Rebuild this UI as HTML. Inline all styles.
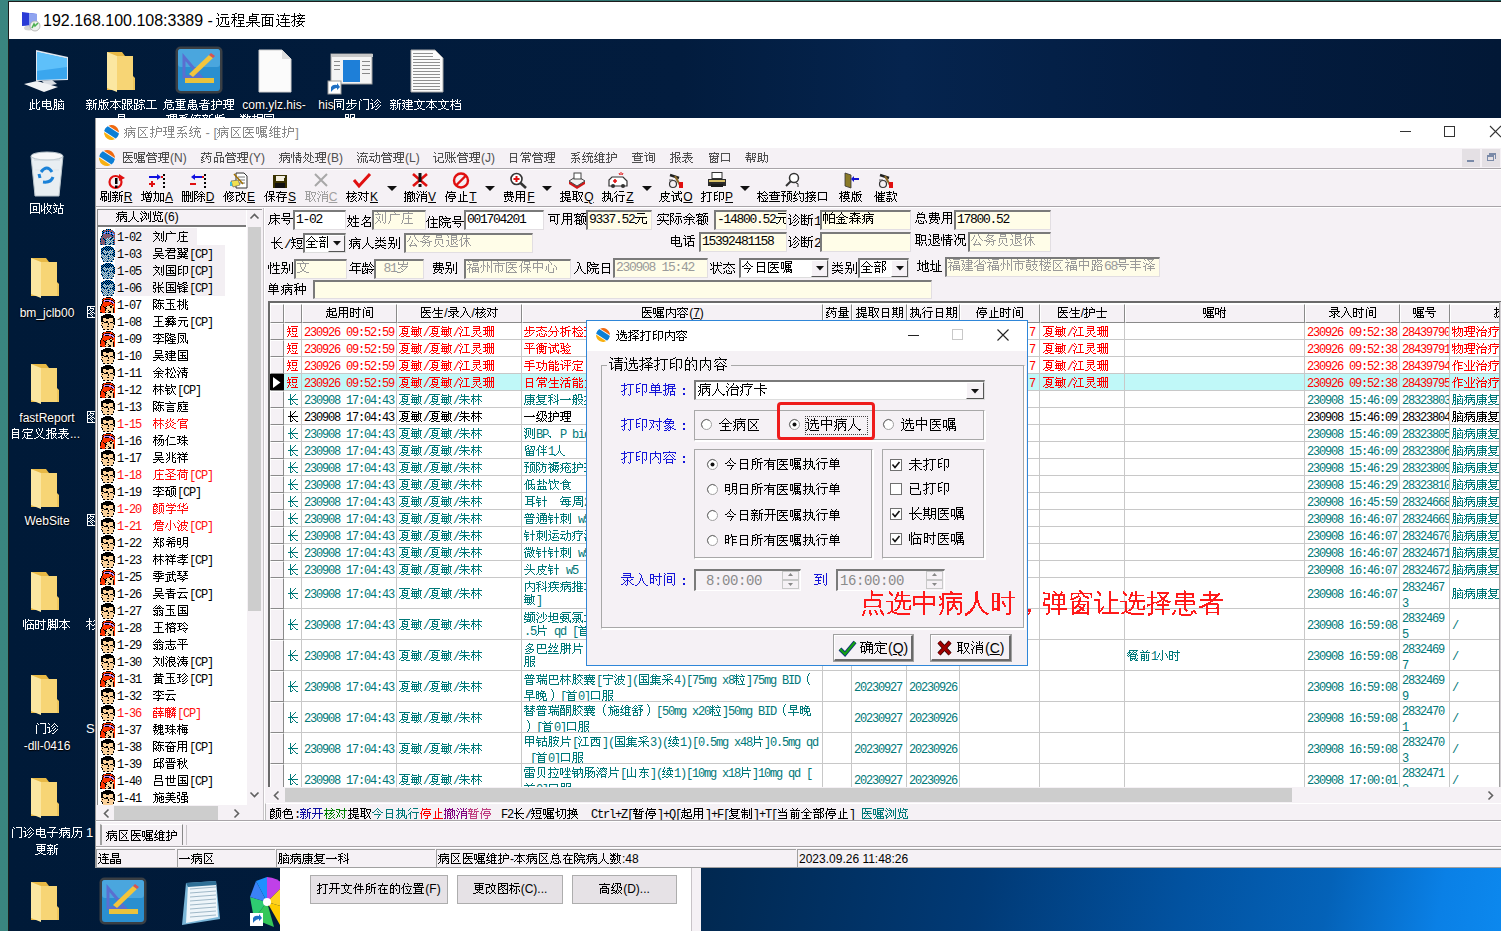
<!DOCTYPE html><html><head><meta charset="utf-8"><style>
html,body{margin:0;padding:0}
body{width:1501px;height:931px;overflow:hidden;position:relative;background:linear-gradient(90deg,#3a8580,#235f5c);font-family:"Liberation Sans",sans-serif;color:#000}
.a{position:absolute;box-sizing:border-box;white-space:nowrap;overflow:hidden}
.c{font-family:"Liberation Sans",sans-serif}
.tx{position:absolute;opacity:0;font-weight:normal;width:0;overflow:hidden}
.g{display:inline-block;overflow:visible;vertical-align:baseline}
.g use{stroke:currentColor;stroke-width:1;fill:none}
.m{font-family:"Liberation Mono",monospace}
.lbl{font-size:12px;line-height:18px}
.inp{background:#fffde8;border-top:2px solid #777;border-left:2px solid #777;border-right:1px solid #e4e0e4;border-bottom:1px solid #e4e0e4;line-height:15px;padding-left:1px;font-size:12px}
.dk{color:#000}
.gr{color:#9a9a9a}
.hd{background:#f5f1f5;border-right:1px solid #9a9a9a;border-bottom:2px solid #777;text-align:center;font-size:12px;line-height:19px}
.cell{border-right:1px solid #c8c8c8;border-bottom:1px solid #c8c8c8;font-size:12px;line-height:16px;padding-left:1px}
.dt{color:#ffffff;font-size:12px;text-align:center;text-shadow:0 0 2px #000,0 1px 1px #000;line-height:16px}
</style></head><body><svg width="0" height="0" style="position:absolute;left:0;top:0"><defs><path id="g0" d="M1 -11.5h1m0 1h1m2 0h7m-10 1h1m1 2h9m-13 1h3m3 0h1m2 0h1m-8 1h1m3 0h1m2 0h1m-8 1h1m3 0h1m2 0h1m-8 1h1m3 0h1m2 0h1m2 0h1m-11 1h1m2 0h1m3 0h1m2 0h1m-11 1h1m2 0h1m3 0h1m2 0h1m-11 1h1m1 0h1m5 0h3m-12 1h1m1 0h1m-4 1h1m3 0h10"/><path id="g1" d="M4 -11.5h2m-5 1h3m3 0h6m-10 1h1m3 0h1m4 0h1m-10 1h1m3 0h1m4 0h1m-13 1h6m1 0h6m-10 1h1m3 0h1m4 0h1m-11 1h3m-3 1h2m1 0h1m1 0h6m-12 1h1m1 0h1m5 0h1m-9 1h1m1 0h1m5 0h1m-10 1h1m2 0h1m3 0h6m-10 1h1m5 0h1m-7 1h1m5 0h1m-7 1h1m1 0h9"/><path id="g2" d="M6 -11.5h1m-1 1h7m-7 1h1m-4 1h8m-8 1h1m6 0h1m-8 1h8m-8 1h1m6 0h1m-8 1h8m-5 1h1m-7 1h14m-10 1h1m1 0h1m2 0h1m-7 1h1m2 0h1m3 0h1m-9 1h1m3 0h1m4 0h1m-12 1h2m4 0h1m5 0h2"/><path id="g3" d="M0 -10.5h13m-8 1h1m-2 1h1m-4 1h11m-11 1h1m2 0h1m3 0h1m2 0h1m-11 1h1m2 0h1m3 0h1m2 0h1m-11 1h1m2 0h5m2 0h1m-11 1h1m2 0h1m3 0h1m2 0h1m-11 1h1m2 0h1m3 0h1m2 0h1m-11 1h1m2 0h5m2 0h1m-11 1h1m2 0h1m3 0h1m2 0h1m-11 1h11m-11 1h1m9 0h1"/><path id="g4" d="M8 -11.5h1m-8 1h1m6 0h1m-7 1h1m1 0h10m-12 1h1m4 0h1m-1 1h1m1 0h1m-4 1h1m2 0h1m-10 1h3m2 0h8m-11 1h1m6 0h1m-8 1h1m6 0h1m-8 1h1m1 0h10m-12 1h1m6 0h1m-8 1h2m5 0h1m-9 1h1m2 0h1m4 0h1m-10 1h1m4 0h9"/><path id="g5" d="M3 -11.5h1m4 0h1m-6 1h1m5 0h1m-7 1h1m2 0h8m-14 1h6m1 0h1m3 0h1m-9 1h1m4 0h1m1 0h1m-8 1h1m2 0h8m-11 1h2m4 0h1m-8 1h2m4 0h1m-8 1h1m1 0h1m1 0h9m-14 1h1m2 0h1m3 0h1m3 0h1m-9 1h1m2 0h2m2 0h1m-8 1h1m4 0h3m-10 1h1m1 0h1m3 0h2m2 0h1m-10 1h1m2 0h2m5 0h1"/><path id="g6" d="M3 -8.5h1m3 0h1m-5 1h1m3 0h1m-5 1h1m3 0h1m2 0h1m-10 1h1m1 0h1m3 0h1m1 0h1m-9 1h1m1 0h3m1 0h2m-8 1h1m1 0h1m3 0h1m-7 1h1m1 0h1m3 0h1m-7 1h1m1 0h1m3 0h1m-7 1h1m1 0h1m3 0h1m2 0h1m-10 1h1m1 0h3m1 0h1m2 0h1m-11 1h3m5 0h3"/><path id="g7" d="M5 -8.5h1m-1 1h1m-5 1h9m-9 1h1m3 0h1m3 0h1m-9 1h9m-9 1h1m3 0h1m3 0h1m-9 1h1m3 0h1m3 0h1m-9 1h9m-5 1h1m4 0h1m-6 1h1m4 0h1m-5 1h5"/><path id="g8" d="M1 -8.5h3m3 0h1m-7 1h1m1 0h1m4 0h1m-8 1h1m1 0h1m1 0h6m-10 1h3m-3 1h1m1 0h1m1 0h1m2 0h1m1 0h1m-10 1h1m1 0h1m1 0h2m1 0h1m1 0h1m-10 1h3m1 0h1m1 0h1m2 0h1m-10 1h1m1 0h1m1 0h2m1 0h1m1 0h1m-10 1h1m1 0h1m1 0h1m4 0h1m-11 1h1m2 0h1m1 0h6m-11 1h1m1 0h2m1 0h1m4 0h1"/><path id="g9" d="M3 -8.5h1m5 0h2m-11 1h6m1 0h2m-8 1h1m3 0h1m1 0h1m-6 1h1m1 0h1m2 0h1m-8 1h6m1 0h4m-8 1h1m3 0h1m1 0h1m-10 1h6m1 0h1m1 0h1m-7 1h1m3 0h1m1 0h1m-9 1h1m1 0h1m1 0h1m1 0h1m1 0h1m-10 1h1m2 0h1m2 0h1m2 0h1m-8 1h2m1 0h1m3 0h1"/><path id="ga" d="M3 -8.5h1m4 0h2m-9 1h1m1 0h1m1 0h3m-7 1h1m1 0h1m1 0h1m-5 1h10m-10 1h1m3 0h2m2 0h1m-9 1h1m3 0h1m1 0h1m1 0h1m-9 1h3m1 0h1m1 0h1m1 0h1m-9 1h1m1 0h1m1 0h1m2 0h1m-8 1h1m1 0h1m1 0h1m2 0h1m-9 1h1m2 0h1m1 0h1m1 0h1m1 0h1m-10 1h1m2 0h2m1 0h1m3 0h1"/><path id="gb" d="M5 -8.5h1m-1 1h1m-6 1h11m-7 1h3m-4 1h1m1 0h1m1 0h1m-5 1h1m1 0h1m1 0h1m-6 1h1m2 0h1m2 0h1m-8 1h1m3 0h1m3 0h1m-10 1h1m2 0h5m2 0h1m-6 1h1m-1 1h1"/><path id="gc" d="M0 -8.5h4m1 0h5m-10 1h1m2 0h1m1 0h1m3 0h1m-10 1h1m2 0h1m1 0h5m-10 1h1m2 0h1m1 0h1m3 0h1m-10 1h4m1 0h5m-8 1h1m2 0h1m1 0h1m-8 1h1m1 0h2m1 0h1m1 0h1m2 0h1m-11 1h1m1 0h1m2 0h1m2 0h2m-10 1h1m1 0h1m2 0h1m2 0h1m-9 1h1m1 0h2m1 0h1m1 0h1m1 0h1m-10 1h2m3 0h2m3 0h1"/><path id="gd" d="M0 -8.5h4m3 0h1m-8 1h1m2 0h1m1 0h6m-11 1h1m2 0h1m1 0h1m4 0h1m-11 1h1m2 0h1m2 0h3m-9 1h4m-2 1h1m2 0h5m-10 1h1m1 0h3m2 0h1m-8 1h1m1 0h1m2 0h1m1 0h1m1 0h1m-10 1h1m1 0h1m2 0h1m1 0h1m2 0h1m-11 1h1m1 0h3m2 0h1m2 0h1m-11 1h3m3 0h2"/><path id="ge" d="M1 -7.5h9m-5 1h1m-1 1h1m-1 1h1m-1 1h1m-1 1h1m-1 1h1m-1 1h1m-6 1h11"/><path id="gf" d="M3 -8.5h1m-1 1h6m-7 1h1m4 0h1m-7 1h10m-9 1h1m-1 1h1m1 0h5m-7 1h1m1 0h1m3 0h1m-7 1h1m1 0h1m3 0h1m-7 1h1m1 0h1m1 0h2m2 0h1m-10 1h1m2 0h1m5 0h1m-11 1h1m4 0h6"/><path id="g10" d="M1 -8.5h9m-5 1h1m-6 1h11m-9 1h1m2 0h1m2 0h1m-7 1h7m-7 1h1m2 0h1m2 0h1m-7 1h7m-4 1h1m-5 1h9m-5 1h1m-6 1h11"/><path id="g11" d="M5 -8.5h1m-4 1h7m-7 1h1m2 0h1m2 0h1m-7 1h7m-4 1h1m-5 1h9m-9 1h1m3 0h1m3 0h1m-9 1h9m-9 1h1m1 0h1m1 0h1m3 0h1m-9 1h1m1 0h1m2 0h1m1 0h1m1 0h1m-11 1h1m3 0h5m1 0h1"/><path id="g12" d="M5 -8.5h1m-4 1h6m1 0h1m-5 1h1m2 0h1m-4 1h1m1 0h1m-8 1h11m-7 1h1m-3 1h7m-9 1h2m1 0h1m4 0h1m-6 1h6m-6 1h1m4 0h1m-6 1h6"/><path id="g13" d="M2 -8.5h1m4 0h1m-6 1h1m5 0h1m-9 1h4m1 0h6m-9 1h1m2 0h1m4 0h1m-9 1h1m2 0h1m4 0h1m-9 1h2m1 0h6m-10 1h2m2 0h1m-6 1h1m1 0h1m2 0h1m-4 1h1m2 0h1m-4 1h1m1 0h1m-5 1h4"/><path id="g14" d="M4 -8.5h7m-11 1h5m2 0h1m2 0h1m-9 1h1m1 0h7m-9 1h1m1 0h1m2 0h1m2 0h1m-9 1h1m1 0h1m2 0h1m2 0h1m-11 1h11m-9 1h1m4 0h1m-6 1h1m2 0h5m-8 1h2m3 0h1m-8 1h2m5 0h1m-4 1h7"/><path id="g15" d="M0 -8.5h10m-10 1h1m8 0h1m-10 1h1m1 0h6m1 0h1m-10 1h1m8 0h1m-10 1h1m2 0h4m2 0h1m-10 1h1m2 0h1m2 0h1m2 0h1m-10 1h1m2 0h1m2 0h1m2 0h1m-10 1h1m2 0h4m2 0h1m-10 1h1m2 0h1m2 0h1m2 0h1m-10 1h1m8 0h1m-10 1h1m7 0h2"/><path id="g16" d="M5 -8.5h1m-4 1h1m2 0h5m-8 1h1m2 0h1m-4 1h1m2 0h1m-6 1h11m-6 1h1m-3 1h1m1 0h1m3 0h1m-8 1h1m2 0h1m2 0h1m-8 1h1m5 0h1m-3 1h2m-7 1h5"/><path id="g17" d="M2 -8.5h1m2 0h6m-8 1h1m6 0h1m-10 1h1m8 0h1m-10 1h1m8 0h1m-10 1h1m8 0h1m-10 1h1m8 0h1m-10 1h1m8 0h1m-10 1h1m8 0h1m-10 1h1m8 0h1m-10 1h1m8 0h1m-10 1h1m6 0h3"/><path id="g18" d="M1 -8.5h1m5 0h1m-6 1h1m3 0h1m1 0h1m-4 1h1m3 0h1m-6 1h1m2 0h1m2 0h1m-11 1h3m3 0h1m-5 1h1m2 0h1m2 0h1m-7 1h1m4 0h1m2 0h1m-9 1h1m1 0h1m1 0h1m2 0h1m-8 1h2m4 0h1m-8 1h2m4 0h1m-3 1h2"/><path id="g19" d="M6 -8.5h1m-7 1h3m1 0h6m-8 1h1m3 0h1m2 0h1m-9 1h1m1 0h8m-11 1h3m3 0h1m2 0h1m-8 1h1m1 0h6m-10 1h1m1 0h1m3 0h1m-6 1h2m1 0h7m-9 1h1m3 0h1m-6 1h1m1 0h1m2 0h1m-7 1h1m3 0h7"/><path id="g1a" d="M4 -8.5h1m0 1h1m-6 1h11m-8 1h1m3 0h1m-5 1h1m3 0h1m-5 1h1m3 0h1m-4 1h1m1 0h1m-3 1h1m1 0h1m-2 1h1m-3 1h2m1 0h2m-8 1h3m5 0h3"/><path id="g1b" d="M2 -8.5h1m4 0h1m-6 1h1m2 0h1m1 0h1m2 0h1m-11 1h5m1 0h2m1 0h1m-8 1h1m4 0h1m-6 1h1m2 0h6m-10 1h3m6 0h1m-10 1h2m1 0h1m5 0h1m-11 1h1m1 0h1m2 0h6m-9 1h1m7 0h1m-9 1h1m7 0h1m-9 1h1m2 0h6"/><path id="g1c" d="M2 -8.5h7m-7 1h1m5 0h1m-7 1h7m-7 1h1m5 0h1m-7 1h7m-7 1h1m5 0h1m-7 1h7m-7 1h1m5 0h1m-9 1h11m-8 1h1m3 0h1m-8 1h3m5 0h3"/><path id="g1d" d="M7 -8.5h3m-9 1h6m-3 1h1m3 0h1m-7 1h6m-3 1h1m-2 1h1m3 0h1m-8 1h9m-5 1h1m3 0h1m-7 1h1m1 0h1m1 0h1m-6 1h1m2 0h1m2 0h1m-8 1h1m2 0h2m3 0h1"/><path id="g1e" d="M2 -8.5h1m4 0h1m-6 1h1m1 0h7m-10 1h1m4 0h1m-6 1h1m1 0h1m1 0h1m3 0h1m-10 1h3m1 0h7m-9 1h1m3 0h1m1 0h1m1 0h1m-10 1h1m4 0h1m1 0h1m-9 1h4m2 0h1m1 0h1m-3 1h1m1 0h1m1 0h1m-9 1h2m1 0h1m2 0h1m1 0h1m-11 1h2m2 0h1m3 0h3"/><path id="g1f" d="M0 -8.5h1m2 0h1m1 0h1m1 0h1m-7 1h1m1 0h2m2 0h1m-8 1h6m1 0h4m-9 1h2m2 0h2m1 0h1m-9 1h1m1 0h2m2 0h1m1 0h1m-10 1h1m2 0h1m1 0h1m1 0h1m1 0h1m-10 1h6m1 0h1m1 0h1m-8 1h1m1 0h1m2 0h1m1 0h1m-9 1h2m1 0h1m3 0h1m-6 1h1m3 0h1m1 0h1m-10 1h3m1 0h3m3 0h1"/><path id="g20" d="M2 -8.5h1m2 0h6m-9 1h1m2 0h1m4 0h1m-11 1h6m4 0h1m-9 1h1m2 0h6m-9 1h1m1 0h2m2 0h1m-7 1h2m1 0h6m-10 1h2m2 0h1m2 0h1m-9 1h1m1 0h1m2 0h6m-9 1h1m1 0h3m3 0h1m-11 1h1m1 0h1m1 0h1m1 0h1m3 0h1m-10 1h1m1 0h1m2 0h5"/><path id="g21" d="M1 -8.5h4m1 0h5m-10 1h1m2 0h1m1 0h1m3 0h1m-10 1h1m2 0h1m1 0h1m3 0h1m-10 1h4m1 0h1m1 0h3m-10 1h1m2 0h1m1 0h1m-6 1h1m2 0h1m1 0h5m-10 1h4m1 0h1m3 0h1m-10 1h1m2 0h1m1 0h1m1 0h2m-9 1h1m2 0h1m1 0h1m2 0h1m-10 1h1m3 0h1m1 0h1m1 0h1m1 0h1m-11 1h1m2 0h2m1 0h2m2 0h1"/><path id="g22" d="M1 -8.5h10m-10 1h1m8 0h1m-10 1h1m8 0h1m-10 1h1m2 0h4m2 0h1m-10 1h1m2 0h1m2 0h1m2 0h1m-10 1h1m2 0h1m2 0h1m2 0h1m-10 1h1m2 0h4m2 0h1m-10 1h1m2 0h1m2 0h1m2 0h1m-10 1h1m8 0h1m-10 1h10m-10 1h1m8 0h1"/><path id="g23" d="M3 -8.5h1m2 0h1m-4 1h1m2 0h1m-7 1h1m2 0h1m2 0h5m-11 1h1m2 0h1m1 0h1m3 0h1m-10 1h1m2 0h2m1 0h1m2 0h1m-10 1h1m2 0h1m2 0h1m2 0h1m-10 1h1m1 0h2m2 0h1m1 0h1m-9 1h2m1 0h1m3 0h1m-8 1h1m2 0h1m3 0h2m-6 1h1m2 0h1m2 0h1m-7 1h1m1 0h1m4 0h1"/><path id="g24" d="M1 -8.5h1m5 0h1m-6 1h1m4 0h1m-8 1h5m2 0h4m-4 1h1m-8 1h1m2 0h1m3 0h1m-7 1h1m1 0h1m1 0h5m-9 1h1m1 0h1m1 0h1m3 0h1m-8 1h1m2 0h1m3 0h1m-8 1h2m1 0h1m3 0h1m-10 1h2m3 0h1m3 0h1m-5 1h5"/><path id="g25" d="M4 -8.5h1m-3 1h7m-7 1h1m5 0h1m-7 1h1m5 0h1m-7 1h7m-7 1h1m5 0h1m-7 1h7m-7 1h1m5 0h1m-7 1h1m5 0h1m-7 1h7m-7 1h1m5 0h1"/><path id="g26" d="M5 -8.5h1m-5 1h10m-10 1h1m8 0h1m-11 1h1m8 0h1m-8 1h8m-5 1h1m-4 1h1m2 0h1m-4 1h1m2 0h4m-7 1h1m2 0h1m-5 1h1m1 0h1m1 0h1m-6 1h1m3 0h7"/><path id="g27" d="M4 -8.5h1m3 0h1m-7 1h1m2 0h1m2 0h1m-7 1h1m2 0h1m2 0h1m-7 1h1m4 0h1m-5 1h1m3 0h1m-5 1h1m2 0h1m-3 1h1m1 0h1m-2 1h1m-2 1h1m1 0h1m-5 1h2m3 0h2m-9 1h2m7 0h2"/><path id="g28" d="M2 -8.5h1m2 0h5m-8 1h1m2 0h1m3 0h1m-10 1h6m3 0h1m-8 1h1m2 0h1m1 0h2m-7 1h1m1 0h2m-4 1h2m1 0h6m-10 1h2m2 0h1m1 0h1m1 0h1m-10 1h1m1 0h1m2 0h1m1 0h1m1 0h1m-8 1h1m2 0h1m2 0h1m-7 1h1m2 0h1m1 0h1m1 0h1m-10 1h3m2 0h2m3 0h1"/><path id="g29" d="M5 -8.5h1m-5 1h9m-5 1h1m-4 1h7m-4 1h1m-6 1h11m-7 1h1m1 0h1m2 0h1m-7 1h1m2 0h1m1 0h1m-7 1h2m3 0h1m-8 1h2m1 0h1m1 0h1m2 0h1m-6 1h2m4 0h2"/><path id="g2a" d="M2 -8.5h1m2 0h1m-6 1h1m1 0h1m2 0h6m-11 1h1m1 0h1m1 0h1m-5 1h1m1 0h2m3 0h1m-8 1h1m1 0h1m5 0h1m-9 1h1m1 0h1m1 0h7m-11 1h1m1 0h1m1 0h1m2 0h1m2 0h1m-11 1h1m1 0h1m1 0h1m2 0h1m2 0h1m-9 1h1m1 0h1m2 0h1m2 0h1m-9 1h1m1 0h7m-9 1h1m1 0h1m5 0h1"/><path id="g2b" d="M8 -8.5h1m-9 1h4m4 0h1m-9 1h1m2 0h8m-11 1h1m2 0h1m4 0h1m-9 1h1m2 0h1m1 0h1m2 0h1m-9 1h4m2 0h1m1 0h1m-9 1h1m2 0h1m2 0h1m1 0h1m-9 1h1m2 0h1m4 0h1m-9 1h1m2 0h1m4 0h1m-9 1h4m4 0h1m-3 1h3"/><path id="g2c" d="M1 -8.5h3m1 0h1m2 0h3m-10 1h1m1 0h1m1 0h1m2 0h1m1 0h1m-10 1h1m1 0h6m1 0h1m-10 1h3m1 0h1m2 0h1m1 0h1m-10 1h1m1 0h1m1 0h1m2 0h1m1 0h1m-10 1h1m1 0h6m1 0h1m-10 1h3m1 0h1m2 0h1m1 0h1m-10 1h1m1 0h2m1 0h1m1 0h1m1 0h1m-10 1h1m1 0h8m-11 1h1m2 0h1m4 0h1m-9 1h1m1 0h2m4 0h1"/><path id="g2d" d="M2 -8.5h7m-2 1h1m-2 1h1m-2 1h1m-1 1h1m-6 1h11m-6 1h1m-1 1h1m-1 1h1m-3 1h1m1 0h1m-2 1h1"/><path id="g2e" d="M6 -8.5h1m-5 1h9m-11 1h1m1 0h1m-2 1h10m-9 1h1m4 0h1m-7 1h2m1 0h7m-11 1h1m1 0h1m1 0h1m2 0h1m2 0h1m-9 1h1m1 0h1m1 0h1m1 0h1m1 0h1m-9 1h1m1 0h2m3 0h2m-10 1h1m2 0h1m5 0h1m-11 1h1m3 0h1m3 0h3"/><path id="g2f" d="M2 -8.5h9m-9 1h1m-1 1h1m3 0h1m-5 1h1m3 0h1m-5 1h1m1 0h7m-9 1h1m3 0h1m3 0h1m-9 1h1m3 0h1m3 0h1m-9 1h1m2 0h1m4 0h1m-10 1h1m3 0h1m4 0h1m-10 1h1m2 0h1m5 0h1m-11 1h1m2 0h1m4 0h2"/><path id="g30" d="M1 -8.5h10m-5 1h1m-5 1h8m-8 1h1m3 0h1m2 0h1m-8 1h8m-8 1h1m3 0h1m2 0h1m-8 1h8m-6 1h1m1 0h1m-2 1h1m-3 1h2m1 0h2m-8 1h3m5 0h3"/><path id="g31" d="M1 -9.5h10m-10 1h1m2 0h1m5 0h1m-10 1h1m2 0h4m2 0h1m-10 1h1m1 0h1m3 0h1m2 0h1m-10 1h2m1 0h1m1 0h1m3 0h1m-10 1h1m3 0h1m4 0h1m-10 1h1m2 0h1m1 0h2m2 0h1m-10 1h3m1 0h1m2 0h3m-10 1h1m2 0h1m1 0h1m3 0h1m-10 1h1m3 0h1m4 0h1m-10 1h1m4 0h1m3 0h1m-10 1h10"/><path id="g32" d="M3 -9.5h1m6 0h1m-8 1h1m5 0h1m-7 1h1m4 0h1m-9 1h6m1 0h1m-5 1h1m6 0h1m-8 1h2m4 0h1m-8 1h2m1 0h1m2 0h1m-8 1h1m1 0h1m2 0h2m3 0h1m-12 1h1m2 0h1m6 0h1m-8 1h1m5 0h1m-7 1h1m4 0h1m-6 1h1m2 0h2"/><path id="g33" d="M2 -8.5h1m-1 1h1m2 0h6m-11 1h5m3 0h1m-7 1h1m5 0h1m-7 1h1m1 0h1m3 0h1m-7 1h2m4 0h1m-8 1h2m5 0h1m-9 1h1m1 0h1m5 0h1m-7 1h1m5 0h1m-7 1h1m5 0h1m-9 1h3m3 0h3"/><path id="g34" d="M1 -8.5h9m-7 1h1m3 0h1m-5 1h1m3 0h1m-5 1h1m3 0h1m-5 1h1m3 0h1m-8 1h11m-8 1h1m3 0h1m-6 1h1m4 0h1m-6 1h1m4 0h1m-7 1h1m5 0h1m-8 1h1m6 0h1"/><path id="g35" d="M3 -8.5h1m3 0h1m-5 1h1m1 0h1m1 0h1m-6 1h1m2 0h1m1 0h1m-6 1h1m1 0h6m-9 1h3m3 0h1m-8 1h1m1 0h1m4 0h1m-6 1h1m1 0h7m-9 1h1m4 0h1m-6 1h1m4 0h1m-6 1h1m4 0h1m-6 1h1m4 0h1"/><path id="g36" d="M3 -8.5h2m4 0h2m-10 1h2m3 0h3m-8 1h1m4 0h1m-6 1h4m1 0h1m-6 1h1m2 0h1m1 0h5m-10 1h1m2 0h1m1 0h1m2 0h1m-9 1h4m1 0h1m2 0h1m-9 1h1m4 0h1m2 0h1m-9 1h1m4 0h1m2 0h1m-9 1h1m3 0h1m3 0h1m-10 1h1m3 0h1m4 0h1"/><path id="g37" d="M5 -8.5h1m-1 1h1m-5 1h10m-7 1h1m-2 1h1m3 0h1m-6 1h2m3 0h1m-7 1h1m1 0h1m1 0h5m-7 1h1m3 0h1m-5 1h1m3 0h1m-5 1h1m3 0h1m-5 1h8"/><path id="g38" d="M3 -8.5h1m3 0h1m-6 1h1m4 0h1m-7 1h4m1 0h5m-10 1h1m2 0h2m4 0h1m-10 1h1m2 0h1m5 0h1m-10 1h4m1 0h1m3 0h1m-10 1h1m2 0h1m2 0h1m2 0h1m-10 1h1m2 0h1m2 0h1m2 0h1m-10 1h1m2 0h1m5 0h1m-10 1h4m5 0h1m-10 1h1m2 0h1m3 0h2"/><path id="g39" d="M3 -8.5h1m2 0h1m-4 1h1m3 0h1m-6 1h1m-1 1h1m1 0h7m-10 1h2m-3 1h1m1 0h1m2 0h1m3 0h1m-8 1h1m3 0h1m2 0h1m-8 1h1m3 0h1m1 0h1m-7 1h1m5 0h1m-7 1h1m4 0h1m-6 1h1m1 0h7"/><path id="g3a" d="M1 -8.5h9m-9 1h1m2 0h1m1 0h1m2 0h1m-9 1h9m-5 1h1m-6 1h11m-9 1h1m5 0h1m-7 1h7m-7 1h1m5 0h1m-7 1h7m-7 1h1m5 0h1m-9 1h11"/><path id="g3b" d="M7 -8.5h1m-8 1h5m2 0h1m-4 1h1m1 0h5m-7 1h2m3 0h1m-9 1h4m1 0h1m2 0h1m-9 1h1m4 0h1m2 0h1m-9 1h1m4 0h1m2 0h1m-9 1h1m5 0h2m-8 1h1m1 0h1m3 0h2m-8 1h2m3 0h1m2 0h1m-9 1h1m2 0h2m4 0h1"/><path id="g3c" d="M1 -8.5h10m-10 1h1m2 0h1m5 0h1m-10 1h1m2 0h5m1 0h1m-10 1h1m1 0h2m2 0h1m2 0h1m-10 1h2m2 0h2m3 0h1m-10 1h1m2 0h1m2 0h1m2 0h1m-10 1h3m1 0h1m2 0h3m-10 1h1m4 0h1m3 0h1m-10 1h1m3 0h1m4 0h1m-10 1h1m4 0h1m3 0h1m-10 1h10"/><path id="g3d" d="M2 -8.5h1m2 0h5m-8 1h1m-3 1h5m-3 1h1m1 0h7m-9 1h1m4 0h1m-7 1h3m3 0h1m-7 1h2m2 0h1m1 0h1m1 0h1m-10 1h1m1 0h1m2 0h1m1 0h1m2 0h1m-9 1h1m1 0h1m2 0h1m2 0h1m-9 1h1m4 0h1m-6 1h1m3 0h2"/><path id="g3e" d="M5 -8.5h1m-6 1h11m-8 2h5m-5 1h1m3 0h1m-7 1h9m-9 1h1m7 0h1m-9 1h1m1 0h5m1 0h1m-9 1h1m1 0h1m3 0h1m1 0h1m-9 1h1m1 0h5m1 0h1m-9 1h1m6 0h2"/><path id="g3f" d="M2 -8.5h1m1 0h6m-8 1h1m3 0h1m2 0h1m-9 1h1m2 0h1m1 0h1m2 0h1m-9 1h1m1 0h1m2 0h1m1 0h1m-9 1h3m3 0h1m1 0h3m-9 1h1m3 0h1m3 0h1m-10 1h1m4 0h1m3 0h1m-11 1h4m1 0h1m1 0h1m1 0h1m-6 1h2m2 0h1m-7 1h2m1 0h1m1 0h1m1 0h1m-10 1h2m2 0h1m1 0h1m3 0h1"/><path id="g40" d="M6 -9.5h1m0 1h1m-6 1h10m-12 1h1m1 0h1m-2 1h2m1 0h7m-9 1h1m4 0h1m-7 1h2m1 0h7m-11 1h1m1 0h1m1 0h1m2 0h1m2 0h1m-9 1h1m1 0h1m1 0h1m1 0h1m1 0h1m-9 1h1m1 0h2m3 0h2m-10 1h1m2 0h1m5 0h1m-11 1h1m3 0h1m4 0h2"/><path id="g41" d="M1 -8.5h10m-10 1h1m-1 1h1m1 0h1m4 0h1m-8 1h1m2 0h1m2 0h1m-7 1h1m3 0h2m-6 1h1m4 0h1m-6 1h1m3 0h1m1 0h1m-7 1h1m2 0h1m3 0h1m-8 1h1m1 0h1m4 0h1m-8 1h1m-1 1h10"/><path id="g42" d="M2 -9.5h1m4 0h1m-6 1h1m5 0h1m-7 1h1m3 0h6m-12 1h5m1 0h1m4 0h1m-10 1h1m3 0h1m4 0h1m-10 1h1m3 0h6m-10 1h2m2 0h1m-7 1h3m3 0h1m-5 1h1m3 0h1m-5 1h1m2 0h1m-6 1h1m1 0h1m2 0h1m-5 1h1m2 0h1"/><path id="g43" d="M5 -9.5h6m-11 1h4m1 0h1m2 0h1m1 0h1m-9 1h1m2 0h1m2 0h1m1 0h1m-9 1h1m2 0h6m-9 1h1m2 0h1m2 0h1m1 0h1m-11 1h4m1 0h6m-9 1h1m5 0h1m-7 1h1m5 0h1m-7 1h2m1 0h6m-11 1h2m6 0h1m-1 1h1m-5 1h8"/><path id="g44" d="M7 -9.5h4m-10 1h6m-2 1h1m-2 1h1m3 0h1m-7 1h6m-3 1h1m-2 1h1m4 0h1m-9 1h10m-5 1h1m3 0h1m-8 1h1m2 0h1m1 0h1m-7 1h1m3 0h1m2 0h1m-9 1h1m3 0h2m3 0h1"/><path id="g45" d="M2 -9.5h1m4 0h1m-6 1h1m5 0h1m-8 1h1m2 0h8m-11 1h1m1 0h1m3 0h1m-8 1h3m3 0h1m2 0h1m-8 1h1m2 0h6m-10 1h1m1 0h1m2 0h1m1 0h1m1 0h1m-11 1h3m3 0h1m1 0h1m-3 1h1m1 0h1m-7 1h2m1 0h1m2 0h1m2 0h1m-12 1h2m3 0h1m2 0h1m2 0h1m-8 1h1m4 0h3"/><path id="g46" d="M0 -8.5h11m-11 1h1m3 0h1m-5 1h1m2 0h7m-10 1h1m1 0h1m3 0h1m-7 1h1m5 0h1m-7 1h1m1 0h9m-11 1h1m4 0h2m-7 1h1m3 0h1m2 0h1m-8 1h1m2 0h1m4 0h1m-9 1h1m1 0h1m6 0h1m-10 1h11"/><path id="g47" d="M4 -9.5h7m-11 1h3m1 0h1m5 0h1m-11 1h1m1 0h1m1 0h7m-11 1h1m1 0h1m1 0h1m2 0h1m-8 1h1m1 0h1m1 0h6m-10 1h1m1 0h1m1 0h2m1 0h1m1 0h1m-10 1h1m1 0h1m1 0h6m-10 1h3m1 0h1m2 0h1m-4 1h7m-8 1h1m1 0h1m1 0h1m1 0h2m-8 1h1m1 0h4m1 0h1m-9 1h1m2 0h1m3 0h2"/><path id="g48" d="M2 -9.5h1m3 0h1m1 0h1m-7 1h1m2 0h1m2 0h1m-8 1h1m2 0h8m-11 1h1m1 0h1m1 0h1m2 0h1m-9 1h3m2 0h1m2 0h1m-7 1h1m2 0h6m-10 1h1m1 0h1m1 0h1m2 0h1m-9 1h3m2 0h1m2 0h1m-4 1h6m-9 1h2m1 0h1m2 0h1m-9 1h2m3 0h1m2 0h1m-4 1h7"/><path id="g49" d="M1 -8.5h10m-10 1h1m2 0h1m-4 1h1m2 0h1m-4 1h1m2 0h6m-9 1h1m1 0h1m2 0h1m-6 1h10m-10 1h1m4 0h1m-6 1h1m3 0h1m1 0h1m-7 1h1m2 0h1m3 0h1m-8 1h1m1 0h1m5 0h1m-9 1h10"/><path id="g4a" d="M4 -8.5h7m-11 1h3m1 0h1m5 0h1m-11 1h1m1 0h1m1 0h7m-11 1h1m1 0h1m1 0h1m2 0h1m-8 1h1m1 0h1m1 0h6m-10 1h1m1 0h1m1 0h2m1 0h1m1 0h1m-10 1h3m1 0h6m-7 1h1m3 0h1m-5 1h8m-9 1h1m1 0h1m2 0h1m2 0h1m-10 1h1m2 0h7"/><path id="g4b" d="M2 -8.5h1m4 0h1m-6 1h4m1 0h4m-10 1h1m1 0h1m2 0h1m1 0h1m-9 1h11m-11 1h1m9 0h1m-9 1h7m-7 1h1m5 0h1m-7 1h8m-8 1h1m6 0h1m-8 1h1m6 0h1m-8 1h8"/><path id="g4c" d="M3 -8.5h1m3 0h1m-8 1h11m-8 1h1m3 0h1m-6 1h1m2 0h1m-5 1h1m3 0h5m-10 1h3m2 0h1m3 0h1m-9 1h1m2 0h1m1 0h1m2 0h1m-10 1h1m1 0h1m4 0h1m1 0h1m-10 1h2m7 0h1m-8 1h2m5 0h1m-10 1h2m5 0h2"/><path id="g4d" d="M3 -8.5h6m-6 1h1m4 0h1m-6 1h1m4 0h1m-6 1h6m-8 2h4m2 0h4m-10 1h1m2 0h1m2 0h1m2 0h1m-10 1h1m2 0h1m2 0h1m2 0h1m-10 1h1m2 0h1m2 0h1m2 0h1m-10 1h4m2 0h4m-10 1h1m2 0h1m2 0h1m2 0h1"/><path id="g4e" d="M2 -8.5h1m4 0h1m-6 1h1m2 0h5m-10 1h1m1 0h1m4 0h1m-8 1h1m1 0h2m1 0h5m-10 1h1m1 0h1m4 0h1m-8 1h1m1 0h1m1 0h7m-9 1h1m2 0h1m3 0h1m-8 1h1m2 0h3m1 0h1m-8 1h1m2 0h1m1 0h3m-8 1h1m2 0h1m3 0h1m-8 1h1m2 0h1m2 0h2"/><path id="g4f" d="M2 -8.5h1m4 0h1m-6 1h1m4 0h1m-6 1h4m1 0h1m-6 1h1m2 0h1m1 0h2m-8 1h1m3 0h1m1 0h1m1 0h1m-10 1h1m1 0h1m1 0h1m2 0h1m2 0h1m-9 1h1m1 0h1m2 0h1m-5 1h1m3 0h1m-6 1h1m1 0h1m2 0h1m-7 1h1m3 0h2m-7 1h1m6 0h4"/><path id="g50" d="M0 -8.5h1m5 0h1m-6 1h1m1 0h8m-6 1h1m-6 1h1m3 0h1m3 0h1m-8 1h1m1 0h7m-8 1h1m6 0h1m-8 1h1m1 0h1m1 0h1m1 0h1m-9 1h2m2 0h1m1 0h1m1 0h1m-8 1h1m2 0h1m1 0h1m1 0h1m1 0h1m-10 1h1m2 0h1m1 0h1m1 0h1m1 0h1m-10 1h1m1 0h1m2 0h1m2 0h2"/><path id="g51" d="M7 -8.5h1m-7 1h4m2 0h1m-1 1h1m-2 1h5m-11 1h6m1 0h1m2 0h1m-9 1h1m4 0h1m2 0h1m-9 1h1m4 0h1m2 0h1m-10 1h1m2 0h1m2 0h1m2 0h1m-11 1h5m1 0h1m3 0h1m-7 1h1m1 0h1m3 0h1m-6 1h1m2 0h2"/><path id="g52" d="M1 -8.5h1m0 1h1m2 0h5m-1 1h1m-1 1h1m-10 1h3m6 0h1m-8 1h1m2 0h5m-8 1h1m2 0h1m-4 1h1m2 0h1m-4 1h1m1 0h2m4 0h1m-9 1h2m1 0h1m4 0h1m-9 1h1m3 0h5"/><path id="g53" d="M0 -8.5h5m1 0h1m2 0h1m-10 1h1m3 0h1m1 0h1m2 0h1m-10 1h1m1 0h1m1 0h1m1 0h1m1 0h1m-9 1h1m1 0h1m1 0h1m1 0h2m-8 1h1m1 0h1m1 0h1m1 0h1m-7 1h1m1 0h1m1 0h7m-11 1h1m1 0h1m1 0h1m1 0h1m1 0h1m-7 1h1m3 0h1m1 0h1m-8 1h1m1 0h1m2 0h1m2 0h1m-9 1h1m2 0h1m1 0h2m1 0h1m-10 1h1m3 0h1m1 0h1m3 0h1"/><path id="g54" d="M2 -7.5h7m-7 1h1m5 0h1m-7 1h1m5 0h1m-7 1h1m5 0h1m-7 1h7m-7 1h1m5 0h1m-7 1h1m5 0h1m-7 1h1m5 0h1m-7 1h7m-7 1h1m5 0h1"/><path id="g55" d="M2 -8.5h1m2 0h1m2 0h1m-8 1h10m-10 1h1m8 0h1m-11 1h1m2 0h6m1 0h1m-8 1h1m4 0h1m-6 1h6m-4 1h1m-4 1h8m-8 1h1m2 0h1m3 0h1m-8 1h1m2 0h1m2 0h2m-5 1h1"/><path id="g56" d="M2 -8.5h1m3 0h2m-6 1h1m2 0h1m2 0h1m-8 1h1m2 0h7m-10 1h1m1 0h1m1 0h1m2 0h1m-9 1h3m2 0h5m-8 1h1m2 0h1m2 0h1m-8 1h1m3 0h1m2 0h1m-9 1h4m1 0h5m-6 1h2m2 0h1m-7 1h2m1 0h1m2 0h1m-9 1h2m3 0h6"/><path id="g57" d="M5 -8.5h1m-6 1h11m-8 1h1m1 0h1m1 0h1m-6 1h1m2 0h1m2 0h1m-9 1h11m-9 1h1m5 0h1m-7 1h7m-7 1h1m5 0h1m-7 1h7m-9 2h11"/><path id="g58" d="M1 -8.5h1m3 0h1m-4 1h1m2 0h6m-7 1h1m5 0h1m-11 1h4m1 0h4m1 0h1m-9 1h1m2 0h1m2 0h1m1 0h1m-9 1h1m2 0h4m1 0h1m-9 1h1m2 0h1m2 0h1m1 0h1m-9 1h1m2 0h1m2 0h1m1 0h1m-9 1h2m1 0h4m1 0h1m-9 1h1m7 0h1m-3 1h2"/><path id="g59" d="M6 -8.5h1m-6 1h10m-10 1h1m1 0h1m4 0h1m1 0h1m-9 1h1m2 0h1m3 0h1m-9 1h10m-9 1h1m2 0h1m3 0h1m-8 1h1m1 0h6m-8 1h3m2 0h1m1 0h1m-8 1h1m2 0h2m2 0h1m-8 1h1m1 0h1m2 0h1m1 0h1m-8 1h8"/><path id="g5a" d="M1 -7.5h9m-9 1h1m7 0h1m-9 1h1m7 0h1m-9 1h1m7 0h1m-9 1h1m7 0h1m-9 1h1m7 0h1m-9 1h1m7 0h1m-9 1h9m-9 1h1m7 0h1"/><path id="g5b" d="M3 -8.5h1m-3 1h5m1 0h4m-8 1h1m3 0h1m2 0h1m-10 1h5m1 0h1m1 0h1m-7 1h1m3 0h1m2 0h1m-11 1h6m1 0h4m-9 1h1m2 0h1m1 0h1m-7 1h9m-8 1h1m2 0h1m3 0h1m-8 1h1m2 0h1m2 0h2m-5 1h1"/><path id="g5c" d="M7 -8.5h1m-7 1h4m2 0h1m-7 1h1m2 0h1m2 0h1m-7 1h1m2 0h1m1 0h5m-10 1h4m2 0h1m2 0h1m-10 1h1m2 0h1m2 0h1m2 0h1m-10 1h4m2 0h1m2 0h1m-10 1h1m2 0h1m2 0h1m2 0h1m-10 1h1m1 0h4m3 0h1m-11 1h3m3 0h1m1 0h1m1 0h1m-6 1h1m3 0h1"/><path id="g5d" d="M1 -8.5h6m3 0h1m-10 1h1m4 0h1m3 0h1m-10 1h6m1 0h1m1 0h1m-10 1h1m2 0h1m3 0h1m1 0h1m-10 1h1m2 0h1m3 0h1m1 0h1m-10 1h6m1 0h1m1 0h1m-10 1h2m1 0h1m1 0h1m1 0h1m1 0h1m-11 1h1m1 0h1m1 0h1m1 0h1m1 0h1m1 0h1m-11 1h1m1 0h1m1 0h1m1 0h1m1 0h1m1 0h1m-9 1h1m1 0h3m3 0h1m-7 1h1m3 0h3"/><path id="g5e" d="M2 -8.5h1m2 0h1m3 0h1m-8 1h1m3 0h1m1 0h1m-7 1h1m1 0h7m-11 1h5m2 0h1m2 0h1m-9 1h1m1 0h1m1 0h3m1 0h1m-9 1h1m1 0h1m2 0h1m2 0h1m-9 1h1m1 0h7m-9 1h1m2 0h1m3 0h1m-8 1h2m1 0h5m-10 1h2m3 0h1m3 0h1m-5 1h5"/><path id="g5f" d="M2 -8.5h1m-1 1h1m-3 1h6m1 0h4m-9 1h1m2 0h1m1 0h1m2 0h1m-9 1h1m2 0h1m1 0h1m2 0h1m-9 1h1m2 0h1m1 0h1m2 0h1m-9 1h1m2 0h1m1 0h1m2 0h1m-9 1h1m2 0h1m1 0h1m2 0h1m-10 1h1m3 0h1m1 0h1m2 0h1m-10 1h1m1 0h1m1 0h1m1 0h4m-11 1h1m3 0h1m2 0h1m2 0h1"/><path id="g60" d="M0 -8.5h3m1 0h3m3 0h1m-11 1h1m1 0h1m1 0h1m1 0h1m1 0h1m1 0h1m-11 1h1m1 0h1m1 0h1m1 0h1m1 0h1m1 0h1m-11 1h1m1 0h1m1 0h1m1 0h1m1 0h1m1 0h1m-11 1h9m1 0h1m-11 1h1m1 0h1m1 0h1m1 0h1m1 0h1m1 0h1m-11 1h1m1 0h1m1 0h1m1 0h1m1 0h1m1 0h1m-11 1h1m1 0h1m1 0h1m1 0h1m1 0h1m1 0h1m-11 1h1m1 0h1m1 0h1m1 0h1m3 0h1m-11 1h1m1 0h1m1 0h1m1 0h1m3 0h1m-11 1h1m1 0h2m1 0h2m1 0h3"/><path id="g61" d="M0 -8.5h4m3 0h1m-8 1h1m2 0h1m2 0h1m1 0h1m-9 1h1m1 0h1m2 0h1m3 0h1m-10 1h2m2 0h1m1 0h3m1 0h1m-11 1h1m1 0h1m4 0h1m-8 1h1m2 0h8m-11 1h1m2 0h1m3 0h1m-8 1h3m2 0h1m1 0h1m1 0h1m-10 1h1m3 0h1m2 0h1m2 0h1m-11 1h1m2 0h1m3 0h1m2 0h1m-11 1h1m5 0h2"/><path id="g62" d="M3 -8.5h1m2 0h1m-4 1h1m2 0h5m-9 1h1m1 0h2m1 0h1m1 0h1m-8 1h1m1 0h1m3 0h1m-8 1h2m1 0h1m1 0h2m1 0h1m-10 1h1m1 0h1m1 0h2m2 0h1m1 0h1m-9 1h1m1 0h1m2 0h1m1 0h1m-8 1h1m1 0h1m1 0h1m1 0h1m-7 1h1m1 0h1m2 0h1m2 0h1m-9 1h1m5 0h2m-8 1h1m2 0h3"/><path id="g63" d="M3 -8.5h1m1 0h5m-7 1h1m1 0h1m3 0h1m-8 1h1m2 0h1m3 0h1m-8 1h1m2 0h5m-9 1h2m4 0h1m-8 1h1m1 0h1m1 0h7m-9 1h1m4 0h1m-6 1h1m3 0h3m-7 1h1m2 0h1m1 0h1m1 0h1m-8 1h1m1 0h1m2 0h1m2 0h1m-9 1h1m4 0h1"/><path id="g64" d="M4 -8.5h1m-5 1h11m-8 1h1m-2 1h1m1 0h6m-8 1h1m5 0h1m-8 1h2m4 0h1m-8 1h1m1 0h9m-9 1h1m4 0h1m-6 1h1m4 0h1m-6 1h1m4 0h1m-6 1h1m2 0h3"/><path id="g65" d="M0 -8.5h6m-5 1h1m2 0h1m1 0h5m-10 1h1m2 0h1m1 0h1m3 0h1m-10 1h4m1 0h1m3 0h1m-10 1h1m2 0h1m2 0h1m1 0h1m-9 1h4m2 0h1m1 0h1m-9 1h1m2 0h1m3 0h1m-8 1h1m2 0h2m2 0h1m-9 1h5m2 0h1m1 0h1m-6 1h1m1 0h1m2 0h1m-6 1h2m4 0h1"/><path id="g66" d="M1 -8.5h1m2 0h1m2 0h1m2 0h1m-9 1h1m2 0h1m1 0h1m1 0h1m-10 1h1m6 0h1m-7 1h1m1 0h1m1 0h6m-8 1h1m1 0h1m4 0h1m-9 1h1m2 0h6m-9 1h1m2 0h1m4 0h1m-11 1h2m3 0h6m-10 1h1m3 0h1m4 0h1m-10 1h1m3 0h1m4 0h1m-10 1h1m3 0h1m3 0h2"/><path id="g67" d="M2 -8.5h1m4 0h1m-6 1h1m5 0h1m-9 1h11m-9 1h1m4 0h1m-6 1h1m3 0h1m2 0h1m-9 1h3m1 0h4m-8 1h2m1 0h1m2 0h1m2 0h1m-11 1h1m1 0h1m3 0h1m2 0h1m-8 1h1m2 0h1m2 0h1m-7 1h1m4 0h1m1 0h1m-8 1h1m1 0h3m3 0h1"/><path id="g68" d="M8 -8.5h1m-9 1h4m4 0h1m-6 1h8m-11 1h1m2 0h1m4 0h1m-8 1h1m1 0h1m4 0h1m-7 1h1m2 0h1m2 0h1m-7 1h1m3 0h1m1 0h1m-8 1h1m1 0h1m4 0h1m-8 1h1m1 0h1m4 0h1m-9 1h1m5 0h1m1 0h1m-2 1h1"/><path id="g69" d="M1 -8.5h1m3 0h1m2 0h1m-8 1h1m1 0h6m-9 1h3m1 0h1m1 0h1m1 0h3m-10 1h1m1 0h3m1 0h2m1 0h1m-10 1h1m1 0h1m2 0h1m1 0h1m1 0h1m-10 1h1m1 0h4m1 0h1m1 0h1m-11 1h2m1 0h1m2 0h1m1 0h1m1 0h1m-10 1h1m1 0h4m1 0h1m1 0h1m-10 1h1m1 0h1m2 0h1m2 0h1m-9 1h1m1 0h1m2 0h1m1 0h1m1 0h1m-11 1h2m1 0h1m1 0h3m2 0h1"/><path id="g6a" d="M2 -8.5h1m3 0h1m-5 1h9m-9 1h1m-2 1h1m2 0h6m-9 1h1m2 0h1m4 0h1m-10 1h2m1 0h8m-10 1h1m1 0h1m6 0h1m-10 1h1m2 0h6m-9 1h1m5 0h1m-7 1h1m5 0h1m-7 1h1m3 0h3"/><path id="g6b" d="M6 -8.5h1m-1 1h1m-1 1h1m-4 1h1m2 0h1m-4 1h1m2 0h4m-7 1h1m2 0h1m-4 1h1m2 0h1m-4 1h1m2 0h1m-4 1h1m2 0h1m-4 1h1m2 0h1m-6 1h10"/><path id="g6c" d="M4 -8.5h1m2 0h1m-7 1h9m-6 1h1m2 0h1m1 0h1m-9 1h9m-9 1h1m2 0h1m2 0h1m-7 1h10m-9 1h1m5 0h1m1 0h1m-9 1h1m2 0h1m2 0h1m-7 1h1m2 0h1m2 0h1m-5 1h1m1 0h2m-7 1h3m4 0h2"/><path id="g6d" d="M1 -8.5h9m-9 1h1m3 0h1m3 0h1m-9 1h1m3 0h1m3 0h1m-9 1h9m-9 1h1m3 0h1m3 0h1m-9 1h1m3 0h1m3 0h1m-9 1h9m-9 1h1m3 0h1m3 0h1m-9 1h1m3 0h1m3 0h1m-10 1h1m4 0h1m3 0h1m-10 1h1m4 0h1m2 0h2"/><path id="g6e" d="M2 -8.5h1m2 0h5m-8 1h1m2 0h1m3 0h1m-10 1h10m-8 1h1m2 0h1m3 0h1m-8 1h1m2 0h5m-8 1h2m-3 1h2m1 0h7m-11 1h1m1 0h1m2 0h1m1 0h1m-6 1h1m2 0h1m1 0h4m-9 1h1m1 0h1m1 0h2m-8 1h4m3 0h4"/><path id="g6f" d="M2 -8.5h1m3 0h1m-5 1h1m3 0h1m-7 1h9m-7 1h1m3 0h1m1 0h1m-7 1h1m1 0h1m1 0h1m1 0h1m-7 1h2m1 0h2m1 0h1m-8 1h2m3 0h1m1 0h1m-9 1h1m1 0h1m2 0h4m1 0h1m-9 1h1m2 0h1m2 0h1m1 0h1m-11 1h1m1 0h1m1 0h1m3 0h1m1 0h1m-10 1h1m1 0h1m5 0h2"/><path id="g70" d="M2 -8.5h1m2 0h5m-9 1h1m-2 1h1m2 1h1m-2 1h1m1 0h7m-10 1h2m5 0h1m-9 1h1m1 0h1m5 0h1m-7 1h1m5 0h1m-7 1h1m5 0h1m-7 1h1m5 0h1m-7 1h1m3 0h3"/><path id="g71" d="M6 -8.5h1m-1 1h1m-5 1h9m-9 1h1m3 0h1m2 0h1m-8 1h1m3 0h1m-5 1h7m-7 1h1m1 0h1m3 0h1m-7 1h1m2 0h1m1 0h1m-6 1h1m3 0h1m-6 1h1m3 0h1m1 0h1m-8 1h1m2 0h2m3 0h3"/><path id="g72" d="M1 -8.5h1m5 0h1m1 0h1m-8 1h1m4 0h1m2 0h1m-8 1h8m-4 1h1m-8 1h3m1 0h4m-6 1h1m2 0h1m1 0h1m-6 1h1m2 0h1m1 0h1m-6 1h1m2 0h1m2 0h1m1 0h1m-9 1h1m2 0h2m1 0h1m1 0h1m-9 1h3m4 0h2m-9 1h1m7 0h1"/><path id="g73" d="M4 -8.5h1m-4 1h3m2 0h5m-10 1h1m4 0h1m3 0h1m-10 1h1m4 0h1m3 0h1m-10 1h4m1 0h1m3 0h1m-10 1h1m4 0h1m3 0h1m-10 1h1m4 0h1m3 0h1m-10 1h1m2 0h1m1 0h1m3 0h1m-10 1h3m2 0h1m1 0h2m-9 1h1m4 0h1m-1 1h1"/><path id="g74" d="M2 -8.5h1m4 0h1m-6 1h1m3 0h1m1 0h1m-9 1h6m3 0h1m-8 1h1m1 0h1m5 0h1m-9 1h1m2 0h5m-9 1h3m-3 1h2m1 0h1m2 0h1m2 0h1m-11 1h1m1 0h1m2 0h1m2 0h1m1 0h1m-9 1h1m3 0h1m2 0h1m-8 1h1m3 0h1m1 0h1m-7 1h1m1 0h7"/><path id="g75" d="M0 -8.5h5m1 0h5m-8 1h1m4 0h1m-8 1h2m3 0h5m-9 1h1m3 0h1m3 0h1m-11 1h5m1 0h1m1 0h1m1 0h1m-9 1h1m1 0h1m1 0h1m1 0h1m1 0h1m-9 1h1m3 0h1m1 0h1m1 0h1m-9 1h1m3 0h1m1 0h1m1 0h1m-9 1h1m3 0h1m1 0h1m1 0h1m-9 1h1m4 0h1m1 0h1m-9 1h2m2 0h2m3 0h1"/><path id="g76" d="M2 -8.5h1m3 0h1m-5 1h1m3 0h1m-6 1h1m2 0h1m1 0h5m-10 1h1m1 0h1m1 0h1m4 0h1m-11 1h3m7 0h1m-9 1h1m3 0h1m3 0h1m-10 1h1m5 0h1m2 0h1m-11 1h4m3 0h1m2 0h1m-7 1h1m5 0h1m-9 1h2m3 0h1m2 0h1m-11 1h2m6 0h2"/><path id="g77" d="M2 -8.5h1m4 0h1m-6 1h1m1 0h7m-11 1h4m1 0h1m3 0h1m-8 1h1m3 0h1m1 0h1m-7 1h1m1 0h7m-9 1h2m3 0h1m-7 1h2m1 0h7m-11 1h1m1 0h1m3 0h1m2 0h1m-8 1h1m2 0h2m1 0h1m-7 1h1m4 0h1m1 0h1m-10 1h3m1 0h3m3 0h1"/><path id="g78" d="M2 -8.5h1m3 0h1m1 0h1m-7 1h1m1 0h7m-11 1h4m2 0h1m1 0h1m-7 1h1m2 0h5m-8 1h2m1 0h1m3 0h1m-9 1h2m1 0h6m-9 1h2m2 0h1m3 0h1m-10 1h1m1 0h1m1 0h7m-9 1h1m4 0h1m-6 1h1m3 0h1m1 0h1m-7 1h1m1 0h2m3 0h2"/><path id="g79" d="M2 -8.5h1m4 0h1m-6 1h1m1 0h1m2 0h1m2 0h1m-9 1h1m1 0h7m-9 1h1m2 0h1m1 0h1m-7 1h2m1 0h7m-11 1h1m1 0h1m1 0h1m2 0h1m-6 1h8m-8 1h1m1 0h1m2 0h1m-6 1h1m1 0h6m-8 1h1m1 0h1m2 0h1m-6 1h1m1 0h7"/><path id="g7a" d="M3 -8.5h1m3 0h1m-8 1h6m1 0h1m-5 1h1m3 0h4m-10 1h4m1 0h1m3 0h1m-3 1h1m1 0h1m-10 1h4m3 0h1m-1 1h1m-9 1h6m2 0h1m-8 1h1m1 0h1m1 0h1m1 0h1m1 0h1m-10 1h1m2 0h1m2 0h1m2 0h1m-9 1h3m1 0h1m4 0h1"/><path id="g7b" d="M5 -8.5h1m-1 1h1m-1 1h1m-1 1h1m-1 1h1m-1 1h1m-2 1h1m1 0h1m-3 1h1m1 0h1m-4 1h1m3 0h1m-6 1h1m5 0h1m-9 1h2m7 0h2"/><path id="g7c" d="M1 -8.5h1m2 0h1m5 0h1m-9 1h1m2 0h1m4 0h1m-11 1h1m2 0h4m1 0h1m1 0h1m-10 1h1m4 0h1m1 0h1m1 0h1m-7 1h1m1 0h1m1 0h1m1 0h1m-9 1h1m2 0h1m2 0h1m1 0h1m-9 1h1m2 0h1m2 0h1m1 0h1m-11 1h2m2 0h1m1 0h1m1 0h1m1 0h1m-10 1h1m1 0h1m2 0h1m3 0h1m-10 1h2m7 0h1m-10 1h1m7 0h2"/><path id="g7d" d="M3 -8.5h1m2 0h1m-6 1h1m1 0h1m2 0h5m-10 1h1m1 0h1m1 0h1m2 0h1m-8 1h1m1 0h1m5 0h1m-8 1h7m-7 1h1m5 0h1m-7 1h1m2 0h1m2 0h1m-7 1h1m2 0h1m2 0h1m-7 1h1m2 0h1m2 0h1m1 0h1m-8 1h2m1 0h1m3 0h1m-11 1h3m3 0h5"/><path id="g7e" d="M2 -8.5h1m7 0h1m-8 1h1m6 0h1m-11 1h7m1 0h1m1 0h1m-6 1h1m2 0h1m1 0h1m-9 1h1m2 0h1m2 0h1m1 0h1m-8 1h2m3 0h1m1 0h1m-7 1h1m3 0h1m1 0h1m-8 1h1m1 0h1m2 0h1m1 0h1m-9 1h1m3 0h1m3 0h1m-10 1h1m4 0h1m1 0h1m1 0h1m-11 1h1m8 0h1"/><path id="g7f" d="M5 -8.5h1m0 1h1m-6 1h10m-10 1h1m-1 1h1m-1 1h1m-1 1h1m-1 1h1m-1 1h1m-2 1h1m-1 1h1"/><path id="g80" d="M6 -8.5h1m-5 1h9m-9 1h1m-1 1h1m3 0h1m-5 1h1m3 0h1m-5 1h1m1 0h6m-8 1h1m3 0h1m-5 1h1m3 0h1m-5 1h1m3 0h1m-6 1h1m4 0h1m-7 1h1m2 0h8"/><path id="g81" d="M2 -8.5h7m-7 1h1m5 0h1m-7 1h1m5 0h1m-7 1h7m-7 2h8m-5 1h1m-6 1h11m-7 1h1m1 0h1m-4 1h1m3 0h1m-8 1h3m5 0h3"/><path id="g82" d="M2 -8.5h8m-5 1h1m3 0h1m-10 1h11m-7 1h1m4 0h1m-8 1h8m-7 1h1m-2 1h1m-2 1h1m1 0h7m-10 1h1m2 0h1m5 0h1m-7 1h1m5 0h1m-7 1h7"/><path id="g83" d="M0 -8.5h5m1 0h5m-10 1h1m2 0h1m2 0h1m2 0h1m-9 1h3m3 0h3m-10 1h1m2 0h1m2 0h1m2 0h1m-10 1h9m-8 1h1m2 0h1m2 0h1m-8 1h9m-6 1h1m2 0h1m-8 1h11m-8 1h2m1 0h2m-8 1h3m5 0h3"/><path id="g84" d="M1 -8.5h10m-10 1h1m8 0h1m-10 1h1m1 0h6m1 0h1m-10 1h1m3 0h1m4 0h1m-10 1h1m3 0h1m4 0h1m-10 1h1m1 0h6m1 0h1m-10 1h1m3 0h1m1 0h1m2 0h1m-10 1h1m3 0h1m2 0h1m1 0h1m-10 1h10m-10 1h1m8 0h1m-10 1h10"/><path id="g85" d="M0 -8.5h3m2 0h1m3 0h1m-8 1h1m2 0h1m3 0h1m-8 1h1m2 0h1m2 0h1m-9 1h3m2 0h3m-8 1h1m4 0h1m-6 1h1m2 0h8m-11 1h3m2 0h1m1 0h1m-6 1h1m2 0h1m1 0h1m-6 1h1m2 0h1m2 0h1m-9 1h1m1 0h1m2 0h2m2 0h1m-9 1h1m3 0h1m4 0h1"/><path id="g86" d="M1 -8.5h1m4 0h4m-9 1h1m3 0h2m2 0h1m-9 1h4m2 0h2m-9 1h1m4 0h2m2 0h2m-11 1h5m2 0h1m-6 1h1m2 0h6m-11 1h5m2 0h1m-6 1h1m3 0h4m-8 1h1m1 0h1m2 0h1m-6 1h2m1 0h6m-9 1h1m4 0h1"/><path id="g87" d="M0 -8.5h4m2 0h1m-7 1h1m2 0h8m-11 1h1m1 0h1m2 0h1m-6 1h2m3 0h1m1 0h1m-8 1h1m1 0h1m1 0h7m-11 1h1m2 0h1m3 0h1m-8 1h1m2 0h1m1 0h1m1 0h2m-9 1h4m1 0h1m1 0h1m1 0h1m-10 1h1m1 0h1m1 0h1m2 0h1m2 0h1m-11 1h1m2 0h1m1 0h1m1 0h1m2 0h1m-11 1h1m5 0h1"/><path id="g88" d="M1 -8.5h9m-5 1h1m-1 1h1m-1 1h1m-4 1h7m-4 1h1m-1 1h1m1 0h1m-3 1h1m2 0h1m-4 1h1m2 0h1m-4 1h1m-6 1h11"/><path id="g89" d="M2 -8.5h1m3 0h1m1 0h1m-7 1h1m3 0h1m1 0h1m-9 1h5m1 0h1m1 0h1m1 0h1m-9 1h1m2 0h2m1 0h2m-8 1h1m3 0h1m1 0h1m-7 1h2m1 0h2m1 0h2m-9 1h2m1 0h1m1 0h1m1 0h1m1 0h1m-11 1h1m1 0h1m3 0h1m1 0h1m-7 1h1m3 0h1m1 0h1m1 0h1m-9 1h1m2 0h1m2 0h1m1 0h1m-9 1h1m1 0h1m4 0h2"/><path id="g8a" d="M1 -8.5h9m-5 1h1m-1 1h1m-1 1h1m-1 1h1m-4 1h7m-4 1h1m-1 1h1m-1 1h1m-1 1h1m-6 1h11"/><path id="g8b" d="M3 -8.5h6m-7 1h1m4 0h1m-8 1h11m-10 1h1m1 0h1m1 0h1m2 0h1m-7 1h3m2 0h1m1 0h1m-10 1h9m1 0h1m-9 1h3m2 0h3m-9 1h1m1 0h1m1 0h2m1 0h1m1 0h1m-11 1h11m-8 1h1m3 0h1m-7 1h2m4 0h1"/><path id="g8c" d="M2 -7.5h8m-9 3h10m-7 1h1m2 0h1m-4 1h1m2 0h1m-5 1h1m3 0h1m-5 1h1m3 0h1m2 0h1m-9 1h1m4 0h1m2 0h1m-10 1h1m6 0h3"/><path id="g8d" d="M5 -8.5h1m-6 1h11m-8 1h1m1 0h1m1 0h1m-6 1h1m2 0h1m2 0h1m-9 1h2m3 0h1m3 0h2m-8 1h5m-2 1h1m-2 1h1m-6 1h11m-6 1h1m-2 1h2"/><path id="g8e" d="M0 -8.5h4m1 0h1m-6 1h1m2 0h1m1 0h5m-10 1h1m1 0h1m1 0h2m3 0h1m-10 1h2m4 0h3m-9 1h1m1 0h1m1 0h2m3 0h2m-11 1h1m2 0h1m1 0h1m1 0h1m-8 1h1m2 0h1m1 0h6m-11 1h5m2 0h1m-8 1h1m1 0h1m2 0h5m-10 1h1m6 0h1m-8 1h1m2 0h8"/><path id="g8f" d="M1 -8.5h8m-8 1h1m6 0h1m-8 1h1m1 0h4m1 0h1m-8 1h1m4 0h1m1 0h1m-8 1h1m1 0h1m2 0h1m1 0h1m-8 1h1m2 0h1m1 0h1m1 0h1m-8 1h1m3 0h1m2 0h1m-8 1h1m3 0h1m2 0h1m1 0h1m-10 1h1m2 0h1m1 0h1m1 0h1m1 0h1m-10 1h1m1 0h1m2 0h1m2 0h2m-11 1h1m9 0h1"/><path id="g90" d="M5 -8.5h1m-2 1h1m1 0h1m-4 1h1m3 0h1m-6 1h1m5 0h1m-9 1h2m1 0h5m1 0h2m-6 1h1m-5 1h9m-5 1h1m-3 1h1m1 0h1m1 0h1m-6 1h1m2 0h1m2 0h1m-8 1h1m2 0h2m3 0h1"/><path id="g91" d="M2 -8.5h1m5 0h1m-7 1h1m3 0h1m1 0h1m-9 1h5m1 0h1m2 0h1m-8 1h1m2 0h1m3 0h1m-8 1h1m2 0h1m4 0h1m-9 1h2m3 0h1m2 0h1m-10 1h2m1 0h1m2 0h1m-8 1h1m1 0h1m3 0h1m-5 1h1m3 0h1m2 0h1m-8 1h1m2 0h1m3 0h1m-8 1h1m2 0h4m1 0h1"/><path id="g92" d="M1 -8.5h1m5 0h1m-6 1h1m1 0h7m-4 1h1m-8 1h1m2 0h1m1 0h5m-9 1h1m1 0h1m3 0h1m-6 1h1m1 0h7m-9 1h1m2 0h1m3 0h1m-10 1h2m3 0h3m1 0h1m-9 1h1m3 0h1m1 0h3m-9 1h1m3 0h1m3 0h1m-9 1h1m3 0h1m2 0h2"/><path id="g93" d="M2 -8.5h1m4 0h1m-6 1h1m4 0h1m-8 1h11m-9 1h1m4 0h1m-7 1h3m3 0h1m-7 1h2m1 0h1m1 0h3m-9 1h1m1 0h1m2 0h1m1 0h1m1 0h1m-10 1h1m1 0h1m1 0h1m2 0h1m2 0h1m-9 1h1m4 0h1m-6 1h1m4 0h1m-6 1h1m4 0h1"/><path id="g94" d="M1 -8.5h1m4 0h1m-6 1h1m4 0h1m-6 1h4m1 0h5m-11 1h1m5 0h1m3 0h1m-11 1h6m1 0h1m1 0h1m-8 1h1m4 0h1m-8 1h5m2 0h1m-6 1h1m3 0h1m1 0h1m-7 1h1m1 0h1m1 0h1m1 0h1m-7 1h2m1 0h1m3 0h1m-8 1h1m1 0h1m5 0h1"/><path id="g95" d="M4 -8.5h1m0 1h1m-6 1h11m-9 2h7m-7 2h7m-7 2h7m-7 1h1m5 0h1m-7 1h7"/><path id="g96" d="M6 -8.5h1m-6 1h10m-10 1h1m-1 1h4m1 0h5m-10 1h1m1 0h1m4 0h1m-8 1h4m1 0h5m-10 1h1m2 0h1m3 0h1m-8 1h2m1 0h1m3 0h1m-8 1h1m1 0h1m2 0h5m-11 1h1m2 0h1m-4 1h1m1 0h1m1 0h7"/><path id="g97" d="M5 -8.5h1m-4 1h1m2 0h1m2 0h1m-7 1h1m2 0h1m1 0h1m-7 1h1m2 0h1m1 0h1m-5 1h2m3 0h2m-9 1h2m3 0h1m3 0h2m-9 1h1m2 0h1m2 0h1m-7 1h1m2 0h1m1 0h1m-7 1h1m2 0h1m1 0h1m-5 1h2m3 0h2m-9 1h2m7 0h2"/><path id="g98" d="M5 -8.5h1m-5 1h10m-10 1h1m8 0h1m-11 1h1m2 0h7m-7 1h1m4 0h1m-6 1h6m-6 1h1m-1 1h7m-7 1h1m5 0h1m-7 1h7m-7 1h1m5 0h1"/><path id="g99" d="M2 -8.5h1m2 0h5m-8 1h1m5 0h1m-9 1h5m2 0h1m-6 1h1m3 0h1m-6 1h3m1 0h6m-10 1h2m1 0h1m1 0h1m1 0h1m1 0h1m-11 1h1m1 0h1m3 0h1m1 0h1m1 0h1m-11 1h1m1 0h1m2 0h1m2 0h1m1 0h1m-9 1h1m1 0h1m2 0h1m2 0h1m-9 1h1m3 0h1m3 0h1m-9 1h1m2 0h1m2 0h2"/><path id="g9a" d="M3 -8.5h1m-1 1h1m-2 1h1m2 0h5m-8 1h1m-2 1h2m-3 1h1m1 0h1m-1 1h1m-1 1h1m-1 1h1m-1 1h1m1 0h7m-9 1h1"/><path id="g9b" d="M7 -8.5h1m-8 1h4m1 0h1m1 0h1m-6 1h1m2 0h5m-8 1h1m1 0h1m2 0h1m-8 1h4m3 0h1m-6 1h1m1 0h7m-9 1h1m4 0h1m-6 1h2m2 0h3m-9 1h2m3 0h1m1 0h1m1 0h1m-6 1h1m2 0h1m2 0h1m-4 1h1"/><path id="g9c" d="M4 -8.5h1m2 0h1m-7 1h1m2 0h1m2 0h1m2 0h1m-9 1h1m1 0h1m2 0h1m1 0h1m-8 1h1m1 0h1m2 0h2m-5 1h1m2 0h1m-5 1h2m2 0h3m-8 1h1m1 0h1m2 0h1m2 0h1m-10 1h1m2 0h1m2 0h1m-5 1h1m3 0h1m2 0h1m-9 1h1m4 0h1m2 0h1m-10 1h1m6 0h3"/><path id="g9d" d="M1 -8.5h1m3 0h1m3 0h1m-8 1h1m3 0h1m1 0h1m-9 1h11m-8 1h1m3 0h1m-6 1h1m2 0h5m-9 1h3m3 0h1m-8 1h1m1 0h1m1 0h1m2 0h1m-6 1h1m1 0h7m-9 1h1m4 0h1m-6 1h1m4 0h1m-6 1h1m4 0h1"/><path id="g9e" d="M1 -8.5h9m-7 1h1m4 0h1m-5 1h1m2 0h1m-3 1h2m-4 1h2m2 0h2m-9 1h3m2 0h1m3 0h2m-6 1h1m-4 1h7m-4 1h1m-1 1h1m-6 1h11"/><path id="g9f" d="M3 -8.5h1m3 0h1m-8 1h11m-8 1h1m3 0h1m-6 1h1m1 0h7m-9 1h1m6 0h1m-9 1h2m1 0h4m1 0h1m-10 1h1m1 0h1m1 0h1m2 0h1m1 0h1m-8 1h1m1 0h1m2 0h1m1 0h1m-8 1h1m1 0h4m1 0h1m-8 1h1m6 0h1m-8 1h1m4 0h3"/><path id="ga0" d="M5 -8.5h6m-11 1h5m3 0h1m-7 1h1m3 0h5m-9 1h1m3 0h1m3 0h1m-10 1h4m1 0h1m1 0h1m1 0h1m-11 1h2m2 0h1m1 0h1m1 0h1m1 0h1m-10 1h1m2 0h1m1 0h1m1 0h1m1 0h1m-10 1h1m2 0h1m1 0h1m1 0h1m1 0h1m-10 1h4m1 0h1m1 0h1m1 0h1m-10 1h1m2 0h1m2 0h1m1 0h1m-5 1h2m3 0h1"/><path id="ga1" d="M2 -8.5h1m3 0h5m-11 1h5m3 0h1m-8 1h1m1 0h1m2 0h5m-11 1h5m1 0h1m3 0h1m-11 1h1m3 0h1m1 0h1m1 0h1m1 0h1m-11 1h1m2 0h1m2 0h1m1 0h1m1 0h1m-11 1h3m1 0h1m1 0h1m1 0h1m1 0h1m-11 1h1m2 0h1m2 0h1m1 0h1m1 0h1m-11 1h3m1 0h1m1 0h1m1 0h1m1 0h1m-11 1h1m2 0h1m3 0h1m1 0h1m-10 1h3m2 0h2m3 0h1"/><path id="ga2" d="M2 -8.5h1m2 0h1m3 0h1m-7 1h1m2 0h1m1 0h1m-8 1h10m-10 1h1m8 0h1m-8 1h6m-2 1h1m-2 1h1m-6 1h10m-5 1h1m-1 1h1m-3 1h3"/><path id="ga3" d="M3 -8.5h1m2 0h1m2 0h1m-8 1h1m3 0h1m1 0h1m-8 1h2m3 0h2m-8 1h1m1 0h1m1 0h3m3 0h1m-9 1h1m3 0h1m3 0h1m-9 1h1m4 0h4m-6 1h1m-6 1h11m-6 1h1m-1 1h1m-1 1h1"/><path id="ga4" d="M3 -8.5h5m-5 1h1m3 0h1m-6 1h9m-10 1h2m1 0h1m1 0h1m2 0h1m-10 1h1m1 0h9m-9 1h1m-1 1h1m1 0h6m-8 1h1m-1 1h1m1 0h6m-9 1h1m2 0h1m4 0h1m-10 1h1m3 0h6"/><path id="ga5" d="M5 -8.5h1m-1 1h1m-1 1h1m-4 1h1m2 0h1m2 0h1m-7 1h1m2 0h1m3 0h1m-9 1h1m3 0h1m3 0h1m-9 1h1m3 0h1m4 0h1m-11 1h1m4 0h1m4 0h1m-6 1h1m-3 1h1m1 0h1m-2 1h1"/><path id="ga6" d="M1 -8.5h1m5 0h1m-6 1h1m4 0h1m-8 1h1m3 0h7m-10 1h1m2 0h1m2 0h1m2 0h1m-8 1h2m2 0h1m-6 1h1m1 0h6m-8 1h1m1 0h1m4 0h1m-10 1h2m2 0h1m1 0h1m1 0h1m-8 1h1m2 0h1m2 0h1m-7 1h1m1 0h1m2 0h1m1 0h1m-8 1h2m1 0h2m3 0h2"/><path id="ga7" d="M1 -8.5h1m3 0h1m-4 1h1m1 0h1m2 0h4m-10 1h5m1 0h1m2 0h1m-8 1h1m3 0h1m1 0h1m-7 1h1m3 0h2m-9 1h6m1 0h1m1 0h1m-7 1h1m3 0h1m2 0h1m-9 1h1m1 0h1m2 0h1m2 0h1m-9 1h1m2 0h1m1 0h2m1 0h1m-10 1h1m3 0h1m1 0h1m1 0h1m-10 1h1m6 0h1"/><path id="ga8" d="M3 -8.5h2m2 0h3m-5 1h2m-5 1h3m2 0h3m-5 1h1m-5 1h10m-7 1h1m1 0h1m-4 1h7m-9 1h3m2 0h1m2 0h1m-7 1h1m2 0h1m2 0h1m-7 1h1m2 0h1m1 0h2m-4 1h1"/><path id="ga9" d="M6 -8.5h5m-11 1h4m2 0h1m3 0h1m-11 1h1m2 0h1m2 0h1m3 0h1m-11 1h1m2 0h1m2 0h5m-11 1h4m2 0h1m3 0h1m-11 1h1m2 0h1m2 0h1m3 0h1m-11 1h1m2 0h1m2 0h5m-11 1h4m2 0h1m3 0h1m-6 1h1m4 0h1m-7 1h1m3 0h1m1 0h1m-9 1h2m5 0h1"/><path id="gaa" d="M5 -8.5h1m4 0h1m-9 1h8m-5 1h1m1 0h1m-8 1h11m-6 1h1m-3 1h6m-8 1h2m4 0h1m-8 1h1m5 0h1m-6 1h10m-5 1h1m-2 1h2"/><path id="gab" d="M1 -8.5h8m-4 1h1m-6 1h11m-8 1h1m1 0h1m1 0h1m-8 1h3m2 0h1m2 0h3m-9 1h7m-3 1h1m-7 1h11m-6 1h1m-1 1h1m-3 1h3"/><path id="gac" d="M7 -8.5h2m-7 1h4m1 0h1m1 0h1m-3 1h1m-8 1h11m-7 1h1m2 0h1m-6 1h1m1 0h1m2 0h1m-6 1h1m1 0h2m1 0h1m-6 1h1m1 0h1m2 0h1m-6 1h1m1 0h1m3 0h1m1 0h1m-9 1h1m1 0h3m1 0h1m1 0h1m-11 1h4m5 0h2"/><path id="gad" d="M0 -8.5h5m1 0h5m-9 1h1m5 0h1m-8 1h3m3 0h3m-8 1h1m5 0h1m-9 1h5m1 0h5m-6 1h1m-3 1h2m1 0h2m-8 1h3m2 0h1m2 0h3m-8 1h5m-2 1h1m-2 1h1"/><path id="gae" d="M5 -8.5h1m-5 1h9m-5 1h1m-4 1h7m-4 1h1m-6 1h11m-8 1h1m4 0h1m-6 1h6m-6 1h1m4 0h1m-6 1h6m-6 1h1m4 0h1"/><path id="gaf" d="M2 -8.5h7m-9 4h11m-7 1h1m-2 1h1m-1 1h1m3 0h1m-6 1h1m5 0h1m-8 1h9m-8 1h1m6 0h1"/><path id="gb0" d="M3 -8.5h1m2 0h1m-5 1h1m2 0h1m1 0h1m-7 1h1m2 0h1m1 0h1m1 0h1m-9 1h1m1 0h6m1 0h2m-11 2h5m1 0h4m-9 1h1m2 0h1m1 0h1m2 0h1m-8 1h1m1 0h1m2 0h1m1 0h1m-7 1h2m3 0h2m-10 1h3m1 0h1m1 0h2m1 0h1m-9 1h1m1 0h2m1 0h1m1 0h2"/><path id="gb1" d="M2 -8.5h1m4 0h1m-6 1h1m1 0h7m-11 1h5m1 0h1m1 0h1m1 0h1m-9 1h1m2 0h1m3 0h1m-8 1h2m2 0h3m-7 1h1m1 0h2m3 0h1m-9 1h2m1 0h7m-11 1h1m1 0h1m2 0h1m3 0h1m-8 1h1m2 0h1m3 0h1m-8 1h1m2 0h5m-8 1h1m2 0h1m3 0h1"/><path id="gb2" d="M7 -8.5h1m-8 1h5m1 0h1m1 0h1m-7 1h1m2 0h1m3 0h1m-8 1h1m1 0h1m1 0h1m3 0h1m-10 1h3m3 0h1m-6 1h1m-1 1h1m2 0h6m-9 1h3m4 0h1m-10 1h2m4 0h1m1 0h1m-2 1h1m0 1h1"/><path id="gb3" d="M5 -8.5h1m-1 1h1m-6 1h11m-6 1h1m-1 1h1m-5 1h9m-5 1h1m-3 1h1m2 0h1m2 0h1m-9 1h1m1 0h1m2 0h1m1 0h1m1 0h1m-10 1h1m1 0h1m4 0h1m1 0h1m-11 1h1m3 0h5"/><path id="gb4" d="M1 -8.5h9m-5 1h1m-4 1h1m2 0h1m2 0h1m-6 1h1m1 0h1m1 0h1m-3 1h1m-6 1h11m-6 1h1m-1 1h1m-1 1h1m-1 1h1m-1 1h1"/><path id="gb5" d="M1 -8.5h1m4 0h1m-5 1h1m1 0h6m-10 1h1m3 0h1m4 0h1m-9 1h1m2 0h6m-7 1h2m4 0h1m-8 1h1m1 0h6m-8 1h1m1 0h1m1 0h1m3 0h1m-11 1h2m2 0h1m2 0h1m1 0h1m-9 1h1m2 0h1m2 0h2m-8 1h1m2 0h1m1 0h1m1 0h1m-8 1h1m2 0h2m3 0h2"/><path id="gb6" d="M1 -8.5h1m4 0h1m-5 1h1m1 0h7m-11 1h1m5 0h1m-6 1h1m1 0h7m-7 1h1m2 0h1m-5 1h1m1 0h7m-9 1h1m2 0h1m3 0h1m-10 1h2m3 0h6m-10 1h1m2 0h1m1 0h1m2 0h1m-9 1h1m1 0h1m3 0h1m1 0h1m-9 1h1m6 0h1"/><path id="gb7" d="M3 -8.5h1m3 0h1m-7 1h9m-7 1h1m3 0h1m-8 1h11m-6 1h1m-4 1h7m-7 1h1m2 0h1m2 0h1m-7 1h7m-7 1h1m2 0h1m2 0h1m-7 1h7m-8 1h2m5 0h2"/><path id="gb8" d="M7 -8.5h1m-8 1h4m2 0h1m1 0h1m-7 1h1m2 0h1m3 0h1m-8 1h1m1 0h1m3 0h1m1 0h1m-11 1h4m3 0h1m-6 1h1m3 0h1m2 0h1m-8 1h1m2 0h1m2 0h1m-7 1h1m4 0h1m2 0h1m-9 1h2m1 0h2m2 0h1m-10 1h2m6 0h1m-4 1h3"/><path id="gb9" d="M3 -8.5h1m3 0h1m-8 1h11m-8 1h1m3 0h1m-7 1h1m5 0h1m-8 1h4m1 0h5m-10 1h1m2 0h1m2 0h1m1 0h1m-9 1h11m-11 1h1m6 0h1m-8 1h4m1 0h6m-11 1h1m2 0h1m3 0h1m-8 1h4m3 0h1"/><path id="gba" d="M3 -8.5h1m2 0h1m1 0h1m1 0h1m-11 1h6m1 0h3m-10 1h1m1 0h1m1 0h1m1 0h5m-11 1h6m2 0h2m-10 1h1m1 0h1m1 0h2m1 0h2m1 0h1m-11 1h6m1 0h1m1 0h1m-10 1h1m1 0h1m1 0h1m1 0h5m-11 1h1m1 0h4m1 0h1m1 0h1m-10 1h1m1 0h1m1 0h1m1 0h5m-11 1h1m1 0h3m1 0h1m2 0h1m-8 1h1m1 0h2m3 0h1"/><path id="gbb" d="M1 -8.5h3m3 0h1m-6 1h1m2 0h5m-10 1h6m1 0h1m1 0h1m-9 1h2m2 0h5m-10 1h1m1 0h2m1 0h1m1 0h1m1 0h1m-8 1h1m2 0h5m-10 1h5m2 0h1m-7 1h1m2 0h1m2 0h1m1 0h1m-9 1h1m1 0h1m2 0h4m-8 1h1m2 0h1m1 0h1m2 0h1m-10 1h1m2 0h1m2 0h4"/><path id="gbc" d="M2 -8.5h1m2 0h1m-4 1h1m2 0h6m-11 1h5m-3 1h1m2 0h5m-9 1h3m1 0h1m1 0h1m1 0h1m-9 1h2m1 0h7m-11 1h1m1 0h1m2 0h1m1 0h1m1 0h1m-10 1h1m1 0h1m2 0h1m1 0h1m1 0h1m-8 1h1m2 0h6m-9 1h1m6 0h1m-8 1h1m4 0h2"/><path id="gbd" d="M5 -8.5h1m-6 1h11m-7 1h1m1 0h1m-4 1h1m3 0h1m-6 1h1m5 0h1m-9 1h11m-9 1h1m2 0h1m2 0h1m-7 1h7m-7 1h1m2 0h1m2 0h1m-7 1h1m2 0h1m2 0h1m-7 1h7"/><path id="gbe" d="M4 -8.5h2m1 0h4m-10 1h3m3 0h1m2 0h1m-10 1h1m5 0h1m1 0h1m-9 1h1m5 0h1m1 0h1m-9 1h8m-8 1h1m2 0h1m2 0h1m1 0h1m-9 1h1m2 0h1m2 0h1m2 0h1m-10 1h1m2 0h1m2 0h1m2 0h1m-10 1h1m1 0h6m1 0h1m-11 1h3m4 0h1m1 0h1m-3 1h1"/><path id="gbf" d="M1 -8.5h9m-6 1h1m1 0h1m-6 1h1m2 0h1m1 0h1m2 0h1m-8 1h1m1 0h1m1 0h1m1 0h1m-9 1h11m-9 2h7m-7 1h1m5 0h1m-7 1h7m-7 1h1m5 0h1m-7 1h7"/><path id="gc0" d="M3 -8.5h2m2 0h1m-8 1h3m4 0h1m-6 1h1m4 0h1m1 0h1m-10 1h6m1 0h1m1 0h1m-8 1h1m2 0h1m1 0h2m-8 1h3m1 0h1m1 0h1m-7 1h2m1 0h1m2 0h1m-8 1h1m1 0h1m3 0h1m1 0h1m-7 1h1m3 0h1m1 0h1m-7 1h1m2 0h1m3 0h1m-8 1h1m1 0h1m5 0h1"/><path id="gc1" d="M2 -8.5h7m-7 1h1m5 0h1m-7 1h1m5 0h1m-7 1h7m-7 1h1m5 0h1m-8 2h9m-9 1h1m7 0h1m-9 1h1m7 0h1m-9 1h1m7 0h1m-9 1h9"/><path id="gc2" d="M5 -8.5h1m2 0h1m-7 1h1m2 0h1m2 0h1m-7 1h1m2 0h1m2 0h1m-9 1h11m-9 1h1m2 0h1m2 0h1m-7 1h1m2 0h1m2 0h1m-7 1h1m2 0h1m2 0h1m-7 1h1m2 0h4m-7 1h1m-1 1h1m-1 1h9"/><path id="gc3" d="M2 -8.5h1m3 0h1m-4 1h1m2 0h5m-11 1h6m-4 1h1m5 0h1m-7 1h3m1 0h1m1 0h3m-9 1h1m1 0h1m1 0h3m1 0h1m-9 1h1m1 0h3m1 0h1m1 0h1m-9 1h1m1 0h1m1 0h1m1 0h3m-9 1h1m1 0h1m1 0h1m1 0h1m-8 1h1m2 0h1m1 0h1m3 0h1m-11 1h1m2 0h1m3 0h4"/><path id="gc4" d="M3 -8.5h1m3 0h1m-7 1h9m-5 1h1m-4 1h7m-4 1h1m-6 1h11m-6 1h1m-5 1h9m-6 1h1m1 0h1m-4 1h1m3 0h1m-8 1h3m5 0h3"/><path id="gc5" d="M0 -8.5h3m2 0h5m-8 1h1m2 0h1m3 0h1m-8 1h1m2 0h5m-10 1h3m4 0h1m-8 1h1m3 0h7m-11 1h1m3 0h1m2 0h1m2 0h1m-11 1h3m1 0h1m2 0h1m2 0h1m-9 1h1m1 0h6m-8 1h1m4 0h1m2 0h1m-9 1h1m4 0h4m-11 1h2m2 0h4m2 0h1"/><path id="gc6" d="M6 -9.5h1m0 1h1m-6 1h10m-10 1h1m4 0h1m-6 1h1m4 0h1m-6 1h10m-10 1h1m4 0h1m-6 1h1m3 0h3m-7 1h1m2 0h1m1 0h1m1 0h1m-9 1h1m2 0h1m2 0h1m2 0h1m-10 1h1m1 0h1m3 0h1m3 0h1m-12 1h1m6 0h1"/><path id="gc7" d="M2 -9.5h7m-7 1h1m5 0h1m-7 1h1m5 0h1m-7 1h7m-9 2h12m-9 1h1m-2 1h7m-1 1h1m-1 1h1m-4 1h1m1 0h1m-2 1h1"/><path id="gc8" d="M2 -9.5h1m5 0h1m-7 1h1m3 0h1m1 0h1m-7 1h1m3 0h1m1 0h1m-9 1h5m1 0h6m-10 1h1m1 0h2m2 0h1m-8 1h1m2 0h1m3 0h1m-8 1h1m2 0h1m3 0h1m-7 1h2m2 0h6m-9 1h1m4 0h1m-7 1h1m1 0h1m3 0h1m-8 1h1m2 0h1m3 0h1m-9 1h1m4 0h7"/><path id="gc9" d="M5 -9.5h1m-1 1h1m-2 1h7m-7 1h1m4 0h1m-7 1h1m1 0h1m2 0h1m-7 1h1m3 0h2m-2 1h1m-3 1h7m-8 1h2m5 0h1m-10 1h2m1 0h1m5 0h1m-7 1h1m5 0h1m-7 1h7"/><path id="gca" d="M2 -9.5h1m7 0h1m-8 1h1m6 0h1m-11 1h6m1 0h1m2 0h1m-4 1h1m2 0h1m-7 1h1m2 0h1m2 0h1m-10 1h1m2 0h1m2 0h1m2 0h1m-9 1h1m1 0h1m2 0h1m2 0h1m-8 1h1m3 0h1m2 0h1m-8 1h2m2 0h1m2 0h1m-9 1h1m2 0h1m4 0h1m-10 1h1m3 0h1m2 0h1m1 0h1m-11 1h1m8 0h1"/><path id="gcb" d="M6 -9.5h1m0 1h1m-6 1h10m-10 1h1m-1 1h1m-1 1h1m-1 1h1m-1 1h1m-1 1h1m-2 1h1m-1 1h1m-2 1h1"/><path id="gcc" d="M7 -9.5h1m-6 1h10m-10 1h1m-1 1h1m4 0h1m-6 1h1m4 0h1m-6 1h1m4 0h1m-6 1h1m1 0h7m-9 1h1m4 0h1m-7 1h1m5 0h1m-7 1h1m5 0h1m-7 1h1m5 0h1m-8 1h1m2 0h9"/><path id="gcd" d="M3 -9.5h1m2 0h1m-4 1h1m3 0h1m-6 1h1m4 0h1m-6 1h1m1 0h8m-11 1h2m4 0h1m-8 1h1m1 0h1m4 0h1m-6 1h1m4 0h1m-6 1h1m2 0h6m-9 1h1m4 0h1m-6 1h1m4 0h1m-6 1h1m4 0h1m-6 1h1m1 0h8"/><path id="gce" d="M0 -9.5h4m2 0h1m-7 1h1m2 0h1m3 0h1m-8 1h1m2 0h9m-12 1h1m1 0h1m1 0h1m5 0h1m-11 1h2m3 0h5m-10 1h1m1 0h1m-3 1h1m2 0h9m-12 1h1m2 0h1m2 0h1m1 0h1m-9 1h2m1 0h1m2 0h1m1 0h1m-9 1h1m1 0h1m3 0h1m1 0h1m2 0h1m-12 1h1m4 0h1m2 0h1m2 0h1m-12 1h1m3 0h1m4 0h3"/><path id="gcf" d="M0 -8.5h12m-3 1h1m-8 1h5m2 0h1m-8 1h1m3 0h1m2 0h1m-8 1h1m3 0h1m2 0h1m-8 1h1m3 0h1m2 0h1m-8 1h5m2 0h1m-8 1h1m3 0h1m2 0h1m-1 1h1m-3 1h1m1 0h1m-2 1h1"/><path id="gd0" d="M2 -9.5h9m-9 1h1m3 0h1m3 0h1m-9 1h1m3 0h1m3 0h1m-9 1h9m-9 1h1m3 0h1m3 0h1m-9 1h1m3 0h1m3 0h1m-9 1h9m-9 1h1m3 0h1m3 0h1m-9 1h1m3 0h1m3 0h1m-10 1h1m4 0h1m3 0h1m-10 1h1m4 0h1m3 0h1m-11 1h1m5 0h1m2 0h2"/><path id="gd1" d="M3 -9.5h1m3 0h5m-12 1h7m2 0h1m-10 1h1m1 0h1m3 0h1m1 0h1m-7 1h4m1 0h5m-11 1h2m2 0h1m1 0h1m3 0h1m-9 1h2m2 0h1m1 0h1m1 0h1m-10 1h1m2 0h1m1 0h1m1 0h1m1 0h1m-11 1h7m1 0h1m1 0h1m-12 1h1m1 0h1m2 0h1m1 0h1m1 0h1m1 0h1m-10 1h1m2 0h1m1 0h1m1 0h1m-8 1h4m2 0h1m1 0h1m-9 1h1m2 0h3m3 0h1"/><path id="gd2" d="M2 -8.5h8m-10 4h12m-8 1h1m2 0h1m-4 1h1m2 0h1m-5 1h1m3 0h1m-5 1h1m3 0h1m3 0h1m-10 1h1m4 0h1m3 0h1m-12 1h2m6 0h4"/><path id="gd3" d="M6 -9.5h1m-6 1h11m-11 1h1m9 0h1m-12 1h1m2 0h1m2 0h1m3 0h1m-7 1h1m1 0h1m-5 1h1m3 0h1m-4 1h1m2 0h1m-7 1h12m-7 1h1m1 0h1m-4 1h1m3 0h1m-6 1h1m5 0h1m-10 1h3m7 0h2"/><path id="gd4" d="M0 -9.5h4m2 0h5m-11 1h1m2 0h1m-4 1h1m1 0h1m-3 1h2m3 0h7m-12 1h1m1 0h1m5 0h1m-9 1h1m2 0h1m2 0h1m1 0h1m1 0h1m-11 1h1m2 0h1m2 0h1m1 0h1m1 0h1m-11 1h2m1 0h1m1 0h1m2 0h1m2 0h1m-12 1h1m1 0h1m2 0h1m2 0h1m2 0h1m-12 1h1m3 0h1m3 0h1m2 0h1m-12 1h1m5 0h1m1 0h1m-9 1h1m6 0h1"/><path id="gd5" d="M6 -9.5h1m-2 1h1m1 0h1m-4 1h1m3 0h1m-7 1h2m5 0h1m-10 1h2m1 0h6m1 0h2m-6 1h1m-6 1h10m-5 1h1m-4 1h1m2 0h1m2 0h1m-8 1h1m3 0h1m3 0h1m-10 1h1m4 0h1m4 0h1m-7 1h2"/><path id="gd6" d="M1 -9.5h1m5 0h1m-6 1h1m4 0h2m-7 1h1m3 0h1m2 0h1m-5 1h1m4 0h1m-11 1h3m4 0h1m3 0h1m-10 1h1m3 0h1m2 0h1m-8 1h1m2 0h1m2 0h1m-7 1h1m4 0h1m2 0h1m-9 1h1m1 0h1m1 0h1m3 0h1m-9 1h2m5 0h1m-9 1h2m5 0h1m-4 1h3"/><path id="gd7" d="M0 -9.5h1m2 0h1m6 0h2m-12 1h2m1 0h1m1 0h1m1 0h3m-10 1h1m1 0h3m2 0h1m-8 1h1m2 0h1m3 0h1m-8 1h12m-12 1h1m2 0h1m3 0h1m2 0h1m-11 1h1m1 0h3m2 0h1m2 0h1m-11 1h2m1 0h1m1 0h1m1 0h1m2 0h1m-11 1h1m2 0h1m3 0h1m2 0h1m-11 1h1m2 0h1m3 0h1m2 0h1m-11 1h7m3 0h1m-5 1h1m3 0h1"/><path id="gd8" d="M2 -9.5h1m6 0h1m-8 1h1m5 0h1m-9 1h5m1 0h6m-12 1h1m1 0h1m1 0h1m1 0h1m4 0h1m-12 1h1m1 0h1m1 0h1m1 0h1m4 0h1m-12 1h1m1 0h1m1 0h1m1 0h1m4 0h1m-12 1h1m1 0h1m1 0h1m1 0h6m-12 1h1m1 0h1m1 0h1m1 0h1m4 0h1m-12 1h1m1 0h1m1 0h1m1 0h1m4 0h1m-10 1h1m3 0h1m4 0h1m-10 1h1m3 0h6m-10 1h1m3 0h1m4 0h1"/><path id="gd9" d="M5 -9.5h1m-1 1h1m-2 1h1m1 0h1m-4 1h1m3 0h1m-6 1h1m5 0h2m-10 1h2m1 0h5m2 0h2m-7 1h1m-4 1h7m-4 1h1m-4 1h1m2 0h1m2 0h1m-6 1h1m1 0h1m1 0h1m-8 1h11"/><path id="gda" d="M5 -9.5h1m-5 1h10m-7 1h3m-4 1h1m1 0h1m1 0h2m-8 1h2m2 0h1m3 0h2m-8 1h1m4 0h1m-9 1h12m-9 1h1m4 0h1m-7 1h3m2 0h3m-9 1h1m1 0h1m1 0h2m1 0h1m1 0h1m-11 1h1m2 0h1m4 0h1m2 0h1m-9 1h1m4 0h1"/><path id="gdb" d="M3 -9.5h1m3 0h1m-4 1h1m1 0h1m-5 1h8m-8 1h1m6 0h1m-8 1h1m6 0h1m-8 1h8m-8 1h1m6 0h1m-9 2h1m1 0h1m1 0h1m4 0h1m-10 1h1m1 0h1m2 0h1m1 0h1m2 0h1m-12 1h1m2 0h1m4 0h1m2 0h1m-8 1h5"/><path id="gdc" d="M4 -9.5h1m2 0h1m-7 1h10m-7 1h1m2 0h1m2 0h1m-10 1h10m-10 1h1m2 0h1m2 0h1m-7 1h11m-9 1h1m3 0h1m3 0h1m-10 1h8m1 0h1m-10 1h1m3 0h1m2 0h1m-8 1h1m2 0h1m3 0h1m-7 1h2m2 0h2m-8 1h2m6 0h2"/><path id="gdd" d="M3 -9.5h1m5 0h1m-7 1h1m4 0h1m-6 1h1m3 0h1m-5 1h1m2 0h1m-4 1h1m1 0h1m-6 1h11m-8 1h1m1 0h1m-3 1h1m2 0h1m-4 1h1m3 0h1m-5 1h1m4 0h1m-6 1h1m1 0h1m3 0h1m-7 1h2m5 0h2"/><path id="gde" d="M1 -9.5h1m-1 1h1m3 0h7m-11 1h4m-5 1h1m1 0h1m3 0h5m-9 1h1m3 0h1m3 0h1m-11 1h5m1 0h1m3 0h1m-9 1h1m3 0h5m-9 1h1m-1 1h2m2 0h1m3 0h1m-10 1h1m2 0h1m2 0h1m1 0h1m-9 1h1m6 0h1m-9 1h1m4 0h7"/><path id="gdf" d="M5 -9.5h1m-2 1h1m1 0h1m-4 1h1m3 0h1m-6 1h1m5 0h1m-8 1h1m7 0h1m-10 1h1m1 0h7m1 0h2m-7 1h1m-1 1h1m-4 1h7m-4 1h1m-1 1h1m-6 1h11"/><path id="ge0" d="M3 -9.5h1m4 0h4m-12 1h7m1 0h1m2 0h1m-4 1h1m2 0h1m-11 1h1m3 0h1m2 0h1m1 0h1m-9 1h1m1 0h1m3 0h2m-10 1h7m1 0h1m1 0h1m-3 1h1m2 0h1m-11 1h5m2 0h1m2 0h1m-11 1h1m3 0h1m2 0h2m1 0h1m-11 1h1m3 0h1m2 0h1m1 0h1m-10 1h5m2 0h1m-8 1h1m3 0h1m2 0h1"/><path id="ge1" d="M5 -9.5h1m-1 1h1m-1 1h1m-1 1h1m-1 1h1m-1 1h1m-2 1h1m1 0h1m-3 1h1m1 0h1m-4 1h1m3 0h1m-6 1h1m5 0h1m-8 1h1m7 0h3m-12 1h1m9 0h1"/><path id="ge2" d="M1 -9.5h1m3 0h1m3 0h1m-8 1h1m2 0h1m2 0h1m-4 1h1m-6 1h11m-8 1h1m1 0h1m1 0h1m-6 1h1m2 0h1m2 0h1m-9 1h2m7 0h2m-6 1h1m-6 1h11m-7 1h1m1 0h1m-5 1h2m3 0h2m-9 1h2m7 0h2"/><path id="ge3" d="M1 -9.5h5m5 0h1m-11 1h1m3 0h1m5 0h1m-11 1h1m3 0h1m2 0h1m2 0h1m-11 1h5m2 0h1m2 0h1m-9 1h1m4 0h1m2 0h1m-9 1h1m4 0h1m2 0h1m-12 1h7m1 0h1m2 0h1m-9 1h1m2 0h1m1 0h1m2 0h1m-10 1h1m3 0h1m1 0h1m2 0h1m-10 1h1m3 0h1m4 0h1m-11 1h1m2 0h1m1 0h1m4 0h1m-12 1h1m4 0h1m4 0h2"/><path id="ge4" d="M7 -9.5h1m-5 1h1m3 0h1m-5 1h1m4 0h1m-7 1h1m5 0h1m-7 1h1m6 0h1m-9 1h1m3 0h1m4 0h1m-11 1h1m4 0h1m5 0h1m-8 1h1m-1 1h1m2 0h1m-5 1h1m4 0h1m-7 1h8m-7 1h1m5 0h1"/><path id="ge5" d="M4 -9.5h1m-2 1h7m-7 1h1m4 0h1m-7 1h1m1 0h1m2 0h1m-3 1h2m-4 1h2m2 0h2m-9 1h3m2 0h1m3 0h3m-10 1h8m-5 1h1m3 0h1m-6 1h1m4 0h1m-7 1h1m3 0h1m1 0h1m-8 1h1m5 0h1"/><path id="ge6" d="M3 -9.5h6m-6 1h1m4 0h1m-6 1h6m-7 2h8m-8 1h1m6 0h1m-8 1h1m2 0h1m3 0h1m-8 1h1m2 0h1m3 0h1m-8 1h1m2 0h1m3 0h1m-6 1h1m1 0h1m-4 1h1m3 0h1m-7 1h2m5 0h3"/><path id="ge7" d="M1 -9.5h1m3 0h6m-9 1h1m2 0h1m4 0h1m-9 1h1m2 0h6m-6 1h1m4 0h1m-6 1h6m-11 1h3m2 0h1m1 0h1m3 0h1m-10 1h1m2 0h1m1 0h1m2 0h1m-9 1h1m2 0h1m2 0h2m-8 1h1m2 0h1m1 0h1m1 0h1m-8 1h1m2 0h2m3 0h2m-11 1h1m1 0h1m-4 1h1m3 0h8"/><path id="ge8" d="M3 -9.5h1m3 0h1m-5 1h1m3 0h1m-6 1h1m4 0h1m-6 1h1m1 0h7m-10 1h2m4 0h1m-8 1h1m1 0h1m3 0h3m-7 1h1m3 0h3m-7 1h1m2 0h1m1 0h1m1 0h1m-8 1h1m2 0h1m1 0h1m1 0h1m-8 1h1m1 0h1m2 0h1m2 0h1m-9 1h2m3 0h1m3 0h1m-10 1h1m4 0h1"/><path id="ge9" d="M5 -9.5h1m-1 1h1m-5 1h9m-9 1h1m3 0h1m3 0h1m-9 1h1m3 0h1m3 0h1m-9 1h9m-9 1h1m3 0h1m3 0h1m-9 1h1m3 0h1m3 0h1m-9 1h9m1 0h1m-7 1h1m5 0h1m-7 1h1m5 0h1m-6 1h6"/><path id="gea" d="M1 -9.5h1m6 0h3m-9 1h1m1 0h4m-1 1h1m-8 1h3m1 0h8m-10 1h1m4 0h1m-6 1h1m4 0h1m-6 1h1m2 0h6m-9 1h1m2 0h1m4 0h1m-9 1h1m1 0h2m4 0h1m-9 1h2m1 0h1m4 0h1m-9 1h1m2 0h6m-6 1h1m4 0h1"/><path id="geb" d="M0 -9.5h6m-5 1h1m2 0h1m1 0h5m-10 1h1m2 0h1m1 0h1m3 0h1m-10 1h4m1 0h1m3 0h1m-10 1h1m2 0h1m1 0h1m3 0h1m-10 1h1m2 0h1m1 0h1m3 0h1m-10 1h4m1 0h5m-10 1h1m2 0h1m-4 1h1m2 0h2m1 0h1m2 0h1m-11 1h5m2 0h1m2 0h1m-7 1h1m1 0h1m4 0h1m-8 1h1m1 0h1m4 0h1"/><path id="gec" d="M2 -9.5h1m4 0h1m-6 1h1m1 0h7m-9 1h1m4 0h1m-8 1h1m1 0h2m1 0h5m-10 1h1m1 0h1m4 0h1m-8 1h1m1 0h10m-12 1h1m1 0h1m2 0h1m3 0h1m-8 1h1m2 0h5m-8 1h1m2 0h1m3 0h1m-8 1h1m2 0h5m-8 1h1m2 0h1m3 0h1m-8 1h1m2 0h1m2 0h2"/><path id="ged" d="M0 -9.5h1m3 0h7m-10 1h1m2 0h1m5 0h1m-10 1h1m2 0h1m5 0h1m-8 1h2m5 0h1m-9 1h1m1 0h7m-9 1h1m1 0h1m1 0h1m1 0h1m1 0h1m-10 1h1m4 0h1m1 0h1m-9 1h2m4 0h1m1 0h1m-8 1h1m4 0h1m1 0h1m-8 1h1m3 0h1m2 0h1m2 0h1m-11 1h1m2 0h1m3 0h1m2 0h1m-9 1h1m5 0h3"/><path id="gee" d="M2 -9.5h1m5 0h1m-7 1h1m2 0h1m2 0h1m-7 1h1m2 0h1m2 0h1m-9 1h1m1 0h2m1 0h7m-12 1h1m1 0h1m2 0h1m2 0h1m-9 1h1m1 0h1m1 0h1m3 0h1m-9 1h1m1 0h1m5 0h1m-7 1h1m3 0h5m-9 1h1m5 0h1m-7 1h1m5 0h1m-7 1h1m5 0h1m-7 1h1m1 0h8"/><path id="gef" d="M5 -9.5h1m0 1h1m-7 1h12m-9 1h1m4 0h1m-6 1h1m4 0h1m-6 1h1m4 0h1m-5 1h1m2 0h1m-4 1h1m2 0h1m-3 1h2m-2 1h2m-4 1h2m2 0h2m-9 1h3m6 0h3"/><path id="gf0" d="M3 -9.5h1m-1 1h9m-10 1h1m4 0h1m-7 1h1m5 0h1m-5 1h8m-8 1h1m3 0h1m-5 1h1m3 0h1m-5 1h1m3 0h1m-8 1h12m-5 1h1m-1 1h1m-1 1h1"/><path id="gf1" d="M3 -9.5h1m4 0h1m-8 1h1m1 0h1m4 0h1m-8 1h1m1 0h3m1 0h1m1 0h1m-9 1h1m1 0h1m3 0h1m2 0h1m-11 1h7m1 0h1m2 0h1m-3 1h1m-10 1h1m2 0h1m1 0h1m-6 1h1m2 0h1m1 0h7m-12 1h1m1 0h1m1 0h2m4 0h1m-11 1h2m3 0h1m1 0h1m1 0h1m-10 1h1m2 0h3m2 0h1m-9 1h3m2 0h1m3 0h1"/><path id="gf2" d="M6 -9.5h1m-6 1h1m4 0h1m3 0h1m-10 1h1m4 0h1m3 0h1m-10 1h10m-6 1h1m-2 1h7m-8 1h1m5 0h1m-9 1h2m1 0h1m3 0h1m-4 1h1m1 0h1m-2 1h1m-3 1h2m-6 1h4"/><path id="gf3" d="M1 -9.5h1m3 0h7m-10 1h1m3 1h5m-11 1h5m1 0h1m3 0h1m-8 1h1m2 0h5m-9 1h1m-1 1h2m1 0h7m-11 1h2m1 0h2m2 0h1m2 0h1m-12 1h1m1 0h1m2 0h7m-10 1h1m2 0h1m2 0h1m2 0h1m-10 1h1m2 0h7m-10 1h1m2 0h1m5 0h1"/><path id="gf4" d="M3 -9.5h1m7 0h1m-9 1h1m3 0h1m3 0h1m-9 1h1m3 0h1m3 0h1m-9 1h1m3 0h1m3 0h1m-11 1h1m1 0h2m2 0h2m2 0h1m-11 1h1m1 0h1m1 0h1m1 0h1m1 0h1m1 0h1m-12 1h1m2 0h1m3 0h1m1 0h1m1 0h1m-9 1h1m3 0h1m3 0h1m-9 1h1m3 0h1m3 0h1m-9 1h1m3 0h1m3 0h1m-10 1h1m4 0h1m3 0h1m-11 1h1m9 0h1"/><path id="gf5" d="M4 -9.5h1m0 1h1m-6 1h12m-7 1h1m-4 1h8m-8 1h1m2 0h1m3 0h1m-8 1h1m2 0h1m3 0h1m-8 1h1m2 0h1m3 0h1m-8 1h1m2 0h1m3 0h1m-8 1h1m2 0h1m1 0h1m1 0h1m-8 1h1m2 0h1m2 0h1m-4 1h1"/><path id="gf6" d="M3 -9.5h1m1 0h6m-8 1h1m1 0h1m4 0h1m-9 1h1m2 0h1m4 0h1m-9 1h1m2 0h6m-10 1h2m5 0h1m-9 1h1m1 0h1m5 0h1m-7 1h1m1 0h8m-10 1h1m4 0h2m-7 1h1m3 0h1m1 0h2m-8 1h1m2 0h1m2 0h1m1 0h1m-9 1h1m1 0h1m3 0h1m2 0h1m-10 1h1m5 0h1"/><path id="gf7" d="M5 -9.5h1m-1 1h1m-5 1h10m-10 1h1m3 0h1m4 0h1m-10 1h1m3 0h1m4 0h1m-10 1h1m3 0h1m4 0h1m-10 1h10m-10 1h1m3 0h1m4 0h1m-6 1h1m-1 1h1m-1 1h1m-1 1h1"/><path id="gf8" d="M4 -9.5h1m0 1h1m0 1h1m-4 1h1m2 0h1m-4 1h1m5 0h1m-9 1h1m1 0h1m6 0h1m-10 1h1m1 0h1m7 0h1m-11 1h1m1 0h1m4 0h1m2 0h1m-11 1h1m1 0h1m4 0h1m2 0h1m-12 1h1m2 0h1m4 0h1m-6 1h1m4 0h1m-5 1h5"/><path id="gf9" d="M3 -9.5h2m0 1h1m-1 1h1m-1 1h1m-2 1h1m1 0h1m-3 1h1m1 0h1m-3 1h1m1 0h1m-4 1h1m3 0h1m-5 1h1m3 0h1m-6 1h1m5 0h1m-8 1h1m7 0h1m-10 1h1m9 0h2"/><path id="gfa" d="M2 -8.5h8m-8 1h1m6 0h1m-8 1h1m6 0h1m-8 1h1m6 0h1m-8 1h8m-8 1h1m6 0h1m-8 1h1m6 0h1m-8 1h1m6 0h1m-8 1h1m6 0h1m-8 1h8m-8 1h1m6 0h1"/><path id="gfb" d="M3 -9.5h1m3 0h1m2 0h1m-11 1h1m2 0h1m3 0h1m3 0h1m-11 1h1m1 0h1m3 0h1m-7 1h1m1 0h9m-9 1h1m3 0h1m-5 1h1m3 0h1m-6 1h2m3 0h1m-8 1h2m1 0h1m2 0h1m1 0h1m-6 1h1m2 0h1m1 0h1m-6 1h1m1 0h1m3 0h1m-7 1h1m1 0h1m4 0h1m-8 1h2m6 0h1"/><path id="gfc" d="M5 -9.5h1m-1 1h1m-6 1h12m-8 1h1m2 0h1m-5 1h1m4 0h1m-7 1h1m2 0h1m3 0h1m-10 1h2m4 0h1m3 0h2m-9 2h1m1 0h1m4 0h1m-10 1h1m1 0h1m2 0h1m1 0h1m2 0h1m-11 1h1m1 0h1m4 0h1m2 0h1m-12 1h1m3 0h5"/><path id="gfd" d="M5 -9.5h1m-1 1h1m-2 1h1m1 0h1m-4 1h1m3 0h1m-6 1h1m1 0h1m3 0h1m-9 1h2m3 0h1m3 0h2m-9 2h7m-2 1h1m-2 1h1m-1 1h1m-2 1h1"/><path id="gfe" d="M2 -9.5h1m5 0h1m-7 1h1m5 0h1m-7 1h1m2 0h1m2 0h1m1 0h1m-11 1h4m1 0h1m2 0h4m-10 1h1m2 0h4m1 0h1m-9 1h1m1 0h2m2 0h1m1 0h1m-9 1h1m2 0h1m2 0h1m1 0h1m-9 1h1m2 0h1m2 0h1m1 0h1m-9 1h1m2 0h1m2 0h3m-9 1h2m1 0h1m2 0h1m2 0h1m-12 1h2m3 0h1m5 0h1m-6 1h6"/><path id="gff" d="M2 -9.5h1m5 0h1m-7 1h1m5 0h1m-7 1h1m5 0h1m-7 1h1m3 0h1m1 0h1m-9 1h5m1 0h1m1 0h1m-7 1h1m3 0h1m1 0h3m-9 1h1m3 0h1m1 0h1m-7 1h1m3 0h1m1 0h1m-7 1h1m3 0h1m1 0h1m-7 1h3m1 0h1m1 0h1m-9 1h2m4 0h1m1 0h1m-6 1h9"/><path id="g100" d="M7 -9.5h1m-8 1h3m2 0h6m-9 1h1m4 0h1m2 0h1m-9 1h1m1 0h8m-11 1h1m5 0h1m2 0h1m-10 1h3m1 0h6m-8 1h1m3 0h1m-7 1h1m1 0h1m1 0h6m-9 1h1m4 0h1m-6 1h1m1 0h8m-11 1h1m1 0h1m3 0h1m-8 1h1m3 0h8"/><path id="g101" d="M5 -9.5h1m-3 1h1m1 0h1m3 0h1m-8 1h1m2 0h1m2 0h1m1 0h1m-10 1h1m3 0h1m1 0h1m3 0h1m-12 1h1m4 0h2m4 0h1m-8 1h6m-8 1h2m5 0h1m-10 1h2m1 0h7m-7 1h1m5 0h1m-7 1h7m-7 1h1m5 0h1m-7 1h7"/><path id="g102" d="M2 -9.5h1m5 0h1m-9 1h5m3 0h1m-7 1h1m2 0h7m-12 1h5m3 0h1m-1 1h1m-9 1h5m1 0h5m-11 1h1m3 0h1m1 0h1m3 0h1m-11 1h5m2 0h1m2 0h1m-11 1h1m3 0h1m2 0h1m1 0h1m-9 1h1m1 0h1m4 0h1m-7 1h3m2 0h1m1 0h1m-10 1h2m3 0h2m3 0h2"/><path id="g103" d="M2 -9.5h1m2 0h1m2 0h1m2 0h1m-10 1h1m3 0h1m1 0h1m1 0h1m-11 1h5m3 0h1m-7 1h1m2 0h7m-11 1h2m3 0h1m1 0h1m1 0h1m-10 1h3m1 0h1m2 0h1m2 0h1m-12 1h1m1 0h1m1 0h1m2 0h1m-6 1h1m2 0h7m-10 1h1m3 0h1m2 0h1m-8 1h1m2 0h2m2 0h1m-8 1h1m4 0h2m-7 1h1m1 0h3m2 0h3"/><path id="g104" d="M6 -9.5h1m-6 1h4m1 0h5m-10 1h1m2 0h1m1 0h1m3 0h1m-10 1h1m2 0h2m1 0h1m1 0h1m-9 1h1m2 0h1m3 0h1m-8 1h4m1 0h2m1 0h2m-8 1h1m1 0h1m5 0h1m-11 1h1m1 0h2m1 0h5m-10 1h1m1 0h1m2 0h1m3 0h1m-10 1h1m1 0h1m2 0h1m3 0h1m-10 1h1m1 0h2m1 0h1m3 0h1m-11 1h3m3 0h5"/><path id="g105" d="M5 -9.5h1m-1 1h1m-6 1h11m-6 1h1m-1 1h1m-5 1h9m-5 1h1m-1 1h1m-6 1h11m-6 1h1m-1 1h1m-1 1h1"/><path id="g106" d="M1 -9.5h1m2 0h7m-9 1h1m2 0h1m3 0h1m-4 1h1m1 0h1m-9 1h1m6 0h1m-7 1h1m1 0h1m2 0h1m1 0h1m-6 1h3m3 0h3m-10 1h1m4 0h1m-8 1h3m2 0h6m-9 1h1m4 0h1m-6 1h1m1 0h8m-10 1h1m4 0h1m-6 1h1m4 0h1"/><path id="g107" d="M2 -9.5h1m4 0h1m-5 1h1m2 0h1m-6 1h9m-9 1h1m3 0h1m3 0h1m-9 1h9m-9 1h1m3 0h1m3 0h1m-9 1h9m-5 1h1m-6 1h11m-6 1h1m-1 1h1m-1 1h1"/><path id="g108" d="M3 -9.5h2m3 0h1m-9 1h3m5 0h1m-7 1h1m5 0h1m-7 1h1m2 0h7m-12 1h6m2 0h1m2 0h1m-10 1h1m2 0h1m2 0h1m2 0h1m-11 1h3m1 0h1m2 0h1m2 0h1m-11 1h2m1 0h8m-12 1h1m1 0h1m5 0h1m-7 1h1m5 0h1m-7 1h1m5 0h1m-7 1h1m5 0h1"/><path id="g109" d="M3 -8.5h1m-1 1h1m2 0h4m-9 1h5m3 0h1m-7 1h1m5 0h1m-10 1h10m-7 1h1m2 0h1m-6 1h1m1 0h1m2 0h1m3 0h1m-10 1h1m1 0h4m3 0h1m-10 1h1m1 0h1m2 0h5m-11 1h1m1 0h2m-4 1h1m3 0h7"/><path id="g10a" d="M2 -8.5h1m2 0h6m-8 1h1m6 0h1m-10 1h1m8 0h1m-10 1h1m2 0h4m2 0h1m-10 1h1m2 0h1m2 0h1m2 0h1m-10 1h1m2 0h4m2 0h1m-10 1h1m2 0h1m2 0h1m2 0h1m-10 1h1m2 0h1m2 0h1m2 0h1m-10 1h1m2 0h4m2 0h1m-10 1h1m8 0h1m-10 1h1m6 0h3"/><path id="g10b" d="M6 -8.5h1m-5 1h1m3 0h1m-5 1h1m3 0h1m-5 1h9m-10 1h1m4 0h1m-7 1h1m5 0h1m-4 1h7m-4 1h1m-1 1h1m-1 1h1m-6 1h10"/><path id="g10c" d="M2 -8.5h7m-1 1h1m-7 1h7m-1 1h1m-9 1h11m-9 1h1m2 0h1m3 0h1m-7 1h1m1 0h2m1 0h1m-5 1h2m1 0h1m-6 1h2m1 0h1m2 0h1m-9 1h2m3 0h1m3 0h2m-7 1h2"/><path id="g10d" d="M3 -8.5h2m0 1h1m-1 1h1m-1 1h1m-2 1h1m1 0h1m-3 1h1m1 0h1m-4 1h1m3 0h1m-5 1h1m3 0h1m-6 1h1m5 0h1m-8 1h1m7 0h1m-10 1h1m9 0h1"/><path id="g10e" d="M5 -8.5h1m-1 1h1m-5 1h10m-10 1h1m3 0h1m4 0h1m-10 1h1m3 0h1m4 0h1m-10 1h1m3 0h2m3 0h1m-10 1h1m2 0h1m2 0h1m2 0h1m-10 1h1m1 0h1m4 0h1m1 0h1m-10 1h1m8 0h1m-10 1h1m8 0h1m-10 1h1m6 0h3"/><path id="g10f" d="M5 -8.5h1m-6 1h11m-11 1h1m2 0h1m3 0h1m2 0h1m-9 1h1m2 0h1m2 0h1m-8 1h1m2 0h1m1 0h1m2 0h1m-7 1h1m3 0h1m-6 1h1m5 0h1m-9 1h2m1 0h5m1 0h2m-8 1h1m3 0h1m-5 1h1m3 0h1m-5 1h5"/><path id="g110" d="M2 -8.5h7m-7 1h1m5 0h1m-7 1h7m-7 1h1m5 0h1m-9 1h11m-9 1h1m2 0h1m2 0h1m-7 1h7m-7 1h1m2 0h1m2 0h1m-8 1h9m-5 1h1m-6 1h11"/><path id="g111" d="M1 -8.5h1m2 0h1m2 0h4m-11 1h6m1 0h1m2 0h1m-10 1h1m2 0h1m2 0h1m2 0h1m-10 1h4m2 0h4m-10 1h1m2 0h1m2 0h1m2 0h1m-10 1h4m2 0h1m2 0h1m-10 1h1m2 0h1m2 0h4m-11 1h6m1 0h1m2 0h1m-4 1h1m2 0h1m-10 1h1m2 0h1m2 0h1m2 0h1m-11 1h1m4 0h2m2 0h2"/><path id="g112" d="M5 -8.5h1m-1 1h1m-1 1h1m-1 1h1m-6 1h11m-6 1h1m-1 1h1m-1 1h1m-1 1h1m-1 1h1m-5 1h9"/><path id="g113" d="M6 -8.5h1m2 0h1m-10 1h4m2 0h1m2 0h1m-10 1h1m2 0h1m1 0h1m3 0h1m-10 1h1m2 0h1m1 0h6m-11 1h1m2 0h3m3 0h1m-10 1h1m2 0h1m1 0h1m1 0h1m1 0h1m-10 1h4m1 0h1m2 0h2m-10 1h1m2 0h1m1 0h1m3 0h1m-5 1h1m3 0h1m-5 1h1m3 0h1m-5 1h1m1 0h3"/><path id="g114" d="M2 -8.5h7m-7 1h1m5 0h1m-7 1h7m-9 2h11m-7 1h1m-2 1h6m-1 1h1m-1 1h1m-4 1h1m2 0h1m-3 1h2"/><path id="g115" d="M3 -8.5h2m4 0h1m-10 1h3m3 0h1m2 0h1m-8 1h1m4 0h1m1 0h1m-10 1h5m4 0h1m-8 1h1m3 0h1m2 0h1m-8 1h2m3 0h1m1 0h1m-9 1h2m1 0h1m4 0h2m-11 1h1m1 0h1m4 0h3m-8 1h1m2 0h2m2 0h1m-8 1h1m6 0h1m-8 1h1m6 0h1"/><path id="g116" d="M5 -8.5h1m-6 1h11m-11 1h1m9 0h1m-11 1h1m1 0h7m1 0h1m-7 1h1m-2 1h1m3 0h1m-6 1h5m1 0h1m-4 1h1m-4 1h7m-4 1h1m-6 1h11"/><path id="g117" d="M1 -8.5h1m2 0h7m-10 1h1m-1 1h3m1 0h5m-10 1h1m1 0h1m2 0h1m3 0h1m-8 1h1m2 0h1m3 0h1m-10 1h4m1 0h5m-8 1h1m-1 1h1m2 0h1m3 0h1m-9 1h1m1 0h1m2 0h1m1 0h1m-8 1h1m6 0h1m-9 1h1m3 0h7"/><path id="g118" d="M0 -8.5h11m-6 1h1m-3 1h6m-6 1h1m4 0h1m-6 1h3m2 0h1m-6 1h1m1 0h4m-6 1h1m4 0h1m-7 1h7m-8 1h1m2 0h1m2 0h1m-8 1h1m4 0h2m-5 1h3m2 0h4"/><path id="g119" d="M1 -8.5h1m5 0h1m-7 1h5m1 0h1m-8 1h1m6 0h4m-10 1h7m1 0h1m-9 1h1m1 0h1m1 0h1m1 0h1m1 0h1m-10 1h8m1 0h1m-9 1h1m1 0h1m1 0h1m1 0h1m1 0h1m-9 1h1m1 0h1m1 0h1m1 0h1m1 0h1m-10 1h7m1 0h1m-4 1h1m1 0h1m1 0h1m-7 1h2m1 0h1m3 0h1"/><path id="g11a" d="M1 -8.5h1m0 1h1m2 0h5m-10 1h1m6 0h1m-7 1h1m1 0h1m3 0h1m-5 1h1m3 0h1m-6 1h1m4 0h1m-6 1h1m4 0h1m-8 1h2m5 0h1m-7 1h1m5 0h1m-7 1h1m1 0h8m-10 1h1"/><path id="g11b" d="M2 -8.5h7m-1 1h1m-7 1h7m-1 1h1m-7 1h7m-4 1h1m-3 1h1m1 0h1m3 0h1m-8 1h1m2 0h1m2 0h1m-5 1h1m1 0h1m-4 1h1m3 0h1m-8 1h3m5 0h3"/><path id="g11c" d="M4 -8.5h3m1 0h3m-11 1h5m1 0h1m1 0h1m1 0h1m-9 1h1m1 0h1m1 0h1m1 0h1m1 0h1m-9 1h1m1 0h1m1 0h1m1 0h1m1 0h1m-11 1h11m-9 1h1m1 0h1m1 0h1m1 0h1m1 0h1m-9 1h1m1 0h1m1 0h1m1 0h1m1 0h1m-9 1h3m1 0h1m1 0h1m1 0h1m-11 1h3m1 0h1m1 0h1m1 0h1m1 0h1m-7 1h1m1 0h1m1 0h1m1 0h1m-8 1h1m1 0h1m1 0h1m1 0h2"/><path id="g11d" d="M5 -8.5h1m-6 1h11m-6 1h1m-2 1h1m1 0h1m-5 1h3m2 0h2m-9 1h2m3 0h1m3 0h2m-8 2h1m1 0h1m3 0h1m-9 1h1m1 0h1m2 0h1m1 0h1m1 0h1m-10 1h1m1 0h1m4 0h1m1 0h1m-11 1h1m3 0h5"/><path id="g11e" d="M3 -8.5h1m3 0h1m-5 1h1m3 0h1m-6 1h1m5 0h1m-7 1h1m5 0h1m-8 1h1m7 0h1m-10 1h1m1 0h7m1 0h1m-7 1h1m3 0h1m-5 1h1m3 0h1m-6 1h1m4 0h1m-7 1h1m5 0h1m-9 1h2m4 0h2"/><path id="g11f" d="M2 -8.5h1m5 0h2m-8 1h1m2 0h3m-8 1h6m-4 1h1m2 0h1m-4 1h1m2 0h6m-9 1h2m1 0h1m2 0h1m-8 1h2m1 0h2m2 0h1m-9 1h1m1 0h1m2 0h1m2 0h1m-7 1h1m2 0h1m2 0h1m-7 1h1m1 0h1m3 0h1m-7 1h2m4 0h1"/><path id="g120" d="M2 -8.5h1m3 0h1m-7 1h1m1 0h1m3 0h1m-7 1h1m1 0h1m2 0h6m-11 1h5m1 0h1m1 0h1m1 0h1m-11 1h1m1 0h1m3 0h1m1 0h1m1 0h1m-9 1h2m2 0h1m1 0h1m1 0h1m-10 1h2m2 0h1m2 0h1m1 0h1m-11 1h1m1 0h1m1 0h1m2 0h1m2 0h1m-9 1h1m3 0h1m3 0h1m-9 1h1m2 0h1m1 0h1m2 0h1m-9 1h1m1 0h1m3 0h2"/><path id="g121" d="M1 -8.5h1m5 0h1m-6 1h1m4 0h1m-8 1h1m5 0h1m-6 1h1m1 0h1m1 0h1m3 0h1m-8 1h9m-9 1h1m7 0h1m-11 1h2m3 0h5m-9 1h1m3 0h1m3 0h1m-9 1h1m3 0h1m3 0h1m-9 1h1m3 0h5m-9 1h1m3 0h1m3 0h1"/><path id="g122" d="M6 -8.5h1m-5 1h9m-11 1h1m1 0h1m-2 1h2m1 0h7m-9 1h1m6 0h1m-9 1h2m4 0h2m-9 1h1m1 0h1m4 0h1m-6 1h1m4 0h1m-6 1h1m4 0h1m-7 1h1m5 0h1m-8 1h1m4 0h3"/><path id="g123" d="M2 -8.5h1m1 0h3m1 0h3m-10 1h1m1 0h1m1 0h1m-6 1h1m2 0h5m-6 1h2m1 0h1m1 0h4m-10 1h1m1 0h5m1 0h1m-10 1h2m1 0h1m1 0h1m1 0h1m1 0h1m-9 1h1m1 0h5m1 0h1m-9 1h1m3 0h1m3 0h1m-9 1h1m1 0h5m1 0h1m-9 1h1m2 0h1m1 0h1m2 0h1m-9 1h1m1 0h1m3 0h3"/><path id="g124" d="M0 -8.5h4m3 0h1m-5 1h1m3 0h1m-7 1h1m1 0h1m2 0h1m1 0h1m-8 1h1m1 0h3m3 0h2m-10 1h1m1 0h1m2 0h3m-8 1h4m-1 1h1m1 0h1m2 0h1m-8 1h4m1 0h1m1 0h1m-10 1h2m2 0h1m1 0h1m1 0h1m-5 1h1m2 0h1m-6 1h2m1 0h6"/><path id="g125" d="M6 -8.5h4m-9 1h5m-1 1h1m-5 1h9m-5 1h1m-1 1h1m-6 1h11m-6 1h1m-1 1h1m-1 1h1m-2 1h2"/><path id="g126" d="M7 -8.5h1m-1 1h1m-8 1h5m2 0h1m-6 1h1m2 0h6m-9 1h1m4 0h1m2 0h1m-9 1h1m4 0h1m2 0h1m-9 1h1m4 0h1m2 0h1m-9 1h3m1 0h1m3 0h1m-11 1h2m4 0h1m3 0h1m-6 1h1m4 0h1m-8 1h2m3 0h2"/><path id="g127" d="M2 -8.5h1m4 0h1m-7 1h1m2 0h1m2 0h1m1 0h1m-10 1h6m1 0h2m-2 1h1m2 0h1m-10 1h5m1 0h4m-10 1h1m3 0h1m-5 1h5m1 0h1m1 0h1m-9 1h1m3 0h1m1 0h2m-8 1h5m1 0h1m2 0h1m-10 1h1m3 0h1m1 0h1m2 0h1m-10 1h1m2 0h2m1 0h4"/><path id="g128" d="M1 -8.5h1m2 0h7m-9 1h1m4 0h1m-4 1h1m2 0h1m2 0h1m-6 1h1m1 0h1m1 0h1m-10 1h3m4 0h1m-6 1h1m1 0h7m-9 1h1m4 0h1m-6 1h1m1 0h1m2 0h1m-6 1h2m3 0h1m-6 1h1m4 0h1m-1 1h1"/><path id="g129" d="M3 -8.5h1m1 0h1m-3 1h1m1 0h1m-4 1h1m2 0h6m-9 1h1m1 0h1m1 0h1m-6 1h3m2 0h1m-7 1h1m1 0h1m3 0h4m-8 1h1m3 0h1m-5 1h1m3 0h1m-5 1h1m3 0h5m-9 1h1m3 0h1m-5 1h1m3 0h1"/><path id="g12a" d="M4 -8.5h1m2 0h1m-4 1h1m2 0h1m-4 1h1m2 0h1m2 0h1m-11 1h1m3 0h1m2 0h1m2 0h1m-10 1h1m2 0h1m2 0h1m1 0h1m-8 1h1m1 0h1m2 0h1m1 0h1m-8 1h1m1 0h1m2 0h2m-5 1h1m2 0h1m-4 1h1m2 0h1m-4 1h1m2 0h1m-8 1h11"/><path id="g12b" d="M1 -8.5h1m6 0h2m-8 1h1m2 0h3m-8 1h1m6 0h1m-7 1h1m1 0h8m-8 1h1m3 0h1m-6 1h1m4 0h1m-6 1h1m2 0h5m-10 1h2m3 0h1m3 0h1m-9 1h1m3 0h1m3 0h1m-9 1h1m3 0h5m-9 1h1m3 0h1m3 0h1"/><path id="g12c" d="M5 -8.5h1m-1 1h1m-1 1h1m-5 1h9m-5 1h1m3 0h1m-5 1h1m3 0h1m-6 1h1m4 0h1m-6 1h1m4 0h1m-7 1h1m5 0h1m-8 1h1m6 0h1m-9 1h1m4 0h3"/><path id="g12d" d="M3 -8.5h1m4 0h1m-6 1h1m3 0h1m-5 1h1m2 0h1m-4 1h1m1 0h1m-3 1h2m-4 1h10m-8 1h1m1 0h1m-3 1h1m2 0h1m-4 1h1m3 0h1m-5 1h1m1 0h1m2 0h1m-6 1h2m4 0h2"/><path id="g12e" d="M2 -8.5h1m2 0h1m-4 1h1m2 0h1m-4 1h8m-9 1h1m3 0h1m-1 1h1m-6 1h11m-7 1h3m-4 1h1m1 0h1m1 0h1m-6 1h1m2 0h1m2 0h1m-9 1h2m3 0h1m3 0h2m-6 1h1"/><path id="g12f" d="M6 -8.5h1m-6 1h10m-10 1h1m4 0h1m-6 1h1m1 0h7m-9 1h1m4 0h1m2 0h1m-9 1h10m-10 1h1m4 0h1m2 0h1m-9 1h1m1 0h7m-9 1h1m1 0h1m2 0h1m2 0h1m-10 1h1m3 0h1m1 0h1m1 0h1m-9 1h1m1 0h2m1 0h2m2 0h2"/><path id="g130" d="M2 -8.5h1m-1 1h9m-10 1h2m5 0h1m-9 1h1m1 0h7m-7 1h1m5 0h1m-7 1h7m-6 1h1m-2 1h7m-9 1h2m2 0h1m2 0h1m-3 1h2m-7 1h5m2 0h4"/><path id="g131" d="M9 -4.5h1m-10 1h11"/><path id="g132" d="M3 -8.5h1m2 0h4m-9 1h4m1 0h1m2 0h1m-9 1h1m2 0h1m1 0h1m2 0h1m-9 1h2m1 0h1m1 0h1m2 0h2m-10 1h1m1 0h3m-6 1h5m1 0h5m-10 1h1m2 0h1m1 0h1m3 0h1m-10 1h2m1 0h1m2 0h1m1 0h1m-9 1h1m1 0h2m3 0h1m-8 1h1m2 0h1m2 0h1m1 0h1m-10 1h1m2 0h2m1 0h1m3 0h1"/><path id="g133" d="M0 -8.5h1m1 0h5m3 0h1m-10 1h2m3 0h1m1 0h1m1 0h1m-9 1h1m1 0h1m1 0h1m1 0h1m1 0h1m-11 1h1m1 0h1m1 0h1m1 0h1m1 0h1m1 0h1m-10 1h2m1 0h1m1 0h1m1 0h1m1 0h1m-9 1h1m1 0h1m1 0h1m1 0h1m1 0h1m-9 1h1m1 0h1m1 0h1m1 0h1m1 0h1m-11 1h2m2 0h1m3 0h1m1 0h1m-10 1h1m1 0h1m1 0h1m4 0h1m-10 1h2m3 0h1m3 0h1m-10 1h1m6 0h3"/><path id="g134" d="M0 -1.5h1m0 1h2m-1 1h1"/><path id="g135" d="M3 -8.5h2m-4 1h2m3 0h5m-10 1h1m2 0h1m2 0h1m2 0h1m-10 1h1m1 0h2m2 0h1m2 0h1m-10 1h2m1 0h1m1 0h1m1 0h1m1 0h1m-10 1h1m3 0h1m3 0h1m-8 1h8m-8 1h1m2 0h1m3 0h1m-8 1h8m-8 1h1m2 0h1m3 0h1m-8 1h8"/><path id="g136" d="M3 -8.5h1m3 0h1m-5 1h2m2 0h1m2 0h1m-9 1h1m2 0h1m1 0h1m1 0h1m-8 1h1m4 0h1m-7 1h2m2 0h5m-10 1h1m1 0h1m4 0h1m-6 1h1m4 0h1m-6 1h1m1 0h7m-9 1h1m4 0h1m-6 1h1m4 0h1m-6 1h1m4 0h1"/><path id="g137" d="M0 -8.5h4m2 0h1m-7 1h1m2 0h1m3 0h1m-8 1h1m1 0h1m1 0h7m-11 1h2m4 0h1m-7 1h1m1 0h1m3 0h4m-10 1h1m2 0h1m2 0h1m2 0h1m-10 1h1m2 0h1m2 0h1m2 0h1m-10 1h2m1 0h1m2 0h1m2 0h1m-10 1h1m1 0h1m2 0h1m3 0h1m-10 1h1m3 0h1m4 0h1m-10 1h1m2 0h1m3 0h2"/><path id="g138" d="M1 -8.5h1m3 0h6m-9 1h1m2 0h1m1 0h3m-10 1h6m-3 1h1m1 0h6m-9 1h1m1 0h2m1 0h2m1 0h1m-10 1h3m1 0h1m1 0h1m1 0h1m-10 1h1m1 0h1m1 0h2m1 0h1m2 0h1m-9 1h1m1 0h7m-9 1h1m2 0h2m2 0h1m-8 1h1m1 0h1m2 0h1m1 0h1m-8 1h2m4 0h1"/><path id="g139" d="M6 -8.5h1m-5 1h9m-11 1h1m1 0h1m4 0h1m-7 1h2m3 0h1m1 0h1m-7 1h1m2 0h1m3 0h1m-9 1h2m1 0h5m1 0h1m-11 1h1m1 0h2m1 0h1m2 0h1m-7 1h1m2 0h1m2 0h1m-7 1h1m2 0h1m1 0h1m2 0h1m-10 1h1m3 0h1m4 0h1m-11 1h1m5 0h5"/><path id="g13a" d="M3 -8.5h1m4 0h2m-7 1h5m-6 1h1m1 0h1m2 0h1m-6 1h1m1 0h1m2 0h1m-7 1h2m1 0h1m2 0h1m-8 1h1m1 0h1m1 0h7m-9 1h1m1 0h1m2 0h1m-6 1h1m1 0h1m2 0h1m2 0h1m-9 1h1m1 0h1m1 0h1m1 0h1m1 0h1m-9 1h1m1 0h2m1 0h1m1 0h2m-9 1h1m1 0h1m3 0h1m1 0h1"/><path id="g13b" d="M3 -8.5h1m3 0h1m-5 1h1m3 0h1m-7 1h5m1 0h2m-6 1h1m3 0h1m1 0h2m-8 1h3m1 0h1m2 0h1m-10 1h3m3 0h1m-6 2h8m-8 1h1m1 0h1m2 0h1m1 0h1m-8 1h1m1 0h1m2 0h1m1 0h1m-9 1h10"/><path id="g13c" d="M1 -8.5h1m4 0h1m-6 1h1m4 0h1m-6 1h4m1 0h5m-10 1h1m2 0h1m1 0h1m3 0h1m-11 1h1m1 0h1m2 0h1m1 0h1m1 0h1m-8 1h1m4 0h1m-6 1h1m4 0h1m-6 1h1m4 0h1m-6 1h1m3 0h1m1 0h1m-7 1h2m1 0h1m3 0h1m-8 1h1m1 0h1m5 0h1"/><path id="g13d" d="M5 -8.5h1m-2 1h1m1 0h1m-4 1h1m1 0h1m1 0h1m-6 1h9m-11 1h2m1 0h1m4 0h1m-6 1h6m-6 1h1m4 0h1m-6 1h6m-6 1h1m2 0h1m2 0h1m-7 1h1m1 0h1m1 0h2m-6 1h2m4 0h2"/><path id="g13e" d="M1 -8.5h10m-8 1h1m4 0h1m-6 1h1m4 0h1m-6 1h6m-6 1h1m4 0h1m-6 1h6m-6 1h1m4 0h1m-6 1h1m4 0h3m-10 1h8m-1 1h1m-1 1h1"/><path id="g13f" d="M1 -8.5h1m6 0h1m-8 1h1m6 0h1m-8 1h4m3 0h1m-9 1h1m7 0h1m-9 1h5m1 0h5m-9 1h1m5 0h1m-9 1h5m3 0h1m-7 1h1m5 0h1m-7 1h1m1 0h1m3 0h1m-7 1h2m4 0h1m-7 1h1m5 0h1"/><path id="g140" d="M2 -8.5h1m-1 1h9m-10 1h1m-2 1h1m2 0h6m-6 1h1m1 0h1m2 0h1m-9 1h11m-9 1h1m2 0h1m2 0h1m-7 1h1m3 0h1m1 0h1m-8 1h10m-3 1h1m-3 1h2"/><path id="g141" d="M2 -8.5h9m-9 1h1m3 0h1m3 0h1m-9 1h1m1 0h5m1 0h1m-9 1h1m3 0h1m3 0h1m-9 1h9m-9 1h1m7 0h1m-9 1h1m1 0h5m1 0h1m-9 1h1m1 0h1m3 0h1m1 0h1m-10 1h1m2 0h5m1 0h1m-10 1h1m8 0h1m-11 1h1m8 0h2"/><path id="g142" d="M1 -8.5h1m4 0h1m-5 1h1m3 0h1m-5 1h1m2 0h6m-6 1h1m3 0h1m-8 1h1m1 0h1m2 0h1m-6 1h1m4 0h1m-8 1h2m5 0h1m-7 1h1m4 0h1m1 0h1m-8 1h1m4 0h1m1 0h1m-8 1h1m3 0h1m3 0h1m-7 1h2m5 0h1"/><path id="g143" d="M3 -8.5h1m3 0h1m-7 1h9m-9 1h1m2 0h1m1 0h1m2 0h1m-8 1h1m1 0h1m1 0h1m1 0h1m-9 1h11m-9 2h7m-7 1h1m5 0h1m-7 1h7m-7 1h1m5 0h1m-7 1h7"/><path id="g144" d="M1 -8.5h1m2 0h6m-8 1h1m3 0h1m1 0h1m-7 1h1m1 0h7m-7 1h1m2 0h1m2 0h1m-11 1h3m1 0h7m-9 1h1m1 0h1m2 0h1m2 0h1m-9 1h1m1 0h7m-9 1h1m1 0h1m2 0h1m2 0h1m-9 1h1m1 0h1m2 0h1m1 0h2m-10 1h1m1 0h1m-4 1h1m3 0h7"/><path id="g145" d="M3 -8.5h1m6 0h1m-11 1h7m1 0h1m1 0h1m-8 1h1m4 0h1m1 0h1m-10 1h6m1 0h1m1 0h1m-10 1h1m1 0h1m2 0h1m1 0h1m1 0h1m-10 1h1m1 0h1m2 0h1m1 0h1m1 0h1m-10 1h1m1 0h1m1 0h2m1 0h1m1 0h1m-9 1h3m3 0h1m1 0h1m-10 1h1m1 0h1m1 0h1m4 0h1m-11 1h1m2 0h1m2 0h1m3 0h1m-8 1h1m5 0h2"/><path id="g146" d="M1 -8.5h1m3 0h5m-8 1h1m-1 1h1m1 1h7m-11 1h3m3 0h1m-5 1h1m3 0h1m1 0h1m-7 1h1m2 0h1m3 0h1m-8 1h1m1 0h5m1 0h1m-9 1h1m2 0h1m4 0h1m-10 1h1m1 0h1m-4 1h1m3 0h7"/><path id="g147" d="M1 -8.5h1m5 0h1m-6 1h1m4 0h1m-3 1h5m-10 1h1m6 0h1m-7 1h1m5 0h1m-4 1h7m-9 1h1m4 0h1m-8 1h2m4 0h1m-6 1h1m3 0h1m3 0h1m-9 1h1m2 0h5m1 0h1m-10 1h1m3 0h1m4 0h1"/><path id="g148" d="M2 -8.5h1m1 0h1m1 0h1m1 0h1m-8 1h2m1 0h1m1 0h1m1 0h1m-9 1h1m1 0h5m1 0h1m-2 1h4m-10 1h1m1 0h3m1 0h1m1 0h1m-10 1h2m4 0h2m1 0h1m-9 1h1m1 0h3m1 0h1m1 0h1m-9 1h1m1 0h1m1 0h1m2 0h1m-8 1h1m1 0h1m1 0h2m1 0h1m-8 1h1m1 0h1m1 0h1m1 0h1m1 0h1m-9 1h2m3 0h1m3 0h1"/><path id="g149" d="M3 -8.5h1m2 0h1m-3 1h1m1 0h1m-5 1h1m3 0h1m-4 1h1m2 0h1m-1 1h1m-7 1h11m-5 1h1m-2 1h1m1 0h1m-4 1h1m3 0h1m-6 1h1m5 0h1m-9 1h2m7 0h1"/><path id="g14a" d="M6 -8.5h1m-5 1h9m-11 1h1m1 0h1m2 0h1m-5 1h2m2 0h6m-9 1h1m1 0h1m2 0h1m-7 1h2m4 0h1m-8 1h1m1 0h9m-9 1h1m4 0h1m-6 1h1m3 0h1m1 0h1m-8 1h1m3 0h1m3 0h1m-10 1h1m2 0h2m5 0h1"/><path id="g14b" d="M2 -8.5h1m2 0h1m1 0h1m-6 1h1m2 0h1m2 0h1m-9 1h4m1 0h6m-9 1h1m2 0h1m2 0h1m-7 1h1m1 0h2m2 0h1m-7 1h2m1 0h6m-10 1h2m2 0h1m2 0h1m-9 1h1m1 0h1m2 0h6m-9 1h1m2 0h1m2 0h1m-7 1h1m2 0h1m2 0h1m-9 1h3m2 0h6"/><path id="g14c" d="M4 -8.5h3m-4 1h1m3 0h1m-8 1h3m1 0h3m1 0h3m-8 1h1m3 0h1m-6 1h7m-4 1h1m-4 1h7m-4 1h1m-6 1h11m-6 1h1m-2 1h2"/><path id="g14d" d="M1 -8.5h1m2 0h1m1 0h5m-10 1h1m2 0h1m3 0h1m-8 1h10m-11 1h1m3 0h1m1 0h1m3 0h1m-11 1h3m1 0h1m1 0h1m1 0h1m1 0h1m-10 1h1m1 0h4m1 0h1m1 0h1m-11 1h1m5 0h1m1 0h1m1 0h1m-11 1h7m1 0h1m1 0h1m-8 1h1m1 0h2m1 0h1m1 0h1m-9 1h4m1 0h1m1 0h1m-10 1h2m4 0h1m3 0h1"/><path id="g14e" d="M1 -8.5h1m5 0h1m-6 1h1m4 0h1m-8 1h1m4 0h1m1 0h1m1 0h1m-9 1h1m3 0h1m1 0h1m2 0h1m-8 1h1m1 0h1m1 0h1m2 0h1m-9 1h1m1 0h1m2 0h1m-6 1h1m4 0h1m2 0h1m-11 1h2m7 0h1m-9 1h1m6 0h1m-8 1h1m4 0h2m-7 1h1m1 0h3"/><path id="g14f" d="M2 -8.5h1m-1 1h1m2 0h5m-8 1h1m2 0h1m3 0h1m-8 1h1m2 0h1m3 0h1m-10 1h10m-8 1h1m2 0h1m3 0h1m-8 1h1m2 0h1m3 0h1m-8 1h1m2 0h5m-8 1h3m-5 1h2m2 1h7"/><path id="g150" d="M2 -8.5h9m-10 1h1m-2 1h1m1 0h7m-6 1h1m4 0h1m-9 1h7m1 0h1m-9 1h1m2 0h1m2 0h1m1 0h1m-9 1h9m-7 1h1m2 0h1m2 0h1m-7 1h3m3 0h1m1 0h1m-8 1h1m1 0h2m2 0h2m-11 1h3m4 0h1m2 0h1"/><path id="g151" d="M1 -8.5h10m-10 1h1m-2 1h1m1 0h7m-3 1h1m1 0h1m-7 1h5m1 0h1m-3 1h1m1 0h1m-9 1h9m-8 1h1m2 0h1m1 0h1m1 0h1m-7 1h1m1 0h2m2 0h1m1 0h1m-10 1h1m2 0h1m1 0h1m2 0h2m-11 1h1m2 0h2m2 0h1m2 0h1"/><path id="g152" d="M2 -8.5h1m4 0h1m-6 1h1m2 0h1m1 0h1m-6 1h1m2 0h1m1 0h1m1 0h1m-10 1h4m1 0h1m1 0h3m-8 1h1m2 0h3m1 0h1m-8 1h1m1 0h2m1 0h1m1 0h1m-8 1h1m2 0h1m1 0h1m1 0h1m-8 1h1m2 0h1m1 0h3m-8 1h2m1 0h1m1 0h1m2 0h1m-11 1h2m3 0h1m4 0h1m-5 1h5"/><path id="g153" d="M2 -8.5h1m4 0h1m-6 1h1m4 0h1m-6 1h1m4 0h1m-6 1h9m-9 1h1m-1 1h1m-1 1h7m-7 1h1m5 0h1m-7 1h1m5 0h1m-8 1h1m6 0h1m-9 1h1m7 0h1"/><path id="g154" d="M2 -8.5h1m5 0h1m-6 1h1m3 0h1m-8 1h11m-7 1h1m-3 1h7m-7 1h1m5 0h1m-7 1h7m-7 1h1m5 0h1m-7 1h7m-7 1h1m5 0h1m-7 1h7"/><path id="g155" d="M5 -8.5h1m-2 1h5m-6 1h1m4 0h1m-7 1h1m1 0h1m2 0h1m-3 1h2m-4 1h2m1 0h1m-6 1h2m2 0h5m-6 1h1m4 0h1m-8 1h2m1 0h1m2 0h1m-3 1h2m-7 1h5"/><path id="g156" d="M1 -7.5h9m-9 1h1m3 0h1m3 0h1m-9 1h1m3 0h1m3 0h1m-9 1h1m3 0h1m3 0h1m-9 1h9m-9 1h1m-1 1h1m-1 1h1m8 0h1m-10 1h1m8 0h1m-9 1h9"/><path id="g157" d="M2 -8.5h1m4 0h1m-6 1h1m4 0h1m-6 1h1m1 0h1m2 0h1m1 0h1m-9 1h1m2 0h1m1 0h1m2 0h1m-10 1h4m1 0h4m-6 1h1m4 0h1m-7 1h1m4 0h1m-7 1h1m4 0h1m-7 1h4m1 0h5m-10 2h11"/><path id="g158" d="M1 -8.5h4m1 0h1m2 0h1m-9 1h1m2 0h1m1 0h1m2 0h1m-9 1h1m2 0h7m-10 1h4m1 0h1m2 0h1m-9 1h1m2 0h1m1 0h1m2 0h1m-9 1h1m2 0h7m-10 1h4m1 0h1m2 0h1m-9 1h1m2 0h1m1 0h1m2 0h1m-9 1h1m2 0h1m1 0h1m2 0h1m-10 1h1m3 0h2m3 0h1m-10 1h1m2 0h2m4 0h1"/><path id="g159" d="M2 -8.5h9m-9 1h1m3 0h1m2 0h1m-9 1h3m1 0h1m1 0h2m-9 1h1m1 0h1m1 0h1m1 0h1m2 0h1m-9 1h1m1 0h7m-10 1h1m1 0h2m4 0h1m1 0h1m-10 1h1m1 0h6m-6 1h1m4 0h1m-6 1h6m1 0h1m-8 1h1m1 0h1m1 0h1m1 0h1m-7 1h2m3 0h3"/><path id="g15a" d="M3 -8.5h1m4 0h1m-5 1h1m2 0h1m-7 1h10m-9 2h4m1 0h1m1 0h1m-8 1h1m2 0h1m1 0h1m1 0h1m-8 1h4m1 0h1m1 0h1m-8 1h1m2 0h1m1 0h1m1 0h1m-8 1h4m1 0h1m1 0h1m-8 1h1m2 0h1m3 0h1m-8 1h1m1 0h2m1 0h3"/><path id="g15b" d="M4 -8.5h1m2 0h1m2 0h1m-11 1h5m2 0h1m2 0h1m-9 1h1m1 0h7m-9 1h1m-2 1h10m-9 1h1m3 0h1m-5 1h1m1 0h7m-9 1h3m1 0h1m1 0h1m1 0h1m-11 1h2m2 0h1m1 0h1m1 0h1m1 0h1m-7 1h1m1 0h1m1 0h1m1 0h1m-7 1h1m4 0h2"/><path id="g15c" d="M1 -8.5h3m3 0h1m-7 1h1m1 0h1m1 0h6m-10 1h1m1 0h1m2 0h1m1 0h1m-8 1h3m1 0h1m3 0h1m-9 1h1m1 0h2m5 0h1m-10 1h3m1 0h1m2 0h1m-8 1h1m1 0h1m2 0h1m1 0h1m-8 1h1m1 0h1m3 0h1m-7 1h1m1 0h1m2 0h1m1 0h1m-9 1h1m1 0h2m1 0h1m3 0h1m-10 1h1m3 0h1m5 0h1"/><path id="g15d" d="M5 -8.5h1m-6 1h11m-9 1h1m2 0h1m2 0h1m-9 1h11m-11 1h1m1 0h1m1 0h1m1 0h1m1 0h1m1 0h1m-10 1h9m-7 1h1m3 0h1m-8 1h11m-8 1h1m2 0h1m2 0h1m-8 1h2m3 0h2m-9 1h2m1 0h2m3 0h3"/><path id="g15e" d="M6 -8.5h1m-6 1h10m-10 1h1m8 0h1m-10 2h10m-5 1h1m-1 1h1m-1 1h1m-1 1h1m-1 1h1m-3 1h3"/><path id="g15f" d="M3 -8.5h1m1 0h1m-4 1h1m3 0h1m-6 1h10m-11 1h1m1 0h1m2 0h1m-4 1h8m-8 1h1m2 0h1m-4 1h8m-8 1h1m2 0h1m-6 1h11m-8 1h1m1 0h1m1 0h1m-8 1h3m2 0h1m2 0h3"/><path id="g160" d="M5 -8.5h4m-8 1h4m4 0h1m-8 1h1m2 0h1m2 0h1m-6 1h1m3 0h1m-3 1h1m-6 1h11m-7 1h3m-4 1h1m1 0h1m1 0h1m-6 1h1m2 0h1m2 0h1m-8 1h1m3 0h1m3 0h2m-11 1h1m4 0h1m4 0h1"/><path id="g161" d="M2 -8.5h1m4 0h1m-8 1h1m1 0h1m1 0h1m3 0h1m-8 1h3m1 0h6m-9 1h1m-3 1h5m1 0h1m2 0h1m-8 1h1m3 0h1m2 0h1m-9 1h3m3 0h1m1 0h1m-10 1h1m1 0h1m1 0h1m2 0h2m-9 1h1m1 0h1m1 0h1m3 0h1m-7 1h1m5 0h1m-7 1h1m1 0h7"/><path id="g162" d="M9 -9.5h1m-2 1h1m-1 1h1m-2 1h1m-1 1h1m-1 1h1m-1 1h1m-1 1h1m-1 1h1m0 1h1m-1 1h1m0 1h1"/><path id="g163" d="M2 -8.5h7m-7 1h1m5 0h1m-7 1h7m-7 1h1m5 0h1m-7 1h7m-4 1h1m-1 1h1m-6 1h11m-6 1h1m-1 1h1m-1 1h1"/><path id="g164" d="M5 -8.5h1m-6 1h3m2 0h4m-9 1h1m1 0h1m1 0h1m2 0h1m-8 1h1m1 0h8m-10 1h3m1 0h1m1 0h1m2 0h1m-10 1h1m1 0h1m1 0h1m1 0h1m2 0h1m-10 1h1m1 0h1m1 0h6m-10 1h1m1 0h1m3 0h2m-8 1h3m2 0h1m1 0h1m2 0h1m-7 1h1m2 0h1m2 0h1m-8 1h1m3 0h4"/><path id="g165" d="M3 -9.5h1m0 1h1m-1 1h1m0 1h1m-1 1h1m-1 1h1m-1 1h1m-1 1h1m-1 1h1m-2 1h1m-1 1h1m-2 1h1"/><path id="g166" d="M2 -8.5h1m5 0h1m-9 1h5m1 0h5m-9 1h1m5 0h1m-9 1h5m1 0h5m-9 1h2m3 0h2m-8 1h1m2 0h1m1 0h1m2 0h1m-10 1h1m1 0h7m1 0h1m-9 1h1m5 0h1m-7 1h7m-7 1h1m5 0h1m-7 1h7"/><path id="g167" d="M0 -8.5h5m1 0h5m-10 1h1m1 0h1m2 0h1m3 0h1m-10 1h1m1 0h1m2 0h5m-11 1h5m1 0h1m3 0h1m-11 1h1m1 0h1m1 0h1m1 0h3m1 0h1m-11 1h2m1 0h2m1 0h1m1 0h1m1 0h1m-11 1h1m3 0h1m1 0h1m1 0h1m1 0h1m-11 1h5m1 0h3m1 0h1m-11 1h1m3 0h1m1 0h1m3 0h1m-11 1h5m1 0h1m3 0h1m-11 1h1m3 0h1m1 0h1m2 0h2"/><path id="g168" d="M3 -8.5h1m2 0h5m-9 1h1m1 0h1m4 0h1m-9 1h1m3 0h1m1 0h2m-9 1h1m1 0h3m3 0h1m-6 1h1m2 0h5m-11 1h6m2 0h1m1 0h1m-8 1h1m4 0h2m-9 1h5m2 0h1m-8 1h1m3 0h1m2 0h1m-8 1h1m3 0h1m2 0h1m-8 1h5m1 0h2"/><path id="g169" d="M1 -8.5h9m-9 1h1m3 0h1m3 0h1m-9 1h1m3 0h1m3 0h1m-9 1h9m-9 1h1m3 0h1m3 0h1m-9 1h1m3 0h1m3 0h1m-9 1h9m-9 1h1m3 0h1m3 0h1m-5 1h1m-1 1h1m-1 1h1"/><path id="g16a" d="M1 -8.5h1m6 0h1m-8 1h1m6 0h1m-8 1h10m-11 1h1m7 0h1m-9 1h5m3 0h1m-7 1h1m3 0h5m-11 1h5m1 0h1m3 0h1m-9 1h1m3 0h1m3 0h1m-9 1h1m1 0h1m1 0h1m3 0h1m-9 1h2m2 0h5m-9 1h1m3 0h1m3 0h1"/><path id="g16b" d="M1 -8.5h3m3 0h1m-7 1h1m1 0h1m1 0h6m-10 1h1m1 0h1m1 0h1m4 0h1m-10 1h3m3 0h1m-7 1h1m1 0h1m1 0h6m-10 1h1m1 0h1m2 0h1m2 0h1m-9 1h3m2 0h1m2 0h1m-9 1h1m1 0h1m1 0h2m1 0h1m-8 1h1m1 0h1m3 0h2m-9 1h1m2 0h1m2 0h1m2 0h1m-10 1h1m1 0h2m1 0h1m4 0h1"/><path id="g16c" d="M0 -7.5h11m-7 1h1m1 0h1m-6 1h9m-9 1h1m2 0h1m1 0h1m2 0h1m-9 1h1m2 0h1m1 0h1m2 0h1m-9 1h1m1 0h1m2 0h1m2 0h1m-9 1h2m4 0h3m-9 1h1m7 0h1m-9 1h9m-9 1h1m7 0h1"/><path id="g16d" d="M2 -8.5h1m4 0h1m-6 1h1m2 0h5m-9 1h1m5 0h1m-7 1h1m1 0h1m1 0h6m-11 1h3m2 0h1m2 0h1m1 0h1m-9 1h1m1 0h1m1 0h1m1 0h1m-8 1h1m3 0h1m2 0h1m-9 1h3m1 0h7m-4 1h1m-6 1h2m2 0h1m1 0h2m-10 1h2m2 0h2m4 0h1"/><path id="g16e" d="M1 -8.5h9m-5 1h1m-6 1h11m-11 1h1m4 0h1m4 0h1m-11 1h1m1 0h2m1 0h1m1 0h2m1 0h1m-6 1h1m-5 1h9m-9 1h1m3 0h1m3 0h1m-9 1h9m-9 1h1m3 0h1m3 0h1m-9 1h9"/><path id="g16f" d="M2 -8.5h7m-7 1h1m5 0h1m-7 1h1m2 0h1m2 0h1m-7 1h1m2 0h1m2 0h1m-7 1h1m2 0h1m2 0h1m-7 1h1m2 0h1m2 0h1m-7 1h1m2 0h1m2 0h1m-7 1h1m2 0h1m2 0h1m-5 1h1m1 0h1m-4 1h1m3 0h2m-8 1h2m5 0h1"/><path id="g170" d="M2 -8.5h1m3 0h1m-5 1h1m4 0h1m-8 1h11m-9 1h1m-1 1h1m6 0h1m-8 1h2m1 0h1m3 0h1m-9 1h2m3 0h1m2 0h1m-10 1h1m1 0h1m3 0h1m1 0h1m-7 1h1m5 0h1m-7 1h1m4 0h1m-8 1h3m1 0h7"/><path id="g171" d="M7 -8.5h1m-8 1h3m2 0h1m1 0h1m1 0h1m-10 1h1m1 0h1m2 0h1m1 0h1m1 0h1m-10 1h1m1 0h1m2 0h1m1 0h1m1 0h1m-10 1h1m1 0h1m1 0h1m1 0h3m1 0h1m-11 1h1m1 0h2m3 0h1m-8 1h1m1 0h1m4 0h1m-8 1h3m2 0h5m-3 1h1m-1 1h1m-5 1h8"/><path id="g172" d="M1 -8.5h1m6 0h1m-8 1h1m6 0h1m-8 1h10m-11 1h1m4 0h1m2 0h1m1 0h1m-11 1h6m2 0h1m1 0h1m-9 1h1m2 0h1m2 0h1m1 0h1m-11 1h6m1 0h1m1 0h2m-9 1h1m2 0h2m3 0h1m-9 1h1m1 0h2m4 0h1m-9 1h2m1 0h1m4 0h1m-9 1h1m2 0h1m3 0h2"/><path id="g173" d="M1 -8.5h9m-9 1h1m2 0h1m3 0h1m-8 1h1m2 0h1m2 0h1m-7 1h4m1 0h1m-6 1h1m2 0h7m-10 1h1m2 0h1m1 0h1m1 0h1m1 0h1m-10 1h5m2 0h1m1 0h1m-10 1h1m2 0h1m2 0h1m2 0h1m-10 1h1m2 0h1m1 0h1m3 0h1m-11 1h1m3 0h2m1 0h1m2 0h1m-11 1h1m2 0h2m3 0h2"/><path id="g174" d="M1 -8.5h1m5 0h1m-6 1h1m1 0h7m-7 1h1m1 0h1m1 0h1m1 0h1m-11 1h1m2 0h1m1 0h1m1 0h1m1 0h1m-9 1h1m1 0h2m1 0h1m1 0h1m1 0h1m-9 1h1m2 0h1m3 0h1m-8 1h1m1 0h1m5 0h1m-11 1h2m1 0h1m1 0h5m-9 1h1m3 0h1m3 0h1m-9 1h1m3 0h5m-9 1h1m3 0h1m3 0h1"/><path id="g175" d="M5 -8.5h1m-1 1h1m-5 1h1m3 0h1m3 0h1m-9 1h1m3 0h1m3 0h1m-9 1h1m3 0h1m3 0h1m-9 1h1m3 0h1m3 0h1m-9 1h1m3 0h1m3 0h1m-9 1h1m3 0h1m3 0h1m-9 1h1m3 0h1m3 0h1m-9 1h9m-9 1h1m7 0h1"/><path id="g176" d="M5 -8.5h1m-1 1h1m-5 1h10m-7 1h1m1 0h1m-4 1h1m2 0h1m-5 1h8m-4 1h1m-4 1h1m2 0h1m1 0h1m-7 1h1m3 0h1m2 0h1m-9 1h1m4 0h1m3 0h1m-7 1h3"/><path id="g177" d="M4 -8.5h1m-2 1h6m-7 1h1m3 0h1m-6 1h9m-10 1h1m1 0h1m2 0h1m3 0h1m-8 1h1m2 0h1m3 0h1m-8 1h8m-8 1h1m-1 1h1m7 0h1m-9 1h1m7 0h1m-8 1h8"/><path id="g178" d="M5 -8.5h1m-2 1h1m1 0h1m-4 1h1m3 0h1m-6 1h1m2 0h1m2 0h1m-9 1h2m4 0h1m2 0h2m-9 2h7m-2 1h1m-2 1h1m-1 1h1m-2 1h1"/><path id="g179" d="M2 -8.5h1m6 0h1m-10 1h5m1 0h3m-8 1h1m1 0h1m2 0h1m-7 1h5m1 0h5m-8 1h1m2 0h1m1 0h1m-9 1h4m1 0h1m2 0h1m-7 1h7m-7 1h1m5 0h1m-7 1h7m-7 1h1m5 0h1m-7 1h7"/><path id="g17a" d="M2 -8.5h1m-1 1h1m2 0h6m-9 1h1m4 0h1m2 0h1m-9 1h3m2 0h1m2 0h1m-11 1h3m4 0h1m2 0h1m-9 1h1m4 0h1m2 0h1m-9 1h1m1 0h1m2 0h1m2 0h1m-9 1h2m2 0h1m3 0h1m-9 1h1m3 0h1m3 0h1m-6 1h1m4 0h1m-7 1h1m3 0h2"/><path id="g17b" d="M2 -8.5h1m3 0h1m-5 1h1m3 0h4m-10 1h6m2 0h1m-7 1h1m2 0h5m-8 1h1m1 0h2m1 0h1m1 0h1m-8 1h2m1 0h1m1 0h1m1 0h1m-9 1h2m1 0h7m-11 1h1m1 0h1m4 0h1m-6 1h1m3 0h1m1 0h1m-7 1h1m2 0h1m3 0h1m-10 1h3m1 0h1m5 0h1"/><path id="g17c" d="M3 -8.5h1m6 0h1m-10 1h1m1 0h1m4 0h1m1 0h1m-10 1h6m1 0h1m1 0h1m-11 1h1m2 0h1m4 0h1m1 0h1m-11 1h7m1 0h1m1 0h1m-8 1h1m4 0h1m1 0h1m-10 1h6m1 0h1m1 0h1m-10 1h1m1 0h1m2 0h1m1 0h1m1 0h1m-10 1h1m1 0h1m2 0h1m3 0h1m-10 1h1m1 0h1m1 0h2m3 0h1m-8 1h1m4 0h3"/><path id="g17d" d="M5 -8.5h1m-5 1h1m3 0h1m3 0h1m-8 1h1m2 0h1m2 0h1m-6 1h1m1 0h1m1 0h1m-7 1h9m-1 1h1m-1 1h1m-8 1h8m-1 1h1m-1 1h1m-9 1h9"/><path id="g17e" d="M5 -8.5h1m-2 1h1m1 0h1m-4 1h1m3 0h1m-6 1h1m5 0h1m-9 1h2m1 0h5m1 0h2m-6 1h1m-1 1h1m-3 1h5m-3 1h1m-1 1h1m-5 1h9"/><path id="g17f" d="M3 -8.5h1m3 0h4m-11 1h8m2 0h1m-10 1h1m3 0h1m1 0h1m2 0h1m-9 1h1m1 0h1m2 0h1m1 0h1m-10 1h9m-2 1h1m1 0h1m-9 1h5m1 0h1m2 0h1m-10 1h1m3 0h1m1 0h1m2 0h1m-10 1h1m3 0h1m1 0h2m1 0h1m-10 1h5m1 0h1m1 0h1m-9 1h1m3 0h1m1 0h1"/><path id="g180" d="M1 -8.5h9m-9 1h1m-1 1h1m1 0h1m4 0h1m-8 1h1m2 0h1m3 0h1m-8 1h1m3 0h1m1 0h1m-7 1h1m4 0h1m-6 1h1m3 0h1m1 0h1m-7 1h1m2 0h1m3 0h1m-8 1h1m1 0h1m4 0h1m-8 1h1m-1 1h10"/><path id="g181" d="M1 -8.5h1m4 0h1m-5 1h1m1 0h7m-9 1h1m3 0h1m-2 1h1m1 0h1m-8 1h3m1 0h6m-8 1h1m4 0h1m-6 1h1m1 0h7m-9 1h1m4 0h1m-6 1h1m4 0h1m-7 1h1m1 0h1m3 0h1m-8 1h1m3 0h7"/><path id="g182" d="M2 -8.5h7m-7 1h1m5 0h1m-7 1h7m-7 1h1m5 0h1m-7 1h7m-9 2h5m1 0h5m-11 1h1m3 0h1m1 0h1m3 0h1m-11 1h5m1 0h5m-11 1h1m3 0h1m1 0h1m3 0h1m-11 1h5m1 0h5"/><path id="g183" d="M3 -8.5h1m3 0h1m-4 1h1m1 0h1m-5 1h7m-7 1h1m5 0h1m-7 1h1m5 0h1m-7 1h7m-7 1h1m5 0h1m-4 1h1m3 0h1m-9 1h1m1 0h1m2 0h1m1 0h1m1 0h1m-10 1h1m1 0h1m4 0h1m1 0h1m-11 1h1m3 0h5"/><path id="g184" d="M0 -8.5h4m2 0h1m-7 1h1m2 0h1m3 0h1m-8 1h1m1 0h1m1 0h7m-11 1h2m2 0h1m5 0h1m-11 1h1m1 0h1m2 0h5m-10 1h1m2 0h1m-4 1h1m2 0h8m-11 1h2m1 0h1m1 0h1m2 0h1m-9 1h1m1 0h1m2 0h1m2 0h1m1 0h1m-11 1h1m3 0h1m3 0h1m1 0h1m-11 1h1m2 0h1m5 0h2"/><path id="g185" d="M1 -8.5h1m3 0h1m1 0h1m-6 1h1m2 0h1m1 0h1m-6 1h1m2 0h5m-6 1h1m2 0h1m-8 1h3m1 0h7m-9 1h1m3 0h1m1 0h1m-7 1h1m3 0h1m1 0h1m1 0h1m-9 1h1m2 0h1m2 0h1m1 0h1m-9 1h1m1 0h1m4 0h2m-10 1h1m1 0h1m-4 1h1m3 0h7"/><path id="g186" d="M2 -8.5h1m1 0h7m-9 1h1m3 0h1m2 0h1m-10 1h5m2 0h2m-7 1h1m3 0h1m2 0h1m-8 1h1m1 0h2m4 0h1m-9 1h2m3 0h1m-7 1h2m2 0h5m-10 1h1m1 0h1m4 0h1m-6 1h1m1 0h7m-9 1h1m4 0h1m-8 1h3m4 0h1"/><path id="g187" d="M1 -11.5h1m7 0h1m-8 1h2m1 0h9m-11 1h1m5 0h1m-4 1h7m-4 1h1m-10 1h3m2 0h9m-12 1h1m-1 1h1m3 0h7m-11 1h1m3 0h1m5 0h1m-11 1h1m3 0h7m-11 1h1m1 0h1m1 0h1m5 0h1m-11 1h2m2 0h7m-11 1h1m3 0h1m5 0h1m-7 1h1m4 0h2"/><path id="g188" d="M1 -11.5h1m7 0h1m-8 1h1m3 0h1m2 0h1m-8 1h1m3 0h1m2 0h1m-4 1h7m-8 1h1m3 0h1m-10 1h3m6 0h1m-8 1h1m2 0h9m-12 1h1m4 0h1m2 0h1m-9 1h1m4 0h1m2 0h1m-9 1h1m4 0h1m2 0h1m2 0h1m-12 1h1m3 0h1m3 0h1m2 0h1m-12 1h1m2 0h1m5 0h3m-13 1h1m1 0h1m-4 1h1m3 0h10"/><path id="g189" d="M3 -11.5h1m7 0h1m-9 1h1m2 0h7m-10 1h1m3 0h1m3 0h1m-12 1h6m2 0h1m1 0h1m-8 1h1m5 0h1m-7 1h1m3 0h2m1 0h2m-9 1h1m1 0h2m2 0h1m2 0h2m-11 1h2m4 0h1m-8 1h2m2 0h7m-13 1h2m1 0h1m5 0h1m-7 1h1m1 0h9m-11 1h1m5 0h1m-9 1h1m1 0h1m5 0h1m-8 1h1m6 0h1"/><path id="g18a" d="M3 -11.5h1m-1 1h1m-1 1h1m2 0h8m-14 1h6m4 0h1m-8 1h1m6 0h1m-8 1h1m6 0h1m-8 1h1m1 0h1m4 0h1m-8 1h2m5 0h1m-9 1h2m6 0h1m-11 1h2m1 0h1m6 0h1m-8 1h1m6 0h1m-8 1h1m6 0h1m-10 1h1m1 0h1m4 0h1m1 0h1m-9 1h1m6 0h1"/><path id="g18b" d="M6 -11.5h1m-3 1h2m-5 1h3m3 0h6m-12 1h1m5 0h1m4 0h1m-12 1h1m5 0h1m4 0h1m-12 1h1m5 0h1m4 0h1m-12 1h5m1 0h1m4 0h1m-12 1h1m5 0h1m4 0h1m-12 1h1m5 0h1m4 0h1m-12 1h1m2 0h2m1 0h1m4 0h1m-12 1h3m3 0h1m2 0h1m1 0h1m-12 1h1m5 0h1m3 0h1m-5 1h1m-1 1h1"/><path id="g18c" d="M3 -11.5h1m4 0h1m-6 1h1m4 0h1m-7 1h1m5 0h1m-8 1h5m2 0h5m-12 1h1m3 0h1m1 0h1m4 0h1m-12 1h1m3 0h2m5 0h1m-12 1h1m3 0h1m6 0h1m-12 1h5m2 0h1m3 0h1m-12 1h1m3 0h1m3 0h1m2 0h1m-12 1h1m3 0h1m3 0h1m2 0h1m-12 1h1m3 0h1m6 0h1m-12 1h1m3 0h1m6 0h1m-12 1h5m4 0h1m1 0h1m-12 1h1m3 0h1m5 0h1"/><path id="g18d" d="M6 -11.5h1m-1 1h1m-1 1h1m-6 1h11m-11 1h1m4 0h1m4 0h1m-11 1h1m4 0h1m4 0h1m-11 1h1m4 0h1m4 0h1m-11 1h1m3 0h1m1 0h1m3 0h1m-11 1h1m3 0h1m2 0h1m2 0h1m-11 1h1m2 0h1m4 0h1m1 0h1m-11 1h1m1 0h1m5 0h1m1 0h1m-11 1h1m9 0h1m-11 1h1m7 0h1m1 0h1m-11 1h1m8 0h1"/><path id="g18e" d="M5 -11.5h1m0 1h1m-6 1h12m-12 1h1m9 0h1m-12 1h1m2 0h1m5 0h1m-8 1h1m3 0h1m3 0h1m-10 1h1m3 0h1m1 0h1m3 0h1m-8 1h1m3 0h1m-7 1h2m5 0h2m-11 1h2m1 0h7m1 0h2m-10 1h1m5 0h1m-7 1h1m5 0h1m-7 1h7m-7 1h1m5 0h1"/><path id="g18f" d="M3 -10.5h1m-1 1h1m2 0h7m-13 1h6m3 0h1m-7 1h1m5 0h1m-7 1h1m5 0h1m-7 1h1m1 0h1m3 0h1m-7 1h2m4 0h1m-8 1h2m5 0h1m-10 1h2m1 0h1m5 0h1m-7 1h1m5 0h1m-7 1h1m5 0h1m-9 1h1m1 0h1m3 0h1m1 0h1m-8 1h1m5 0h1"/><path id="g190" d="M4 -10.5h2m-5 1h3m3 0h5m-11 1h1m5 0h1m3 0h1m-11 1h1m5 0h1m3 0h1m-11 1h1m5 0h1m3 0h1m-11 1h4m2 0h1m3 0h1m-11 1h1m5 0h1m3 0h1m-11 1h1m5 0h1m3 0h1m-11 1h1m1 0h2m2 0h1m1 0h1m1 0h1m-11 1h2m4 0h1m2 0h1m-4 1h1m-1 1h1m-1 1h1"/><path id="g191" d="M3 -10.5h1m5 0h1m-6 1h1m3 0h1m-7 1h9m-9 1h1m3 0h1m3 0h1m-9 1h9m-9 1h1m3 0h1m3 0h1m-9 1h1m3 0h1m3 0h1m-9 1h9m-5 1h1m-7 1h13m-7 1h1m-1 1h1m-1 1h1"/><path id="g192" d="M2 -10.5h1m-1 1h1m2 0h7m-12 1h6m5 0h1m-10 1h1m2 0h7m-10 1h1m2 0h1m3 0h1m-8 1h1m1 0h9m-11 1h2m1 0h1m3 0h1m-10 1h3m2 0h1m3 0h1m-8 1h1m2 0h1m1 0h5m-10 1h1m2 0h1m1 0h1m3 0h1m-10 1h1m1 0h1m2 0h1m3 0h1m-12 1h1m1 0h1m1 0h1m2 0h5m-11 1h1m1 0h1m3 0h1m3 0h1"/><path id="g193" d="M6 -5.5h2m-2 1h2m-2 4h2m-2 1h2"/><path id="g194" d="M10 -10.5h1m-1 1h1m-11 1h5m5 0h1m-7 1h9m-12 1h1m2 0h1m5 0h1m-9 1h1m1 0h1m5 0h1m-8 1h1m3 0h1m2 0h1m-8 1h1m4 0h1m1 0h1m-9 1h1m1 0h1m3 0h1m1 0h1m-9 1h1m1 0h1m5 0h1m-10 1h1m8 0h1m-11 1h1m7 0h1m1 0h1m-2 1h1"/><path id="g195" d="M4 -10.5h1m-2 1h6m-7 1h1m4 0h1m-7 1h10m-11 1h1m1 0h1m3 0h1m3 0h1m-9 1h9m-6 1h1m-3 1h2m1 0h1m3 0h1m-10 1h2m2 0h1m1 0h1m1 0h1m-6 1h1m1 0h3m-7 1h2m1 0h1m1 0h1m1 0h2m-7 1h1m2 0h1m3 0h2m-12 1h3m1 0h2"/><path id="g196" d="M6 -10.5h1m-1 1h1m-6 1h11m-11 1h1m4 0h1m4 0h1m-11 1h1m4 0h1m4 0h1m-11 1h1m4 0h2m3 0h1m-11 1h1m3 0h1m2 0h1m2 0h1m-11 1h1m2 0h1m4 0h1m1 0h1m-11 1h1m1 0h1m5 0h1m1 0h1m-11 1h1m9 0h1m-11 1h1m9 0h1m-11 1h1m7 0h1m1 0h1m-11 1h1m8 0h1"/><path id="g197" d="M6 -10.5h1m-7 1h13m-13 1h1m11 0h1m-10 1h1m2 0h1m2 0h1m-8 1h1m2 0h1m1 0h1m2 0h1m-10 1h1m2 0h1m3 0h1m2 0h1m-9 1h1m5 0h1m-8 1h1m7 0h1m-11 1h2m1 0h7m1 0h2m-10 1h1m5 0h1m-7 1h1m5 0h1m-7 1h7m-7 1h1m5 0h1"/><path id="g198" d="M2 -10.5h8m-1 1h1m-8 1h8m-1 1h1m-10 1h13m-7 1h1m-5 1h1m3 0h1m3 0h2m-9 1h1m1 0h3m1 0h1m-6 1h1m1 0h1m1 0h1m-6 1h1m2 0h1m2 0h1m-8 1h1m3 0h1m3 0h1m-11 1h2m2 0h1m1 0h1m4 0h2m-8 1h1"/><path id="g199" d="M4 -10.5h1m0 1h1m0 1h1m-1 1h1m-1 1h1m-2 1h1m1 0h1m-3 1h1m1 0h1m-3 1h1m1 0h1m-4 1h1m3 0h1m-5 1h1m3 0h1m-6 1h1m5 0h1m-8 1h1m7 0h1m-11 1h2m9 0h2"/><path id="g19a" d="M10 -10.5h1m-10 1h4m5 0h1m-10 1h1m2 0h1m5 0h1m-10 1h1m2 0h9m-12 1h1m2 0h1m5 0h1m-10 1h4m1 0h1m3 0h1m-10 1h1m2 0h1m2 0h1m2 0h1m-10 1h1m2 0h1m2 0h1m2 0h1m-10 1h1m2 0h1m5 0h1m-10 1h4m5 0h1m-10 1h1m2 0h1m5 0h1m-3 1h1m1 0h1m-2 1h1"/><path id="g19b" d="M1 -10.5h1m2 0h8m-10 1h1m8 0h1m-11 1h1m9 0h1m-11 1h1m2 0h5m2 0h1m-11 1h1m2 0h1m3 0h1m2 0h1m-11 1h1m2 0h1m3 0h1m2 0h1m-11 1h1m2 0h5m2 0h1m-11 1h1m2 0h1m3 0h1m2 0h1m-11 1h1m2 0h1m3 0h1m2 0h1m-11 1h1m2 0h5m2 0h1m-11 1h1m9 0h1m-11 1h1m7 0h1m1 0h1m-11 1h1m8 0h1"/><path id="g19c" d="M7 -10.5h1m-6 1h11m-11 1h1m-3 1h1m1 0h1m1 0h8m-11 1h2m5 0h1m-7 1h1m1 0h8m-10 1h1m1 0h1m3 0h1m2 0h1m-11 1h2m1 0h1m3 0h1m2 0h1m-12 1h1m1 0h1m1 0h1m2 0h1m1 0h1m1 0h1m-10 1h1m1 0h1m1 0h1m3 0h2m-11 1h1m2 0h2m5 0h1m-11 1h1m2 0h1m6 0h1m-12 1h1m3 0h1m5 0h2"/><path id="g19d" d="M5 -10.5h1m-1 1h1m-1 1h1m-1 1h1m-1 1h1m-1 1h1m-2 1h1m1 0h1m-3 1h1m1 0h1m-4 1h1m3 0h1m-5 1h1m4 0h1m-7 1h1m6 0h1m-9 1h1m8 0h3m-13 1h1m10 0h1"/><path id="g19e" d="M1 -10.5h1m5 0h1m-6 1h1m4 0h1m-2 1h1m3 0h1m-11 1h1m4 0h1m5 0h1m-11 1h1m2 0h9m-10 1h1m8 0h1m-11 1h1m2 0h7m-10 1h1m2 0h1m5 0h1m-12 1h2m3 0h1m5 0h1m-11 1h1m3 0h1m5 0h1m-11 1h1m3 0h1m5 0h1m-11 1h1m3 0h7m-11 1h1m3 0h1m5 0h1"/><path id="g19f" d="M7 -10.5h1m-6 1h11m-11 1h1m-3 1h1m1 0h1m1 0h8m-11 1h2m7 0h1m-9 1h1m6 0h1m-8 1h1m5 0h1m-8 1h2m5 0h1m-9 1h1m1 0h1m5 0h1m-7 1h1m5 0h1m-8 1h1m6 0h1m-8 1h1m4 0h1m1 0h1m-9 1h1m6 0h1"/><path id="g1a0" d="M6 -10.5h1m-1 1h1m-1 1h5m-5 1h1m-1 1h1m-7 1h13m-7 1h1m-1 1h2m-2 1h1m1 0h1m-3 1h1m2 0h2m-5 1h1m3 0h1m-5 1h1m-1 1h1"/><path id="g1a1" d="M6 -10.5h1m-2 1h1m1 0h1m-4 1h1m3 0h1m-6 1h1m5 0h1m-8 1h1m7 0h1m-11 1h2m1 0h7m1 0h2m-7 1h1m-1 1h1m-4 1h7m-4 1h1m-1 1h1m-1 1h1m-6 1h11"/><path id="g1a2" d="M1 -9.5h11m-11 1h1m-1 1h1m1 0h1m5 0h1m-9 1h1m2 0h1m4 0h1m-9 1h1m3 0h1m2 0h1m-8 1h1m4 0h2m-7 1h1m4 0h2m-7 1h1m3 0h1m2 0h1m-8 1h1m2 0h1m4 0h1m-9 1h1m1 0h1m5 0h1m-9 1h1m-1 1h11"/><path id="g1a3" d="M1 -10.5h1m6 0h1m-7 1h1m2 0h1m2 0h1m-7 1h1m2 0h7m-8 1h1m3 0h1m-9 1h3m5 0h1m-7 1h1m1 0h9m-11 1h1m3 0h1m2 0h1m-8 1h1m3 0h1m2 0h1m-8 1h1m2 0h1m3 0h1m2 0h1m-11 1h1m2 0h1m3 0h1m2 0h1m-11 1h1m1 0h1m5 0h3m-12 1h1m1 0h1m-4 1h1m3 0h9"/><path id="g1a4" d="M6 -11.5h1m-1 1h1m-1 1h1m-6 1h11m-11 1h1m4 0h1m4 0h1m-11 1h1m4 0h1m4 0h1m-11 1h1m4 0h1m4 0h1m-11 1h11m-11 1h1m4 0h1m4 0h1m-6 1h1m-1 1h1m-1 1h1m-1 1h1m-1 1h1"/><path id="g1a5" d="M1 -9.5h11m-11 1h1m3 0h1m-5 1h1m2 0h7m-10 1h1m1 0h1m3 0h1m-7 1h1m5 0h1m-7 1h1m1 0h9m-11 1h1m5 0h1m-7 1h1m4 0h1m1 0h1m-8 1h1m3 0h1m3 0h1m-9 1h1m1 0h2m5 0h1m-10 1h1m-1 1h11"/><path id="g1a6" d="M5 -10.5h7m-7 1h1m5 0h1m-12 1h4m1 0h7m-12 1h1m2 0h1m1 0h1m3 0h1m-10 1h1m2 0h1m1 0h1m1 0h5m-12 1h1m2 0h1m1 0h1m1 0h1m1 0h1m1 0h1m-12 1h1m2 0h1m1 0h1m1 0h5m-12 1h1m2 0h1m1 0h1m3 0h1m-10 1h4m1 0h8m-13 1h1m2 0h1m1 0h2m2 0h1m2 0h1m-9 1h1m1 0h7m-9 1h1m1 0h1m5 0h1m-10 1h1m2 0h1m4 0h2"/><path id="g1a7" d="M4 -9.5h2m3 0h2m-10 1h3m2 0h3m-8 1h1m4 0h1m-6 1h4m1 0h1m-6 1h1m2 0h1m1 0h6m-11 1h1m2 0h1m1 0h1m2 0h1m-9 1h4m1 0h1m2 0h1m-9 1h1m4 0h1m2 0h1m-9 1h1m4 0h1m2 0h1m-9 1h1m4 0h1m2 0h1m-9 1h1m3 0h1m3 0h1m-10 1h1m3 0h1m4 0h1"/><path id="g1a8" d="M5 -9.5h1m-1 1h1m-6 1h12m-8 1h1m-2 1h7m-8 1h1m1 0h1m4 0h1m-9 1h1m2 0h6m-10 1h1m3 0h1m4 0h1m-6 1h6m-6 1h1m4 0h1m-6 1h1m4 0h1m-6 1h1m3 0h2"/><path id="g1a9" d="M2 -9.5h1m4 0h1m-6 1h1m4 0h1m-6 1h1m4 0h1m-8 1h10m-8 1h1m4 0h1m1 0h1m-8 1h1m1 0h1m2 0h1m1 0h1m-8 1h2m2 0h2m1 0h1m-10 1h3m4 0h1m1 0h1m-8 1h1m3 0h1m1 0h2m-8 1h1m3 0h1m2 0h1m1 0h1m-12 1h1m1 0h1m2 0h1m4 0h2m-11 1h1m2 0h1m6 0h1"/><path id="g1aa" d="M2 -9.5h1m2 0h6m-10 1h1m-2 1h1m2 1h1m-2 1h1m1 0h8m-11 1h2m5 0h1m-9 1h1m1 0h1m5 0h1m-7 1h1m5 0h1m-7 1h1m5 0h1m-7 1h1m5 0h1m-7 1h1m3 0h1m1 0h1m-7 1h1m4 0h1"/><path id="g1ab" d="M7 -9.5h5m-12 1h5m2 0h1m3 0h1m-12 1h1m3 0h1m2 0h1m3 0h1m-12 1h1m3 0h1m2 0h5m-12 1h5m2 0h1m3 0h1m-12 1h1m3 0h1m2 0h1m3 0h1m-12 1h1m3 0h1m2 0h5m-12 1h5m2 0h1m3 0h1m-12 1h1m3 0h1m2 0h1m3 0h1m-6 1h1m4 0h1m-7 1h1m3 0h1m1 0h1m-9 1h2m5 0h1"/><path id="g1ac" d="M3 -9.5h1m6 0h2m-12 1h7m1 0h2m-9 1h1m3 0h1m2 0h1m-7 1h1m1 0h1m3 0h1m-9 1h7m1 0h4m-9 1h1m4 0h1m1 0h1m-11 1h7m1 0h1m1 0h1m-8 1h1m4 0h1m1 0h1m-10 1h1m1 0h1m1 0h1m2 0h1m1 0h1m-10 1h1m1 0h1m2 0h1m1 0h1m1 0h1m-11 1h1m2 0h1m3 0h1m2 0h1m-9 1h2m2 0h1m3 0h1"/><path id="g1ad" d="M1 -9.5h10m-7 1h1m3 0h1m-5 1h1m3 0h1m-5 1h1m3 0h1m-5 1h1m3 0h1m-9 1h12m-8 1h1m3 0h1m-5 1h1m3 0h1m-6 1h1m4 0h1m-6 1h1m4 0h1m-7 1h1m5 0h1m-8 1h1m6 0h1"/><path id="g1ae" d="M6 -9.5h1m-7 1h4m2 0h1m-7 1h1m2 0h1m2 0h6m-12 1h1m2 0h1m1 0h1m1 0h1m-8 1h1m2 0h2m2 0h1m-8 1h4m3 0h4m-11 1h1m2 0h1m3 0h1m-8 1h1m2 0h1m3 0h1m-8 1h4m3 0h5m-12 1h1m2 0h1m3 0h1m-1 1h1m-1 1h1"/><path id="g1af" d="M6 -10.5h1m-1 1h1m-5 1h9m-5 1h1m-1 1h1m-7 1h13m-7 1h1m-2 1h3m-4 1h1m1 0h1m1 0h1m-6 1h1m2 0h1m2 0h1m-8 1h1m3 0h1m3 0h1m-11 1h2m4 0h1m4 0h2m-7 1h1"/><path id="g1b0" d="M1 -9.5h9m-1 1h1m-1 1h1m-9 1h1m7 0h1m-9 1h1m7 0h1m-9 1h9m-9 1h1m7 0h1m-9 1h1m-1 1h1m9 0h1m-11 1h1m9 0h1m-11 1h1m9 0h1m-10 1h10"/><path id="g1b1" d="M3 -10.5h1m5 0h1m-7 1h1m5 0h1m-7 1h1m4 0h1m-6 1h1m3 0h1m-5 1h1m2 0h1m-4 1h1m1 0h1m-6 1h13m-10 1h1m2 0h1m-4 1h1m3 0h1m-5 1h1m4 0h1m-6 1h1m2 0h1m2 0h1m-7 1h1m1 0h1m4 0h1m-8 1h2m6 0h2"/><path id="g1b2" d="M1 -10.5h1m3 0h1m-5 1h1m3 0h1m2 0h5m-13 1h7m1 0h1m3 0h1m-12 1h1m3 0h1m2 0h1m3 0h1m-12 1h5m2 0h5m-12 1h1m3 0h1m2 0h1m3 0h1m-12 1h5m2 0h1m3 0h1m-12 1h1m3 0h1m2 0h5m-13 1h9m3 0h1m-5 1h1m3 0h1m-12 1h1m3 0h1m2 0h1m3 0h1m-12 1h1m4 0h2m2 0h1m1 0h1m-13 1h1m5 0h1m4 0h1"/><path id="g1b3" d="M2 -10.5h1m2 0h1m-4 1h1m2 0h1m-6 1h1m1 0h1m2 0h8m-13 1h1m1 0h1m1 0h1m-5 1h1m1 0h2m4 0h1m-9 1h1m1 0h1m6 0h1m-10 1h1m1 0h1m1 0h8m-12 1h1m1 0h1m1 0h1m3 0h1m2 0h1m-12 1h1m1 0h1m1 0h1m3 0h1m2 0h1m-10 1h1m1 0h1m3 0h1m2 0h1m-10 1h1m1 0h1m3 0h1m2 0h1m-10 1h1m1 0h8m-10 1h1m1 0h1m6 0h1"/><path id="g1b4" d="M12 -10.5h1m-13 1h8m4 0h1m-10 1h1m5 0h1m2 0h1m-11 1h1m3 0h1m2 0h1m2 0h1m-12 1h7m1 0h1m2 0h1m-9 1h1m4 0h1m2 0h1m-9 1h1m4 0h1m2 0h1m-12 1h6m2 0h1m2 0h1m-9 1h1m4 0h1m2 0h1m-9 1h1m4 0h1m2 0h1m-9 1h3m5 0h1m-13 1h4m6 0h1m1 0h1m-2 1h1"/><path id="g1b5" d="M7 -10.5h1m-8 1h6m1 0h5m-10 1h1m3 0h1m3 0h1m-9 1h1m2 0h8m-12 1h1m4 0h1m2 0h1m2 0h1m-12 1h4m1 0h7m-13 1h2m2 0h1m1 0h1m2 0h1m2 0h1m-12 1h1m2 0h1m1 0h1m2 0h1m2 0h1m-12 1h1m2 0h1m1 0h7m-12 1h1m2 0h1m1 0h1m2 0h1m2 0h1m-12 1h5m3 0h1m2 0h1m-12 1h1m3 0h1m3 0h1m2 0h1m-9 1h1m6 0h2"/><path id="g1b6" d="M5 -10.5h1m0 1h1m-6 1h12m-12 1h1m10 0h1m-13 1h1m1 0h9m-5 1h1m-4 1h1m2 0h1m-4 1h1m2 0h5m-8 1h1m2 0h1m-4 1h1m2 0h1m-5 1h1m1 0h1m1 0h1m-6 1h1m3 0h2m-7 1h1m5 0h7"/><path id="g1b7" d="M0 -9.5h6m-5 1h1m2 0h1m2 0h5m-11 1h1m2 0h1m2 0h1m3 0h1m-11 1h4m2 0h1m3 0h1m-11 1h1m2 0h1m2 0h1m3 0h1m-11 1h4m3 0h1m1 0h1m-10 1h1m2 0h1m3 0h1m1 0h1m-10 1h1m2 0h1m4 0h1m-9 1h5m3 0h1m-10 1h2m2 0h1m3 0h1m1 0h1m-7 1h1m2 0h1m3 0h1m-8 1h1m1 0h1m5 0h1"/><path id="g1b8" d="M1 -10.5h1m6 0h1m-7 1h1m2 0h1m2 0h1m2 0h1m-6 1h1m1 0h1m1 0h1m-11 1h1m7 0h1m-8 1h1m3 0h7m-9 1h1m1 0h1m5 0h1m-10 1h1m2 0h7m-10 1h1m2 0h1m5 0h1m-12 1h2m3 0h7m-11 1h1m3 0h1m5 0h1m-11 1h1m3 0h1m5 0h1m-11 1h1m3 0h1m3 0h1m1 0h1m-11 1h1m3 0h1m4 0h1"/><path id="g1b9" d="M11 -20.5h1m-1 1h2m-2 1h2m-2 1h2m-2 1h12m-12 1h12m-12 1h1m-1 1h1m-1 1h1m-8 1h16m-16 1h17m-17 1h2m13 0h2m-17 1h2m13 0h2m-17 1h2m13 0h2m-17 1h2m13 0h2m-17 1h2m12 0h3m-17 1h17m-17 1h2m13 0h2m-1 2h1m-17 1h2m3 0h2m3 0h2m4 0h2m-19 1h2m4 0h2m4 0h2m3 0h3m-20 1h2m4 0h2m4 0h2m4 0h2m-20 1h2m4 0h3m4 0h2m3 0h3m-22 1h2m6 0h2m4 0h2m4 0h2m-22 1h2m6 0h1m12 0h1"/><path id="g1ba" d="M3 -19.5h1m11 0h2m-14 1h2m6 0h2m2 0h2m-14 1h3m5 0h2m2 0h2m-13 1h3m3 0h3m2 0h2m-12 1h2m3 0h14m-14 1h2m3 0h2m-8 1h2m4 0h2m-8 1h2m4 0h2m-9 1h2m5 0h2m-8 1h16m-25 1h7m2 0h16m-20 1h2m6 0h2m2 0h2m-14 1h2m6 0h2m2 0h2m-14 1h2m6 0h2m2 0h2m-14 1h2m5 0h2m3 0h2m5 0h1m-20 1h2m5 0h2m3 0h2m4 0h2m-20 1h2m4 0h3m3 0h2m4 0h2m-20 1h2m4 0h2m4 0h2m4 0h2m-20 1h2m2 0h3m6 0h7m-20 1h2m1 0h3m-7 1h4m-6 1h3m1 0h5m-10 1h3m4 0h16m-13 1h13"/><path id="g1bb" d="M11 -19.5h2m-2 1h2m-2 1h2m-2 1h2m-2 1h2m-12 1h22m-22 1h22m-22 1h2m8 0h2m8 0h2m-22 1h2m8 0h2m8 0h2m-22 1h2m8 0h2m8 0h2m-22 1h2m8 0h2m8 0h2m-22 1h2m8 0h2m8 0h2m-22 1h22m-22 1h22m-22 1h2m8 0h2m8 0h2m-12 1h2m-2 1h2m-2 1h2m-2 1h2m-2 1h2m-2 1h2m-2 1h2m-2 1h2m-2 1h2"/><path id="g1bc" d="M12 -19.5h2m-2 1h3m-11 1h20m-20 1h20m-20 1h2m-5 1h2m1 0h2m-5 1h2m1 0h2m2 0h16m-22 1h4m2 0h16m-22 1h4m9 0h2m-13 1h2m9 0h2m-13 1h2m3 0h14m-19 1h2m3 0h15m-21 1h3m3 0h2m4 0h2m5 0h2m-23 1h5m3 0h2m3 0h3m5 0h2m-23 1h2m1 0h2m3 0h2m3 0h4m4 0h2m-20 1h2m3 0h2m3 0h4m4 0h2m-20 1h2m3 0h2m2 0h2m2 0h2m3 0h2m-20 1h2m3 0h2m1 0h3m2 0h3m2 0h2m-20 1h1m4 0h5m4 0h2m2 0h2m-21 1h2m4 0h4m9 0h2m-21 1h2m4 0h2m11 0h2m-22 1h2m5 0h2m11 0h2m-22 1h2m5 0h2m8 0h4m-22 1h2m6 0h2m8 0h3"/><path id="g1bd" d="M12 -19.5h2m-3 1h3m-3 1h3m-3 1h3m-3 1h3m-3 1h3m-3 1h3m-3 1h3m-3 1h3m-3 1h4m-4 1h4m-5 1h5m-5 1h2m2 0h2m-6 1h2m2 0h2m-7 1h2m3 0h2m-7 1h2m4 0h2m-9 1h3m4 0h3m-11 1h3m6 0h2m-12 1h3m8 0h2m-13 1h3m8 0h3m-16 1h4m10 0h3m-18 1h4m12 0h4m-22 1h5m15 0h4m-24 1h3m18 0h2m-23 1h2"/><path id="g1be" d="M19 -19.5h2m-2 1h2m-19 1h8m9 0h2m-19 1h2m3 0h3m9 0h2m-19 1h2m3 0h3m9 0h2m-19 1h2m3 0h3m9 0h2m-19 1h2m3 0h3m1 0h14m-23 1h2m3 0h3m9 0h2m-19 1h2m3 0h3m9 0h2m-19 1h2m3 0h3m9 0h2m-19 1h8m2 0h2m5 0h2m-19 1h2m3 0h3m2 0h2m5 0h2m-19 1h2m3 0h3m2 0h3m4 0h2m-19 1h2m3 0h3m3 0h2m4 0h2m-19 1h2m3 0h3m4 0h2m3 0h2m-19 1h2m3 0h3m4 0h2m3 0h2m-19 1h2m3 0h3m9 0h2m-19 1h8m9 0h2m-19 1h8m9 0h2m-19 1h2m3 0h3m9 0h2m-2 1h2m-2 1h2m-5 1h5m-5 1h4"/><path id="g1bf" d="M12 -1.5h3m-3 1h3m-3 1h3m-2 1h1m-2 1h2m-2 1h1"/><path id="g1c0" d="M11 -19.5h2m6 0h1m-19 1h2m9 0h2m5 0h2m-20 1h7m5 0h2m3 0h2m-14 1h2m2 0h13m-17 1h2m2 0h13m-17 1h2m2 0h2m4 0h2m3 0h2m-17 1h2m2 0h2m4 0h2m3 0h2m-21 1h6m2 0h2m4 0h2m3 0h2m-21 1h6m2 0h13m-21 1h1m7 0h2m4 0h2m3 0h2m-21 1h1m7 0h2m4 0h2m3 0h2m-22 1h2m7 0h2m4 0h2m3 0h2m-22 1h2m7 0h2m4 0h2m3 0h2m-22 1h7m2 0h13m-22 1h7m7 0h3m-12 1h2m8 0h2m-12 1h2m8 0h2m-12 1h2m1 0h16m-19 1h2m1 0h16m-19 1h2m8 0h2m-12 1h2m8 0h2m-12 1h2m8 0h2m-14 1h3m9 0h2m-14 1h2m10 0h2"/><path id="g1c1" d="M11 -20.5h2m-2 1h3m-2 1h3m-12 1h21m-21 1h2m5 0h1m3 0h2m6 0h2m-21 1h1m6 0h1m4 0h2m6 0h1m-21 1h1m4 0h4m3 0h5m3 0h1m-21 1h1m2 0h4m2 0h1m4 0h4m2 0h1m-21 1h5m3 0h2m6 0h2m-19 1h4m5 0h2m-3 1h3m-9 1h17m-17 1h2m4 0h2m7 0h2m-17 1h2m4 0h2m7 0h2m-17 1h2m3 0h9m1 0h2m-17 1h2m2 0h3m4 0h2m2 0h2m-17 1h2m1 0h6m2 0h2m2 0h2m-17 1h5m2 0h5m3 0h2m-17 1h4m4 0h4m3 0h2m-17 1h2m5 0h5m3 0h2m-17 1h2m3 0h4m1 0h3m2 0h2m-17 1h2m2 0h4m7 0h2m-17 1h17m-17 1h17m-17 1h2m13 0h2"/><path id="g1c2" d="M3 -19.5h2m10 0h2m-14 1h3m9 0h2m-13 1h3m8 0h2m-12 1h2m8 0h2m-12 1h2m8 0h2m-2 1h2m-2 1h2m-2 1h2m-17 1h6m9 0h9m-24 1h6m9 0h9m-20 1h2m9 0h2m-13 1h2m9 0h2m-13 1h2m9 0h2m-13 1h2m9 0h2m-13 1h2m9 0h2m-13 1h2m3 0h1m5 0h2m-13 1h2m2 0h2m5 0h2m-13 1h2m1 0h2m6 0h2m-13 1h2m1 0h2m6 0h2m-13 1h4m7 0h2m-13 1h3m8 0h2m-13 1h2m2 0h17m-20 1h1m2 0h17"/><path id="g1c3" d="M5 -19.5h2m-2 1h2m4 0h12m-18 1h2m4 0h12m-18 1h2m6 0h1m6 0h2m-17 1h2m6 0h2m4 0h2m-16 1h2m7 0h2m2 0h3m-20 1h10m3 0h6m-15 1h2m8 0h4m-14 1h2m8 0h4m-14 1h2m6 0h3m1 0h5m-17 1h2m4 0h4m1 0h2m1 0h6m-20 1h8m3 0h2m3 0h3m-19 1h3m2 0h1m5 0h2m-17 1h6m4 0h12m-22 1h3m1 0h2m4 0h12m-22 1h1m3 0h2m9 0h2m-13 1h2m9 0h2m-13 1h2m9 0h2m-13 1h2m2 0h15m-19 1h2m9 0h2m-13 1h2m9 0h2m-13 1h2m9 0h2m-16 1h5m9 0h2m-16 1h4m10 0h2m-16 1h2"/><path id="g1c4" d="M12 -20.5h1m-1 1h2m-2 1h2m-10 1h18m-18 1h18m-18 1h2m6 0h2m6 0h2m-18 1h2m6 0h2m6 0h2m-18 1h18m-10 1h2m-2 1h2m-11 1h19m-19 1h20m-20 1h2m7 0h2m7 0h2m-20 1h2m7 0h2m7 0h2m-20 1h20m-11 1h2m-2 1h2m-2 1h2m-7 1h2m3 0h2m-7 1h2m3 0h3m-13 1h2m3 0h2m4 0h3m5 0h2m-21 1h2m3 0h2m5 0h1m4 0h5m-23 1h2m4 0h2m10 0h2m1 0h2m-24 1h3m4 0h2m10 0h2m2 0h2m-25 1h2m5 0h13m-11 1h10"/><path id="g1c5" d="M11 -19.5h2m-2 1h2m-2 1h2m7 0h2m-17 1h17m-17 1h16m-10 1h2m4 0h3m-9 1h2m3 0h3m-8 1h2m2 0h3m-16 1h23m-23 1h23m-13 1h3m-5 1h3m-5 1h12m-14 1h15m-17 1h6m9 0h2m-20 1h6m1 0h2m9 0h2m-20 1h4m3 0h2m8 0h3m-13 1h13m-13 1h2m9 0h2m-13 1h2m9 0h2m-13 1h2m9 0h2m-13 1h13m-13 1h2m9 0h2m-13 1h2m9 0h2"/></defs></svg><div class="a" style="left:8px;top:1px;width:1493px;height:930px;background:#1c1c1c"></div>
<div class="a" style="left:9px;top:2px;width:1492px;height:37px;background:#ffffff"></div>
<svg class="a" style="left:20px;top:11px;overflow:visible" width="22" height="20" viewBox="0 0 22 20"><path d="M2 1 L17 3 L17 14 L2 15Z" fill="#2a3bd6"/><path d="M9 2 L17 3 L17 14 L9 14Z" fill="#8fa4f0"/><ellipse cx="9" cy="17" rx="5" ry="2.5" fill="#d4d4d4"/><circle cx="15" cy="15" r="5" fill="#eef2ee" stroke="#aaa" stroke-width="0.8"/><path d="M12 17 L14 13 L15 15 L18 12" stroke="#4caf50" stroke-width="1.6" fill="none"/></svg>
<div class="a" style="left:43px;top:10px;width:180px;height:22px;font-size:16px;line-height:22px;color:#000">192.168.100.108:3389 -</div>
<div class="a" style="left:216px;top:10px;width:100px;height:22px;font-size:15px;line-height:22px;color:#000"><span class="c"><b class="tx">远程桌面连接</b><svg class=g width=15 height=1><use href=#g0 /></svg><svg class=g width=15 height=1><use href=#g1 /></svg><svg class=g width=15 height=1><use href=#g2 /></svg><svg class=g width=15 height=1><use href=#g3 /></svg><svg class=g width=15 height=1><use href=#g4 /></svg><svg class=g width=15 height=1><use href=#g5 /></svg></span></div>
<div class="a" style="left:9px;top:39px;width:1492px;height:892px;background:linear-gradient(90deg,#001a38 0%,#021c3e 45%,#05244e 60%,#031c40 80%,#021836 100%)"></div>
<div class="a" style="left:701px;top:868px;width:800px;height:63px;background:linear-gradient(100deg,#012850 0%,#013a76 35%,#0252a0 60%,#0462b8 78%,#0a80e6 92%,#0c88ee 100%)"></div>
<svg class="a" style="left:24px;top:49px;overflow:visible" width="46" height="44" viewBox="0 0 46 44"><path d="M12 1 L44 8 L44 31 L12 32 Z" fill="#dfe6ee"/><path d="M13 3 L43 9.5 L43 30 L13 31 Z" fill="#3aa6ee"/><path d="M13 3 L43 9.5 L43 18 L13 22Z" fill="#5ec0fa"/><path d="M18 32 L28 31 L33 35 L22 37Z" fill="#d8dde3"/><path d="M0 35 L13 32 L34 38 L20 43Z" fill="#f0f2f4"/></svg>
<div class="a dt" style="left:-8px;top:97px;width:110px;height:18px;"><span class="c"><b class="tx">此电脑</b><svg class=g width=12 height=1><use href=#g6 /></svg><svg class=g width=12 height=1><use href=#g7 /></svg><svg class=g width=12 height=1><use href=#g8 /></svg></span></div>
<svg class="a" style="left:105px;top:50px;overflow:visible" width="30" height="42" viewBox="0 0 30 42"><path d="M2 2 L17 2 L20 6 L28 6 L28 40 L2 40 Z" fill="#e8b945"/><path d="M2 2 L12 6 L12 42 L2 38 Z" fill="#fbe7a1"/><path d="M12 6 L28 6 L28 40 L12 40 Z" fill="#f7d575"/><path d="M28 26 L30 28 L30 40 L28 40Z" fill="#eec65d"/></svg>
<div class="a dt" style="left:72px;top:97px;width:100px;height:18px;"><span class="c"><b class="tx">新版本跟踪工</b><svg class=g width=12 height=1><use href=#g9 /></svg><svg class=g width=12 height=1><use href=#ga /></svg><svg class=g width=12 height=1><use href=#gb /></svg><svg class=g width=12 height=1><use href=#gc /></svg><svg class=g width=12 height=1><use href=#gd /></svg><svg class=g width=12 height=1><use href=#ge /></svg></span></div>
<svg class="a" style="left:175px;top:46px;overflow:visible" width="48" height="48" viewBox="0 0 48 48"><rect x="0.5" y="0.5" width="47" height="47" rx="5" fill="#3a3f44"/><rect x="3" y="3" width="42" height="42" rx="3" fill="#2a8fd0"/><rect x="3" y="3" width="42" height="18" rx="3" fill="#4aa6de"/><path d="M9 11 L9 31 L26 31 Z" fill="none" stroke="#5a6fd0" stroke-width="3"/><path d="M14 28 L34 9 L38 12 L18 31 Z" fill="#f3c53b"/><path d="M34 9 L36 7 L40 10 L38 12Z" fill="#d9534f"/><rect x="10" y="32" width="29" height="5" fill="#e9c23c"/></svg>
<div class="a dt" style="left:149px;top:97px;width:100px;height:18px;"><span class="c"><b class="tx">危重患者护理</b><svg class=g width=12 height=1><use href=#gf /></svg><svg class=g width=12 height=1><use href=#g10 /></svg><svg class=g width=12 height=1><use href=#g11 /></svg><svg class=g width=12 height=1><use href=#g12 /></svg><svg class=g width=12 height=1><use href=#g13 /></svg><svg class=g width=12 height=1><use href=#g14 /></svg></span></div>
<svg class="a" style="left:258px;top:49px;overflow:visible" width="34" height="44" viewBox="0 0 34 44"><path d="M1 1 L24 1 L33 10 L33 43 L1 43 Z" fill="#fbfbfb" stroke="#d0d0d0"/><path d="M24 1 L24 10 L33 10Z" fill="#dedede"/></svg>
<div class="a dt" style="left:229px;top:97px;width:90px;height:18px;">com.ylz.his-</div>
<svg class="a" style="left:329px;top:52px;overflow:visible" width="44" height="40" viewBox="0 0 44 40"><rect x="2" y="2" width="41" height="30" fill="#f4f4f4" stroke="#a0a0a0"/><rect x="2" y="2" width="42" height="3" fill="#c8c8c8"/><rect x="14" y="8" width="17" height="22" fill="#1e7fd8"/><rect x="5" y="9" width="6" height="1" fill="#888"/><rect x="5" y="13" width="6" height="1" fill="#888"/><rect x="5" y="17" width="6" height="1" fill="#888"/><rect x="33" y="9" width="8" height="1" fill="#888"/><rect x="33" y="13" width="8" height="1" fill="#888"/><rect x="33" y="17" width="8" height="1" fill="#888"/><rect x="33" y="21" width="8" height="1" fill="#888"/><rect x="-1" y="29" width="13" height="13" fill="#fff" stroke="#999"/><path d="M2 40 L2 35 Q4 32 8 33 L8 31 L11 35 L8 38 L8 36 Q5 36 2 40Z" fill="#1d6fc4"/></svg>
<div class="a dt" style="left:305px;top:97px;width:90px;height:18px;">his<span class="c"><b class="tx">同步门诊</b><svg class=g width=12 height=1><use href=#g15 /></svg><svg class=g width=12 height=1><use href=#g16 /></svg><svg class=g width=12 height=1><use href=#g17 /></svg><svg class=g width=12 height=1><use href=#g18 /></svg></span></div>
<svg class="a" style="left:410px;top:49px;overflow:visible" width="34" height="44" viewBox="0 0 34 44"><path d="M1 1 L25 1 L33 9 L33 43 L1 43 Z" fill="#fbfbfb" stroke="#a8a8a8"/><rect x="3" y="4" width="20" height="1" fill="#909090"/><rect x="3" y="7" width="20" height="1" fill="#909090"/><rect x="3" y="10" width="27" height="1" fill="#909090"/><rect x="3" y="13" width="27" height="1" fill="#909090"/><rect x="3" y="16" width="27" height="1" fill="#909090"/><rect x="3" y="19" width="27" height="1" fill="#909090"/><rect x="3" y="22" width="27" height="1" fill="#909090"/><rect x="3" y="25" width="27" height="1" fill="#909090"/><rect x="3" y="28" width="27" height="1" fill="#909090"/><rect x="3" y="31" width="27" height="1" fill="#909090"/><rect x="3" y="34" width="27" height="1" fill="#909090"/><rect x="3" y="37" width="27" height="1" fill="#909090"/><rect x="3" y="40" width="27" height="1" fill="#909090"/></svg>
<div class="a dt" style="left:376px;top:97px;width:100px;height:18px;"><span class="c"><b class="tx">新建文本文档</b><svg class=g width=12 height=1><use href=#g9 /></svg><svg class=g width=12 height=1><use href=#g19 /></svg><svg class=g width=12 height=1><use href=#g1a /></svg><svg class=g width=12 height=1><use href=#gb /></svg><svg class=g width=12 height=1><use href=#g1a /></svg><svg class=g width=12 height=1><use href=#g1b /></svg></span></div>
<div class="a dt" style="left:67px;top:112px;width:110px;height:18px;"><span class="c"><b class="tx">具</b><svg class=g width=12 height=1><use href=#g1c /></svg></span></div>
<div class="a dt" style="left:141px;top:112px;width:110px;height:18px;"><span class="c"><b class="tx">理系统新版</b><svg class=g width=12 height=1><use href=#g14 /></svg><svg class=g width=12 height=1><use href=#g1d /></svg><svg class=g width=12 height=1><use href=#g1e /></svg><svg class=g width=12 height=1><use href=#g9 /></svg><svg class=g width=12 height=1><use href=#ga /></svg></span></div>
<div class="a dt" style="left:203px;top:112px;width:110px;height:18px;"><span class="c"><b class="tx">数据同</b><svg class=g width=12 height=1><use href=#g1f /></svg><svg class=g width=12 height=1><use href=#g20 /></svg><svg class=g width=12 height=1><use href=#g15 /></svg></span></div>
<div class="a dt" style="left:295px;top:112px;width:110px;height:18px;"><span class="c"><b class="tx">服</b><svg class=g width=12 height=1><use href=#g21 /></svg></span></div>
<svg class="a" style="left:27px;top:150px;overflow:visible" width="40" height="48" viewBox="0 0 40 48"><path d="M4 6 L36 6 L32 46 L8 46 Z" fill="#e8eef2" stroke="#b8c4cc"/><ellipse cx="20" cy="6" rx="16" ry="4" fill="#f6f8fa" stroke="#b8c4cc"/><path d="M7 10 L33 10" stroke="#cdd6dc"/><path d="M8 20 L32 20" stroke="#dfe5ea"/><path d="M14 22 Q20 14 25 22 M26 27 Q24 33 16 32 M13 28 L12 24" fill="none" stroke="#1a82d8" stroke-width="3"/></svg>
<div class="a dt" style="left:7px;top:201px;width:80px;height:18px;"><span class="c"><b class="tx">回收站</b><svg class=g width=12 height=1><use href=#g22 /></svg><svg class=g width=12 height=1><use href=#g23 /></svg><svg class=g width=12 height=1><use href=#g24 /></svg></span></div>
<svg class="a" style="left:29px;top:256px;overflow:visible" width="30" height="42" viewBox="0 0 30 42"><path d="M2 2 L17 2 L20 6 L28 6 L28 40 L2 40 Z" fill="#e8b945"/><path d="M2 2 L12 6 L12 42 L2 38 Z" fill="#fbe7a1"/><path d="M12 6 L28 6 L28 40 L12 40 Z" fill="#f7d575"/><path d="M28 26 L30 28 L30 40 L28 40Z" fill="#eec65d"/></svg>
<div class="a dt" style="left:4px;top:305px;width:86px;height:18px;">bm_jclb00</div>
<svg class="a" style="left:29px;top:362px;overflow:visible" width="30" height="42" viewBox="0 0 30 42"><path d="M2 2 L17 2 L20 6 L28 6 L28 40 L2 40 Z" fill="#e8b945"/><path d="M2 2 L12 6 L12 42 L2 38 Z" fill="#fbe7a1"/><path d="M12 6 L28 6 L28 40 L12 40 Z" fill="#f7d575"/><path d="M28 26 L30 28 L30 40 L28 40Z" fill="#eec65d"/></svg>
<div class="a dt" style="left:4px;top:410px;width:86px;height:18px;">fastReport</div>
<div class="a dt" style="left:2px;top:426px;width:86px;height:18px;"><span class="c"><b class="tx">自定义报表</b><svg class=g width=12 height=1><use href=#g25 /></svg><svg class=g width=12 height=1><use href=#g26 /></svg><svg class=g width=12 height=1><use href=#g27 /></svg><svg class=g width=12 height=1><use href=#g28 /></svg><svg class=g width=12 height=1><use href=#g29 /></svg></span>...</div>
<svg class="a" style="left:29px;top:467px;overflow:visible" width="30" height="42" viewBox="0 0 30 42"><path d="M2 2 L17 2 L20 6 L28 6 L28 40 L2 40 Z" fill="#e8b945"/><path d="M2 2 L12 6 L12 42 L2 38 Z" fill="#fbe7a1"/><path d="M12 6 L28 6 L28 40 L12 40 Z" fill="#f7d575"/><path d="M28 26 L30 28 L30 40 L28 40Z" fill="#eec65d"/></svg>
<div class="a dt" style="left:4px;top:513px;width:86px;height:18px;">WebSite</div>
<svg class="a" style="left:29px;top:570px;overflow:visible" width="30" height="42" viewBox="0 0 30 42"><path d="M2 2 L17 2 L20 6 L28 6 L28 40 L2 40 Z" fill="#e8b945"/><path d="M2 2 L12 6 L12 42 L2 38 Z" fill="#fbe7a1"/><path d="M12 6 L28 6 L28 40 L12 40 Z" fill="#f7d575"/><path d="M28 26 L30 28 L30 40 L28 40Z" fill="#eec65d"/></svg>
<div class="a dt" style="left:4px;top:617px;width:86px;height:18px;"><span class="c"><b class="tx">临时脚本</b><svg class=g width=12 height=1><use href=#g2a /></svg><svg class=g width=12 height=1><use href=#g2b /></svg><svg class=g width=12 height=1><use href=#g2c /></svg><svg class=g width=12 height=1><use href=#gb /></svg></span></div>
<svg class="a" style="left:29px;top:673px;overflow:visible" width="30" height="42" viewBox="0 0 30 42"><path d="M2 2 L17 2 L20 6 L28 6 L28 40 L2 40 Z" fill="#e8b945"/><path d="M2 2 L12 6 L12 42 L2 38 Z" fill="#fbe7a1"/><path d="M12 6 L28 6 L28 40 L12 40 Z" fill="#f7d575"/><path d="M28 26 L30 28 L30 40 L28 40Z" fill="#eec65d"/></svg>
<div class="a dt" style="left:4px;top:721px;width:86px;height:18px;"><span class="c"><b class="tx">门诊</b><svg class=g width=12 height=1><use href=#g17 /></svg><svg class=g width=12 height=1><use href=#g18 /></svg></span></div>
<div class="a dt" style="left:4px;top:738px;width:86px;height:18px;">-dll-0416</div>
<svg class="a" style="left:29px;top:776px;overflow:visible" width="30" height="42" viewBox="0 0 30 42"><path d="M2 2 L17 2 L20 6 L28 6 L28 40 L2 40 Z" fill="#e8b945"/><path d="M2 2 L12 6 L12 42 L2 38 Z" fill="#fbe7a1"/><path d="M12 6 L28 6 L28 40 L12 40 Z" fill="#f7d575"/><path d="M28 26 L30 28 L30 40 L28 40Z" fill="#eec65d"/></svg>
<div class="a dt" style="left:4px;top:825px;width:86px;height:18px;"><span class="c"><b class="tx">门诊电子病历</b><svg class=g width=12 height=1><use href=#g17 /></svg><svg class=g width=12 height=1><use href=#g18 /></svg><svg class=g width=12 height=1><use href=#g7 /></svg><svg class=g width=12 height=1><use href=#g2d /></svg><svg class=g width=12 height=1><use href=#g2e /></svg><svg class=g width=12 height=1><use href=#g2f /></svg></span></div>
<div class="a dt" style="left:4px;top:842px;width:86px;height:18px;"><span class="c"><b class="tx">更新</b><svg class=g width=12 height=1><use href=#g30 /></svg><svg class=g width=12 height=1><use href=#g9 /></svg></span></div>
<svg class="a" style="left:29px;top:880px;overflow:visible" width="30" height="42" viewBox="0 0 30 42"><path d="M2 2 L17 2 L20 6 L28 6 L28 40 L2 40 Z" fill="#e8b945"/><path d="M2 2 L12 6 L12 42 L2 38 Z" fill="#fbe7a1"/><path d="M12 6 L28 6 L28 40 L12 40 Z" fill="#f7d575"/><path d="M28 26 L30 28 L30 40 L28 40Z" fill="#eec65d"/></svg>
<div class="a" style="left:86px;top:305px;width:10px;height:18px;color:#fff;font-size:13px;line-height:16px"><span class="c"><b class="tx">图</b><svg class=g width=13 height=1><use href=#g31 /></svg></span></div>
<div class="a" style="left:86px;top:410px;width:10px;height:18px;color:#fff;font-size:13px;line-height:16px"><span class="c"><b class="tx">图</b><svg class=g width=13 height=1><use href=#g31 /></svg></span></div>
<div class="a" style="left:86px;top:513px;width:10px;height:18px;color:#fff;font-size:13px;line-height:16px"><span class="c"><b class="tx">图</b><svg class=g width=13 height=1><use href=#g31 /></svg></span></div>
<div class="a" style="left:86px;top:617px;width:10px;height:18px;color:#fff;font-size:13px;line-height:16px"><span class="c"><b class="tx">杉</b><svg class=g width=13 height=1><use href=#g32 /></svg></span></div>
<div class="a" style="left:86px;top:721px;width:10px;height:18px;color:#fff;font-size:13px;line-height:16px">S</div>
<div class="a" style="left:86px;top:825px;width:10px;height:18px;color:#fff;font-size:13px;line-height:16px">1</div>
<svg class="a" style="left:99px;top:877px;overflow:visible" width="48" height="48" viewBox="0 0 48 48"><rect x="0.5" y="0.5" width="47" height="47" rx="5" fill="#3a3f44"/><rect x="3" y="3" width="42" height="42" rx="3" fill="#2a8fd0"/><rect x="3" y="3" width="42" height="18" rx="3" fill="#4aa6de"/><path d="M9 11 L9 31 L26 31 Z" fill="none" stroke="#5a6fd0" stroke-width="3"/><path d="M14 28 L34 9 L38 12 L18 31 Z" fill="#f3c53b"/><path d="M34 9 L36 7 L40 10 L38 12Z" fill="#d9534f"/><rect x="10" y="32" width="29" height="5" fill="#e9c23c"/></svg>
<svg class="a" style="left:176px;top:879px;overflow:visible" width="46" height="48" viewBox="0 0 46 48"><path d="M10 4 L40 2 L44 40 L6 46 Z" fill="#7ab6d8"/><path d="M12 6 L40 4 L42 38 L10 44Z" fill="#eef5fa"/><path d="M14 10 L40 8" stroke="#9fb8c8" stroke-width="1"/><path d="M14 14 L40 12" stroke="#9fb8c8" stroke-width="1"/><path d="M14 18 L40 16" stroke="#9fb8c8" stroke-width="1"/><path d="M14 22 L40 20" stroke="#9fb8c8" stroke-width="1"/><path d="M14 26 L40 24" stroke="#9fb8c8" stroke-width="1"/><path d="M14 30 L40 28" stroke="#9fb8c8" stroke-width="1"/><path d="M14 34 L40 32" stroke="#9fb8c8" stroke-width="1"/><path d="M14 38 L40 36" stroke="#9fb8c8" stroke-width="1"/><path d="M10 4 L40 2 L40 6 L12 8Z" fill="#2f6f96"/></svg>
<svg class="a" style="left:250px;top:877px;overflow:visible" width="34" height="50" viewBox="0 0 34 50"><path d="M17 25 L17 0 A25 25 0 0 1 34 8Z" fill="#c040e8"/><path d="M17 25 L34 8 L34 30Z" fill="#ffd21f"/><path d="M17 25 L34 30 L30 48 Z" fill="#ffcc00"/><path d="M17 25 L24 50 L4 42Z" fill="#34c759"/><path d="M17 25 L4 42 L0 20Z" fill="#2ecc71"/><path d="M17 25 L0 20 L6 4 Z" fill="#3b82f6"/><path d="M17 25 L6 4 L17 0Z" fill="#1e90ff"/><circle cx="17" cy="25" r="4" fill="#fff"/><rect x="0" y="36" width="13" height="13" fill="#fff"/><path d="M3 46 L3 41 Q5 38 9 39 L9 37 L12 41 L9 44 L9 42 Q6 42 3 46Z" fill="#1d6fc4"/></svg>
<div class="a" style="left:280px;top:868px;width:412px;height:63px;background:#ffffff"></div>
<div class="a" style="left:691px;top:868px;width:1px;height:63px;background:#c8c4c8"></div>
<div class="a" style="left:692px;top:868px;width:9px;height:63px;background:#f5f1f5"></div>
<div class="a" style="left:310px;top:875px;width:138px;height:29px;background:#e6e2e6;border:1px solid #adadad;font-size:12px;line-height:27px;text-align:center"><span class="c"><b class="tx">打开文件所在的位置</b><svg class=g width=12 height=1><use href=#g33 /></svg><svg class=g width=12 height=1><use href=#g34 /></svg><svg class=g width=12 height=1><use href=#g1a /></svg><svg class=g width=12 height=1><use href=#g35 /></svg><svg class=g width=12 height=1><use href=#g36 /></svg><svg class=g width=12 height=1><use href=#g37 /></svg><svg class=g width=12 height=1><use href=#g38 /></svg><svg class=g width=12 height=1><use href=#g39 /></svg><svg class=g width=12 height=1><use href=#g3a /></svg></span>(F)</div>
<div class="a" style="left:457px;top:875px;width:106px;height:29px;background:#e6e2e6;border:1px solid #adadad;font-size:12px;line-height:27px;text-align:center"><span class="c"><b class="tx">更改图标</b><svg class=g width=12 height=1><use href=#g30 /></svg><svg class=g width=12 height=1><use href=#g3b /></svg><svg class=g width=12 height=1><use href=#g3c /></svg><svg class=g width=12 height=1><use href=#g3d /></svg></span>(C)...</div>
<div class="a" style="left:572px;top:875px;width:105px;height:29px;background:#e6e2e6;border:1px solid #adadad;font-size:12px;line-height:27px;text-align:center"><span class="c"><b class="tx">高级</b><svg class=g width=12 height=1><use href=#g3e /></svg><svg class=g width=12 height=1><use href=#g3f /></svg></span>(D)...</div>
<svg width="0" height="0" style="position:absolute"><defs><clipPath id="lc"><circle cx="7" cy="7" r="7"/></clipPath></defs></svg>
<div class="a" style="left:95px;top:118px;width:1406px;height:750px;background:#f5f1f5;border-left:1px solid #9a9a9a"></div>
<div class="a" style="left:96px;top:118px;width:1405px;height:30px;background:#ffffff"></div>
<svg class="a" style="left:104px;top:125px;overflow:visible" width="15" height="15" viewBox="0 0 14 14"><g clip-path="url(#lc)" transform="rotate(33 7 7)"><rect x="-3" y="-3" width="20" height="6.2" fill="#f06a10"/><rect x="-3" y="4" width="20" height="5.6" fill="#0c7fd6"/><rect x="-3" y="10.4" width="20" height="7" fill="#f8b010"/></g></svg>
<div class="a" style="left:124px;top:123px;width:400px;height:20px;color:#8a8a8a;font-size:13px;line-height:20px"><span class="c"><span class="c"><b class="tx">病区护理系统</b><svg class=g width=13 height=1><use href=#g40 /></svg><svg class=g width=13 height=1><use href=#g41 /></svg><svg class=g width=13 height=1><use href=#g42 /></svg><svg class=g width=13 height=1><use href=#g43 /></svg><svg class=g width=13 height=1><use href=#g44 /></svg><svg class=g width=13 height=1><use href=#g45 /></svg></span> - [<span class="c"><b class="tx">病区医嘱维护</b><svg class=g width=13 height=1><use href=#g40 /></svg><svg class=g width=13 height=1><use href=#g41 /></svg><svg class=g width=13 height=1><use href=#g46 /></svg><svg class=g width=13 height=1><use href=#g47 /></svg><svg class=g width=13 height=1><use href=#g48 /></svg><svg class=g width=13 height=1><use href=#g42 /></svg></span>]</span></div>
<div class="a" style="left:1400px;top:131px;width:11px;height:1px;background:#333"></div>
<div class="a" style="left:1444px;top:126px;width:11px;height:11px;border:1px solid #333"></div>
<svg class="a" style="left:1489px;top:125px;overflow:visible" width="12" height="13" viewBox="0 0 12 13"><path d="M1 1 L12 12 M12 1 L1 12" stroke="#333" stroke-width="1.1"/></svg>
<div class="a" style="left:96px;top:148px;width:1405px;height:21px;background:#f5f1f5"></div>
<svg class="a" style="left:99px;top:150px;overflow:visible" width="16" height="16" viewBox="0 0 14 14"><g clip-path="url(#lc)" transform="rotate(33 7 7)"><rect x="-3" y="-3" width="20" height="6.2" fill="#f06a10"/><rect x="-3" y="4" width="20" height="5.6" fill="#0c7fd6"/><rect x="-3" y="10.4" width="20" height="7" fill="#f8b010"/></g></svg>
<div class="a" style="left:122px;top:148px;width:90px;height:20px;color:#505050;font-size:12px;line-height:20px"><span class="c"><b class="tx">医嘱管理</b><svg class=g width=12 height=1><use href=#g49 /></svg><svg class=g width=12 height=1><use href=#g4a /></svg><svg class=g width=12 height=1><use href=#g4b /></svg><svg class=g width=12 height=1><use href=#g14 /></svg></span>(N)</div>
<div class="a" style="left:201px;top:148px;width:90px;height:20px;color:#505050;font-size:12px;line-height:20px"><span class="c"><b class="tx">药品管理</b><svg class=g width=12 height=1><use href=#g4c /></svg><svg class=g width=12 height=1><use href=#g4d /></svg><svg class=g width=12 height=1><use href=#g4b /></svg><svg class=g width=12 height=1><use href=#g14 /></svg></span>(Y)</div>
<div class="a" style="left:279px;top:148px;width:90px;height:20px;color:#505050;font-size:12px;line-height:20px"><span class="c"><b class="tx">病情处理</b><svg class=g width=12 height=1><use href=#g2e /></svg><svg class=g width=12 height=1><use href=#g4e /></svg><svg class=g width=12 height=1><use href=#g4f /></svg><svg class=g width=12 height=1><use href=#g14 /></svg></span>(B)</div>
<div class="a" style="left:357px;top:148px;width:90px;height:20px;color:#505050;font-size:12px;line-height:20px"><span class="c"><b class="tx">流动管理</b><svg class=g width=12 height=1><use href=#g50 /></svg><svg class=g width=12 height=1><use href=#g51 /></svg><svg class=g width=12 height=1><use href=#g4b /></svg><svg class=g width=12 height=1><use href=#g14 /></svg></span>(L)</div>
<div class="a" style="left:433px;top:148px;width:90px;height:20px;color:#505050;font-size:12px;line-height:20px"><span class="c"><b class="tx">记账管理</b><svg class=g width=12 height=1><use href=#g52 /></svg><svg class=g width=12 height=1><use href=#g53 /></svg><svg class=g width=12 height=1><use href=#g4b /></svg><svg class=g width=12 height=1><use href=#g14 /></svg></span>(J)</div>
<div class="a" style="left:508px;top:148px;width:90px;height:20px;color:#505050;font-size:12px;line-height:20px"><span class="c"><b class="tx">日常管理</b><svg class=g width=12 height=1><use href=#g54 /></svg><svg class=g width=12 height=1><use href=#g55 /></svg><svg class=g width=12 height=1><use href=#g4b /></svg><svg class=g width=12 height=1><use href=#g14 /></svg></span></div>
<div class="a" style="left:570px;top:148px;width:90px;height:20px;color:#505050;font-size:12px;line-height:20px"><span class="c"><b class="tx">系统维护</b><svg class=g width=12 height=1><use href=#g1d /></svg><svg class=g width=12 height=1><use href=#g1e /></svg><svg class=g width=12 height=1><use href=#g56 /></svg><svg class=g width=12 height=1><use href=#g13 /></svg></span></div>
<div class="a" style="left:632px;top:148px;width:90px;height:20px;color:#505050;font-size:12px;line-height:20px"><span class="c"><b class="tx">查询</b><svg class=g width=12 height=1><use href=#g57 /></svg><svg class=g width=12 height=1><use href=#g58 /></svg></span></div>
<div class="a" style="left:670px;top:148px;width:90px;height:20px;color:#505050;font-size:12px;line-height:20px"><span class="c"><b class="tx">报表</b><svg class=g width=12 height=1><use href=#g28 /></svg><svg class=g width=12 height=1><use href=#g29 /></svg></span></div>
<div class="a" style="left:708px;top:148px;width:90px;height:20px;color:#505050;font-size:12px;line-height:20px"><span class="c"><b class="tx">窗口</b><svg class=g width=12 height=1><use href=#g59 /></svg><svg class=g width=12 height=1><use href=#g5a /></svg></span></div>
<div class="a" style="left:745px;top:148px;width:90px;height:20px;color:#505050;font-size:12px;line-height:20px"><span class="c"><b class="tx">帮助</b><svg class=g width=12 height=1><use href=#g5b /></svg><svg class=g width=12 height=1><use href=#g5c /></svg></span></div>
<div class="a" style="left:1462px;top:149px;width:18px;height:18px;background:#e4e0e4"><div class="a" style="left:5px;top:11px;width:7px;height:2px;background:#7a8aa8"></div></div>
<div class="a" style="left:1482px;top:149px;width:18px;height:18px;background:#e4e0e4"><div class="a" style="left:5px;top:6px;width:7px;height:6px;border:1px solid #7a8aa8;border-top-width:2px"></div><div class="a" style="left:7px;top:4px;width:7px;height:6px;border-top:2px solid #7a8aa8;border-right:1px solid #7a8aa8"></div></div>
<div class="a" style="left:96px;top:168px;width:1405px;height:1px;background:#a8a4a8"></div>
<div class="a" style="left:96px;top:169px;width:1405px;height:1px;background:#ffffff"></div>
<div class="a" style="left:86px;top:188px;width:60px;height:18px;color:#000;font-size:12px;line-height:18px;text-align:center"><span class="c"><b class="tx">刷新</b><svg class=g width=12 height=1><use href=#g5d /></svg><svg class=g width=12 height=1><use href=#g9 /></svg></span><u>R</u></div>
<svg class="a" style="left:107px;top:174px;overflow:visible" width="18" height="17" viewBox="0 0 18 17"><circle cx="8.5" cy="8" r="6" fill="none" stroke="#e01010" stroke-width="2.2"/><path d="M12 0 L18 4 L12 7Z" fill="#e01010"/><rect x="8" y="4" width="2.5" height="6" fill="#000"/><rect x="8" y="11.5" width="2.5" height="2.5" fill="#000"/></svg>
<div class="a" style="left:127px;top:188px;width:60px;height:18px;color:#000;font-size:12px;line-height:18px;text-align:center"><span class="c"><b class="tx">增加</b><svg class=g width=12 height=1><use href=#g5e /></svg><svg class=g width=12 height=1><use href=#g5f /></svg></span><u>A</u></div>
<svg class="a" style="left:148px;top:173px;overflow:visible" width="18" height="16" viewBox="0 0 18 16"><path d="M1 4 L11 4" stroke="#1010e0" stroke-width="2"/><path d="M9 1 L13 4 L9 7Z" fill="#1010e0"/><path d="M4 8 L4 14 M1 11 L7 11" stroke="#e01010" stroke-width="2"/><path d="M16 1 L16 15" stroke="#000" stroke-width="2" stroke-dasharray="2 2"/><rect x="13" y="3" width="2" height="2" fill="#e01010"/></svg>
<div class="a" style="left:168px;top:188px;width:60px;height:18px;color:#000;font-size:12px;line-height:18px;text-align:center"><span class="c"><b class="tx">删除</b><svg class=g width=12 height=1><use href=#g60 /></svg><svg class=g width=12 height=1><use href=#g61 /></svg></span><u>D</u></div>
<svg class="a" style="left:189px;top:173px;overflow:visible" width="18" height="16" viewBox="0 0 18 16"><path d="M4 4 L13 4" stroke="#1010e0" stroke-width="2"/><path d="M6 1 L2 4 L6 7Z" fill="#1010e0"/><path d="M1 11 L7 11" stroke="#e01010" stroke-width="2"/><path d="M16 1 L16 15" stroke="#000" stroke-width="2" stroke-dasharray="2 2"/><rect x="13" y="3" width="2" height="2" fill="#e01010"/></svg>
<div class="a" style="left:209px;top:188px;width:60px;height:18px;color:#000;font-size:12px;line-height:18px;text-align:center"><span class="c"><b class="tx">修改</b><svg class=g width=12 height=1><use href=#g62 /></svg><svg class=g width=12 height=1><use href=#g3b /></svg></span><u>E</u></div>
<svg class="a" style="left:230px;top:172px;overflow:visible" width="18" height="17" viewBox="0 0 18 17"><path d="M6 1 L14 1 L17 4 L17 16 L6 16Z" fill="#fff" stroke="#333"/><path d="M8 5 L15 5 M8 8 L15 8 M8 11 L15 11" stroke="#777"/><path d="M1 9 L8 8 L10 13 L3 15Z" fill="#f0e050" stroke="#555" stroke-width="0.6"/><path d="M4 2 L13 12" stroke="#a07000" stroke-width="1.5"/><rect x="0" y="10" width="2" height="4" fill="#40c0e0"/></svg>
<div class="a" style="left:250px;top:188px;width:60px;height:18px;color:#000;font-size:12px;line-height:18px;text-align:center"><span class="c"><b class="tx">保存</b><svg class=g width=12 height=1><use href=#g63 /></svg><svg class=g width=12 height=1><use href=#g64 /></svg></span><u>S</u></div>
<svg class="a" style="left:273px;top:175px;overflow:visible" width="14" height="13" viewBox="0 0 14 13"><rect x="0" y="0" width="14" height="13" fill="#3a3200"/><rect x="3" y="1" width="8" height="5" fill="#f4f0e0"/><rect x="2" y="8" width="10" height="5" fill="#111"/><rect x="11" y="1" width="1" height="2" fill="#ddd"/></svg>
<div class="a" style="left:291px;top:188px;width:60px;height:18px;color:#a0a0a0;font-size:12px;line-height:18px;text-align:center"><span class="c"><b class="tx">取消</b><svg class=g width=12 height=1><use href=#g65 /></svg><svg class=g width=12 height=1><use href=#g66 /></svg></span><u>C</u></div>
<svg class="a" style="left:313px;top:172px;overflow:visible" width="16" height="16" viewBox="0 0 16 16"><path d="M2 2 L14 14 M14 2 L2 14" stroke="#a8a8a8" stroke-width="2"/></svg>
<div class="a" style="left:332px;top:188px;width:60px;height:18px;color:#000;font-size:12px;line-height:18px;text-align:center"><span class="c"><b class="tx">核对</b><svg class=g width=12 height=1><use href=#g67 /></svg><svg class=g width=12 height=1><use href=#g68 /></svg></span><u>K</u></div>
<svg class="a" style="left:353px;top:172px;overflow:visible" width="18" height="16" viewBox="0 0 18 16"><path d="M1 8 L6 14 L17 2" fill="none" stroke="#e01010" stroke-width="3"/></svg>
<svg class="a" style="left:387px;top:186px;overflow:visible" width="10" height="6" viewBox="0 0 10 6"><path d="M0 0 L10 0 L5 5Z" fill="#111"/></svg>
<div class="a" style="left:390px;top:188px;width:60px;height:18px;color:#000;font-size:12px;line-height:18px;text-align:center"><span class="c"><b class="tx">撤消</b><svg class=g width=12 height=1><use href=#g69 /></svg><svg class=g width=12 height=1><use href=#g66 /></svg></span><u>V</u></div>
<svg class="a" style="left:411px;top:172px;overflow:visible" width="18" height="16" viewBox="0 0 18 16"><path d="M2 2 L16 14 M16 2 L2 14" stroke="#e01010" stroke-width="2.6"/><rect x="7.5" y="1" width="3" height="9" fill="#111"/><rect x="7.5" y="12" width="3" height="3" fill="#111"/></svg>
<div class="a" style="left:431px;top:188px;width:60px;height:18px;color:#000;font-size:12px;line-height:18px;text-align:center"><span class="c"><b class="tx">停止</b><svg class=g width=12 height=1><use href=#g6a /></svg><svg class=g width=12 height=1><use href=#g6b /></svg></span><u>T</u></div>
<svg class="a" style="left:452px;top:172px;overflow:visible" width="18" height="17" viewBox="0 0 18 17"><circle cx="9" cy="8.5" r="7" fill="none" stroke="#e01010" stroke-width="2.4"/><path d="M4 13.5 L14 3.5" stroke="#e01010" stroke-width="2.4"/></svg>
<svg class="a" style="left:485px;top:186px;overflow:visible" width="10" height="6" viewBox="0 0 10 6"><path d="M0 0 L10 0 L5 5Z" fill="#111"/></svg>
<div class="a" style="left:489px;top:188px;width:60px;height:18px;color:#000;font-size:12px;line-height:18px;text-align:center"><span class="c"><b class="tx">费用</b><svg class=g width=12 height=1><use href=#g6c /></svg><svg class=g width=12 height=1><use href=#g6d /></svg></span><u>F</u></div>
<svg class="a" style="left:509px;top:172px;overflow:visible" width="20" height="17" viewBox="0 0 20 17"><circle cx="7.5" cy="7" r="5.5" fill="#fff" stroke="#333" stroke-width="1.6"/><path d="M7.5 4 L7.5 10 M4.5 7 L10.5 7" stroke="#e01010" stroke-width="2"/><path d="M11.5 11 L17 16" stroke="#333" stroke-width="2.6"/></svg>
<svg class="a" style="left:542px;top:186px;overflow:visible" width="10" height="6" viewBox="0 0 10 6"><path d="M0 0 L10 0 L5 5Z" fill="#111"/></svg>
<div class="a" style="left:547px;top:188px;width:60px;height:18px;color:#000;font-size:12px;line-height:18px;text-align:center"><span class="c"><b class="tx">提取</b><svg class=g width=12 height=1><use href=#g6e /></svg><svg class=g width=12 height=1><use href=#g65 /></svg></span><u>Q</u></div>
<svg class="a" style="left:567px;top:172px;overflow:visible" width="20" height="17" viewBox="0 0 20 17"><path d="M2 9 L10 14 L18 9 L18 12 L10 17 L2 12Z" fill="#d01818"/><path d="M2 9 L10 4 L18 9 L10 14Z" fill="#f0f0f0" stroke="#444"/><rect x="7" y="1" width="7" height="6" fill="#fff" stroke="#444"/></svg>
<div class="a" style="left:588px;top:188px;width:60px;height:18px;color:#000;font-size:12px;line-height:18px;text-align:center"><span class="c"><b class="tx">执行</b><svg class=g width=12 height=1><use href=#g6f /></svg><svg class=g width=12 height=1><use href=#g70 /></svg></span><u>Z</u></div>
<svg class="a" style="left:607px;top:172px;overflow:visible" width="22" height="16" viewBox="0 0 22 16"><path d="M2 14 L2 8 L5 5 L16 5 L20 9 L20 14Z" fill="#fff" stroke="#333" stroke-width="1.2"/><path d="M6 9 L10 9 M8 7 L8 11" stroke="#e01010" stroke-width="1.6"/><circle cx="6" cy="14" r="2" fill="#333"/><circle cx="16" cy="14" r="2" fill="#333"/><path d="M12 1 L13 3 M16 1 L15 3 M14 0 L14 3" stroke="#e01010"/></svg>
<svg class="a" style="left:642px;top:186px;overflow:visible" width="10" height="6" viewBox="0 0 10 6"><path d="M0 0 L10 0 L5 5Z" fill="#111"/></svg>
<div class="a" style="left:646px;top:188px;width:60px;height:18px;color:#000;font-size:12px;line-height:18px;text-align:center"><span class="c"><b class="tx">皮试</b><svg class=g width=12 height=1><use href=#g71 /></svg><svg class=g width=12 height=1><use href=#g72 /></svg></span><u>O</u></div>
<svg class="a" style="left:667px;top:172px;overflow:visible" width="18" height="17" viewBox="0 0 18 17"><path d="M3 3 L12 6" stroke="#222" stroke-width="2.4"/><path d="M8 4 L14 15" stroke="#8a6a2a" stroke-width="2"/><rect x="12" y="10" width="4" height="6" fill="#e01010"/><circle cx="6" cy="12" r="3.5" fill="none" stroke="#333" stroke-width="1.2"/><path d="M2 8 L6 8" stroke="#555"/></svg>
<div class="a" style="left:687px;top:188px;width:60px;height:18px;color:#000;font-size:12px;line-height:18px;text-align:center"><span class="c"><b class="tx">打印</b><svg class=g width=12 height=1><use href=#g33 /></svg><svg class=g width=12 height=1><use href=#g73 /></svg></span><u>P</u></div>
<svg class="a" style="left:707px;top:172px;overflow:visible" width="20" height="16" viewBox="0 0 20 16"><rect x="5" y="0.5" width="10" height="6" fill="#fff" stroke="#333"/><path d="M1 7 L19 7 L19 14 L1 14Z" fill="#2a2a2a"/><path d="M2 8 L18 8 L18 10 L2 10Z" fill="#d8c068"/><rect x="4" y="12" width="12" height="3" fill="#1a1a1a"/></svg>
<svg class="a" style="left:740px;top:186px;overflow:visible" width="10" height="6" viewBox="0 0 10 6"><path d="M0 0 L10 0 L5 5Z" fill="#111"/></svg>
<div class="a" style="left:753px;top:188px;width:80px;height:18px;font-size:12px;line-height:18px;text-align:center"><span class="c"><b class="tx">检查预约接口</b><svg class=g width=12 height=1><use href=#g74 /></svg><svg class=g width=12 height=1><use href=#g57 /></svg><svg class=g width=12 height=1><use href=#g75 /></svg><svg class=g width=12 height=1><use href=#g76 /></svg><svg class=g width=12 height=1><use href=#g77 /></svg><svg class=g width=12 height=1><use href=#g5a /></svg></span></div>
<svg class="a" style="left:784px;top:172px;overflow:visible" width="18" height="17" viewBox="0 0 18 17"><circle cx="10" cy="6" r="4.5" fill="#fff" stroke="#333" stroke-width="1.5"/><path d="M7 9 L2 14" stroke="#333" stroke-width="2"/><path d="M12 11 Q15 11 14 14 L14 15" stroke="#333" fill="none"/></svg>
<div class="a" style="left:821px;top:188px;width:60px;height:18px;color:#000;font-size:12px;line-height:18px;text-align:center"><span class="c"><b class="tx">模版</b><svg class=g width=12 height=1><use href=#g78 /></svg><svg class=g width=12 height=1><use href=#ga /></svg></span></div>
<svg class="a" style="left:842px;top:172px;overflow:visible" width="18" height="17" viewBox="0 0 18 17"><path d="M3 1 L9 3 L9 16 L3 14Z" fill="#8a7a28" stroke="#333" stroke-width="0.8"/><path d="M10 7 L17 7" stroke="#1010d0" stroke-width="2"/><path d="M12 4 L9 7 L12 10Z" fill="#1010d0"/></svg>
<div class="a" style="left:856px;top:188px;width:60px;height:18px;color:#000;font-size:12px;line-height:18px;text-align:center"><span class="c"><b class="tx">催款</b><svg class=g width=12 height=1><use href=#g79 /></svg><svg class=g width=12 height=1><use href=#g7a /></svg></span></div>
<svg class="a" style="left:877px;top:172px;overflow:visible" width="18" height="17" viewBox="0 0 18 17"><path d="M3 3 L12 6" stroke="#222" stroke-width="2.4"/><path d="M8 4 L14 15" stroke="#8a6a2a" stroke-width="2"/><rect x="12" y="10" width="4" height="6" fill="#e01010"/><circle cx="6" cy="12" r="3.5" fill="none" stroke="#333" stroke-width="1.2"/><path d="M2 8 L6 8" stroke="#555"/></svg>
<div class="a" style="left:96px;top:206px;width:1405px;height:1px;background:#a8a4a8"></div>
<div class="a" style="left:96px;top:207px;width:1405px;height:1px;background:#ffffff"></div>
<div class="a" style="left:96px;top:208px;width:167px;height:612px;background:#f5f1f5"></div>
<div class="a" style="left:97px;top:209px;width:150px;height:596px;background:#ffffff;border-top:1px solid #888;border-left:1px solid #888"></div>
<div class="a" style="left:98px;top:210px;width:148px;height:17px;background:#f5f1f5;border-bottom:2px solid #7a7a7a;font-size:12px;line-height:15px;padding-left:18px"><span class="c"><b class="tx">病人浏览</b><svg class=g width=12 height=1><use href=#g2e /></svg><svg class=g width=12 height=1><use href=#g7b /></svg><svg class=g width=12 height=1><use href=#g7c /></svg><svg class=g width=12 height=1><use href=#g7d /></svg></span>(6)</div>
<div class="a" style="left:247px;top:209px;width:15px;height:596px;background:#f5f1f5;border-top:1px solid #888"></div>
<svg class="a" style="left:250px;top:213px;overflow:visible" width="9" height="6" viewBox="0 0 9 6"><path d="M0.5 5.5 L4.5 1.5 L8.5 5.5" fill="none" stroke="#606060" stroke-width="1.6"/></svg>
<div class="a" style="left:248px;top:227px;width:13px;height:384px;background:#cdcdcd"></div>
<svg class="a" style="left:250px;top:792px;overflow:visible" width="9" height="6" viewBox="0 0 9 6"><path d="M0.5 0.5 L4.5 4.5 L8.5 0.5" fill="none" stroke="#606060" stroke-width="1.6"/></svg>
<div class="a" style="left:97px;top:805px;width:150px;height:16px;background:#f5f1f5"></div>
<svg class="a" style="left:103px;top:809px;overflow:visible" width="6" height="9" viewBox="0 0 6 9"><path d="M5.5 0.5 L1.5 4.5 L5.5 8.5" fill="none" stroke="#606060" stroke-width="1.6"/></svg>
<div class="a" style="left:114px;top:806px;width:104px;height:14px;background:#cdcdcd"></div>
<svg class="a" style="left:234px;top:809px;overflow:visible" width="6" height="9" viewBox="0 0 6 9"><path d="M0.5 0.5 L4.5 4.5 L0.5 8.5" fill="none" stroke="#606060" stroke-width="1.6"/></svg>
<div class="a" style="left:115px;top:228px;width:82px;height:17px;background:#f3eff3"></div>
<svg class="a" style="left:100px;top:229px" width="16" height="16" shape-rendering="crispEdges"><path fill="#000" d="M6 0h1v1h-1zM8 0h1v1h-1zM10 0h1v1h-1zM3 1h1v1h-1zM2 2h1v1h-1zM6 2h1v1h-1zM8 2h1v1h-1zM3 3h1v1h-1zM11 3h1v1h-1zM2 4h1v1h-1zM6 4h1v1h-1zM8 4h1v1h-1zM11 5h1v1h-1zM2 6h1v1h-1zM12 6h1v1h-1zM1 7h1v1h-1zM12 8h1v1h-1zM3 9h1v1h-1zM11 9h1v1h-1zM0 10h1v1h-1zM4 10h1v1h-1zM10 10h1v1h-1zM5 11h1v1h-1zM13 11h1v1h-1zM0 12h1v1h-1zM5 13h1v1h-1zM13 13h1v1h-1zM10 14h1v1h-1zM1 15h1v1h-1zM5 15h1v1h-1zM9 15h1v1h-1zM13 15h1v1h-1z"/><path fill="#0a7ee0" d="M7 0h1v1h-1zM9 0h1v1h-1zM4 1h1v1h-1zM6 1h1v1h-1zM8 1h1v1h-1zM10 1h1v1h-1zM12 1h1v1h-1zM3 2h1v1h-1zM5 2h1v1h-1zM7 2h1v1h-1zM9 2h1v1h-1zM11 2h1v1h-1zM13 2h1v1h-1zM2 3h1v1h-1zM4 3h1v1h-1zM6 3h1v1h-1zM8 3h1v1h-1zM10 3h1v1h-1zM12 3h1v1h-1zM14 3h1v1h-1zM3 4h1v1h-1zM5 4h1v1h-1zM7 4h1v1h-1zM9 4h1v1h-1zM11 4h1v1h-1zM13 4h1v1h-1zM2 5h1v1h-1zM4 5h1v1h-1zM6 5h1v1h-1zM8 5h1v1h-1zM10 5h1v1h-1zM12 5h1v1h-1zM14 5h1v1h-1zM3 6h1v1h-1zM5 6h1v1h-1zM7 6h1v1h-1zM9 6h1v1h-1zM11 6h1v1h-1zM13 6h1v1h-1zM2 7h1v1h-1zM4 7h1v1h-1zM6 7h1v1h-1zM8 7h1v1h-1zM10 7h1v1h-1zM12 7h1v1h-1zM14 7h1v1h-1zM1 8h1v1h-1zM3 8h1v1h-1zM5 8h1v1h-1zM7 8h1v1h-1zM9 8h1v1h-1zM11 8h1v1h-1zM13 8h1v1h-1zM0 9h1v1h-1zM2 9h1v1h-1zM4 9h1v1h-1zM6 9h1v1h-1zM8 9h1v1h-1zM10 9h1v1h-1zM12 9h1v1h-1zM14 9h1v1h-1zM1 10h1v1h-1zM3 10h1v1h-1zM5 10h1v1h-1zM7 10h1v1h-1zM9 10h1v1h-1zM11 10h1v1h-1zM13 10h1v1h-1zM0 11h1v1h-1zM2 11h1v1h-1zM4 11h1v1h-1zM6 11h1v1h-1zM8 11h1v1h-1zM10 11h1v1h-1zM12 11h1v1h-1zM14 11h1v1h-1zM1 12h1v1h-1zM3 12h1v1h-1zM5 12h1v1h-1zM7 12h1v1h-1zM9 12h1v1h-1zM11 12h1v1h-1zM13 12h1v1h-1zM0 13h1v1h-1zM2 13h1v1h-1zM4 13h1v1h-1zM6 13h1v1h-1zM8 13h1v1h-1zM10 13h1v1h-1zM12 13h1v1h-1zM14 13h1v1h-1zM1 14h1v1h-1zM3 14h1v1h-1zM5 14h1v1h-1zM7 14h1v1h-1zM9 14h1v1h-1zM11 14h1v1h-1zM13 14h1v1h-1zM0 15h1v1h-1zM2 15h1v1h-1zM4 15h1v1h-1zM6 15h1v1h-1zM8 15h1v1h-1zM10 15h1v1h-1zM12 15h1v1h-1zM14 15h1v1h-1z"/><path fill="#ff3300" d="M5 1h1v1h-1zM7 1h1v1h-1zM9 1h1v1h-1zM11 1h1v1h-1zM4 2h1v1h-1zM10 2h1v1h-1zM12 2h1v1h-1zM13 3h1v1h-1zM14 4h1v1h-1zM3 5h1v1h-1zM5 5h1v1h-1zM7 5h1v1h-1zM9 5h1v1h-1zM4 6h1v1h-1zM6 6h1v1h-1zM8 6h1v1h-1zM10 6h1v1h-1zM14 6h1v1h-1zM3 7h1v1h-1zM5 7h1v1h-1zM7 7h1v1h-1zM9 7h1v1h-1zM11 7h1v1h-1zM13 7h1v1h-1zM2 8h1v1h-1zM4 8h1v1h-1zM6 8h1v1h-1zM8 8h1v1h-1zM14 8h1v1h-1zM1 9h1v1h-1zM5 9h1v1h-1zM2 10h1v1h-1zM14 10h1v1h-1zM1 11h1v1h-1zM3 11h1v1h-1zM2 12h1v1h-1zM4 12h1v1h-1zM14 12h1v1h-1zM1 13h1v1h-1zM3 13h1v1h-1zM0 14h1v1h-1zM2 14h1v1h-1zM4 14h1v1h-1zM14 14h1v1h-1zM3 15h1v1h-1z"/><path fill="#c890ff" d="M5 3h1v1h-1zM7 3h1v1h-1zM9 3h1v1h-1zM4 4h1v1h-1zM10 4h1v1h-1zM12 4h1v1h-1zM13 5h1v1h-1z"/><path fill="#fcd29c" d="M10 8h1v1h-1zM7 9h1v1h-1zM9 9h1v1h-1zM13 9h1v1h-1zM6 10h1v1h-1zM8 10h1v1h-1zM12 10h1v1h-1zM7 11h1v1h-1zM9 11h1v1h-1zM11 11h1v1h-1zM6 12h1v1h-1zM8 12h1v1h-1zM10 12h1v1h-1zM12 12h1v1h-1zM7 13h1v1h-1zM9 13h1v1h-1zM11 13h1v1h-1zM6 14h1v1h-1zM8 14h1v1h-1zM12 14h1v1h-1zM7 15h1v1h-1zM11 15h1v1h-1z"/></svg>
<div class="a" style="left:117px;top:227px;width:130px;height:17px;color:#000;line-height:17px"><span class="m" style="font-size:12px;letter-spacing:-1.2px">1-02&nbsp;&nbsp;</span><span class="c"><b class="tx">刘广庄</b><svg class=g width=12 height=1><use href=#g7e /></svg><svg class=g width=12 height=1><use href=#g7f /></svg><svg class=g width=12 height=1><use href=#g80 /></svg></span></div>
<div class="a" style="left:115px;top:245px;width:110px;height:17px;background:#f3eff3"></div>
<svg class="a" style="left:100px;top:246px" width="16" height="16" shape-rendering="crispEdges"><path fill="#0a7ee0" d="M5 0h1v1h-1zM7 0h1v1h-1zM9 0h1v1h-1zM4 1h1v1h-1zM6 1h1v1h-1zM8 1h1v1h-1zM10 1h1v1h-1zM12 1h1v1h-1zM1 2h1v1h-1zM3 2h1v1h-1zM5 2h1v1h-1zM7 2h1v1h-1zM9 2h1v1h-1zM11 2h1v1h-1zM13 2h1v1h-1zM2 3h1v1h-1zM4 3h1v1h-1zM6 3h1v1h-1zM8 3h1v1h-1zM10 3h1v1h-1zM12 3h1v1h-1zM1 4h1v1h-1zM3 4h1v1h-1zM5 4h1v1h-1zM7 4h1v1h-1zM9 4h1v1h-1zM11 4h1v1h-1zM13 4h1v1h-1zM2 5h1v1h-1zM4 5h1v1h-1zM6 5h1v1h-1zM8 5h1v1h-1zM10 5h1v1h-1zM12 5h1v1h-1zM14 5h1v1h-1zM1 6h1v1h-1zM3 6h1v1h-1zM5 6h1v1h-1zM7 6h1v1h-1zM9 6h1v1h-1zM11 6h1v1h-1zM13 6h1v1h-1zM2 7h1v1h-1zM4 7h1v1h-1zM6 7h1v1h-1zM8 7h1v1h-1zM10 7h1v1h-1zM12 7h1v1h-1zM14 7h1v1h-1zM1 8h1v1h-1zM3 8h1v1h-1zM5 8h1v1h-1zM7 8h1v1h-1zM9 8h1v1h-1zM11 8h1v1h-1zM13 8h1v1h-1zM2 9h1v1h-1zM4 9h1v1h-1zM6 9h1v1h-1zM8 9h1v1h-1zM10 9h1v1h-1zM12 9h1v1h-1zM14 9h1v1h-1zM1 10h1v1h-1zM3 10h1v1h-1zM5 10h1v1h-1zM7 10h1v1h-1zM9 10h1v1h-1zM11 10h1v1h-1zM13 10h1v1h-1zM2 11h1v1h-1zM4 11h1v1h-1zM6 11h1v1h-1zM8 11h1v1h-1zM10 11h1v1h-1zM12 11h1v1h-1zM3 12h1v1h-1zM5 12h1v1h-1zM7 12h1v1h-1zM9 12h1v1h-1zM11 12h1v1h-1zM13 12h1v1h-1zM2 13h1v1h-1zM4 13h1v1h-1zM6 13h1v1h-1zM8 13h1v1h-1zM10 13h1v1h-1zM12 13h1v1h-1zM3 14h1v1h-1zM5 14h1v1h-1zM7 14h1v1h-1zM9 14h1v1h-1zM11 14h1v1h-1zM4 15h1v1h-1zM6 15h1v1h-1zM8 15h1v1h-1zM10 15h1v1h-1zM12 15h1v1h-1z"/><path fill="#000" d="M6 0h1v1h-1zM8 0h1v1h-1zM10 0h1v1h-1zM3 1h1v1h-1zM5 1h1v1h-1zM7 1h1v1h-1zM9 1h1v1h-1zM11 1h1v1h-1zM2 2h1v1h-1zM4 2h1v1h-1zM6 2h1v1h-1zM8 2h1v1h-1zM10 2h1v1h-1zM12 2h1v1h-1zM1 3h1v1h-1zM3 3h1v1h-1zM5 3h1v1h-1zM7 3h1v1h-1zM9 3h1v1h-1zM11 3h1v1h-1zM13 3h1v1h-1zM2 4h1v1h-1zM6 4h1v1h-1zM8 4h1v1h-1zM14 4h1v1h-1zM1 5h1v1h-1zM13 5h1v1h-1zM2 6h1v1h-1zM14 6h1v1h-1zM1 7h1v1h-1zM3 7h1v1h-1zM7 7h1v1h-1zM13 7h1v1h-1zM4 8h1v1h-1zM6 8h1v1h-1zM10 8h1v1h-1zM12 8h1v1h-1zM14 8h1v1h-1zM13 9h1v1h-1zM8 10h1v1h-1zM14 10h1v1h-1zM1 11h1v1h-1zM2 12h1v1h-1zM8 12h1v1h-1zM13 13h1v1h-1zM3 15h1v1h-1zM7 15h1v1h-1zM11 15h1v1h-1z"/><path fill="#fcd29c" d="M4 4h1v1h-1zM10 4h1v1h-1zM12 4h1v1h-1zM3 5h1v1h-1zM5 5h1v1h-1zM7 5h1v1h-1zM9 5h1v1h-1zM11 5h1v1h-1zM4 6h1v1h-1zM6 6h1v1h-1zM8 6h1v1h-1zM10 6h1v1h-1zM12 6h1v1h-1zM5 7h1v1h-1zM9 7h1v1h-1zM11 7h1v1h-1zM2 8h1v1h-1zM8 8h1v1h-1zM1 9h1v1h-1zM3 9h1v1h-1zM5 9h1v1h-1zM7 9h1v1h-1zM9 9h1v1h-1zM11 9h1v1h-1zM2 10h1v1h-1zM4 10h1v1h-1zM6 10h1v1h-1zM10 10h1v1h-1zM12 10h1v1h-1zM3 11h1v1h-1zM5 11h1v1h-1zM7 11h1v1h-1zM9 11h1v1h-1zM11 11h1v1h-1zM13 11h1v1h-1zM4 12h1v1h-1zM6 12h1v1h-1zM10 12h1v1h-1zM12 12h1v1h-1zM3 13h1v1h-1zM5 13h1v1h-1zM7 13h1v1h-1zM9 13h1v1h-1zM11 13h1v1h-1zM4 14h1v1h-1zM6 14h1v1h-1zM8 14h1v1h-1zM10 14h1v1h-1zM12 14h1v1h-1zM5 15h1v1h-1zM9 15h1v1h-1z"/></svg>
<div class="a" style="left:117px;top:244px;width:130px;height:17px;color:#000;line-height:17px"><span class="m" style="font-size:12px;letter-spacing:-1.2px">1-03&nbsp;&nbsp;</span><span class="c"><b class="tx">吴君翼</b><svg class=g width=12 height=1><use href=#g81 /></svg><svg class=g width=12 height=1><use href=#g82 /></svg><svg class=g width=12 height=1><use href=#g83 /></svg></span><span class="m" style="font-size:12px;letter-spacing:-1.2px">[CP]</span></div>
<div class="a" style="left:115px;top:262px;width:110px;height:17px;background:#f3eff3"></div>
<svg class="a" style="left:100px;top:263px" width="16" height="16" shape-rendering="crispEdges"><path fill="#0a7ee0" d="M5 0h1v1h-1zM7 0h1v1h-1zM9 0h1v1h-1zM4 1h1v1h-1zM6 1h1v1h-1zM8 1h1v1h-1zM10 1h1v1h-1zM12 1h1v1h-1zM1 2h1v1h-1zM3 2h1v1h-1zM5 2h1v1h-1zM7 2h1v1h-1zM9 2h1v1h-1zM11 2h1v1h-1zM13 2h1v1h-1zM2 3h1v1h-1zM4 3h1v1h-1zM6 3h1v1h-1zM8 3h1v1h-1zM10 3h1v1h-1zM12 3h1v1h-1zM1 4h1v1h-1zM3 4h1v1h-1zM5 4h1v1h-1zM7 4h1v1h-1zM9 4h1v1h-1zM11 4h1v1h-1zM13 4h1v1h-1zM2 5h1v1h-1zM4 5h1v1h-1zM6 5h1v1h-1zM8 5h1v1h-1zM10 5h1v1h-1zM12 5h1v1h-1zM14 5h1v1h-1zM1 6h1v1h-1zM3 6h1v1h-1zM5 6h1v1h-1zM7 6h1v1h-1zM9 6h1v1h-1zM11 6h1v1h-1zM13 6h1v1h-1zM2 7h1v1h-1zM4 7h1v1h-1zM6 7h1v1h-1zM8 7h1v1h-1zM10 7h1v1h-1zM12 7h1v1h-1zM14 7h1v1h-1zM1 8h1v1h-1zM3 8h1v1h-1zM5 8h1v1h-1zM7 8h1v1h-1zM9 8h1v1h-1zM11 8h1v1h-1zM13 8h1v1h-1zM2 9h1v1h-1zM4 9h1v1h-1zM6 9h1v1h-1zM8 9h1v1h-1zM10 9h1v1h-1zM12 9h1v1h-1zM14 9h1v1h-1zM1 10h1v1h-1zM3 10h1v1h-1zM5 10h1v1h-1zM7 10h1v1h-1zM9 10h1v1h-1zM11 10h1v1h-1zM13 10h1v1h-1zM2 11h1v1h-1zM4 11h1v1h-1zM6 11h1v1h-1zM8 11h1v1h-1zM10 11h1v1h-1zM12 11h1v1h-1zM3 12h1v1h-1zM5 12h1v1h-1zM7 12h1v1h-1zM9 12h1v1h-1zM11 12h1v1h-1zM13 12h1v1h-1zM2 13h1v1h-1zM4 13h1v1h-1zM6 13h1v1h-1zM8 13h1v1h-1zM10 13h1v1h-1zM12 13h1v1h-1zM3 14h1v1h-1zM5 14h1v1h-1zM7 14h1v1h-1zM9 14h1v1h-1zM11 14h1v1h-1zM4 15h1v1h-1zM6 15h1v1h-1zM8 15h1v1h-1zM10 15h1v1h-1zM12 15h1v1h-1z"/><path fill="#000" d="M6 0h1v1h-1zM8 0h1v1h-1zM10 0h1v1h-1zM3 1h1v1h-1zM5 1h1v1h-1zM7 1h1v1h-1zM9 1h1v1h-1zM11 1h1v1h-1zM2 2h1v1h-1zM4 2h1v1h-1zM6 2h1v1h-1zM8 2h1v1h-1zM10 2h1v1h-1zM12 2h1v1h-1zM1 3h1v1h-1zM3 3h1v1h-1zM5 3h1v1h-1zM7 3h1v1h-1zM9 3h1v1h-1zM11 3h1v1h-1zM13 3h1v1h-1zM2 4h1v1h-1zM6 4h1v1h-1zM8 4h1v1h-1zM14 4h1v1h-1zM1 5h1v1h-1zM13 5h1v1h-1zM2 6h1v1h-1zM14 6h1v1h-1zM1 7h1v1h-1zM3 7h1v1h-1zM7 7h1v1h-1zM13 7h1v1h-1zM4 8h1v1h-1zM6 8h1v1h-1zM10 8h1v1h-1zM12 8h1v1h-1zM14 8h1v1h-1zM13 9h1v1h-1zM8 10h1v1h-1zM14 10h1v1h-1zM1 11h1v1h-1zM2 12h1v1h-1zM8 12h1v1h-1zM13 13h1v1h-1zM3 15h1v1h-1zM7 15h1v1h-1zM11 15h1v1h-1z"/><path fill="#fcd29c" d="M4 4h1v1h-1zM10 4h1v1h-1zM12 4h1v1h-1zM3 5h1v1h-1zM5 5h1v1h-1zM7 5h1v1h-1zM9 5h1v1h-1zM11 5h1v1h-1zM4 6h1v1h-1zM6 6h1v1h-1zM8 6h1v1h-1zM10 6h1v1h-1zM12 6h1v1h-1zM5 7h1v1h-1zM9 7h1v1h-1zM11 7h1v1h-1zM2 8h1v1h-1zM8 8h1v1h-1zM1 9h1v1h-1zM3 9h1v1h-1zM5 9h1v1h-1zM7 9h1v1h-1zM9 9h1v1h-1zM11 9h1v1h-1zM2 10h1v1h-1zM4 10h1v1h-1zM6 10h1v1h-1zM10 10h1v1h-1zM12 10h1v1h-1zM3 11h1v1h-1zM5 11h1v1h-1zM7 11h1v1h-1zM9 11h1v1h-1zM11 11h1v1h-1zM13 11h1v1h-1zM4 12h1v1h-1zM6 12h1v1h-1zM10 12h1v1h-1zM12 12h1v1h-1zM3 13h1v1h-1zM5 13h1v1h-1zM7 13h1v1h-1zM9 13h1v1h-1zM11 13h1v1h-1zM4 14h1v1h-1zM6 14h1v1h-1zM8 14h1v1h-1zM10 14h1v1h-1zM12 14h1v1h-1zM5 15h1v1h-1zM9 15h1v1h-1z"/></svg>
<div class="a" style="left:117px;top:261px;width:130px;height:17px;color:#000;line-height:17px"><span class="m" style="font-size:12px;letter-spacing:-1.2px">1-05&nbsp;&nbsp;</span><span class="c"><b class="tx">刘国印</b><svg class=g width=12 height=1><use href=#g7e /></svg><svg class=g width=12 height=1><use href=#g84 /></svg><svg class=g width=12 height=1><use href=#g73 /></svg></span><span class="m" style="font-size:12px;letter-spacing:-1.2px">[CP]</span></div>
<div class="a" style="left:115px;top:279px;width:110px;height:17px;background:#f3eff3"></div>
<svg class="a" style="left:100px;top:280px" width="16" height="16" shape-rendering="crispEdges"><path fill="#0a7ee0" d="M5 0h1v1h-1zM7 0h1v1h-1zM9 0h1v1h-1zM4 1h1v1h-1zM6 1h1v1h-1zM8 1h1v1h-1zM10 1h1v1h-1zM12 1h1v1h-1zM1 2h1v1h-1zM3 2h1v1h-1zM5 2h1v1h-1zM7 2h1v1h-1zM9 2h1v1h-1zM11 2h1v1h-1zM13 2h1v1h-1zM2 3h1v1h-1zM4 3h1v1h-1zM6 3h1v1h-1zM8 3h1v1h-1zM10 3h1v1h-1zM12 3h1v1h-1zM1 4h1v1h-1zM3 4h1v1h-1zM5 4h1v1h-1zM7 4h1v1h-1zM9 4h1v1h-1zM11 4h1v1h-1zM13 4h1v1h-1zM2 5h1v1h-1zM4 5h1v1h-1zM6 5h1v1h-1zM8 5h1v1h-1zM10 5h1v1h-1zM12 5h1v1h-1zM14 5h1v1h-1zM1 6h1v1h-1zM3 6h1v1h-1zM5 6h1v1h-1zM7 6h1v1h-1zM9 6h1v1h-1zM11 6h1v1h-1zM13 6h1v1h-1zM2 7h1v1h-1zM4 7h1v1h-1zM6 7h1v1h-1zM8 7h1v1h-1zM10 7h1v1h-1zM12 7h1v1h-1zM14 7h1v1h-1zM1 8h1v1h-1zM3 8h1v1h-1zM5 8h1v1h-1zM7 8h1v1h-1zM9 8h1v1h-1zM11 8h1v1h-1zM13 8h1v1h-1zM2 9h1v1h-1zM4 9h1v1h-1zM6 9h1v1h-1zM8 9h1v1h-1zM10 9h1v1h-1zM12 9h1v1h-1zM14 9h1v1h-1zM1 10h1v1h-1zM3 10h1v1h-1zM5 10h1v1h-1zM7 10h1v1h-1zM9 10h1v1h-1zM11 10h1v1h-1zM13 10h1v1h-1zM2 11h1v1h-1zM4 11h1v1h-1zM6 11h1v1h-1zM8 11h1v1h-1zM10 11h1v1h-1zM12 11h1v1h-1zM3 12h1v1h-1zM5 12h1v1h-1zM7 12h1v1h-1zM9 12h1v1h-1zM11 12h1v1h-1zM13 12h1v1h-1zM2 13h1v1h-1zM4 13h1v1h-1zM6 13h1v1h-1zM8 13h1v1h-1zM10 13h1v1h-1zM12 13h1v1h-1zM3 14h1v1h-1zM5 14h1v1h-1zM7 14h1v1h-1zM9 14h1v1h-1zM11 14h1v1h-1zM4 15h1v1h-1zM6 15h1v1h-1zM8 15h1v1h-1zM10 15h1v1h-1zM12 15h1v1h-1z"/><path fill="#000" d="M6 0h1v1h-1zM8 0h1v1h-1zM10 0h1v1h-1zM3 1h1v1h-1zM5 1h1v1h-1zM7 1h1v1h-1zM9 1h1v1h-1zM11 1h1v1h-1zM2 2h1v1h-1zM4 2h1v1h-1zM6 2h1v1h-1zM8 2h1v1h-1zM10 2h1v1h-1zM12 2h1v1h-1zM1 3h1v1h-1zM3 3h1v1h-1zM5 3h1v1h-1zM7 3h1v1h-1zM9 3h1v1h-1zM11 3h1v1h-1zM13 3h1v1h-1zM2 4h1v1h-1zM6 4h1v1h-1zM8 4h1v1h-1zM14 4h1v1h-1zM1 5h1v1h-1zM13 5h1v1h-1zM2 6h1v1h-1zM14 6h1v1h-1zM1 7h1v1h-1zM3 7h1v1h-1zM7 7h1v1h-1zM13 7h1v1h-1zM4 8h1v1h-1zM6 8h1v1h-1zM10 8h1v1h-1zM12 8h1v1h-1zM14 8h1v1h-1zM13 9h1v1h-1zM8 10h1v1h-1zM14 10h1v1h-1zM1 11h1v1h-1zM2 12h1v1h-1zM8 12h1v1h-1zM13 13h1v1h-1zM3 15h1v1h-1zM7 15h1v1h-1zM11 15h1v1h-1z"/><path fill="#fcd29c" d="M4 4h1v1h-1zM10 4h1v1h-1zM12 4h1v1h-1zM3 5h1v1h-1zM5 5h1v1h-1zM7 5h1v1h-1zM9 5h1v1h-1zM11 5h1v1h-1zM4 6h1v1h-1zM6 6h1v1h-1zM8 6h1v1h-1zM10 6h1v1h-1zM12 6h1v1h-1zM5 7h1v1h-1zM9 7h1v1h-1zM11 7h1v1h-1zM2 8h1v1h-1zM8 8h1v1h-1zM1 9h1v1h-1zM3 9h1v1h-1zM5 9h1v1h-1zM7 9h1v1h-1zM9 9h1v1h-1zM11 9h1v1h-1zM2 10h1v1h-1zM4 10h1v1h-1zM6 10h1v1h-1zM10 10h1v1h-1zM12 10h1v1h-1zM3 11h1v1h-1zM5 11h1v1h-1zM7 11h1v1h-1zM9 11h1v1h-1zM11 11h1v1h-1zM13 11h1v1h-1zM4 12h1v1h-1zM6 12h1v1h-1zM10 12h1v1h-1zM12 12h1v1h-1zM3 13h1v1h-1zM5 13h1v1h-1zM7 13h1v1h-1zM9 13h1v1h-1zM11 13h1v1h-1zM4 14h1v1h-1zM6 14h1v1h-1zM8 14h1v1h-1zM10 14h1v1h-1zM12 14h1v1h-1zM5 15h1v1h-1zM9 15h1v1h-1z"/></svg>
<div class="a" style="left:117px;top:278px;width:130px;height:17px;color:#000;line-height:17px"><span class="m" style="font-size:12px;letter-spacing:-1.2px">1-06&nbsp;&nbsp;</span><span class="c"><b class="tx">张国锋</b><svg class=g width=12 height=1><use href=#g85 /></svg><svg class=g width=12 height=1><use href=#g84 /></svg><svg class=g width=12 height=1><use href=#g86 /></svg></span><span class="m" style="font-size:12px;letter-spacing:-1.2px">[CP]</span></div>
<svg class="a" style="left:100px;top:297px" width="16" height="16" shape-rendering="crispEdges"><path fill="#000" d="M6 0h5v1h-5zM3 1h1v1h-1zM12 1h1v1h-1zM2 2h1v1h-1zM5 2h5v1h-5zM13 2h1v1h-1zM3 3h1v1h-1zM11 3h2v1h-2zM14 3h1v1h-1zM2 4h1v1h-1zM5 4h4v1h-4zM13 4h1v1h-1zM2 5h1v1h-1zM11 5h1v1h-1zM14 5h1v1h-1zM2 6h1v1h-1zM12 6h1v1h-1zM1 7h1v1h-1zM10 7h1v1h-1zM1 8h1v1h-1zM9 8h1v1h-1zM12 8h1v1h-1zM0 9h1v1h-1zM3 9h1v1h-1zM6 9h1v1h-1zM10 9h2v1h-2zM0 10h1v1h-1zM4 10h2v1h-2zM10 10h2v1h-2zM0 11h1v1h-1zM5 11h2v1h-2zM13 11h1v1h-1zM0 12h1v1h-1zM5 12h1v1h-1zM13 12h1v1h-1zM5 13h1v1h-1zM8 13h1v1h-1zM13 13h1v1h-1zM9 14h2v1h-2zM13 14h1v1h-1zM0 15h2v1h-2zM5 15h1v1h-1zM8 15h3v1h-3zM13 15h1v1h-1z"/><path fill="#ff3300" d="M4 1h8v1h-8zM3 2h2v1h-2zM10 2h3v1h-3zM2 3h1v1h-1zM13 3h1v1h-1zM3 4h1v1h-1zM14 4h1v1h-1zM3 5h8v1h-8zM3 6h9v1h-9zM14 6h1v1h-1zM2 7h8v1h-8zM11 7h4v1h-4zM2 8h7v1h-7zM13 8h2v1h-2zM1 9h2v1h-2zM4 9h2v1h-2zM14 9h1v1h-1zM1 10h3v1h-3zM13 10h2v1h-2zM1 11h4v1h-4zM14 11h1v1h-1zM1 12h4v1h-4zM14 12h1v1h-1zM0 13h5v1h-5zM14 13h1v1h-1zM0 14h5v1h-5zM14 14h1v1h-1zM2 15h3v1h-3zM14 15h1v1h-1z"/><path fill="#c890ff" d="M4 3h7v1h-7zM4 4h1v1h-1zM9 4h4v1h-4zM12 5h2v1h-2zM13 6h1v1h-1z"/><path fill="#fcd29c" d="M10 8h2v1h-2zM7 9h3v1h-3zM12 9h2v1h-2zM6 10h4v1h-4zM12 10h1v1h-1zM7 11h6v1h-6zM6 12h7v1h-7zM6 13h2v1h-2zM9 13h4v1h-4zM5 14h4v1h-4zM11 14h2v1h-2zM6 15h2v1h-2zM11 15h2v1h-2z"/></svg>
<div class="a" style="left:117px;top:295px;width:130px;height:17px;color:#000;line-height:17px"><span class="m" style="font-size:12px;letter-spacing:-1.2px">1-07&nbsp;&nbsp;</span><span class="c"><b class="tx">陈玉桃</b><svg class=g width=12 height=1><use href=#g87 /></svg><svg class=g width=12 height=1><use href=#g88 /></svg><svg class=g width=12 height=1><use href=#g89 /></svg></span></div>
<svg class="a" style="left:100px;top:314px" width="16" height="16" shape-rendering="crispEdges"><path fill="#000" d="M5 0h6v1h-6zM3 1h10v1h-10zM1 2h13v1h-13zM1 3h13v1h-13zM1 4h2v1h-2zM6 4h3v1h-3zM13 4h2v1h-2zM1 5h2v1h-2zM13 5h2v1h-2zM1 6h2v1h-2zM13 6h2v1h-2zM1 7h3v1h-3zM6 7h2v1h-2zM13 7h2v1h-2zM4 8h4v1h-4zM10 8h3v1h-3zM14 8h1v1h-1zM2 9h1v1h-1zM8 9h1v1h-1zM13 9h2v1h-2zM8 10h1v1h-1zM14 10h1v1h-1zM1 11h1v1h-1zM2 12h1v1h-1zM7 12h2v1h-2zM13 12h1v1h-1zM2 13h1v1h-1zM13 13h1v1h-1zM3 15h2v1h-2zM7 15h2v1h-2zM11 15h2v1h-2z"/><path fill="#fcd29c" d="M3 4h3v1h-3zM9 4h4v1h-4zM3 5h10v1h-10zM3 6h10v1h-10zM4 7h2v1h-2zM8 7h5v1h-5zM1 8h3v1h-3zM8 8h2v1h-2zM13 8h1v1h-1zM1 9h1v1h-1zM3 9h5v1h-5zM9 9h4v1h-4zM1 10h7v1h-7zM9 10h5v1h-5zM2 11h12v1h-12zM3 12h4v1h-4zM9 12h4v1h-4zM3 13h10v1h-10zM3 14h10v1h-10zM5 15h2v1h-2zM9 15h2v1h-2z"/></svg>
<div class="a" style="left:117px;top:312px;width:130px;height:17px;color:#000;line-height:17px"><span class="m" style="font-size:12px;letter-spacing:-1.2px">1-08&nbsp;&nbsp;</span><span class="c"><b class="tx">王彝元</b><svg class=g width=12 height=1><use href=#g8a /></svg><svg class=g width=12 height=1><use href=#g8b /></svg><svg class=g width=12 height=1><use href=#g8c /></svg></span><span class="m" style="font-size:12px;letter-spacing:-1.2px">[CP]</span></div>
<svg class="a" style="left:100px;top:331px" width="16" height="16" shape-rendering="crispEdges"><path fill="#000" d="M6 0h5v1h-5zM3 1h1v1h-1zM12 1h1v1h-1zM2 2h1v1h-1zM5 2h5v1h-5zM13 2h1v1h-1zM3 3h1v1h-1zM11 3h2v1h-2zM14 3h1v1h-1zM2 4h1v1h-1zM5 4h4v1h-4zM13 4h1v1h-1zM2 5h1v1h-1zM11 5h1v1h-1zM14 5h1v1h-1zM2 6h1v1h-1zM12 6h1v1h-1zM1 7h1v1h-1zM10 7h1v1h-1zM1 8h1v1h-1zM9 8h1v1h-1zM12 8h1v1h-1zM0 9h1v1h-1zM3 9h1v1h-1zM6 9h1v1h-1zM10 9h2v1h-2zM0 10h1v1h-1zM4 10h2v1h-2zM10 10h2v1h-2zM0 11h1v1h-1zM5 11h2v1h-2zM13 11h1v1h-1zM0 12h1v1h-1zM5 12h1v1h-1zM13 12h1v1h-1zM5 13h1v1h-1zM8 13h1v1h-1zM13 13h1v1h-1zM9 14h2v1h-2zM13 14h1v1h-1zM0 15h2v1h-2zM5 15h1v1h-1zM8 15h3v1h-3zM13 15h1v1h-1z"/><path fill="#ff3300" d="M4 1h8v1h-8zM3 2h2v1h-2zM10 2h3v1h-3zM2 3h1v1h-1zM13 3h1v1h-1zM3 4h1v1h-1zM14 4h1v1h-1zM3 5h8v1h-8zM3 6h9v1h-9zM14 6h1v1h-1zM2 7h8v1h-8zM11 7h4v1h-4zM2 8h7v1h-7zM13 8h2v1h-2zM1 9h2v1h-2zM4 9h2v1h-2zM14 9h1v1h-1zM1 10h3v1h-3zM13 10h2v1h-2zM1 11h4v1h-4zM14 11h1v1h-1zM1 12h4v1h-4zM14 12h1v1h-1zM0 13h5v1h-5zM14 13h1v1h-1zM0 14h5v1h-5zM14 14h1v1h-1zM2 15h3v1h-3zM14 15h1v1h-1z"/><path fill="#c890ff" d="M4 3h7v1h-7zM4 4h1v1h-1zM9 4h4v1h-4zM12 5h2v1h-2zM13 6h1v1h-1z"/><path fill="#fcd29c" d="M10 8h2v1h-2zM7 9h3v1h-3zM12 9h2v1h-2zM6 10h4v1h-4zM12 10h1v1h-1zM7 11h6v1h-6zM6 12h7v1h-7zM6 13h2v1h-2zM9 13h4v1h-4zM5 14h4v1h-4zM11 14h2v1h-2zM6 15h2v1h-2zM11 15h2v1h-2z"/></svg>
<div class="a" style="left:117px;top:329px;width:130px;height:17px;color:#000;line-height:17px"><span class="m" style="font-size:12px;letter-spacing:-1.2px">1-09&nbsp;&nbsp;</span><span class="c"><b class="tx">李隆凤</b><svg class=g width=12 height=1><use href=#g8d /></svg><svg class=g width=12 height=1><use href=#g8e /></svg><svg class=g width=12 height=1><use href=#g8f /></svg></span></div>
<svg class="a" style="left:100px;top:348px" width="16" height="16" shape-rendering="crispEdges"><path fill="#000" d="M5 0h6v1h-6zM3 1h10v1h-10zM1 2h13v1h-13zM1 3h13v1h-13zM1 4h2v1h-2zM6 4h3v1h-3zM13 4h2v1h-2zM1 5h2v1h-2zM13 5h2v1h-2zM1 6h2v1h-2zM13 6h2v1h-2zM1 7h3v1h-3zM6 7h2v1h-2zM13 7h2v1h-2zM4 8h4v1h-4zM10 8h3v1h-3zM14 8h1v1h-1zM2 9h1v1h-1zM8 9h1v1h-1zM13 9h2v1h-2zM8 10h1v1h-1zM14 10h1v1h-1zM1 11h1v1h-1zM2 12h1v1h-1zM7 12h2v1h-2zM13 12h1v1h-1zM2 13h1v1h-1zM13 13h1v1h-1zM3 15h2v1h-2zM7 15h2v1h-2zM11 15h2v1h-2z"/><path fill="#fcd29c" d="M3 4h3v1h-3zM9 4h4v1h-4zM3 5h10v1h-10zM3 6h10v1h-10zM4 7h2v1h-2zM8 7h5v1h-5zM1 8h3v1h-3zM8 8h2v1h-2zM13 8h1v1h-1zM1 9h1v1h-1zM3 9h5v1h-5zM9 9h4v1h-4zM1 10h7v1h-7zM9 10h5v1h-5zM2 11h12v1h-12zM3 12h4v1h-4zM9 12h4v1h-4zM3 13h10v1h-10zM3 14h10v1h-10zM5 15h2v1h-2zM9 15h2v1h-2z"/></svg>
<div class="a" style="left:117px;top:346px;width:130px;height:17px;color:#000;line-height:17px"><span class="m" style="font-size:12px;letter-spacing:-1.2px">1-10&nbsp;&nbsp;</span><span class="c"><b class="tx">吴建国</b><svg class=g width=12 height=1><use href=#g81 /></svg><svg class=g width=12 height=1><use href=#g19 /></svg><svg class=g width=12 height=1><use href=#g84 /></svg></span></div>
<svg class="a" style="left:100px;top:365px" width="16" height="16" shape-rendering="crispEdges"><path fill="#000" d="M5 0h6v1h-6zM3 1h10v1h-10zM1 2h13v1h-13zM1 3h13v1h-13zM1 4h2v1h-2zM6 4h3v1h-3zM13 4h2v1h-2zM1 5h2v1h-2zM13 5h2v1h-2zM1 6h2v1h-2zM13 6h2v1h-2zM1 7h3v1h-3zM6 7h2v1h-2zM13 7h2v1h-2zM4 8h4v1h-4zM10 8h3v1h-3zM14 8h1v1h-1zM2 9h1v1h-1zM8 9h1v1h-1zM13 9h2v1h-2zM8 10h1v1h-1zM14 10h1v1h-1zM1 11h1v1h-1zM2 12h1v1h-1zM7 12h2v1h-2zM13 12h1v1h-1zM2 13h1v1h-1zM13 13h1v1h-1zM3 15h2v1h-2zM7 15h2v1h-2zM11 15h2v1h-2z"/><path fill="#fcd29c" d="M3 4h3v1h-3zM9 4h4v1h-4zM3 5h10v1h-10zM3 6h10v1h-10zM4 7h2v1h-2zM8 7h5v1h-5zM1 8h3v1h-3zM8 8h2v1h-2zM13 8h1v1h-1zM1 9h1v1h-1zM3 9h5v1h-5zM9 9h4v1h-4zM1 10h7v1h-7zM9 10h5v1h-5zM2 11h12v1h-12zM3 12h4v1h-4zM9 12h4v1h-4zM3 13h10v1h-10zM3 14h10v1h-10zM5 15h2v1h-2zM9 15h2v1h-2z"/></svg>
<div class="a" style="left:117px;top:363px;width:130px;height:17px;color:#000;line-height:17px"><span class="m" style="font-size:12px;letter-spacing:-1.2px">1-11&nbsp;&nbsp;</span><span class="c"><b class="tx">余松清</b><svg class=g width=12 height=1><use href=#g90 /></svg><svg class=g width=12 height=1><use href=#g91 /></svg><svg class=g width=12 height=1><use href=#g92 /></svg></span></div>
<svg class="a" style="left:100px;top:382px" width="16" height="16" shape-rendering="crispEdges"><path fill="#000" d="M6 0h5v1h-5zM3 1h1v1h-1zM12 1h1v1h-1zM2 2h1v1h-1zM5 2h5v1h-5zM13 2h1v1h-1zM3 3h1v1h-1zM11 3h2v1h-2zM14 3h1v1h-1zM2 4h1v1h-1zM5 4h4v1h-4zM13 4h1v1h-1zM2 5h1v1h-1zM11 5h1v1h-1zM14 5h1v1h-1zM2 6h1v1h-1zM12 6h1v1h-1zM1 7h1v1h-1zM10 7h1v1h-1zM1 8h1v1h-1zM9 8h1v1h-1zM12 8h1v1h-1zM0 9h1v1h-1zM3 9h1v1h-1zM6 9h1v1h-1zM10 9h2v1h-2zM0 10h1v1h-1zM4 10h2v1h-2zM10 10h2v1h-2zM0 11h1v1h-1zM5 11h2v1h-2zM13 11h1v1h-1zM0 12h1v1h-1zM5 12h1v1h-1zM13 12h1v1h-1zM5 13h1v1h-1zM8 13h1v1h-1zM13 13h1v1h-1zM9 14h2v1h-2zM13 14h1v1h-1zM0 15h2v1h-2zM5 15h1v1h-1zM8 15h3v1h-3zM13 15h1v1h-1z"/><path fill="#ff3300" d="M4 1h8v1h-8zM3 2h2v1h-2zM10 2h3v1h-3zM2 3h1v1h-1zM13 3h1v1h-1zM3 4h1v1h-1zM14 4h1v1h-1zM3 5h8v1h-8zM3 6h9v1h-9zM14 6h1v1h-1zM2 7h8v1h-8zM11 7h4v1h-4zM2 8h7v1h-7zM13 8h2v1h-2zM1 9h2v1h-2zM4 9h2v1h-2zM14 9h1v1h-1zM1 10h3v1h-3zM13 10h2v1h-2zM1 11h4v1h-4zM14 11h1v1h-1zM1 12h4v1h-4zM14 12h1v1h-1zM0 13h5v1h-5zM14 13h1v1h-1zM0 14h5v1h-5zM14 14h1v1h-1zM2 15h3v1h-3zM14 15h1v1h-1z"/><path fill="#c890ff" d="M4 3h7v1h-7zM4 4h1v1h-1zM9 4h4v1h-4zM12 5h2v1h-2zM13 6h1v1h-1z"/><path fill="#fcd29c" d="M10 8h2v1h-2zM7 9h3v1h-3zM12 9h2v1h-2zM6 10h4v1h-4zM12 10h1v1h-1zM7 11h6v1h-6zM6 12h7v1h-7zM6 13h2v1h-2zM9 13h4v1h-4zM5 14h4v1h-4zM11 14h2v1h-2zM6 15h2v1h-2zM11 15h2v1h-2z"/></svg>
<div class="a" style="left:117px;top:380px;width:130px;height:17px;color:#000;line-height:17px"><span class="m" style="font-size:12px;letter-spacing:-1.2px">1-12&nbsp;&nbsp;</span><span class="c"><b class="tx">林钦</b><svg class=g width=12 height=1><use href=#g93 /></svg><svg class=g width=12 height=1><use href=#g94 /></svg></span><span class="m" style="font-size:12px;letter-spacing:-1.2px">[CP]</span></div>
<svg class="a" style="left:100px;top:399px" width="16" height="16" shape-rendering="crispEdges"><path fill="#000" d="M5 0h6v1h-6zM3 1h10v1h-10zM1 2h13v1h-13zM1 3h13v1h-13zM1 4h2v1h-2zM6 4h3v1h-3zM13 4h2v1h-2zM1 5h2v1h-2zM13 5h2v1h-2zM1 6h2v1h-2zM13 6h2v1h-2zM1 7h3v1h-3zM6 7h2v1h-2zM13 7h2v1h-2zM4 8h4v1h-4zM10 8h3v1h-3zM14 8h1v1h-1zM2 9h1v1h-1zM8 9h1v1h-1zM13 9h2v1h-2zM8 10h1v1h-1zM14 10h1v1h-1zM1 11h1v1h-1zM2 12h1v1h-1zM7 12h2v1h-2zM13 12h1v1h-1zM2 13h1v1h-1zM13 13h1v1h-1zM3 15h2v1h-2zM7 15h2v1h-2zM11 15h2v1h-2z"/><path fill="#fcd29c" d="M3 4h3v1h-3zM9 4h4v1h-4zM3 5h10v1h-10zM3 6h10v1h-10zM4 7h2v1h-2zM8 7h5v1h-5zM1 8h3v1h-3zM8 8h2v1h-2zM13 8h1v1h-1zM1 9h1v1h-1zM3 9h5v1h-5zM9 9h4v1h-4zM1 10h7v1h-7zM9 10h5v1h-5zM2 11h12v1h-12zM3 12h4v1h-4zM9 12h4v1h-4zM3 13h10v1h-10zM3 14h10v1h-10zM5 15h2v1h-2zM9 15h2v1h-2z"/></svg>
<div class="a" style="left:117px;top:397px;width:130px;height:17px;color:#000;line-height:17px"><span class="m" style="font-size:12px;letter-spacing:-1.2px">1-13&nbsp;&nbsp;</span><span class="c"><b class="tx">陈言庭</b><svg class=g width=12 height=1><use href=#g87 /></svg><svg class=g width=12 height=1><use href=#g95 /></svg><svg class=g width=12 height=1><use href=#g96 /></svg></span></div>
<svg class="a" style="left:100px;top:416px" width="16" height="16" shape-rendering="crispEdges"><path fill="#000" d="M5 0h6v1h-6zM3 1h10v1h-10zM1 2h13v1h-13zM1 3h13v1h-13zM1 4h2v1h-2zM6 4h3v1h-3zM13 4h2v1h-2zM1 5h2v1h-2zM13 5h2v1h-2zM1 6h2v1h-2zM13 6h2v1h-2zM1 7h3v1h-3zM6 7h2v1h-2zM13 7h2v1h-2zM4 8h4v1h-4zM10 8h3v1h-3zM14 8h1v1h-1zM2 9h1v1h-1zM8 9h1v1h-1zM13 9h2v1h-2zM8 10h1v1h-1zM14 10h1v1h-1zM1 11h1v1h-1zM2 12h1v1h-1zM7 12h2v1h-2zM13 12h1v1h-1zM2 13h1v1h-1zM13 13h1v1h-1zM3 15h2v1h-2zM7 15h2v1h-2zM11 15h2v1h-2z"/><path fill="#fcd29c" d="M3 4h3v1h-3zM9 4h4v1h-4zM3 5h10v1h-10zM3 6h10v1h-10zM4 7h2v1h-2zM8 7h5v1h-5zM1 8h3v1h-3zM8 8h2v1h-2zM13 8h1v1h-1zM1 9h1v1h-1zM3 9h5v1h-5zM9 9h4v1h-4zM1 10h7v1h-7zM9 10h5v1h-5zM2 11h12v1h-12zM3 12h4v1h-4zM9 12h4v1h-4zM3 13h10v1h-10zM3 14h10v1h-10zM5 15h2v1h-2zM9 15h2v1h-2z"/></svg>
<div class="a" style="left:117px;top:414px;width:130px;height:17px;color:#ff1010;line-height:17px"><span class="m" style="font-size:12px;letter-spacing:-1.2px">1-15&nbsp;&nbsp;</span><span class="c"><b class="tx">林炎官</b><svg class=g width=12 height=1><use href=#g93 /></svg><svg class=g width=12 height=1><use href=#g97 /></svg><svg class=g width=12 height=1><use href=#g98 /></svg></span></div>
<svg class="a" style="left:100px;top:433px" width="16" height="16" shape-rendering="crispEdges"><path fill="#000" d="M6 0h5v1h-5zM3 1h1v1h-1zM12 1h1v1h-1zM2 2h1v1h-1zM5 2h5v1h-5zM13 2h1v1h-1zM3 3h1v1h-1zM11 3h2v1h-2zM14 3h1v1h-1zM2 4h1v1h-1zM5 4h4v1h-4zM13 4h1v1h-1zM2 5h1v1h-1zM11 5h1v1h-1zM14 5h1v1h-1zM2 6h1v1h-1zM12 6h1v1h-1zM1 7h1v1h-1zM10 7h1v1h-1zM1 8h1v1h-1zM9 8h1v1h-1zM12 8h1v1h-1zM0 9h1v1h-1zM3 9h1v1h-1zM6 9h1v1h-1zM10 9h2v1h-2zM0 10h1v1h-1zM4 10h2v1h-2zM10 10h2v1h-2zM0 11h1v1h-1zM5 11h2v1h-2zM13 11h1v1h-1zM0 12h1v1h-1zM5 12h1v1h-1zM13 12h1v1h-1zM5 13h1v1h-1zM8 13h1v1h-1zM13 13h1v1h-1zM9 14h2v1h-2zM13 14h1v1h-1zM0 15h2v1h-2zM5 15h1v1h-1zM8 15h3v1h-3zM13 15h1v1h-1z"/><path fill="#ff3300" d="M4 1h8v1h-8zM3 2h2v1h-2zM10 2h3v1h-3zM2 3h1v1h-1zM13 3h1v1h-1zM3 4h1v1h-1zM14 4h1v1h-1zM3 5h8v1h-8zM3 6h9v1h-9zM14 6h1v1h-1zM2 7h8v1h-8zM11 7h4v1h-4zM2 8h7v1h-7zM13 8h2v1h-2zM1 9h2v1h-2zM4 9h2v1h-2zM14 9h1v1h-1zM1 10h3v1h-3zM13 10h2v1h-2zM1 11h4v1h-4zM14 11h1v1h-1zM1 12h4v1h-4zM14 12h1v1h-1zM0 13h5v1h-5zM14 13h1v1h-1zM0 14h5v1h-5zM14 14h1v1h-1zM2 15h3v1h-3zM14 15h1v1h-1z"/><path fill="#c890ff" d="M4 3h7v1h-7zM4 4h1v1h-1zM9 4h4v1h-4zM12 5h2v1h-2zM13 6h1v1h-1z"/><path fill="#fcd29c" d="M10 8h2v1h-2zM7 9h3v1h-3zM12 9h2v1h-2zM6 10h4v1h-4zM12 10h1v1h-1zM7 11h6v1h-6zM6 12h7v1h-7zM6 13h2v1h-2zM9 13h4v1h-4zM5 14h4v1h-4zM11 14h2v1h-2zM6 15h2v1h-2zM11 15h2v1h-2z"/></svg>
<div class="a" style="left:117px;top:431px;width:130px;height:17px;color:#000;line-height:17px"><span class="m" style="font-size:12px;letter-spacing:-1.2px">1-16&nbsp;&nbsp;</span><span class="c"><b class="tx">杨仁珠</b><svg class=g width=12 height=1><use href=#g99 /></svg><svg class=g width=12 height=1><use href=#g9a /></svg><svg class=g width=12 height=1><use href=#g9b /></svg></span></div>
<svg class="a" style="left:100px;top:450px" width="16" height="16" shape-rendering="crispEdges"><path fill="#000" d="M5 0h6v1h-6zM3 1h10v1h-10zM1 2h13v1h-13zM1 3h13v1h-13zM1 4h2v1h-2zM6 4h3v1h-3zM13 4h2v1h-2zM1 5h2v1h-2zM13 5h2v1h-2zM1 6h2v1h-2zM13 6h2v1h-2zM1 7h3v1h-3zM6 7h2v1h-2zM13 7h2v1h-2zM4 8h4v1h-4zM10 8h3v1h-3zM14 8h1v1h-1zM2 9h1v1h-1zM8 9h1v1h-1zM13 9h2v1h-2zM8 10h1v1h-1zM14 10h1v1h-1zM1 11h1v1h-1zM2 12h1v1h-1zM7 12h2v1h-2zM13 12h1v1h-1zM2 13h1v1h-1zM13 13h1v1h-1zM3 15h2v1h-2zM7 15h2v1h-2zM11 15h2v1h-2z"/><path fill="#fcd29c" d="M3 4h3v1h-3zM9 4h4v1h-4zM3 5h10v1h-10zM3 6h10v1h-10zM4 7h2v1h-2zM8 7h5v1h-5zM1 8h3v1h-3zM8 8h2v1h-2zM13 8h1v1h-1zM1 9h1v1h-1zM3 9h5v1h-5zM9 9h4v1h-4zM1 10h7v1h-7zM9 10h5v1h-5zM2 11h12v1h-12zM3 12h4v1h-4zM9 12h4v1h-4zM3 13h10v1h-10zM3 14h10v1h-10zM5 15h2v1h-2zM9 15h2v1h-2z"/></svg>
<div class="a" style="left:117px;top:448px;width:130px;height:17px;color:#000;line-height:17px"><span class="m" style="font-size:12px;letter-spacing:-1.2px">1-17&nbsp;&nbsp;</span><span class="c"><b class="tx">吴兆祥</b><svg class=g width=12 height=1><use href=#g81 /></svg><svg class=g width=12 height=1><use href=#g9c /></svg><svg class=g width=12 height=1><use href=#g9d /></svg></span></div>
<svg class="a" style="left:100px;top:467px" width="16" height="16" shape-rendering="crispEdges"><path fill="#000" d="M5 0h6v1h-6zM3 1h10v1h-10zM1 2h13v1h-13zM1 3h13v1h-13zM1 4h2v1h-2zM6 4h3v1h-3zM13 4h2v1h-2zM1 5h2v1h-2zM13 5h2v1h-2zM1 6h2v1h-2zM13 6h2v1h-2zM1 7h3v1h-3zM6 7h2v1h-2zM13 7h2v1h-2zM4 8h4v1h-4zM10 8h3v1h-3zM14 8h1v1h-1zM2 9h1v1h-1zM8 9h1v1h-1zM13 9h2v1h-2zM8 10h1v1h-1zM14 10h1v1h-1zM1 11h1v1h-1zM2 12h1v1h-1zM7 12h2v1h-2zM13 12h1v1h-1zM2 13h1v1h-1zM13 13h1v1h-1zM3 15h2v1h-2zM7 15h2v1h-2zM11 15h2v1h-2z"/><path fill="#fcd29c" d="M3 4h3v1h-3zM9 4h4v1h-4zM3 5h10v1h-10zM3 6h10v1h-10zM4 7h2v1h-2zM8 7h5v1h-5zM1 8h3v1h-3zM8 8h2v1h-2zM13 8h1v1h-1zM1 9h1v1h-1zM3 9h5v1h-5zM9 9h4v1h-4zM1 10h7v1h-7zM9 10h5v1h-5zM2 11h12v1h-12zM3 12h4v1h-4zM9 12h4v1h-4zM3 13h10v1h-10zM3 14h10v1h-10zM5 15h2v1h-2zM9 15h2v1h-2z"/></svg>
<div class="a" style="left:117px;top:465px;width:130px;height:17px;color:#ff1010;line-height:17px"><span class="m" style="font-size:12px;letter-spacing:-1.2px">1-18&nbsp;&nbsp;</span><span class="c"><b class="tx">庄圣荷</b><svg class=g width=12 height=1><use href=#g80 /></svg><svg class=g width=12 height=1><use href=#g9e /></svg><svg class=g width=12 height=1><use href=#g9f /></svg></span><span class="m" style="font-size:12px;letter-spacing:-1.2px">[CP]</span></div>
<svg class="a" style="left:100px;top:484px" width="16" height="16" shape-rendering="crispEdges"><path fill="#000" d="M5 0h6v1h-6zM3 1h10v1h-10zM1 2h13v1h-13zM1 3h13v1h-13zM1 4h2v1h-2zM6 4h3v1h-3zM13 4h2v1h-2zM1 5h2v1h-2zM13 5h2v1h-2zM1 6h2v1h-2zM13 6h2v1h-2zM1 7h3v1h-3zM6 7h2v1h-2zM13 7h2v1h-2zM4 8h4v1h-4zM10 8h3v1h-3zM14 8h1v1h-1zM2 9h1v1h-1zM8 9h1v1h-1zM13 9h2v1h-2zM8 10h1v1h-1zM14 10h1v1h-1zM1 11h1v1h-1zM2 12h1v1h-1zM7 12h2v1h-2zM13 12h1v1h-1zM2 13h1v1h-1zM13 13h1v1h-1zM3 15h2v1h-2zM7 15h2v1h-2zM11 15h2v1h-2z"/><path fill="#fcd29c" d="M3 4h3v1h-3zM9 4h4v1h-4zM3 5h10v1h-10zM3 6h10v1h-10zM4 7h2v1h-2zM8 7h5v1h-5zM1 8h3v1h-3zM8 8h2v1h-2zM13 8h1v1h-1zM1 9h1v1h-1zM3 9h5v1h-5zM9 9h4v1h-4zM1 10h7v1h-7zM9 10h5v1h-5zM2 11h12v1h-12zM3 12h4v1h-4zM9 12h4v1h-4zM3 13h10v1h-10zM3 14h10v1h-10zM5 15h2v1h-2zM9 15h2v1h-2z"/></svg>
<div class="a" style="left:117px;top:482px;width:130px;height:17px;color:#000;line-height:17px"><span class="m" style="font-size:12px;letter-spacing:-1.2px">1-19&nbsp;&nbsp;</span><span class="c"><b class="tx">李硕</b><svg class=g width=12 height=1><use href=#g8d /></svg><svg class=g width=12 height=1><use href=#ga0 /></svg></span><span class="m" style="font-size:12px;letter-spacing:-1.2px">[CP]</span></div>
<svg class="a" style="left:100px;top:501px" width="16" height="16" shape-rendering="crispEdges"><path fill="#000" d="M5 0h6v1h-6zM3 1h10v1h-10zM1 2h13v1h-13zM1 3h13v1h-13zM1 4h2v1h-2zM6 4h3v1h-3zM13 4h2v1h-2zM1 5h2v1h-2zM13 5h2v1h-2zM1 6h2v1h-2zM13 6h2v1h-2zM1 7h3v1h-3zM6 7h2v1h-2zM13 7h2v1h-2zM4 8h4v1h-4zM10 8h3v1h-3zM14 8h1v1h-1zM2 9h1v1h-1zM8 9h1v1h-1zM13 9h2v1h-2zM8 10h1v1h-1zM14 10h1v1h-1zM1 11h1v1h-1zM2 12h1v1h-1zM7 12h2v1h-2zM13 12h1v1h-1zM2 13h1v1h-1zM13 13h1v1h-1zM3 15h2v1h-2zM7 15h2v1h-2zM11 15h2v1h-2z"/><path fill="#fcd29c" d="M3 4h3v1h-3zM9 4h4v1h-4zM3 5h10v1h-10zM3 6h10v1h-10zM4 7h2v1h-2zM8 7h5v1h-5zM1 8h3v1h-3zM8 8h2v1h-2zM13 8h1v1h-1zM1 9h1v1h-1zM3 9h5v1h-5zM9 9h4v1h-4zM1 10h7v1h-7zM9 10h5v1h-5zM2 11h12v1h-12zM3 12h4v1h-4zM9 12h4v1h-4zM3 13h10v1h-10zM3 14h10v1h-10zM5 15h2v1h-2zM9 15h2v1h-2z"/></svg>
<div class="a" style="left:117px;top:499px;width:130px;height:17px;color:#ff1010;line-height:17px"><span class="m" style="font-size:12px;letter-spacing:-1.2px">1-20&nbsp;&nbsp;</span><span class="c"><b class="tx">颜学华</b><svg class=g width=12 height=1><use href=#ga1 /></svg><svg class=g width=12 height=1><use href=#ga2 /></svg><svg class=g width=12 height=1><use href=#ga3 /></svg></span></div>
<svg class="a" style="left:100px;top:518px" width="16" height="16" shape-rendering="crispEdges"><path fill="#000" d="M5 0h6v1h-6zM3 1h10v1h-10zM1 2h13v1h-13zM1 3h13v1h-13zM1 4h2v1h-2zM6 4h3v1h-3zM13 4h2v1h-2zM1 5h2v1h-2zM13 5h2v1h-2zM1 6h2v1h-2zM13 6h2v1h-2zM1 7h3v1h-3zM6 7h2v1h-2zM13 7h2v1h-2zM4 8h4v1h-4zM10 8h3v1h-3zM14 8h1v1h-1zM2 9h1v1h-1zM8 9h1v1h-1zM13 9h2v1h-2zM8 10h1v1h-1zM14 10h1v1h-1zM1 11h1v1h-1zM2 12h1v1h-1zM7 12h2v1h-2zM13 12h1v1h-1zM2 13h1v1h-1zM13 13h1v1h-1zM3 15h2v1h-2zM7 15h2v1h-2zM11 15h2v1h-2z"/><path fill="#fcd29c" d="M3 4h3v1h-3zM9 4h4v1h-4zM3 5h10v1h-10zM3 6h10v1h-10zM4 7h2v1h-2zM8 7h5v1h-5zM1 8h3v1h-3zM8 8h2v1h-2zM13 8h1v1h-1zM1 9h1v1h-1zM3 9h5v1h-5zM9 9h4v1h-4zM1 10h7v1h-7zM9 10h5v1h-5zM2 11h12v1h-12zM3 12h4v1h-4zM9 12h4v1h-4zM3 13h10v1h-10zM3 14h10v1h-10zM5 15h2v1h-2zM9 15h2v1h-2z"/></svg>
<div class="a" style="left:117px;top:516px;width:130px;height:17px;color:#ff1010;line-height:17px"><span class="m" style="font-size:12px;letter-spacing:-1.2px">1-21&nbsp;&nbsp;</span><span class="c"><b class="tx">詹小波</b><svg class=g width=12 height=1><use href=#ga4 /></svg><svg class=g width=12 height=1><use href=#ga5 /></svg><svg class=g width=12 height=1><use href=#ga6 /></svg></span><span class="m" style="font-size:12px;letter-spacing:-1.2px">[CP]</span></div>
<svg class="a" style="left:100px;top:535px" width="16" height="16" shape-rendering="crispEdges"><path fill="#000" d="M5 0h6v1h-6zM3 1h10v1h-10zM1 2h13v1h-13zM1 3h13v1h-13zM1 4h2v1h-2zM6 4h3v1h-3zM13 4h2v1h-2zM1 5h2v1h-2zM13 5h2v1h-2zM1 6h2v1h-2zM13 6h2v1h-2zM1 7h3v1h-3zM6 7h2v1h-2zM13 7h2v1h-2zM4 8h4v1h-4zM10 8h3v1h-3zM14 8h1v1h-1zM2 9h1v1h-1zM8 9h1v1h-1zM13 9h2v1h-2zM8 10h1v1h-1zM14 10h1v1h-1zM1 11h1v1h-1zM2 12h1v1h-1zM7 12h2v1h-2zM13 12h1v1h-1zM2 13h1v1h-1zM13 13h1v1h-1zM3 15h2v1h-2zM7 15h2v1h-2zM11 15h2v1h-2z"/><path fill="#fcd29c" d="M3 4h3v1h-3zM9 4h4v1h-4zM3 5h10v1h-10zM3 6h10v1h-10zM4 7h2v1h-2zM8 7h5v1h-5zM1 8h3v1h-3zM8 8h2v1h-2zM13 8h1v1h-1zM1 9h1v1h-1zM3 9h5v1h-5zM9 9h4v1h-4zM1 10h7v1h-7zM9 10h5v1h-5zM2 11h12v1h-12zM3 12h4v1h-4zM9 12h4v1h-4zM3 13h10v1h-10zM3 14h10v1h-10zM5 15h2v1h-2zM9 15h2v1h-2z"/></svg>
<div class="a" style="left:117px;top:533px;width:130px;height:17px;color:#000;line-height:17px"><span class="m" style="font-size:12px;letter-spacing:-1.2px">1-22&nbsp;&nbsp;</span><span class="c"><b class="tx">郑希明</b><svg class=g width=12 height=1><use href=#ga7 /></svg><svg class=g width=12 height=1><use href=#ga8 /></svg><svg class=g width=12 height=1><use href=#ga9 /></svg></span></div>
<svg class="a" style="left:100px;top:552px" width="16" height="16" shape-rendering="crispEdges"><path fill="#000" d="M5 0h6v1h-6zM3 1h10v1h-10zM1 2h13v1h-13zM1 3h13v1h-13zM1 4h2v1h-2zM6 4h3v1h-3zM13 4h2v1h-2zM1 5h2v1h-2zM13 5h2v1h-2zM1 6h2v1h-2zM13 6h2v1h-2zM1 7h3v1h-3zM6 7h2v1h-2zM13 7h2v1h-2zM4 8h4v1h-4zM10 8h3v1h-3zM14 8h1v1h-1zM2 9h1v1h-1zM8 9h1v1h-1zM13 9h2v1h-2zM8 10h1v1h-1zM14 10h1v1h-1zM1 11h1v1h-1zM2 12h1v1h-1zM7 12h2v1h-2zM13 12h1v1h-1zM2 13h1v1h-1zM13 13h1v1h-1zM3 15h2v1h-2zM7 15h2v1h-2zM11 15h2v1h-2z"/><path fill="#fcd29c" d="M3 4h3v1h-3zM9 4h4v1h-4zM3 5h10v1h-10zM3 6h10v1h-10zM4 7h2v1h-2zM8 7h5v1h-5zM1 8h3v1h-3zM8 8h2v1h-2zM13 8h1v1h-1zM1 9h1v1h-1zM3 9h5v1h-5zM9 9h4v1h-4zM1 10h7v1h-7zM9 10h5v1h-5zM2 11h12v1h-12zM3 12h4v1h-4zM9 12h4v1h-4zM3 13h10v1h-10zM3 14h10v1h-10zM5 15h2v1h-2zM9 15h2v1h-2z"/></svg>
<div class="a" style="left:117px;top:550px;width:130px;height:17px;color:#000;line-height:17px"><span class="m" style="font-size:12px;letter-spacing:-1.2px">1-23&nbsp;&nbsp;</span><span class="c"><b class="tx">林祥孝</b><svg class=g width=12 height=1><use href=#g93 /></svg><svg class=g width=12 height=1><use href=#g9d /></svg><svg class=g width=12 height=1><use href=#gaa /></svg></span><span class="m" style="font-size:12px;letter-spacing:-1.2px">[CP]</span></div>
<svg class="a" style="left:100px;top:569px" width="16" height="16" shape-rendering="crispEdges"><path fill="#000" d="M6 0h5v1h-5zM3 1h1v1h-1zM12 1h1v1h-1zM2 2h1v1h-1zM5 2h5v1h-5zM13 2h1v1h-1zM3 3h1v1h-1zM11 3h2v1h-2zM14 3h1v1h-1zM2 4h1v1h-1zM5 4h4v1h-4zM13 4h1v1h-1zM2 5h1v1h-1zM11 5h1v1h-1zM14 5h1v1h-1zM2 6h1v1h-1zM12 6h1v1h-1zM1 7h1v1h-1zM10 7h1v1h-1zM1 8h1v1h-1zM9 8h1v1h-1zM12 8h1v1h-1zM0 9h1v1h-1zM3 9h1v1h-1zM6 9h1v1h-1zM10 9h2v1h-2zM0 10h1v1h-1zM4 10h2v1h-2zM10 10h2v1h-2zM0 11h1v1h-1zM5 11h2v1h-2zM13 11h1v1h-1zM0 12h1v1h-1zM5 12h1v1h-1zM13 12h1v1h-1zM5 13h1v1h-1zM8 13h1v1h-1zM13 13h1v1h-1zM9 14h2v1h-2zM13 14h1v1h-1zM0 15h2v1h-2zM5 15h1v1h-1zM8 15h3v1h-3zM13 15h1v1h-1z"/><path fill="#ff3300" d="M4 1h8v1h-8zM3 2h2v1h-2zM10 2h3v1h-3zM2 3h1v1h-1zM13 3h1v1h-1zM3 4h1v1h-1zM14 4h1v1h-1zM3 5h8v1h-8zM3 6h9v1h-9zM14 6h1v1h-1zM2 7h8v1h-8zM11 7h4v1h-4zM2 8h7v1h-7zM13 8h2v1h-2zM1 9h2v1h-2zM4 9h2v1h-2zM14 9h1v1h-1zM1 10h3v1h-3zM13 10h2v1h-2zM1 11h4v1h-4zM14 11h1v1h-1zM1 12h4v1h-4zM14 12h1v1h-1zM0 13h5v1h-5zM14 13h1v1h-1zM0 14h5v1h-5zM14 14h1v1h-1zM2 15h3v1h-3zM14 15h1v1h-1z"/><path fill="#c890ff" d="M4 3h7v1h-7zM4 4h1v1h-1zM9 4h4v1h-4zM12 5h2v1h-2zM13 6h1v1h-1z"/><path fill="#fcd29c" d="M10 8h2v1h-2zM7 9h3v1h-3zM12 9h2v1h-2zM6 10h4v1h-4zM12 10h1v1h-1zM7 11h6v1h-6zM6 12h7v1h-7zM6 13h2v1h-2zM9 13h4v1h-4zM5 14h4v1h-4zM11 14h2v1h-2zM6 15h2v1h-2zM11 15h2v1h-2z"/></svg>
<div class="a" style="left:117px;top:567px;width:130px;height:17px;color:#000;line-height:17px"><span class="m" style="font-size:12px;letter-spacing:-1.2px">1-25&nbsp;&nbsp;</span><span class="c"><b class="tx">季武琴</b><svg class=g width=12 height=1><use href=#gab /></svg><svg class=g width=12 height=1><use href=#gac /></svg><svg class=g width=12 height=1><use href=#gad /></svg></span></div>
<svg class="a" style="left:100px;top:586px" width="16" height="16" shape-rendering="crispEdges"><path fill="#000" d="M5 0h6v1h-6zM3 1h10v1h-10zM1 2h13v1h-13zM1 3h13v1h-13zM1 4h2v1h-2zM6 4h3v1h-3zM13 4h2v1h-2zM1 5h2v1h-2zM13 5h2v1h-2zM1 6h2v1h-2zM13 6h2v1h-2zM1 7h3v1h-3zM6 7h2v1h-2zM13 7h2v1h-2zM4 8h4v1h-4zM10 8h3v1h-3zM14 8h1v1h-1zM2 9h1v1h-1zM8 9h1v1h-1zM13 9h2v1h-2zM8 10h1v1h-1zM14 10h1v1h-1zM1 11h1v1h-1zM2 12h1v1h-1zM7 12h2v1h-2zM13 12h1v1h-1zM2 13h1v1h-1zM13 13h1v1h-1zM3 15h2v1h-2zM7 15h2v1h-2zM11 15h2v1h-2z"/><path fill="#fcd29c" d="M3 4h3v1h-3zM9 4h4v1h-4zM3 5h10v1h-10zM3 6h10v1h-10zM4 7h2v1h-2zM8 7h5v1h-5zM1 8h3v1h-3zM8 8h2v1h-2zM13 8h1v1h-1zM1 9h1v1h-1zM3 9h5v1h-5zM9 9h4v1h-4zM1 10h7v1h-7zM9 10h5v1h-5zM2 11h12v1h-12zM3 12h4v1h-4zM9 12h4v1h-4zM3 13h10v1h-10zM3 14h10v1h-10zM5 15h2v1h-2zM9 15h2v1h-2z"/></svg>
<div class="a" style="left:117px;top:584px;width:130px;height:17px;color:#000;line-height:17px"><span class="m" style="font-size:12px;letter-spacing:-1.2px">1-26&nbsp;&nbsp;</span><span class="c"><b class="tx">吴青云</b><svg class=g width=12 height=1><use href=#g81 /></svg><svg class=g width=12 height=1><use href=#gae /></svg><svg class=g width=12 height=1><use href=#gaf /></svg></span><span class="m" style="font-size:12px;letter-spacing:-1.2px">[CP]</span></div>
<svg class="a" style="left:100px;top:603px" width="16" height="16" shape-rendering="crispEdges"><path fill="#000" d="M5 0h6v1h-6zM3 1h10v1h-10zM1 2h13v1h-13zM1 3h13v1h-13zM1 4h2v1h-2zM6 4h3v1h-3zM13 4h2v1h-2zM1 5h2v1h-2zM13 5h2v1h-2zM1 6h2v1h-2zM13 6h2v1h-2zM1 7h3v1h-3zM6 7h2v1h-2zM13 7h2v1h-2zM4 8h4v1h-4zM10 8h3v1h-3zM14 8h1v1h-1zM2 9h1v1h-1zM8 9h1v1h-1zM13 9h2v1h-2zM8 10h1v1h-1zM14 10h1v1h-1zM1 11h1v1h-1zM2 12h1v1h-1zM7 12h2v1h-2zM13 12h1v1h-1zM2 13h1v1h-1zM13 13h1v1h-1zM3 15h2v1h-2zM7 15h2v1h-2zM11 15h2v1h-2z"/><path fill="#fcd29c" d="M3 4h3v1h-3zM9 4h4v1h-4zM3 5h10v1h-10zM3 6h10v1h-10zM4 7h2v1h-2zM8 7h5v1h-5zM1 8h3v1h-3zM8 8h2v1h-2zM13 8h1v1h-1zM1 9h1v1h-1zM3 9h5v1h-5zM9 9h4v1h-4zM1 10h7v1h-7zM9 10h5v1h-5zM2 11h12v1h-12zM3 12h4v1h-4zM9 12h4v1h-4zM3 13h10v1h-10zM3 14h10v1h-10zM5 15h2v1h-2zM9 15h2v1h-2z"/></svg>
<div class="a" style="left:117px;top:601px;width:130px;height:17px;color:#000;line-height:17px"><span class="m" style="font-size:12px;letter-spacing:-1.2px">1-27&nbsp;&nbsp;</span><span class="c"><b class="tx">翁玉国</b><svg class=g width=12 height=1><use href=#gb0 /></svg><svg class=g width=12 height=1><use href=#g88 /></svg><svg class=g width=12 height=1><use href=#g84 /></svg></span></div>
<svg class="a" style="left:100px;top:620px" width="16" height="16" shape-rendering="crispEdges"><path fill="#000" d="M6 0h5v1h-5zM3 1h1v1h-1zM12 1h1v1h-1zM2 2h1v1h-1zM5 2h5v1h-5zM13 2h1v1h-1zM3 3h1v1h-1zM11 3h2v1h-2zM14 3h1v1h-1zM2 4h1v1h-1zM5 4h4v1h-4zM13 4h1v1h-1zM2 5h1v1h-1zM11 5h1v1h-1zM14 5h1v1h-1zM2 6h1v1h-1zM12 6h1v1h-1zM1 7h1v1h-1zM10 7h1v1h-1zM1 8h1v1h-1zM9 8h1v1h-1zM12 8h1v1h-1zM0 9h1v1h-1zM3 9h1v1h-1zM6 9h1v1h-1zM10 9h2v1h-2zM0 10h1v1h-1zM4 10h2v1h-2zM10 10h2v1h-2zM0 11h1v1h-1zM5 11h2v1h-2zM13 11h1v1h-1zM0 12h1v1h-1zM5 12h1v1h-1zM13 12h1v1h-1zM5 13h1v1h-1zM8 13h1v1h-1zM13 13h1v1h-1zM9 14h2v1h-2zM13 14h1v1h-1zM0 15h2v1h-2zM5 15h1v1h-1zM8 15h3v1h-3zM13 15h1v1h-1z"/><path fill="#ff3300" d="M4 1h8v1h-8zM3 2h2v1h-2zM10 2h3v1h-3zM2 3h1v1h-1zM13 3h1v1h-1zM3 4h1v1h-1zM14 4h1v1h-1zM3 5h8v1h-8zM3 6h9v1h-9zM14 6h1v1h-1zM2 7h8v1h-8zM11 7h4v1h-4zM2 8h7v1h-7zM13 8h2v1h-2zM1 9h2v1h-2zM4 9h2v1h-2zM14 9h1v1h-1zM1 10h3v1h-3zM13 10h2v1h-2zM1 11h4v1h-4zM14 11h1v1h-1zM1 12h4v1h-4zM14 12h1v1h-1zM0 13h5v1h-5zM14 13h1v1h-1zM0 14h5v1h-5zM14 14h1v1h-1zM2 15h3v1h-3zM14 15h1v1h-1z"/><path fill="#c890ff" d="M4 3h7v1h-7zM4 4h1v1h-1zM9 4h4v1h-4zM12 5h2v1h-2zM13 6h1v1h-1z"/><path fill="#fcd29c" d="M10 8h2v1h-2zM7 9h3v1h-3zM12 9h2v1h-2zM6 10h4v1h-4zM12 10h1v1h-1zM7 11h6v1h-6zM6 12h7v1h-7zM6 13h2v1h-2zM9 13h4v1h-4zM5 14h4v1h-4zM11 14h2v1h-2zM6 15h2v1h-2zM11 15h2v1h-2z"/></svg>
<div class="a" style="left:117px;top:618px;width:130px;height:17px;color:#000;line-height:17px"><span class="m" style="font-size:12px;letter-spacing:-1.2px">1-28&nbsp;&nbsp;</span><span class="c"><b class="tx">王榕玲</b><svg class=g width=12 height=1><use href=#g8a /></svg><svg class=g width=12 height=1><use href=#gb1 /></svg><svg class=g width=12 height=1><use href=#gb2 /></svg></span></div>
<svg class="a" style="left:100px;top:637px" width="16" height="16" shape-rendering="crispEdges"><path fill="#000" d="M5 0h6v1h-6zM3 1h10v1h-10zM1 2h13v1h-13zM1 3h13v1h-13zM1 4h2v1h-2zM6 4h3v1h-3zM13 4h2v1h-2zM1 5h2v1h-2zM13 5h2v1h-2zM1 6h2v1h-2zM13 6h2v1h-2zM1 7h3v1h-3zM6 7h2v1h-2zM13 7h2v1h-2zM4 8h4v1h-4zM10 8h3v1h-3zM14 8h1v1h-1zM2 9h1v1h-1zM8 9h1v1h-1zM13 9h2v1h-2zM8 10h1v1h-1zM14 10h1v1h-1zM1 11h1v1h-1zM2 12h1v1h-1zM7 12h2v1h-2zM13 12h1v1h-1zM2 13h1v1h-1zM13 13h1v1h-1zM3 15h2v1h-2zM7 15h2v1h-2zM11 15h2v1h-2z"/><path fill="#fcd29c" d="M3 4h3v1h-3zM9 4h4v1h-4zM3 5h10v1h-10zM3 6h10v1h-10zM4 7h2v1h-2zM8 7h5v1h-5zM1 8h3v1h-3zM8 8h2v1h-2zM13 8h1v1h-1zM1 9h1v1h-1zM3 9h5v1h-5zM9 9h4v1h-4zM1 10h7v1h-7zM9 10h5v1h-5zM2 11h12v1h-12zM3 12h4v1h-4zM9 12h4v1h-4zM3 13h10v1h-10zM3 14h10v1h-10zM5 15h2v1h-2zM9 15h2v1h-2z"/></svg>
<div class="a" style="left:117px;top:635px;width:130px;height:17px;color:#000;line-height:17px"><span class="m" style="font-size:12px;letter-spacing:-1.2px">1-29&nbsp;&nbsp;</span><span class="c"><b class="tx">翁志平</b><svg class=g width=12 height=1><use href=#gb0 /></svg><svg class=g width=12 height=1><use href=#gb3 /></svg><svg class=g width=12 height=1><use href=#gb4 /></svg></span></div>
<svg class="a" style="left:100px;top:654px" width="16" height="16" shape-rendering="crispEdges"><path fill="#000" d="M5 0h6v1h-6zM3 1h10v1h-10zM1 2h13v1h-13zM1 3h13v1h-13zM1 4h2v1h-2zM6 4h3v1h-3zM13 4h2v1h-2zM1 5h2v1h-2zM13 5h2v1h-2zM1 6h2v1h-2zM13 6h2v1h-2zM1 7h3v1h-3zM6 7h2v1h-2zM13 7h2v1h-2zM4 8h4v1h-4zM10 8h3v1h-3zM14 8h1v1h-1zM2 9h1v1h-1zM8 9h1v1h-1zM13 9h2v1h-2zM8 10h1v1h-1zM14 10h1v1h-1zM1 11h1v1h-1zM2 12h1v1h-1zM7 12h2v1h-2zM13 12h1v1h-1zM2 13h1v1h-1zM13 13h1v1h-1zM3 15h2v1h-2zM7 15h2v1h-2zM11 15h2v1h-2z"/><path fill="#fcd29c" d="M3 4h3v1h-3zM9 4h4v1h-4zM3 5h10v1h-10zM3 6h10v1h-10zM4 7h2v1h-2zM8 7h5v1h-5zM1 8h3v1h-3zM8 8h2v1h-2zM13 8h1v1h-1zM1 9h1v1h-1zM3 9h5v1h-5zM9 9h4v1h-4zM1 10h7v1h-7zM9 10h5v1h-5zM2 11h12v1h-12zM3 12h4v1h-4zM9 12h4v1h-4zM3 13h10v1h-10zM3 14h10v1h-10zM5 15h2v1h-2zM9 15h2v1h-2z"/></svg>
<div class="a" style="left:117px;top:652px;width:130px;height:17px;color:#000;line-height:17px"><span class="m" style="font-size:12px;letter-spacing:-1.2px">1-30&nbsp;&nbsp;</span><span class="c"><b class="tx">刘浪涛</b><svg class=g width=12 height=1><use href=#g7e /></svg><svg class=g width=12 height=1><use href=#gb5 /></svg><svg class=g width=12 height=1><use href=#gb6 /></svg></span><span class="m" style="font-size:12px;letter-spacing:-1.2px">[CP]</span></div>
<svg class="a" style="left:100px;top:671px" width="16" height="16" shape-rendering="crispEdges"><path fill="#000" d="M6 0h5v1h-5zM3 1h1v1h-1zM12 1h1v1h-1zM2 2h1v1h-1zM5 2h5v1h-5zM13 2h1v1h-1zM3 3h1v1h-1zM11 3h2v1h-2zM14 3h1v1h-1zM2 4h1v1h-1zM5 4h4v1h-4zM13 4h1v1h-1zM2 5h1v1h-1zM11 5h1v1h-1zM14 5h1v1h-1zM2 6h1v1h-1zM12 6h1v1h-1zM1 7h1v1h-1zM10 7h1v1h-1zM1 8h1v1h-1zM9 8h1v1h-1zM12 8h1v1h-1zM0 9h1v1h-1zM3 9h1v1h-1zM6 9h1v1h-1zM10 9h2v1h-2zM0 10h1v1h-1zM4 10h2v1h-2zM10 10h2v1h-2zM0 11h1v1h-1zM5 11h2v1h-2zM13 11h1v1h-1zM0 12h1v1h-1zM5 12h1v1h-1zM13 12h1v1h-1zM5 13h1v1h-1zM8 13h1v1h-1zM13 13h1v1h-1zM9 14h2v1h-2zM13 14h1v1h-1zM0 15h2v1h-2zM5 15h1v1h-1zM8 15h3v1h-3zM13 15h1v1h-1z"/><path fill="#ff3300" d="M4 1h8v1h-8zM3 2h2v1h-2zM10 2h3v1h-3zM2 3h1v1h-1zM13 3h1v1h-1zM3 4h1v1h-1zM14 4h1v1h-1zM3 5h8v1h-8zM3 6h9v1h-9zM14 6h1v1h-1zM2 7h8v1h-8zM11 7h4v1h-4zM2 8h7v1h-7zM13 8h2v1h-2zM1 9h2v1h-2zM4 9h2v1h-2zM14 9h1v1h-1zM1 10h3v1h-3zM13 10h2v1h-2zM1 11h4v1h-4zM14 11h1v1h-1zM1 12h4v1h-4zM14 12h1v1h-1zM0 13h5v1h-5zM14 13h1v1h-1zM0 14h5v1h-5zM14 14h1v1h-1zM2 15h3v1h-3zM14 15h1v1h-1z"/><path fill="#c890ff" d="M4 3h7v1h-7zM4 4h1v1h-1zM9 4h4v1h-4zM12 5h2v1h-2zM13 6h1v1h-1z"/><path fill="#fcd29c" d="M10 8h2v1h-2zM7 9h3v1h-3zM12 9h2v1h-2zM6 10h4v1h-4zM12 10h1v1h-1zM7 11h6v1h-6zM6 12h7v1h-7zM6 13h2v1h-2zM9 13h4v1h-4zM5 14h4v1h-4zM11 14h2v1h-2zM6 15h2v1h-2zM11 15h2v1h-2z"/></svg>
<div class="a" style="left:117px;top:669px;width:130px;height:17px;color:#000;line-height:17px"><span class="m" style="font-size:12px;letter-spacing:-1.2px">1-31&nbsp;&nbsp;</span><span class="c"><b class="tx">黄玉珍</b><svg class=g width=12 height=1><use href=#gb7 /></svg><svg class=g width=12 height=1><use href=#g88 /></svg><svg class=g width=12 height=1><use href=#gb8 /></svg></span><span class="m" style="font-size:12px;letter-spacing:-1.2px">[CP]</span></div>
<svg class="a" style="left:100px;top:688px" width="16" height="16" shape-rendering="crispEdges"><path fill="#000" d="M5 0h6v1h-6zM3 1h10v1h-10zM1 2h13v1h-13zM1 3h13v1h-13zM1 4h2v1h-2zM6 4h3v1h-3zM13 4h2v1h-2zM1 5h2v1h-2zM13 5h2v1h-2zM1 6h2v1h-2zM13 6h2v1h-2zM1 7h3v1h-3zM6 7h2v1h-2zM13 7h2v1h-2zM4 8h4v1h-4zM10 8h3v1h-3zM14 8h1v1h-1zM2 9h1v1h-1zM8 9h1v1h-1zM13 9h2v1h-2zM8 10h1v1h-1zM14 10h1v1h-1zM1 11h1v1h-1zM2 12h1v1h-1zM7 12h2v1h-2zM13 12h1v1h-1zM2 13h1v1h-1zM13 13h1v1h-1zM3 15h2v1h-2zM7 15h2v1h-2zM11 15h2v1h-2z"/><path fill="#fcd29c" d="M3 4h3v1h-3zM9 4h4v1h-4zM3 5h10v1h-10zM3 6h10v1h-10zM4 7h2v1h-2zM8 7h5v1h-5zM1 8h3v1h-3zM8 8h2v1h-2zM13 8h1v1h-1zM1 9h1v1h-1zM3 9h5v1h-5zM9 9h4v1h-4zM1 10h7v1h-7zM9 10h5v1h-5zM2 11h12v1h-12zM3 12h4v1h-4zM9 12h4v1h-4zM3 13h10v1h-10zM3 14h10v1h-10zM5 15h2v1h-2zM9 15h2v1h-2z"/></svg>
<div class="a" style="left:117px;top:686px;width:130px;height:17px;color:#000;line-height:17px"><span class="m" style="font-size:12px;letter-spacing:-1.2px">1-32&nbsp;&nbsp;</span><span class="c"><b class="tx">李云</b><svg class=g width=12 height=1><use href=#g8d /></svg><svg class=g width=12 height=1><use href=#gaf /></svg></span></div>
<svg class="a" style="left:100px;top:705px" width="16" height="16" shape-rendering="crispEdges"><path fill="#000" d="M5 0h6v1h-6zM3 1h10v1h-10zM1 2h13v1h-13zM1 3h13v1h-13zM1 4h2v1h-2zM6 4h3v1h-3zM13 4h2v1h-2zM1 5h2v1h-2zM13 5h2v1h-2zM1 6h2v1h-2zM13 6h2v1h-2zM1 7h3v1h-3zM6 7h2v1h-2zM13 7h2v1h-2zM4 8h4v1h-4zM10 8h3v1h-3zM14 8h1v1h-1zM2 9h1v1h-1zM8 9h1v1h-1zM13 9h2v1h-2zM8 10h1v1h-1zM14 10h1v1h-1zM1 11h1v1h-1zM2 12h1v1h-1zM7 12h2v1h-2zM13 12h1v1h-1zM2 13h1v1h-1zM13 13h1v1h-1zM3 15h2v1h-2zM7 15h2v1h-2zM11 15h2v1h-2z"/><path fill="#fcd29c" d="M3 4h3v1h-3zM9 4h4v1h-4zM3 5h10v1h-10zM3 6h10v1h-10zM4 7h2v1h-2zM8 7h5v1h-5zM1 8h3v1h-3zM8 8h2v1h-2zM13 8h1v1h-1zM1 9h1v1h-1zM3 9h5v1h-5zM9 9h4v1h-4zM1 10h7v1h-7zM9 10h5v1h-5zM2 11h12v1h-12zM3 12h4v1h-4zM9 12h4v1h-4zM3 13h10v1h-10zM3 14h10v1h-10zM5 15h2v1h-2zM9 15h2v1h-2z"/></svg>
<div class="a" style="left:117px;top:703px;width:130px;height:17px;color:#ff1010;line-height:17px"><span class="m" style="font-size:12px;letter-spacing:-1.2px">1-36&nbsp;&nbsp;</span><span class="c"><b class="tx">薛麟</b><svg class=g width=12 height=1><use href=#gb9 /></svg><svg class=g width=12 height=1><use href=#gba /></svg></span><span class="m" style="font-size:12px;letter-spacing:-1.2px">[CP]</span></div>
<svg class="a" style="left:100px;top:722px" width="16" height="16" shape-rendering="crispEdges"><path fill="#000" d="M6 0h5v1h-5zM3 1h1v1h-1zM12 1h1v1h-1zM2 2h1v1h-1zM5 2h5v1h-5zM13 2h1v1h-1zM3 3h1v1h-1zM11 3h2v1h-2zM14 3h1v1h-1zM2 4h1v1h-1zM5 4h4v1h-4zM13 4h1v1h-1zM2 5h1v1h-1zM11 5h1v1h-1zM14 5h1v1h-1zM2 6h1v1h-1zM12 6h1v1h-1zM1 7h1v1h-1zM10 7h1v1h-1zM1 8h1v1h-1zM9 8h1v1h-1zM12 8h1v1h-1zM0 9h1v1h-1zM3 9h1v1h-1zM6 9h1v1h-1zM10 9h2v1h-2zM0 10h1v1h-1zM4 10h2v1h-2zM10 10h2v1h-2zM0 11h1v1h-1zM5 11h2v1h-2zM13 11h1v1h-1zM0 12h1v1h-1zM5 12h1v1h-1zM13 12h1v1h-1zM5 13h1v1h-1zM8 13h1v1h-1zM13 13h1v1h-1zM9 14h2v1h-2zM13 14h1v1h-1zM0 15h2v1h-2zM5 15h1v1h-1zM8 15h3v1h-3zM13 15h1v1h-1z"/><path fill="#ff3300" d="M4 1h8v1h-8zM3 2h2v1h-2zM10 2h3v1h-3zM2 3h1v1h-1zM13 3h1v1h-1zM3 4h1v1h-1zM14 4h1v1h-1zM3 5h8v1h-8zM3 6h9v1h-9zM14 6h1v1h-1zM2 7h8v1h-8zM11 7h4v1h-4zM2 8h7v1h-7zM13 8h2v1h-2zM1 9h2v1h-2zM4 9h2v1h-2zM14 9h1v1h-1zM1 10h3v1h-3zM13 10h2v1h-2zM1 11h4v1h-4zM14 11h1v1h-1zM1 12h4v1h-4zM14 12h1v1h-1zM0 13h5v1h-5zM14 13h1v1h-1zM0 14h5v1h-5zM14 14h1v1h-1zM2 15h3v1h-3zM14 15h1v1h-1z"/><path fill="#c890ff" d="M4 3h7v1h-7zM4 4h1v1h-1zM9 4h4v1h-4zM12 5h2v1h-2zM13 6h1v1h-1z"/><path fill="#fcd29c" d="M10 8h2v1h-2zM7 9h3v1h-3zM12 9h2v1h-2zM6 10h4v1h-4zM12 10h1v1h-1zM7 11h6v1h-6zM6 12h7v1h-7zM6 13h2v1h-2zM9 13h4v1h-4zM5 14h4v1h-4zM11 14h2v1h-2zM6 15h2v1h-2zM11 15h2v1h-2z"/></svg>
<div class="a" style="left:117px;top:720px;width:130px;height:17px;color:#000;line-height:17px"><span class="m" style="font-size:12px;letter-spacing:-1.2px">1-37&nbsp;&nbsp;</span><span class="c"><b class="tx">魏珠梅</b><svg class=g width=12 height=1><use href=#gbb /></svg><svg class=g width=12 height=1><use href=#g9b /></svg><svg class=g width=12 height=1><use href=#gbc /></svg></span></div>
<svg class="a" style="left:100px;top:739px" width="16" height="16" shape-rendering="crispEdges"><path fill="#000" d="M5 0h6v1h-6zM3 1h10v1h-10zM1 2h13v1h-13zM1 3h13v1h-13zM1 4h2v1h-2zM6 4h3v1h-3zM13 4h2v1h-2zM1 5h2v1h-2zM13 5h2v1h-2zM1 6h2v1h-2zM13 6h2v1h-2zM1 7h3v1h-3zM6 7h2v1h-2zM13 7h2v1h-2zM4 8h4v1h-4zM10 8h3v1h-3zM14 8h1v1h-1zM2 9h1v1h-1zM8 9h1v1h-1zM13 9h2v1h-2zM8 10h1v1h-1zM14 10h1v1h-1zM1 11h1v1h-1zM2 12h1v1h-1zM7 12h2v1h-2zM13 12h1v1h-1zM2 13h1v1h-1zM13 13h1v1h-1zM3 15h2v1h-2zM7 15h2v1h-2zM11 15h2v1h-2z"/><path fill="#fcd29c" d="M3 4h3v1h-3zM9 4h4v1h-4zM3 5h10v1h-10zM3 6h10v1h-10zM4 7h2v1h-2zM8 7h5v1h-5zM1 8h3v1h-3zM8 8h2v1h-2zM13 8h1v1h-1zM1 9h1v1h-1zM3 9h5v1h-5zM9 9h4v1h-4zM1 10h7v1h-7zM9 10h5v1h-5zM2 11h12v1h-12zM3 12h4v1h-4zM9 12h4v1h-4zM3 13h10v1h-10zM3 14h10v1h-10zM5 15h2v1h-2zM9 15h2v1h-2z"/></svg>
<div class="a" style="left:117px;top:737px;width:130px;height:17px;color:#000;line-height:17px"><span class="m" style="font-size:12px;letter-spacing:-1.2px">1-38&nbsp;&nbsp;</span><span class="c"><b class="tx">陈奋用</b><svg class=g width=12 height=1><use href=#g87 /></svg><svg class=g width=12 height=1><use href=#gbd /></svg><svg class=g width=12 height=1><use href=#g6d /></svg></span><span class="m" style="font-size:12px;letter-spacing:-1.2px">[CP]</span></div>
<svg class="a" style="left:100px;top:756px" width="16" height="16" shape-rendering="crispEdges"><path fill="#000" d="M5 0h6v1h-6zM3 1h10v1h-10zM1 2h13v1h-13zM1 3h13v1h-13zM1 4h2v1h-2zM6 4h3v1h-3zM13 4h2v1h-2zM1 5h2v1h-2zM13 5h2v1h-2zM1 6h2v1h-2zM13 6h2v1h-2zM1 7h3v1h-3zM6 7h2v1h-2zM13 7h2v1h-2zM4 8h4v1h-4zM10 8h3v1h-3zM14 8h1v1h-1zM2 9h1v1h-1zM8 9h1v1h-1zM13 9h2v1h-2zM8 10h1v1h-1zM14 10h1v1h-1zM1 11h1v1h-1zM2 12h1v1h-1zM7 12h2v1h-2zM13 12h1v1h-1zM2 13h1v1h-1zM13 13h1v1h-1zM3 15h2v1h-2zM7 15h2v1h-2zM11 15h2v1h-2z"/><path fill="#fcd29c" d="M3 4h3v1h-3zM9 4h4v1h-4zM3 5h10v1h-10zM3 6h10v1h-10zM4 7h2v1h-2zM8 7h5v1h-5zM1 8h3v1h-3zM8 8h2v1h-2zM13 8h1v1h-1zM1 9h1v1h-1zM3 9h5v1h-5zM9 9h4v1h-4zM1 10h7v1h-7zM9 10h5v1h-5zM2 11h12v1h-12zM3 12h4v1h-4zM9 12h4v1h-4zM3 13h10v1h-10zM3 14h10v1h-10zM5 15h2v1h-2zM9 15h2v1h-2z"/></svg>
<div class="a" style="left:117px;top:754px;width:130px;height:17px;color:#000;line-height:17px"><span class="m" style="font-size:12px;letter-spacing:-1.2px">1-39&nbsp;&nbsp;</span><span class="c"><b class="tx">邱晋秋</b><svg class=g width=12 height=1><use href=#gbe /></svg><svg class=g width=12 height=1><use href=#gbf /></svg><svg class=g width=12 height=1><use href=#gc0 /></svg></span></div>
<svg class="a" style="left:100px;top:773px" width="16" height="16" shape-rendering="crispEdges"><path fill="#000" d="M6 0h5v1h-5zM3 1h1v1h-1zM12 1h1v1h-1zM2 2h1v1h-1zM5 2h5v1h-5zM13 2h1v1h-1zM3 3h1v1h-1zM11 3h2v1h-2zM14 3h1v1h-1zM2 4h1v1h-1zM5 4h4v1h-4zM13 4h1v1h-1zM2 5h1v1h-1zM11 5h1v1h-1zM14 5h1v1h-1zM2 6h1v1h-1zM12 6h1v1h-1zM1 7h1v1h-1zM10 7h1v1h-1zM1 8h1v1h-1zM9 8h1v1h-1zM12 8h1v1h-1zM0 9h1v1h-1zM3 9h1v1h-1zM6 9h1v1h-1zM10 9h2v1h-2zM0 10h1v1h-1zM4 10h2v1h-2zM10 10h2v1h-2zM0 11h1v1h-1zM5 11h2v1h-2zM13 11h1v1h-1zM0 12h1v1h-1zM5 12h1v1h-1zM13 12h1v1h-1zM5 13h1v1h-1zM8 13h1v1h-1zM13 13h1v1h-1zM9 14h2v1h-2zM13 14h1v1h-1zM0 15h2v1h-2zM5 15h1v1h-1zM8 15h3v1h-3zM13 15h1v1h-1z"/><path fill="#ff3300" d="M4 1h8v1h-8zM3 2h2v1h-2zM10 2h3v1h-3zM2 3h1v1h-1zM13 3h1v1h-1zM3 4h1v1h-1zM14 4h1v1h-1zM3 5h8v1h-8zM3 6h9v1h-9zM14 6h1v1h-1zM2 7h8v1h-8zM11 7h4v1h-4zM2 8h7v1h-7zM13 8h2v1h-2zM1 9h2v1h-2zM4 9h2v1h-2zM14 9h1v1h-1zM1 10h3v1h-3zM13 10h2v1h-2zM1 11h4v1h-4zM14 11h1v1h-1zM1 12h4v1h-4zM14 12h1v1h-1zM0 13h5v1h-5zM14 13h1v1h-1zM0 14h5v1h-5zM14 14h1v1h-1zM2 15h3v1h-3zM14 15h1v1h-1z"/><path fill="#c890ff" d="M4 3h7v1h-7zM4 4h1v1h-1zM9 4h4v1h-4zM12 5h2v1h-2zM13 6h1v1h-1z"/><path fill="#fcd29c" d="M10 8h2v1h-2zM7 9h3v1h-3zM12 9h2v1h-2zM6 10h4v1h-4zM12 10h1v1h-1zM7 11h6v1h-6zM6 12h7v1h-7zM6 13h2v1h-2zM9 13h4v1h-4zM5 14h4v1h-4zM11 14h2v1h-2zM6 15h2v1h-2zM11 15h2v1h-2z"/></svg>
<div class="a" style="left:117px;top:771px;width:130px;height:17px;color:#000;line-height:17px"><span class="m" style="font-size:12px;letter-spacing:-1.2px">1-40&nbsp;&nbsp;</span><span class="c"><b class="tx">吕世国</b><svg class=g width=12 height=1><use href=#gc1 /></svg><svg class=g width=12 height=1><use href=#gc2 /></svg><svg class=g width=12 height=1><use href=#g84 /></svg></span><span class="m" style="font-size:12px;letter-spacing:-1.2px">[CP]</span></div>
<svg class="a" style="left:100px;top:790px" width="16" height="16" shape-rendering="crispEdges"><path fill="#000" d="M5 0h6v1h-6zM3 1h10v1h-10zM1 2h13v1h-13zM1 3h13v1h-13zM1 4h2v1h-2zM6 4h3v1h-3zM13 4h2v1h-2zM1 5h2v1h-2zM13 5h2v1h-2zM1 6h2v1h-2zM13 6h2v1h-2zM1 7h3v1h-3zM6 7h2v1h-2zM13 7h2v1h-2zM4 8h4v1h-4zM10 8h3v1h-3zM14 8h1v1h-1zM2 9h1v1h-1zM8 9h1v1h-1zM13 9h2v1h-2zM8 10h1v1h-1zM14 10h1v1h-1zM1 11h1v1h-1zM2 12h1v1h-1zM7 12h2v1h-2zM13 12h1v1h-1zM2 13h1v1h-1zM13 13h1v1h-1zM3 15h2v1h-2zM7 15h2v1h-2zM11 15h2v1h-2z"/><path fill="#fcd29c" d="M3 4h3v1h-3zM9 4h4v1h-4zM3 5h10v1h-10zM3 6h10v1h-10zM4 7h2v1h-2zM8 7h5v1h-5zM1 8h3v1h-3zM8 8h2v1h-2zM13 8h1v1h-1zM1 9h1v1h-1zM3 9h5v1h-5zM9 9h4v1h-4zM1 10h7v1h-7zM9 10h5v1h-5zM2 11h12v1h-12zM3 12h4v1h-4zM9 12h4v1h-4zM3 13h10v1h-10zM3 14h10v1h-10zM5 15h2v1h-2zM9 15h2v1h-2z"/></svg>
<div class="a" style="left:117px;top:788px;width:130px;height:17px;color:#000;line-height:17px"><span class="m" style="font-size:12px;letter-spacing:-1.2px">1-41&nbsp;&nbsp;</span><span class="c"><b class="tx">施美强</b><svg class=g width=12 height=1><use href=#gc3 /></svg><svg class=g width=12 height=1><use href=#gc4 /></svg><svg class=g width=12 height=1><use href=#gc5 /></svg></span></div>
<div class="a" style="left:97px;top:805px;width:150px;height:16px;background:#f5f1f5"></div>
<svg class="a" style="left:103px;top:809px;overflow:visible" width="6" height="9" viewBox="0 0 6 9"><path d="M5.5 0.5 L1.5 4.5 L5.5 8.5" fill="none" stroke="#606060" stroke-width="1.6"/></svg>
<div class="a" style="left:114px;top:806px;width:104px;height:14px;background:#cdcdcd"></div>
<svg class="a" style="left:234px;top:809px;overflow:visible" width="6" height="9" viewBox="0 0 6 9"><path d="M0.5 0.5 L4.5 4.5 L0.5 8.5" fill="none" stroke="#606060" stroke-width="1.6"/></svg>
<div class="a" style="left:263px;top:208px;width:2px;height:612px;background:#ffffff;border-left:1px solid #c8c4c8"></div>
<div class="a" style="left:268px;top:210px;width:60px;height:20px;font-size:13px;line-height:20px;text-align:left"><span class="c"><b class="tx">床号</b><svg class=g width=13 height=1><use href=#gc6 /></svg><svg class=g width=13 height=1><use href=#gc7 /></svg></span></div>
<div class="a" style="left:293px;top:210px;width:53px;height:20px;background:#ffffff;color:#000;border-top:2px solid #7a7a7a;border-left:2px solid #7a7a7a;border-right:1px solid #e2dee2;border-bottom:1px solid #e2dee2;font-size:13px;line-height:13px;padding-left:1px"><span class="m" style="font-size:13px;letter-spacing:-1.3px">1-02</span></div>
<div class="a" style="left:347px;top:212px;width:60px;height:20px;font-size:13px;line-height:20px;text-align:left"><span class="c"><b class="tx">姓名</b><svg class=g width=13 height=1><use href=#gc8 /></svg><svg class=g width=13 height=1><use href=#gc9 /></svg></span></div>
<div class="a" style="left:372px;top:210px;width:54px;height:20px;background:#fffde8;color:#9a9a9a;border-top:2px solid #7a7a7a;border-left:2px solid #7a7a7a;border-right:1px solid #e2dee2;border-bottom:1px solid #e2dee2;font-size:13px;line-height:13px;padding-left:1px"><span class="c"><b class="tx">刘广庄</b><svg class=g width=13 height=1><use href=#gca /></svg><svg class=g width=13 height=1><use href=#gcb /></svg><svg class=g width=13 height=1><use href=#gcc /></svg></span></div>
<div class="a" style="left:426px;top:213px;width:60px;height:20px;font-size:13px;line-height:20px;text-align:left"><span class="c"><b class="tx">住院号</b><svg class=g width=13 height=1><use href=#gcd /></svg><svg class=g width=13 height=1><use href=#gce /></svg><svg class=g width=13 height=1><use href=#gc7 /></svg></span></div>
<div class="a" style="left:464px;top:210px;width:80px;height:20px;background:#ffffff;color:#000;border-top:2px solid #7a7a7a;border-left:2px solid #7a7a7a;border-right:1px solid #e2dee2;border-bottom:1px solid #e2dee2;font-size:13px;line-height:13px;padding-left:1px"><span class="m" style="font-size:13px;letter-spacing:-1.3px">001704201</span></div>
<div class="a" style="left:548px;top:210px;width:60px;height:20px;font-size:13px;line-height:20px;text-align:left"><span class="c"><b class="tx">可用额</b><svg class=g width=13 height=1><use href=#gcf /></svg><svg class=g width=13 height=1><use href=#gd0 /></svg><svg class=g width=13 height=1><use href=#gd1 /></svg></span></div>
<div class="a" style="left:586px;top:210px;width:66px;height:20px;background:#fffde8;color:#000;border-top:2px solid #7a7a7a;border-left:2px solid #7a7a7a;border-right:1px solid #e2dee2;border-bottom:1px solid #e2dee2;font-size:13px;line-height:13px;padding-left:1px"><span class="m" style="font-size:13px;letter-spacing:-1.3px">9337.52</span><span class="c"><b class="tx">元</b><svg class=g width=13 height=1><use href=#gd2 /></svg></span></div>
<div class="a" style="left:657px;top:210px;width:60px;height:20px;font-size:13px;line-height:20px;text-align:left"><span class="c"><b class="tx">实际余额</b><svg class=g width=13 height=1><use href=#gd3 /></svg><svg class=g width=13 height=1><use href=#gd4 /></svg><svg class=g width=13 height=1><use href=#gd5 /></svg><svg class=g width=13 height=1><use href=#gd1 /></svg></span></div>
<div class="a" style="left:714px;top:210px;width:73px;height:20px;background:#fffde8;color:#000;border-top:2px solid #7a7a7a;border-left:2px solid #7a7a7a;border-right:1px solid #e2dee2;border-bottom:1px solid #e2dee2;font-size:13px;line-height:13px;padding-left:1px"><span class="m" style="font-size:13px;letter-spacing:-1.3px">-14800.52</span><span class="c"><b class="tx">元</b><svg class=g width=13 height=1><use href=#gd2 /></svg></span></div>
<div class="a" style="left:788px;top:211px;width:60px;height:20px;font-size:13px;line-height:20px;text-align:left"><span class="c"><b class="tx">诊断</b><svg class=g width=13 height=1><use href=#gd6 /></svg><svg class=g width=13 height=1><use href=#gd7 /></svg></span><span class="m" style="font-size:13px;letter-spacing:-1.3px">1</span></div>
<div class="a" style="left:820px;top:210px;width:91px;height:20px;background:#fffde8;color:#000;border-top:2px solid #7a7a7a;border-left:2px solid #7a7a7a;border-right:1px solid #e2dee2;border-bottom:1px solid #e2dee2;font-size:13px;line-height:13px;padding-left:1px"><span class="c"><b class="tx">帕金森病</b><svg class=g width=13 height=1><use href=#gd8 /></svg><svg class=g width=13 height=1><use href=#gd9 /></svg><svg class=g width=13 height=1><use href=#gda /></svg><svg class=g width=13 height=1><use href=#g40 /></svg></span></div>
<div class="a" style="left:915px;top:209px;width:60px;height:20px;font-size:13px;line-height:20px;text-align:left"><span class="c"><b class="tx">总费用</b><svg class=g width=13 height=1><use href=#gdb /></svg><svg class=g width=13 height=1><use href=#gdc /></svg><svg class=g width=13 height=1><use href=#gd0 /></svg></span></div>
<div class="a" style="left:954px;top:210px;width:97px;height:20px;background:#fffde8;color:#000;border-top:2px solid #7a7a7a;border-left:2px solid #7a7a7a;border-right:1px solid #e2dee2;border-bottom:1px solid #e2dee2;font-size:13px;line-height:13px;padding-left:1px"><span class="m" style="font-size:13px;letter-spacing:-1.3px">17800.52</span></div>
<div class="a" style="left:271px;top:234px;width:60px;height:20px;font-size:13px;line-height:20px;text-align:left"><span class="c"><b class="tx">长</b><svg class=g width=13 height=1><use href=#gdd /></svg></span><span class="m" style="font-size:13px;letter-spacing:-1.3px">/</span><span class="c"><b class="tx">短</b><svg class=g width=13 height=1><use href=#gde /></svg></span></div>
<div class="a" style="left:303px;top:233px;width:43px;height:20px;background:#ffffff;color:#000;border-top:2px solid #777;border-left:2px solid #777;border-right:1px solid #ddd;border-bottom:1px solid #ddd;font-size:13px;line-height:15px;padding-left:1px"><span class="c"><b class="tx">全部</b><svg class=g width=13 height=1><use href=#gdf /></svg><svg class=g width=13 height=1><use href=#ge0 /></svg></span></div>
<div class="a" style="left:328px;top:235px;width:17px;height:17px;background:#f5f1f5;border-right:1px solid #555;border-bottom:1px solid #555;border-top:1px solid #fff;border-left:1px solid #fff"></div>
<svg class="a" style="left:333px;top:241px;overflow:visible" width="8" height="5" viewBox="0 0 8 5"><path d="M0 0 L8 0 L4 4.5Z" fill="#111"/></svg>
<div class="a" style="left:349px;top:234px;width:60px;height:20px;font-size:13px;line-height:20px;text-align:left"><span class="c"><b class="tx">病人类别</b><svg class=g width=13 height=1><use href=#g40 /></svg><svg class=g width=13 height=1><use href=#ge1 /></svg><svg class=g width=13 height=1><use href=#ge2 /></svg><svg class=g width=13 height=1><use href=#ge3 /></svg></span></div>
<div class="a" style="left:404px;top:233px;width:129px;height:20px;background:#fffde8;color:#9a9a9a;border-top:2px solid #7a7a7a;border-left:2px solid #7a7a7a;border-right:1px solid #e2dee2;border-bottom:1px solid #e2dee2;font-size:13px;line-height:13px;padding-left:1px"><span class="c"><b class="tx">公务员退休</b><svg class=g width=13 height=1><use href=#ge4 /></svg><svg class=g width=13 height=1><use href=#ge5 /></svg><svg class=g width=13 height=1><use href=#ge6 /></svg><svg class=g width=13 height=1><use href=#ge7 /></svg><svg class=g width=13 height=1><use href=#ge8 /></svg></span></div>
<div class="a" style="left:670px;top:232px;width:60px;height:20px;font-size:13px;line-height:20px;text-align:left"><span class="c"><b class="tx">电话</b><svg class=g width=13 height=1><use href=#ge9 /></svg><svg class=g width=13 height=1><use href=#gea /></svg></span></div>
<div class="a" style="left:699px;top:232px;width:88px;height:20px;background:#fffde8;color:#000;border-top:2px solid #7a7a7a;border-left:2px solid #7a7a7a;border-right:1px solid #e2dee2;border-bottom:1px solid #e2dee2;font-size:13px;line-height:13px;padding-left:1px"><span class="m" style="font-size:13px;letter-spacing:-1.3px">15392481158</span></div>
<div class="a" style="left:788px;top:233px;width:60px;height:20px;font-size:13px;line-height:20px;text-align:left"><span class="c"><b class="tx">诊断</b><svg class=g width=13 height=1><use href=#gd6 /></svg><svg class=g width=13 height=1><use href=#gd7 /></svg></span><span class="m" style="font-size:13px;letter-spacing:-1.3px">2</span></div>
<div class="a" style="left:820px;top:232px;width:91px;height:20px;background:#fffde8;color:#000;border-top:2px solid #7a7a7a;border-left:2px solid #7a7a7a;border-right:1px solid #e2dee2;border-bottom:1px solid #e2dee2;font-size:13px;line-height:13px;padding-left:1px"></div>
<div class="a" style="left:915px;top:231px;width:60px;height:20px;font-size:13px;line-height:20px;text-align:left"><span class="c"><b class="tx">职退情况</b><svg class=g width=13 height=1><use href=#geb /></svg><svg class=g width=13 height=1><use href=#ge7 /></svg><svg class=g width=13 height=1><use href=#gec /></svg><svg class=g width=13 height=1><use href=#ged /></svg></span></div>
<div class="a" style="left:968px;top:232px;width:83px;height:20px;background:#fffde8;color:#9a9a9a;border-top:2px solid #7a7a7a;border-left:2px solid #7a7a7a;border-right:1px solid #e2dee2;border-bottom:1px solid #e2dee2;font-size:13px;line-height:13px;padding-left:1px"><span class="c"><b class="tx">公务员退休</b><svg class=g width=13 height=1><use href=#ge4 /></svg><svg class=g width=13 height=1><use href=#ge5 /></svg><svg class=g width=13 height=1><use href=#ge6 /></svg><svg class=g width=13 height=1><use href=#ge7 /></svg><svg class=g width=13 height=1><use href=#ge8 /></svg></span></div>
<div class="a" style="left:268px;top:259px;width:60px;height:20px;font-size:13px;line-height:20px;text-align:left"><span class="c"><b class="tx">性别</b><svg class=g width=13 height=1><use href=#gee /></svg><svg class=g width=13 height=1><use href=#ge3 /></svg></span></div>
<div class="a" style="left:294px;top:259px;width:53px;height:20px;background:#fffde8;color:#9a9a9a;border-top:2px solid #7a7a7a;border-left:2px solid #7a7a7a;border-right:1px solid #e2dee2;border-bottom:1px solid #e2dee2;font-size:13px;line-height:13px;padding-left:1px"><span class="c"><b class="tx">文</b><svg class=g width=13 height=1><use href=#gef /></svg></span></div>
<div class="a" style="left:349px;top:259px;width:60px;height:20px;font-size:13px;line-height:20px;text-align:left"><span class="c"><b class="tx">年龄</b><svg class=g width=13 height=1><use href=#gf0 /></svg><svg class=g width=13 height=1><use href=#gf1 /></svg></span></div>
<div class="a" style="left:374px;top:259px;width:50px;height:20px;background:#fffde8;color:#9a9a9a;border-top:2px solid #7a7a7a;border-left:2px solid #7a7a7a;border-right:1px solid #e2dee2;border-bottom:1px solid #e2dee2;font-size:13px;line-height:13px;padding-left:1px"><span class="m" style="font-size:13px;letter-spacing:-1.3px">&nbsp;81</span><span class="c"><b class="tx">岁</b><svg class=g width=13 height=1><use href=#gf2 /></svg></span></div>
<div class="a" style="left:432px;top:259px;width:60px;height:20px;font-size:13px;line-height:20px;text-align:left"><span class="c"><b class="tx">费别</b><svg class=g width=13 height=1><use href=#gdc /></svg><svg class=g width=13 height=1><use href=#ge3 /></svg></span></div>
<div class="a" style="left:464px;top:259px;width:107px;height:20px;background:#fffde8;color:#9a9a9a;border-top:2px solid #7a7a7a;border-left:2px solid #7a7a7a;border-right:1px solid #e2dee2;border-bottom:1px solid #e2dee2;font-size:13px;line-height:13px;padding-left:1px"><span class="c"><b class="tx">福州市医保中心</b><svg class=g width=13 height=1><use href=#gf3 /></svg><svg class=g width=13 height=1><use href=#gf4 /></svg><svg class=g width=13 height=1><use href=#gf5 /></svg><svg class=g width=13 height=1><use href=#g46 /></svg><svg class=g width=13 height=1><use href=#gf6 /></svg><svg class=g width=13 height=1><use href=#gf7 /></svg><svg class=g width=13 height=1><use href=#gf8 /></svg></span></div>
<div class="a" style="left:574px;top:259px;width:60px;height:20px;font-size:13px;line-height:20px;text-align:left"><span class="c"><b class="tx">入院日</b><svg class=g width=13 height=1><use href=#gf9 /></svg><svg class=g width=13 height=1><use href=#gce /></svg><svg class=g width=13 height=1><use href=#gfa /></svg></span></div>
<div class="a" style="left:613px;top:258px;width:95px;height:20px;background:#fffde8;color:#9a9a9a;border-top:2px solid #7a7a7a;border-left:2px solid #7a7a7a;border-right:1px solid #e2dee2;border-bottom:1px solid #e2dee2;font-size:13px;line-height:13px;padding-left:1px"><span class="m" style="font-size:13px;letter-spacing:-1.3px">230908&nbsp;15:42</span></div>
<div class="a" style="left:710px;top:259px;width:60px;height:20px;font-size:13px;line-height:20px;text-align:left"><span class="c"><b class="tx">状态</b><svg class=g width=13 height=1><use href=#gfb /></svg><svg class=g width=13 height=1><use href=#gfc /></svg></span></div>
<div class="a" style="left:739px;top:258px;width:90px;height:20px;background:#ffffff;color:#000;border-top:2px solid #777;border-left:2px solid #777;border-right:1px solid #ddd;border-bottom:1px solid #ddd;font-size:13px;line-height:15px;padding-left:1px"><span class="c"><b class="tx">今日医嘱</b><svg class=g width=13 height=1><use href=#gfd /></svg><svg class=g width=13 height=1><use href=#gfa /></svg><svg class=g width=13 height=1><use href=#g46 /></svg><svg class=g width=13 height=1><use href=#g47 /></svg></span></div>
<div class="a" style="left:811px;top:260px;width:17px;height:17px;background:#f5f1f5;border-right:1px solid #555;border-bottom:1px solid #555;border-top:1px solid #fff;border-left:1px solid #fff"></div>
<svg class="a" style="left:816px;top:266px;overflow:visible" width="8" height="5" viewBox="0 0 8 5"><path d="M0 0 L8 0 L4 4.5Z" fill="#111"/></svg>
<div class="a" style="left:832px;top:259px;width:60px;height:20px;font-size:13px;line-height:20px;text-align:left"><span class="c"><b class="tx">类别</b><svg class=g width=13 height=1><use href=#ge2 /></svg><svg class=g width=13 height=1><use href=#ge3 /></svg></span></div>
<div class="a" style="left:858px;top:258px;width:51px;height:20px;background:#ffffff;color:#000;border-top:2px solid #777;border-left:2px solid #777;border-right:1px solid #ddd;border-bottom:1px solid #ddd;font-size:13px;line-height:15px;padding-left:1px"><span class="c"><b class="tx">全部</b><svg class=g width=13 height=1><use href=#gdf /></svg><svg class=g width=13 height=1><use href=#ge0 /></svg></span></div>
<div class="a" style="left:891px;top:260px;width:17px;height:17px;background:#f5f1f5;border-right:1px solid #555;border-bottom:1px solid #555;border-top:1px solid #fff;border-left:1px solid #fff"></div>
<svg class="a" style="left:896px;top:266px;overflow:visible" width="8" height="5" viewBox="0 0 8 5"><path d="M0 0 L8 0 L4 4.5Z" fill="#111"/></svg>
<div class="a" style="left:917px;top:257px;width:60px;height:20px;font-size:13px;line-height:20px;text-align:left"><span class="c"><b class="tx">地址</b><svg class=g width=13 height=1><use href=#gfe /></svg><svg class=g width=13 height=1><use href=#gff /></svg></span></div>
<div class="a" style="left:945px;top:257px;width:215px;height:20px;background:#fffde8;color:#9a9a9a;border-top:2px solid #7a7a7a;border-left:2px solid #7a7a7a;border-right:1px solid #e2dee2;border-bottom:1px solid #e2dee2;font-size:13px;line-height:13px;padding-left:1px"><span class="c"><b class="tx">福建省福州市鼓楼区福中路</b><svg class=g width=13 height=1><use href=#gf3 /></svg><svg class=g width=13 height=1><use href=#g100 /></svg><svg class=g width=13 height=1><use href=#g101 /></svg><svg class=g width=13 height=1><use href=#gf3 /></svg><svg class=g width=13 height=1><use href=#gf4 /></svg><svg class=g width=13 height=1><use href=#gf5 /></svg><svg class=g width=13 height=1><use href=#g102 /></svg><svg class=g width=13 height=1><use href=#g103 /></svg><svg class=g width=13 height=1><use href=#g41 /></svg><svg class=g width=13 height=1><use href=#gf3 /></svg><svg class=g width=13 height=1><use href=#gf7 /></svg><svg class=g width=13 height=1><use href=#g104 /></svg></span><span class="m" style="font-size:13px;letter-spacing:-1.3px">68</span><span class="c"><b class="tx">号丰泽</b><svg class=g width=13 height=1><use href=#gc7 /></svg><svg class=g width=13 height=1><use href=#g105 /></svg><svg class=g width=13 height=1><use href=#g106 /></svg></span></div>
<div class="a" style="left:268px;top:280px;width:60px;height:20px;font-size:13px;line-height:20px;text-align:left"><span class="c"><b class="tx">单病种</b><svg class=g width=13 height=1><use href=#g107 /></svg><svg class=g width=13 height=1><use href=#g40 /></svg><svg class=g width=13 height=1><use href=#g108 /></svg></span></div>
<div class="a" style="left:313px;top:280px;width:619px;height:19px;background:#fffde8;color:#000;border-top:2px solid #7a7a7a;border-left:2px solid #7a7a7a;border-right:1px solid #e2dee2;border-bottom:1px solid #e2dee2;font-size:13px;line-height:12px;padding-left:1px"></div>
<div class="a" style="left:265px;top:300px;width:1236px;height:503px;background:#f5f1f5"></div>
<div class="a" style="left:268px;top:301px;width:1233px;height:487px;background:#ffffff;border-left:2px solid #6a6a6a;border-top:2px solid #6a6a6a"></div>
<div class="a" style="left:270px;top:304px;width:14px;height:19px;background:#f5f1f5;border-right:1px solid #8a8a8a;border-bottom:1px solid #8a8a8a;border-left:1px solid #fff;border-top:1px solid #fff;font-size:12px;line-height:17px;text-align:center"></div>
<div class="a" style="left:284px;top:304px;width:18px;height:19px;background:#f5f1f5;border-right:1px solid #8a8a8a;border-bottom:1px solid #8a8a8a;border-left:1px solid #fff;border-top:1px solid #fff;font-size:12px;line-height:17px;text-align:center"></div>
<div class="a" style="left:302px;top:304px;width:95px;height:19px;background:#f5f1f5;border-right:1px solid #8a8a8a;border-bottom:1px solid #8a8a8a;border-left:1px solid #fff;border-top:1px solid #fff;font-size:12px;line-height:17px;text-align:center"><span class="c"><b class="tx">起用时间</b><svg class=g width=12 height=1><use href=#g109 /></svg><svg class=g width=12 height=1><use href=#g6d /></svg><svg class=g width=12 height=1><use href=#g2b /></svg><svg class=g width=12 height=1><use href=#g10a /></svg></span></div>
<div class="a" style="left:397px;top:304px;width:125px;height:19px;background:#f5f1f5;border-right:1px solid #8a8a8a;border-bottom:1px solid #8a8a8a;border-left:1px solid #fff;border-top:1px solid #fff;font-size:12px;line-height:17px;text-align:center"><span class="c"><b class="tx">医生</b><svg class=g width=12 height=1><use href=#g49 /></svg><svg class=g width=12 height=1><use href=#g10b /></svg></span>/<span class="c"><b class="tx">录入</b><svg class=g width=12 height=1><use href=#g10c /></svg><svg class=g width=12 height=1><use href=#g10d /></svg></span>/<span class="c"><b class="tx">核对</b><svg class=g width=12 height=1><use href=#g67 /></svg><svg class=g width=12 height=1><use href=#g68 /></svg></span></div>
<div class="a" style="left:522px;top:304px;width:301px;height:19px;background:#f5f1f5;border-right:1px solid #8a8a8a;border-bottom:1px solid #8a8a8a;border-left:1px solid #fff;border-top:1px solid #fff;font-size:12px;line-height:17px;text-align:center"><span class="c"><b class="tx">医嘱内容</b><svg class=g width=12 height=1><use href=#g49 /></svg><svg class=g width=12 height=1><use href=#g4a /></svg><svg class=g width=12 height=1><use href=#g10e /></svg><svg class=g width=12 height=1><use href=#g10f /></svg></span>(<u>7</u>)</div>
<div class="a" style="left:823px;top:304px;width:29px;height:19px;background:#f5f1f5;border-right:1px solid #8a8a8a;border-bottom:1px solid #8a8a8a;border-left:1px solid #fff;border-top:1px solid #fff;font-size:12px;line-height:17px;text-align:center"><span class="c"><b class="tx">药量</b><svg class=g width=12 height=1><use href=#g4c /></svg><svg class=g width=12 height=1><use href=#g110 /></svg></span></div>
<div class="a" style="left:852px;top:304px;width:55px;height:19px;background:#f5f1f5;border-right:1px solid #8a8a8a;border-bottom:1px solid #8a8a8a;border-left:1px solid #fff;border-top:1px solid #fff;font-size:12px;line-height:17px;text-align:center"><span class="c"><b class="tx">提取日期</b><svg class=g width=12 height=1><use href=#g6e /></svg><svg class=g width=12 height=1><use href=#g65 /></svg><svg class=g width=12 height=1><use href=#g54 /></svg><svg class=g width=12 height=1><use href=#g111 /></svg></span></div>
<div class="a" style="left:907px;top:304px;width:53px;height:19px;background:#f5f1f5;border-right:1px solid #8a8a8a;border-bottom:1px solid #8a8a8a;border-left:1px solid #fff;border-top:1px solid #fff;font-size:12px;line-height:17px;text-align:center"><span class="c"><b class="tx">执行日期</b><svg class=g width=12 height=1><use href=#g6f /></svg><svg class=g width=12 height=1><use href=#g70 /></svg><svg class=g width=12 height=1><use href=#g54 /></svg><svg class=g width=12 height=1><use href=#g111 /></svg></span></div>
<div class="a" style="left:960px;top:304px;width:80px;height:19px;background:#f5f1f5;border-right:1px solid #8a8a8a;border-bottom:1px solid #8a8a8a;border-left:1px solid #fff;border-top:1px solid #fff;font-size:12px;line-height:17px;text-align:center"><span class="c"><b class="tx">停止时间</b><svg class=g width=12 height=1><use href=#g6a /></svg><svg class=g width=12 height=1><use href=#g6b /></svg><svg class=g width=12 height=1><use href=#g2b /></svg><svg class=g width=12 height=1><use href=#g10a /></svg></span></div>
<div class="a" style="left:1040px;top:304px;width:85px;height:19px;background:#f5f1f5;border-right:1px solid #8a8a8a;border-bottom:1px solid #8a8a8a;border-left:1px solid #fff;border-top:1px solid #fff;font-size:12px;line-height:17px;text-align:center"><span class="c"><b class="tx">医生</b><svg class=g width=12 height=1><use href=#g49 /></svg><svg class=g width=12 height=1><use href=#g10b /></svg></span>/<span class="c"><b class="tx">护士</b><svg class=g width=12 height=1><use href=#g13 /></svg><svg class=g width=12 height=1><use href=#g112 /></svg></span></div>
<div class="a" style="left:1125px;top:304px;width:180px;height:19px;background:#f5f1f5;border-right:1px solid #8a8a8a;border-bottom:1px solid #8a8a8a;border-left:1px solid #fff;border-top:1px solid #fff;font-size:12px;line-height:17px;text-align:center"><span class="c"><b class="tx">嘱咐</b><svg class=g width=12 height=1><use href=#g4a /></svg><svg class=g width=12 height=1><use href=#g113 /></svg></span></div>
<div class="a" style="left:1305px;top:304px;width:95px;height:19px;background:#f5f1f5;border-right:1px solid #8a8a8a;border-bottom:1px solid #8a8a8a;border-left:1px solid #fff;border-top:1px solid #fff;font-size:12px;line-height:17px;text-align:center"><span class="c"><b class="tx">录入时间</b><svg class=g width=12 height=1><use href=#g10c /></svg><svg class=g width=12 height=1><use href=#g10d /></svg><svg class=g width=12 height=1><use href=#g2b /></svg><svg class=g width=12 height=1><use href=#g10a /></svg></span></div>
<div class="a" style="left:1400px;top:304px;width:50px;height:19px;background:#f5f1f5;border-right:1px solid #8a8a8a;border-bottom:1px solid #8a8a8a;border-left:1px solid #fff;border-top:1px solid #fff;font-size:12px;line-height:17px;text-align:center"><span class="c"><b class="tx">嘱号</b><svg class=g width=12 height=1><use href=#g4a /></svg><svg class=g width=12 height=1><use href=#g114 /></svg></span></div>
<div class="a" style="left:1450px;top:304px;width:136px;height:19px;background:#f5f1f5;border-right:1px solid #8a8a8a;border-bottom:1px solid #8a8a8a;border-left:1px solid #fff;border-top:1px solid #fff;font-size:12px;line-height:17px;text-align:center"><span class="c"><b class="tx">执行科室</b><svg class=g width=12 height=1><use href=#g6f /></svg><svg class=g width=12 height=1><use href=#g70 /></svg><svg class=g width=12 height=1><use href=#g115 /></svg><svg class=g width=12 height=1><use href=#g116 /></svg></span></div>
<div class="a" style="left:284px;top:323px;width:18px;height:17px;border-right:1px solid #c8c8c8;border-bottom:1px solid #c8c8c8"></div>
<div class="a" style="left:302px;top:323px;width:95px;height:17px;border-right:1px solid #c8c8c8;border-bottom:1px solid #c8c8c8"></div>
<div class="a" style="left:397px;top:323px;width:125px;height:17px;border-right:1px solid #c8c8c8;border-bottom:1px solid #c8c8c8"></div>
<div class="a" style="left:522px;top:323px;width:301px;height:17px;border-right:1px solid #c8c8c8;border-bottom:1px solid #c8c8c8"></div>
<div class="a" style="left:823px;top:323px;width:29px;height:17px;border-right:1px solid #c8c8c8;border-bottom:1px solid #c8c8c8"></div>
<div class="a" style="left:852px;top:323px;width:55px;height:17px;border-right:1px solid #c8c8c8;border-bottom:1px solid #c8c8c8"></div>
<div class="a" style="left:907px;top:323px;width:53px;height:17px;border-right:1px solid #c8c8c8;border-bottom:1px solid #c8c8c8"></div>
<div class="a" style="left:960px;top:323px;width:80px;height:17px;border-right:1px solid #c8c8c8;border-bottom:1px solid #c8c8c8"></div>
<div class="a" style="left:1040px;top:323px;width:85px;height:17px;border-right:1px solid #c8c8c8;border-bottom:1px solid #c8c8c8"></div>
<div class="a" style="left:1125px;top:323px;width:180px;height:17px;border-right:1px solid #c8c8c8;border-bottom:1px solid #c8c8c8"></div>
<div class="a" style="left:1305px;top:323px;width:95px;height:17px;border-right:1px solid #c8c8c8;border-bottom:1px solid #c8c8c8"></div>
<div class="a" style="left:1400px;top:323px;width:50px;height:17px;border-right:1px solid #c8c8c8;border-bottom:1px solid #c8c8c8"></div>
<div class="a" style="left:1450px;top:323px;width:136px;height:17px;border-right:1px solid #c8c8c8;border-bottom:1px solid #c8c8c8"></div>
<div class="a" style="left:270px;top:323px;width:14px;height:17px;background:#f5f1f5;border-right:1px solid #8a8a8a;border-bottom:1px solid #8a8a8a;border-left:1px solid #fff;border-top:1px solid #fff"></div>
<div class="a" style="left:287px;top:323px;width:14px;height:16px;color:#ff0000;line-height:16px;text-align:left"><span class="c"><b class="tx">短</b><svg class=g width=12 height=1><use href=#g117 /></svg></span></div>
<div class="a" style="left:304px;top:323px;width:92px;height:16px;color:#ff0000;line-height:16px;text-align:left"><span class="m" style="font-size:12px;letter-spacing:-1.2px">230926&nbsp;09:52:59</span></div>
<div class="a" style="left:399px;top:323px;width:122px;height:16px;color:#ff0000;line-height:16px;text-align:left"><span class="c"><b class="tx">夏敏</b><svg class=g width=12 height=1><use href=#g118 /></svg><svg class=g width=12 height=1><use href=#g119 /></svg></span><span class="m" style="font-size:12px;letter-spacing:-1.2px">/</span><span class="c"><b class="tx">夏敏</b><svg class=g width=12 height=1><use href=#g118 /></svg><svg class=g width=12 height=1><use href=#g119 /></svg></span><span class="m" style="font-size:12px;letter-spacing:-1.2px">/</span><span class="c"><b class="tx">江灵珊</b><svg class=g width=12 height=1><use href=#g11a /></svg><svg class=g width=12 height=1><use href=#g11b /></svg><svg class=g width=12 height=1><use href=#g11c /></svg></span></div>
<div class="a" style="left:524px;top:323px;width:298px;height:16px;color:#ff0000;line-height:16px;text-align:left"><span class="c"><b class="tx">步态分析检查</b><svg class=g width=12 height=1><use href=#g16 /></svg><svg class=g width=12 height=1><use href=#g11d /></svg><svg class=g width=12 height=1><use href=#g11e /></svg><svg class=g width=12 height=1><use href=#g11f /></svg><svg class=g width=12 height=1><use href=#g74 /></svg><svg class=g width=12 height=1><use href=#g57 /></svg></span></div>
<div class="a" style="left:1029px;top:323px;width:8px;height:16px;color:#ff0000;line-height:16px"><span class="m" style="font-size:12px;letter-spacing:-1.2px">7</span></div>
<div class="a" style="left:1043px;top:323px;width:81px;height:16px;color:#ff0000;line-height:16px;text-align:left"><span class="c"><b class="tx">夏敏</b><svg class=g width=12 height=1><use href=#g118 /></svg><svg class=g width=12 height=1><use href=#g119 /></svg></span><span class="m" style="font-size:12px;letter-spacing:-1.2px">/</span><span class="c"><b class="tx">江灵珊</b><svg class=g width=12 height=1><use href=#g11a /></svg><svg class=g width=12 height=1><use href=#g11b /></svg><svg class=g width=12 height=1><use href=#g11c /></svg></span></div>
<div class="a" style="left:1307px;top:323px;width:92px;height:16px;color:#ff0000;line-height:16px;text-align:left"><span class="m" style="font-size:12px;letter-spacing:-1.2px">230926&nbsp;09:52:38</span></div>
<div class="a" style="left:1402px;top:323px;width:47px;height:16px;color:#ff0000;line-height:16px;text-align:left"><span class="m" style="font-size:12px;letter-spacing:-1.2px">28439790</span></div>
<div class="a" style="left:1452px;top:323px;width:133px;height:16px;color:#ff0000;line-height:16px;text-align:left"><span class="c"><b class="tx">物理治疗</b><svg class=g width=12 height=1><use href=#g120 /></svg><svg class=g width=12 height=1><use href=#g14 /></svg><svg class=g width=12 height=1><use href=#g121 /></svg><svg class=g width=12 height=1><use href=#g122 /></svg></span></div>
<div class="a" style="left:284px;top:340px;width:18px;height:17px;border-right:1px solid #c8c8c8;border-bottom:1px solid #c8c8c8"></div>
<div class="a" style="left:302px;top:340px;width:95px;height:17px;border-right:1px solid #c8c8c8;border-bottom:1px solid #c8c8c8"></div>
<div class="a" style="left:397px;top:340px;width:125px;height:17px;border-right:1px solid #c8c8c8;border-bottom:1px solid #c8c8c8"></div>
<div class="a" style="left:522px;top:340px;width:301px;height:17px;border-right:1px solid #c8c8c8;border-bottom:1px solid #c8c8c8"></div>
<div class="a" style="left:823px;top:340px;width:29px;height:17px;border-right:1px solid #c8c8c8;border-bottom:1px solid #c8c8c8"></div>
<div class="a" style="left:852px;top:340px;width:55px;height:17px;border-right:1px solid #c8c8c8;border-bottom:1px solid #c8c8c8"></div>
<div class="a" style="left:907px;top:340px;width:53px;height:17px;border-right:1px solid #c8c8c8;border-bottom:1px solid #c8c8c8"></div>
<div class="a" style="left:960px;top:340px;width:80px;height:17px;border-right:1px solid #c8c8c8;border-bottom:1px solid #c8c8c8"></div>
<div class="a" style="left:1040px;top:340px;width:85px;height:17px;border-right:1px solid #c8c8c8;border-bottom:1px solid #c8c8c8"></div>
<div class="a" style="left:1125px;top:340px;width:180px;height:17px;border-right:1px solid #c8c8c8;border-bottom:1px solid #c8c8c8"></div>
<div class="a" style="left:1305px;top:340px;width:95px;height:17px;border-right:1px solid #c8c8c8;border-bottom:1px solid #c8c8c8"></div>
<div class="a" style="left:1400px;top:340px;width:50px;height:17px;border-right:1px solid #c8c8c8;border-bottom:1px solid #c8c8c8"></div>
<div class="a" style="left:1450px;top:340px;width:136px;height:17px;border-right:1px solid #c8c8c8;border-bottom:1px solid #c8c8c8"></div>
<div class="a" style="left:270px;top:340px;width:14px;height:17px;background:#f5f1f5;border-right:1px solid #8a8a8a;border-bottom:1px solid #8a8a8a;border-left:1px solid #fff;border-top:1px solid #fff"></div>
<div class="a" style="left:287px;top:340px;width:14px;height:16px;color:#ff0000;line-height:16px;text-align:left"><span class="c"><b class="tx">短</b><svg class=g width=12 height=1><use href=#g117 /></svg></span></div>
<div class="a" style="left:304px;top:340px;width:92px;height:16px;color:#ff0000;line-height:16px;text-align:left"><span class="m" style="font-size:12px;letter-spacing:-1.2px">230926&nbsp;09:52:59</span></div>
<div class="a" style="left:399px;top:340px;width:122px;height:16px;color:#ff0000;line-height:16px;text-align:left"><span class="c"><b class="tx">夏敏</b><svg class=g width=12 height=1><use href=#g118 /></svg><svg class=g width=12 height=1><use href=#g119 /></svg></span><span class="m" style="font-size:12px;letter-spacing:-1.2px">/</span><span class="c"><b class="tx">夏敏</b><svg class=g width=12 height=1><use href=#g118 /></svg><svg class=g width=12 height=1><use href=#g119 /></svg></span><span class="m" style="font-size:12px;letter-spacing:-1.2px">/</span><span class="c"><b class="tx">江灵珊</b><svg class=g width=12 height=1><use href=#g11a /></svg><svg class=g width=12 height=1><use href=#g11b /></svg><svg class=g width=12 height=1><use href=#g11c /></svg></span></div>
<div class="a" style="left:524px;top:340px;width:298px;height:16px;color:#ff0000;line-height:16px;text-align:left"><span class="c"><b class="tx">平衡试验</b><svg class=g width=12 height=1><use href=#gb4 /></svg><svg class=g width=12 height=1><use href=#g123 /></svg><svg class=g width=12 height=1><use href=#g72 /></svg><svg class=g width=12 height=1><use href=#g124 /></svg></span></div>
<div class="a" style="left:1029px;top:340px;width:8px;height:16px;color:#ff0000;line-height:16px"><span class="m" style="font-size:12px;letter-spacing:-1.2px">7</span></div>
<div class="a" style="left:1043px;top:340px;width:81px;height:16px;color:#ff0000;line-height:16px;text-align:left"><span class="c"><b class="tx">夏敏</b><svg class=g width=12 height=1><use href=#g118 /></svg><svg class=g width=12 height=1><use href=#g119 /></svg></span><span class="m" style="font-size:12px;letter-spacing:-1.2px">/</span><span class="c"><b class="tx">江灵珊</b><svg class=g width=12 height=1><use href=#g11a /></svg><svg class=g width=12 height=1><use href=#g11b /></svg><svg class=g width=12 height=1><use href=#g11c /></svg></span></div>
<div class="a" style="left:1307px;top:340px;width:92px;height:16px;color:#ff0000;line-height:16px;text-align:left"><span class="m" style="font-size:12px;letter-spacing:-1.2px">230926&nbsp;09:52:38</span></div>
<div class="a" style="left:1402px;top:340px;width:47px;height:16px;color:#ff0000;line-height:16px;text-align:left"><span class="m" style="font-size:12px;letter-spacing:-1.2px">28439791</span></div>
<div class="a" style="left:1452px;top:340px;width:133px;height:16px;color:#ff0000;line-height:16px;text-align:left"><span class="c"><b class="tx">物理治疗</b><svg class=g width=12 height=1><use href=#g120 /></svg><svg class=g width=12 height=1><use href=#g14 /></svg><svg class=g width=12 height=1><use href=#g121 /></svg><svg class=g width=12 height=1><use href=#g122 /></svg></span></div>
<div class="a" style="left:284px;top:357px;width:18px;height:17px;border-right:1px solid #c8c8c8;border-bottom:1px solid #c8c8c8"></div>
<div class="a" style="left:302px;top:357px;width:95px;height:17px;border-right:1px solid #c8c8c8;border-bottom:1px solid #c8c8c8"></div>
<div class="a" style="left:397px;top:357px;width:125px;height:17px;border-right:1px solid #c8c8c8;border-bottom:1px solid #c8c8c8"></div>
<div class="a" style="left:522px;top:357px;width:301px;height:17px;border-right:1px solid #c8c8c8;border-bottom:1px solid #c8c8c8"></div>
<div class="a" style="left:823px;top:357px;width:29px;height:17px;border-right:1px solid #c8c8c8;border-bottom:1px solid #c8c8c8"></div>
<div class="a" style="left:852px;top:357px;width:55px;height:17px;border-right:1px solid #c8c8c8;border-bottom:1px solid #c8c8c8"></div>
<div class="a" style="left:907px;top:357px;width:53px;height:17px;border-right:1px solid #c8c8c8;border-bottom:1px solid #c8c8c8"></div>
<div class="a" style="left:960px;top:357px;width:80px;height:17px;border-right:1px solid #c8c8c8;border-bottom:1px solid #c8c8c8"></div>
<div class="a" style="left:1040px;top:357px;width:85px;height:17px;border-right:1px solid #c8c8c8;border-bottom:1px solid #c8c8c8"></div>
<div class="a" style="left:1125px;top:357px;width:180px;height:17px;border-right:1px solid #c8c8c8;border-bottom:1px solid #c8c8c8"></div>
<div class="a" style="left:1305px;top:357px;width:95px;height:17px;border-right:1px solid #c8c8c8;border-bottom:1px solid #c8c8c8"></div>
<div class="a" style="left:1400px;top:357px;width:50px;height:17px;border-right:1px solid #c8c8c8;border-bottom:1px solid #c8c8c8"></div>
<div class="a" style="left:1450px;top:357px;width:136px;height:17px;border-right:1px solid #c8c8c8;border-bottom:1px solid #c8c8c8"></div>
<div class="a" style="left:270px;top:357px;width:14px;height:17px;background:#f5f1f5;border-right:1px solid #8a8a8a;border-bottom:1px solid #8a8a8a;border-left:1px solid #fff;border-top:1px solid #fff"></div>
<div class="a" style="left:287px;top:357px;width:14px;height:16px;color:#ff0000;line-height:16px;text-align:left"><span class="c"><b class="tx">短</b><svg class=g width=12 height=1><use href=#g117 /></svg></span></div>
<div class="a" style="left:304px;top:357px;width:92px;height:16px;color:#ff0000;line-height:16px;text-align:left"><span class="m" style="font-size:12px;letter-spacing:-1.2px">230926&nbsp;09:52:59</span></div>
<div class="a" style="left:399px;top:357px;width:122px;height:16px;color:#ff0000;line-height:16px;text-align:left"><span class="c"><b class="tx">夏敏</b><svg class=g width=12 height=1><use href=#g118 /></svg><svg class=g width=12 height=1><use href=#g119 /></svg></span><span class="m" style="font-size:12px;letter-spacing:-1.2px">/</span><span class="c"><b class="tx">夏敏</b><svg class=g width=12 height=1><use href=#g118 /></svg><svg class=g width=12 height=1><use href=#g119 /></svg></span><span class="m" style="font-size:12px;letter-spacing:-1.2px">/</span><span class="c"><b class="tx">江灵珊</b><svg class=g width=12 height=1><use href=#g11a /></svg><svg class=g width=12 height=1><use href=#g11b /></svg><svg class=g width=12 height=1><use href=#g11c /></svg></span></div>
<div class="a" style="left:524px;top:357px;width:298px;height:16px;color:#ff0000;line-height:16px;text-align:left"><span class="c"><b class="tx">手功能评定</b><svg class=g width=12 height=1><use href=#g125 /></svg><svg class=g width=12 height=1><use href=#g126 /></svg><svg class=g width=12 height=1><use href=#g127 /></svg><svg class=g width=12 height=1><use href=#g128 /></svg><svg class=g width=12 height=1><use href=#g26 /></svg></span></div>
<div class="a" style="left:1029px;top:357px;width:8px;height:16px;color:#ff0000;line-height:16px"><span class="m" style="font-size:12px;letter-spacing:-1.2px">7</span></div>
<div class="a" style="left:1043px;top:357px;width:81px;height:16px;color:#ff0000;line-height:16px;text-align:left"><span class="c"><b class="tx">夏敏</b><svg class=g width=12 height=1><use href=#g118 /></svg><svg class=g width=12 height=1><use href=#g119 /></svg></span><span class="m" style="font-size:12px;letter-spacing:-1.2px">/</span><span class="c"><b class="tx">江灵珊</b><svg class=g width=12 height=1><use href=#g11a /></svg><svg class=g width=12 height=1><use href=#g11b /></svg><svg class=g width=12 height=1><use href=#g11c /></svg></span></div>
<div class="a" style="left:1307px;top:357px;width:92px;height:16px;color:#ff0000;line-height:16px;text-align:left"><span class="m" style="font-size:12px;letter-spacing:-1.2px">230926&nbsp;09:52:38</span></div>
<div class="a" style="left:1402px;top:357px;width:47px;height:16px;color:#ff0000;line-height:16px;text-align:left"><span class="m" style="font-size:12px;letter-spacing:-1.2px">28439794</span></div>
<div class="a" style="left:1452px;top:357px;width:133px;height:16px;color:#ff0000;line-height:16px;text-align:left"><span class="c"><b class="tx">作业治疗</b><svg class=g width=12 height=1><use href=#g129 /></svg><svg class=g width=12 height=1><use href=#g12a /></svg><svg class=g width=12 height=1><use href=#g121 /></svg><svg class=g width=12 height=1><use href=#g122 /></svg></span></div>
<div class="a" style="left:283px;top:374px;width:1218px;height:17px;background:#c0f8f8"></div>
<div class="a" style="left:284px;top:374px;width:18px;height:17px;border-right:1px solid #c8c8c8;border-bottom:1px solid #c8c8c8"></div>
<div class="a" style="left:302px;top:374px;width:95px;height:17px;border-right:1px solid #c8c8c8;border-bottom:1px solid #c8c8c8"></div>
<div class="a" style="left:397px;top:374px;width:125px;height:17px;border-right:1px solid #c8c8c8;border-bottom:1px solid #c8c8c8"></div>
<div class="a" style="left:522px;top:374px;width:301px;height:17px;border-right:1px solid #c8c8c8;border-bottom:1px solid #c8c8c8"></div>
<div class="a" style="left:823px;top:374px;width:29px;height:17px;border-right:1px solid #c8c8c8;border-bottom:1px solid #c8c8c8"></div>
<div class="a" style="left:852px;top:374px;width:55px;height:17px;border-right:1px solid #c8c8c8;border-bottom:1px solid #c8c8c8"></div>
<div class="a" style="left:907px;top:374px;width:53px;height:17px;border-right:1px solid #c8c8c8;border-bottom:1px solid #c8c8c8"></div>
<div class="a" style="left:960px;top:374px;width:80px;height:17px;border-right:1px solid #c8c8c8;border-bottom:1px solid #c8c8c8"></div>
<div class="a" style="left:1040px;top:374px;width:85px;height:17px;border-right:1px solid #c8c8c8;border-bottom:1px solid #c8c8c8"></div>
<div class="a" style="left:1125px;top:374px;width:180px;height:17px;border-right:1px solid #c8c8c8;border-bottom:1px solid #c8c8c8"></div>
<div class="a" style="left:1305px;top:374px;width:95px;height:17px;border-right:1px solid #c8c8c8;border-bottom:1px solid #c8c8c8"></div>
<div class="a" style="left:1400px;top:374px;width:50px;height:17px;border-right:1px solid #c8c8c8;border-bottom:1px solid #c8c8c8"></div>
<div class="a" style="left:1450px;top:374px;width:136px;height:17px;border-right:1px solid #c8c8c8;border-bottom:1px solid #c8c8c8"></div>
<div class="a" style="left:270px;top:374px;width:14px;height:17px;background:#f5f1f5;border-right:1px solid #8a8a8a;border-bottom:1px solid #8a8a8a;border-left:1px solid #fff;border-top:1px solid #fff"></div>
<div class="a" style="left:270px;top:374px;width:14px;height:16px;background:#000"></div>
<svg class="a" style="left:273px;top:377px;overflow:visible" width="8" height="11" viewBox="0 0 8 11"><path d="M0 0 L7.5 5.5 L0 11Z" fill="#fff"/></svg>
<div class="a" style="left:287px;top:374px;width:14px;height:16px;color:#ff0000;line-height:16px;text-align:left"><span class="c"><b class="tx">短</b><svg class=g width=12 height=1><use href=#g117 /></svg></span></div>
<div class="a" style="left:304px;top:374px;width:92px;height:16px;color:#ff0000;line-height:16px;text-align:left"><span class="m" style="font-size:12px;letter-spacing:-1.2px">230926&nbsp;09:52:59</span></div>
<div class="a" style="left:399px;top:374px;width:122px;height:16px;color:#ff0000;line-height:16px;text-align:left"><span class="c"><b class="tx">夏敏</b><svg class=g width=12 height=1><use href=#g118 /></svg><svg class=g width=12 height=1><use href=#g119 /></svg></span><span class="m" style="font-size:12px;letter-spacing:-1.2px">/</span><span class="c"><b class="tx">夏敏</b><svg class=g width=12 height=1><use href=#g118 /></svg><svg class=g width=12 height=1><use href=#g119 /></svg></span><span class="m" style="font-size:12px;letter-spacing:-1.2px">/</span><span class="c"><b class="tx">江灵珊</b><svg class=g width=12 height=1><use href=#g11a /></svg><svg class=g width=12 height=1><use href=#g11b /></svg><svg class=g width=12 height=1><use href=#g11c /></svg></span></div>
<div class="a" style="left:524px;top:374px;width:298px;height:16px;color:#ff0000;line-height:16px;text-align:left"><span class="c"><b class="tx">日常生活能力评定</b><svg class=g width=12 height=1><use href=#g54 /></svg><svg class=g width=12 height=1><use href=#g55 /></svg><svg class=g width=12 height=1><use href=#g10b /></svg><svg class=g width=12 height=1><use href=#g12b /></svg><svg class=g width=12 height=1><use href=#g127 /></svg><svg class=g width=12 height=1><use href=#g12c /></svg><svg class=g width=12 height=1><use href=#g128 /></svg><svg class=g width=12 height=1><use href=#g26 /></svg></span></div>
<div class="a" style="left:1029px;top:374px;width:8px;height:16px;color:#ff0000;line-height:16px"><span class="m" style="font-size:12px;letter-spacing:-1.2px">7</span></div>
<div class="a" style="left:1043px;top:374px;width:81px;height:16px;color:#ff0000;line-height:16px;text-align:left"><span class="c"><b class="tx">夏敏</b><svg class=g width=12 height=1><use href=#g118 /></svg><svg class=g width=12 height=1><use href=#g119 /></svg></span><span class="m" style="font-size:12px;letter-spacing:-1.2px">/</span><span class="c"><b class="tx">江灵珊</b><svg class=g width=12 height=1><use href=#g11a /></svg><svg class=g width=12 height=1><use href=#g11b /></svg><svg class=g width=12 height=1><use href=#g11c /></svg></span></div>
<div class="a" style="left:1307px;top:374px;width:92px;height:16px;color:#ff0000;line-height:16px;text-align:left"><span class="m" style="font-size:12px;letter-spacing:-1.2px">230926&nbsp;09:52:38</span></div>
<div class="a" style="left:1402px;top:374px;width:47px;height:16px;color:#ff0000;line-height:16px;text-align:left"><span class="m" style="font-size:12px;letter-spacing:-1.2px">28439795</span></div>
<div class="a" style="left:1452px;top:374px;width:133px;height:16px;color:#ff0000;line-height:16px;text-align:left"><span class="c"><b class="tx">作业治疗</b><svg class=g width=12 height=1><use href=#g129 /></svg><svg class=g width=12 height=1><use href=#g12a /></svg><svg class=g width=12 height=1><use href=#g121 /></svg><svg class=g width=12 height=1><use href=#g122 /></svg></span></div>
<div class="a" style="left:284px;top:391px;width:18px;height:17px;border-right:1px solid #c8c8c8;border-bottom:1px solid #c8c8c8"></div>
<div class="a" style="left:302px;top:391px;width:95px;height:17px;border-right:1px solid #c8c8c8;border-bottom:1px solid #c8c8c8"></div>
<div class="a" style="left:397px;top:391px;width:125px;height:17px;border-right:1px solid #c8c8c8;border-bottom:1px solid #c8c8c8"></div>
<div class="a" style="left:522px;top:391px;width:301px;height:17px;border-right:1px solid #c8c8c8;border-bottom:1px solid #c8c8c8"></div>
<div class="a" style="left:823px;top:391px;width:29px;height:17px;border-right:1px solid #c8c8c8;border-bottom:1px solid #c8c8c8"></div>
<div class="a" style="left:852px;top:391px;width:55px;height:17px;border-right:1px solid #c8c8c8;border-bottom:1px solid #c8c8c8"></div>
<div class="a" style="left:907px;top:391px;width:53px;height:17px;border-right:1px solid #c8c8c8;border-bottom:1px solid #c8c8c8"></div>
<div class="a" style="left:960px;top:391px;width:80px;height:17px;border-right:1px solid #c8c8c8;border-bottom:1px solid #c8c8c8"></div>
<div class="a" style="left:1040px;top:391px;width:85px;height:17px;border-right:1px solid #c8c8c8;border-bottom:1px solid #c8c8c8"></div>
<div class="a" style="left:1125px;top:391px;width:180px;height:17px;border-right:1px solid #c8c8c8;border-bottom:1px solid #c8c8c8"></div>
<div class="a" style="left:1305px;top:391px;width:95px;height:17px;border-right:1px solid #c8c8c8;border-bottom:1px solid #c8c8c8"></div>
<div class="a" style="left:1400px;top:391px;width:50px;height:17px;border-right:1px solid #c8c8c8;border-bottom:1px solid #c8c8c8"></div>
<div class="a" style="left:1450px;top:391px;width:136px;height:17px;border-right:1px solid #c8c8c8;border-bottom:1px solid #c8c8c8"></div>
<div class="a" style="left:270px;top:391px;width:14px;height:17px;background:#f5f1f5;border-right:1px solid #8a8a8a;border-bottom:1px solid #8a8a8a;border-left:1px solid #fff;border-top:1px solid #fff"></div>
<div class="a" style="left:287px;top:391px;width:14px;height:16px;color:#007878;line-height:16px;text-align:left"><span class="c"><b class="tx">长</b><svg class=g width=12 height=1><use href=#g12d /></svg></span></div>
<div class="a" style="left:304px;top:391px;width:92px;height:16px;color:#007878;line-height:16px;text-align:left"><span class="m" style="font-size:12px;letter-spacing:-1.2px">230908&nbsp;17:04:43</span></div>
<div class="a" style="left:399px;top:391px;width:122px;height:16px;color:#007878;line-height:16px;text-align:left"><span class="c"><b class="tx">夏敏</b><svg class=g width=12 height=1><use href=#g118 /></svg><svg class=g width=12 height=1><use href=#g119 /></svg></span><span class="m" style="font-size:12px;letter-spacing:-1.2px">/</span><span class="c"><b class="tx">夏敏</b><svg class=g width=12 height=1><use href=#g118 /></svg><svg class=g width=12 height=1><use href=#g119 /></svg></span><span class="m" style="font-size:12px;letter-spacing:-1.2px">/</span><span class="c"><b class="tx">朱林</b><svg class=g width=12 height=1><use href=#g12e /></svg><svg class=g width=12 height=1><use href=#g93 /></svg></span></div>
<div class="a" style="left:524px;top:391px;width:298px;height:16px;color:#007878;line-height:16px;text-align:left"><span class="c"><b class="tx">康复科一般护理</b><svg class=g width=12 height=1><use href=#g12f /></svg><svg class=g width=12 height=1><use href=#g130 /></svg><svg class=g width=12 height=1><use href=#g115 /></svg><svg class=g width=12 height=1><use href=#g131 /></svg><svg class=g width=12 height=1><use href=#g132 /></svg><svg class=g width=12 height=1><use href=#g13 /></svg><svg class=g width=12 height=1><use href=#g14 /></svg></span></div>
<div class="a" style="left:1307px;top:391px;width:92px;height:16px;color:#007878;line-height:16px;text-align:left"><span class="m" style="font-size:12px;letter-spacing:-1.2px">230908&nbsp;15:46:09</span></div>
<div class="a" style="left:1402px;top:391px;width:47px;height:16px;color:#007878;line-height:16px;text-align:left"><span class="m" style="font-size:12px;letter-spacing:-1.2px">28323803</span></div>
<div class="a" style="left:1452px;top:391px;width:133px;height:16px;color:#007878;line-height:16px;text-align:left"><span class="c"><b class="tx">脑病康复</b><svg class=g width=12 height=1><use href=#g8 /></svg><svg class=g width=12 height=1><use href=#g2e /></svg><svg class=g width=12 height=1><use href=#g12f /></svg><svg class=g width=12 height=1><use href=#g130 /></svg></span></div>
<div class="a" style="left:284px;top:408px;width:18px;height:17px;border-right:1px solid #c8c8c8;border-bottom:1px solid #c8c8c8"></div>
<div class="a" style="left:302px;top:408px;width:95px;height:17px;border-right:1px solid #c8c8c8;border-bottom:1px solid #c8c8c8"></div>
<div class="a" style="left:397px;top:408px;width:125px;height:17px;border-right:1px solid #c8c8c8;border-bottom:1px solid #c8c8c8"></div>
<div class="a" style="left:522px;top:408px;width:301px;height:17px;border-right:1px solid #c8c8c8;border-bottom:1px solid #c8c8c8"></div>
<div class="a" style="left:823px;top:408px;width:29px;height:17px;border-right:1px solid #c8c8c8;border-bottom:1px solid #c8c8c8"></div>
<div class="a" style="left:852px;top:408px;width:55px;height:17px;border-right:1px solid #c8c8c8;border-bottom:1px solid #c8c8c8"></div>
<div class="a" style="left:907px;top:408px;width:53px;height:17px;border-right:1px solid #c8c8c8;border-bottom:1px solid #c8c8c8"></div>
<div class="a" style="left:960px;top:408px;width:80px;height:17px;border-right:1px solid #c8c8c8;border-bottom:1px solid #c8c8c8"></div>
<div class="a" style="left:1040px;top:408px;width:85px;height:17px;border-right:1px solid #c8c8c8;border-bottom:1px solid #c8c8c8"></div>
<div class="a" style="left:1125px;top:408px;width:180px;height:17px;border-right:1px solid #c8c8c8;border-bottom:1px solid #c8c8c8"></div>
<div class="a" style="left:1305px;top:408px;width:95px;height:17px;border-right:1px solid #c8c8c8;border-bottom:1px solid #c8c8c8"></div>
<div class="a" style="left:1400px;top:408px;width:50px;height:17px;border-right:1px solid #c8c8c8;border-bottom:1px solid #c8c8c8"></div>
<div class="a" style="left:1450px;top:408px;width:136px;height:17px;border-right:1px solid #c8c8c8;border-bottom:1px solid #c8c8c8"></div>
<div class="a" style="left:270px;top:408px;width:14px;height:17px;background:#f5f1f5;border-right:1px solid #8a8a8a;border-bottom:1px solid #8a8a8a;border-left:1px solid #fff;border-top:1px solid #fff"></div>
<div class="a" style="left:287px;top:408px;width:14px;height:16px;color:#000000;line-height:16px;text-align:left"><span class="c"><b class="tx">长</b><svg class=g width=12 height=1><use href=#g12d /></svg></span></div>
<div class="a" style="left:304px;top:408px;width:92px;height:16px;color:#000000;line-height:16px;text-align:left"><span class="m" style="font-size:12px;letter-spacing:-1.2px">230908&nbsp;17:04:43</span></div>
<div class="a" style="left:399px;top:408px;width:122px;height:16px;color:#000000;line-height:16px;text-align:left"><span class="c"><b class="tx">夏敏</b><svg class=g width=12 height=1><use href=#g118 /></svg><svg class=g width=12 height=1><use href=#g119 /></svg></span><span class="m" style="font-size:12px;letter-spacing:-1.2px">/</span><span class="c"><b class="tx">夏敏</b><svg class=g width=12 height=1><use href=#g118 /></svg><svg class=g width=12 height=1><use href=#g119 /></svg></span><span class="m" style="font-size:12px;letter-spacing:-1.2px">/</span><span class="c"><b class="tx">朱林</b><svg class=g width=12 height=1><use href=#g12e /></svg><svg class=g width=12 height=1><use href=#g93 /></svg></span></div>
<div class="a" style="left:524px;top:408px;width:298px;height:16px;color:#000000;line-height:16px;text-align:left"><span class="c"><b class="tx">一级护理</b><svg class=g width=12 height=1><use href=#g131 /></svg><svg class=g width=12 height=1><use href=#g3f /></svg><svg class=g width=12 height=1><use href=#g13 /></svg><svg class=g width=12 height=1><use href=#g14 /></svg></span></div>
<div class="a" style="left:1307px;top:408px;width:92px;height:16px;color:#000000;line-height:16px;text-align:left"><span class="m" style="font-size:12px;letter-spacing:-1.2px">230908&nbsp;15:46:09</span></div>
<div class="a" style="left:1402px;top:408px;width:47px;height:16px;color:#000000;line-height:16px;text-align:left"><span class="m" style="font-size:12px;letter-spacing:-1.2px">28323804</span></div>
<div class="a" style="left:1452px;top:408px;width:133px;height:16px;color:#000000;line-height:16px;text-align:left"><span class="c"><b class="tx">脑病康复</b><svg class=g width=12 height=1><use href=#g8 /></svg><svg class=g width=12 height=1><use href=#g2e /></svg><svg class=g width=12 height=1><use href=#g12f /></svg><svg class=g width=12 height=1><use href=#g130 /></svg></span></div>
<div class="a" style="left:284px;top:425px;width:18px;height:17px;border-right:1px solid #c8c8c8;border-bottom:1px solid #c8c8c8"></div>
<div class="a" style="left:302px;top:425px;width:95px;height:17px;border-right:1px solid #c8c8c8;border-bottom:1px solid #c8c8c8"></div>
<div class="a" style="left:397px;top:425px;width:125px;height:17px;border-right:1px solid #c8c8c8;border-bottom:1px solid #c8c8c8"></div>
<div class="a" style="left:522px;top:425px;width:301px;height:17px;border-right:1px solid #c8c8c8;border-bottom:1px solid #c8c8c8"></div>
<div class="a" style="left:823px;top:425px;width:29px;height:17px;border-right:1px solid #c8c8c8;border-bottom:1px solid #c8c8c8"></div>
<div class="a" style="left:852px;top:425px;width:55px;height:17px;border-right:1px solid #c8c8c8;border-bottom:1px solid #c8c8c8"></div>
<div class="a" style="left:907px;top:425px;width:53px;height:17px;border-right:1px solid #c8c8c8;border-bottom:1px solid #c8c8c8"></div>
<div class="a" style="left:960px;top:425px;width:80px;height:17px;border-right:1px solid #c8c8c8;border-bottom:1px solid #c8c8c8"></div>
<div class="a" style="left:1040px;top:425px;width:85px;height:17px;border-right:1px solid #c8c8c8;border-bottom:1px solid #c8c8c8"></div>
<div class="a" style="left:1125px;top:425px;width:180px;height:17px;border-right:1px solid #c8c8c8;border-bottom:1px solid #c8c8c8"></div>
<div class="a" style="left:1305px;top:425px;width:95px;height:17px;border-right:1px solid #c8c8c8;border-bottom:1px solid #c8c8c8"></div>
<div class="a" style="left:1400px;top:425px;width:50px;height:17px;border-right:1px solid #c8c8c8;border-bottom:1px solid #c8c8c8"></div>
<div class="a" style="left:1450px;top:425px;width:136px;height:17px;border-right:1px solid #c8c8c8;border-bottom:1px solid #c8c8c8"></div>
<div class="a" style="left:270px;top:425px;width:14px;height:17px;background:#f5f1f5;border-right:1px solid #8a8a8a;border-bottom:1px solid #8a8a8a;border-left:1px solid #fff;border-top:1px solid #fff"></div>
<div class="a" style="left:287px;top:425px;width:14px;height:16px;color:#007878;line-height:16px;text-align:left"><span class="c"><b class="tx">长</b><svg class=g width=12 height=1><use href=#g12d /></svg></span></div>
<div class="a" style="left:304px;top:425px;width:92px;height:16px;color:#007878;line-height:16px;text-align:left"><span class="m" style="font-size:12px;letter-spacing:-1.2px">230908&nbsp;17:04:43</span></div>
<div class="a" style="left:399px;top:425px;width:122px;height:16px;color:#007878;line-height:16px;text-align:left"><span class="c"><b class="tx">夏敏</b><svg class=g width=12 height=1><use href=#g118 /></svg><svg class=g width=12 height=1><use href=#g119 /></svg></span><span class="m" style="font-size:12px;letter-spacing:-1.2px">/</span><span class="c"><b class="tx">夏敏</b><svg class=g width=12 height=1><use href=#g118 /></svg><svg class=g width=12 height=1><use href=#g119 /></svg></span><span class="m" style="font-size:12px;letter-spacing:-1.2px">/</span><span class="c"><b class="tx">朱林</b><svg class=g width=12 height=1><use href=#g12e /></svg><svg class=g width=12 height=1><use href=#g93 /></svg></span></div>
<div class="a" style="left:524px;top:425px;width:298px;height:16px;color:#007878;line-height:16px;text-align:left"><span class="c"><b class="tx">测</b><svg class=g width=12 height=1><use href=#g133 /></svg></span><span class="m" style="font-size:12px;letter-spacing:-1.2px">BP</span><span class="c"><b class="tx">、</b><svg class=g width=12 height=1><use href=#g134 /></svg></span><span class="m" style="font-size:12px;letter-spacing:-1.2px">P&nbsp;bid</span></div>
<div class="a" style="left:1307px;top:425px;width:92px;height:16px;color:#007878;line-height:16px;text-align:left"><span class="m" style="font-size:12px;letter-spacing:-1.2px">230908&nbsp;15:46:09</span></div>
<div class="a" style="left:1402px;top:425px;width:47px;height:16px;color:#007878;line-height:16px;text-align:left"><span class="m" style="font-size:12px;letter-spacing:-1.2px">28323805</span></div>
<div class="a" style="left:1452px;top:425px;width:133px;height:16px;color:#007878;line-height:16px;text-align:left"><span class="c"><b class="tx">脑病康复</b><svg class=g width=12 height=1><use href=#g8 /></svg><svg class=g width=12 height=1><use href=#g2e /></svg><svg class=g width=12 height=1><use href=#g12f /></svg><svg class=g width=12 height=1><use href=#g130 /></svg></span></div>
<div class="a" style="left:284px;top:442px;width:18px;height:17px;border-right:1px solid #c8c8c8;border-bottom:1px solid #c8c8c8"></div>
<div class="a" style="left:302px;top:442px;width:95px;height:17px;border-right:1px solid #c8c8c8;border-bottom:1px solid #c8c8c8"></div>
<div class="a" style="left:397px;top:442px;width:125px;height:17px;border-right:1px solid #c8c8c8;border-bottom:1px solid #c8c8c8"></div>
<div class="a" style="left:522px;top:442px;width:301px;height:17px;border-right:1px solid #c8c8c8;border-bottom:1px solid #c8c8c8"></div>
<div class="a" style="left:823px;top:442px;width:29px;height:17px;border-right:1px solid #c8c8c8;border-bottom:1px solid #c8c8c8"></div>
<div class="a" style="left:852px;top:442px;width:55px;height:17px;border-right:1px solid #c8c8c8;border-bottom:1px solid #c8c8c8"></div>
<div class="a" style="left:907px;top:442px;width:53px;height:17px;border-right:1px solid #c8c8c8;border-bottom:1px solid #c8c8c8"></div>
<div class="a" style="left:960px;top:442px;width:80px;height:17px;border-right:1px solid #c8c8c8;border-bottom:1px solid #c8c8c8"></div>
<div class="a" style="left:1040px;top:442px;width:85px;height:17px;border-right:1px solid #c8c8c8;border-bottom:1px solid #c8c8c8"></div>
<div class="a" style="left:1125px;top:442px;width:180px;height:17px;border-right:1px solid #c8c8c8;border-bottom:1px solid #c8c8c8"></div>
<div class="a" style="left:1305px;top:442px;width:95px;height:17px;border-right:1px solid #c8c8c8;border-bottom:1px solid #c8c8c8"></div>
<div class="a" style="left:1400px;top:442px;width:50px;height:17px;border-right:1px solid #c8c8c8;border-bottom:1px solid #c8c8c8"></div>
<div class="a" style="left:1450px;top:442px;width:136px;height:17px;border-right:1px solid #c8c8c8;border-bottom:1px solid #c8c8c8"></div>
<div class="a" style="left:270px;top:442px;width:14px;height:17px;background:#f5f1f5;border-right:1px solid #8a8a8a;border-bottom:1px solid #8a8a8a;border-left:1px solid #fff;border-top:1px solid #fff"></div>
<div class="a" style="left:287px;top:442px;width:14px;height:16px;color:#007878;line-height:16px;text-align:left"><span class="c"><b class="tx">长</b><svg class=g width=12 height=1><use href=#g12d /></svg></span></div>
<div class="a" style="left:304px;top:442px;width:92px;height:16px;color:#007878;line-height:16px;text-align:left"><span class="m" style="font-size:12px;letter-spacing:-1.2px">230908&nbsp;17:04:43</span></div>
<div class="a" style="left:399px;top:442px;width:122px;height:16px;color:#007878;line-height:16px;text-align:left"><span class="c"><b class="tx">夏敏</b><svg class=g width=12 height=1><use href=#g118 /></svg><svg class=g width=12 height=1><use href=#g119 /></svg></span><span class="m" style="font-size:12px;letter-spacing:-1.2px">/</span><span class="c"><b class="tx">夏敏</b><svg class=g width=12 height=1><use href=#g118 /></svg><svg class=g width=12 height=1><use href=#g119 /></svg></span><span class="m" style="font-size:12px;letter-spacing:-1.2px">/</span><span class="c"><b class="tx">朱林</b><svg class=g width=12 height=1><use href=#g12e /></svg><svg class=g width=12 height=1><use href=#g93 /></svg></span></div>
<div class="a" style="left:524px;top:442px;width:298px;height:16px;color:#007878;line-height:16px;text-align:left"><span class="c"><b class="tx">留伴</b><svg class=g width=12 height=1><use href=#g135 /></svg><svg class=g width=12 height=1><use href=#g136 /></svg></span><span class="m" style="font-size:12px;letter-spacing:-1.2px">1</span><span class="c"><b class="tx">人</b><svg class=g width=12 height=1><use href=#g7b /></svg></span></div>
<div class="a" style="left:1307px;top:442px;width:92px;height:16px;color:#007878;line-height:16px;text-align:left"><span class="m" style="font-size:12px;letter-spacing:-1.2px">230908&nbsp;15:46:09</span></div>
<div class="a" style="left:1402px;top:442px;width:47px;height:16px;color:#007878;line-height:16px;text-align:left"><span class="m" style="font-size:12px;letter-spacing:-1.2px">28323806</span></div>
<div class="a" style="left:1452px;top:442px;width:133px;height:16px;color:#007878;line-height:16px;text-align:left"><span class="c"><b class="tx">脑病康复</b><svg class=g width=12 height=1><use href=#g8 /></svg><svg class=g width=12 height=1><use href=#g2e /></svg><svg class=g width=12 height=1><use href=#g12f /></svg><svg class=g width=12 height=1><use href=#g130 /></svg></span></div>
<div class="a" style="left:284px;top:459px;width:18px;height:17px;border-right:1px solid #c8c8c8;border-bottom:1px solid #c8c8c8"></div>
<div class="a" style="left:302px;top:459px;width:95px;height:17px;border-right:1px solid #c8c8c8;border-bottom:1px solid #c8c8c8"></div>
<div class="a" style="left:397px;top:459px;width:125px;height:17px;border-right:1px solid #c8c8c8;border-bottom:1px solid #c8c8c8"></div>
<div class="a" style="left:522px;top:459px;width:301px;height:17px;border-right:1px solid #c8c8c8;border-bottom:1px solid #c8c8c8"></div>
<div class="a" style="left:823px;top:459px;width:29px;height:17px;border-right:1px solid #c8c8c8;border-bottom:1px solid #c8c8c8"></div>
<div class="a" style="left:852px;top:459px;width:55px;height:17px;border-right:1px solid #c8c8c8;border-bottom:1px solid #c8c8c8"></div>
<div class="a" style="left:907px;top:459px;width:53px;height:17px;border-right:1px solid #c8c8c8;border-bottom:1px solid #c8c8c8"></div>
<div class="a" style="left:960px;top:459px;width:80px;height:17px;border-right:1px solid #c8c8c8;border-bottom:1px solid #c8c8c8"></div>
<div class="a" style="left:1040px;top:459px;width:85px;height:17px;border-right:1px solid #c8c8c8;border-bottom:1px solid #c8c8c8"></div>
<div class="a" style="left:1125px;top:459px;width:180px;height:17px;border-right:1px solid #c8c8c8;border-bottom:1px solid #c8c8c8"></div>
<div class="a" style="left:1305px;top:459px;width:95px;height:17px;border-right:1px solid #c8c8c8;border-bottom:1px solid #c8c8c8"></div>
<div class="a" style="left:1400px;top:459px;width:50px;height:17px;border-right:1px solid #c8c8c8;border-bottom:1px solid #c8c8c8"></div>
<div class="a" style="left:1450px;top:459px;width:136px;height:17px;border-right:1px solid #c8c8c8;border-bottom:1px solid #c8c8c8"></div>
<div class="a" style="left:270px;top:459px;width:14px;height:17px;background:#f5f1f5;border-right:1px solid #8a8a8a;border-bottom:1px solid #8a8a8a;border-left:1px solid #fff;border-top:1px solid #fff"></div>
<div class="a" style="left:287px;top:459px;width:14px;height:16px;color:#007878;line-height:16px;text-align:left"><span class="c"><b class="tx">长</b><svg class=g width=12 height=1><use href=#g12d /></svg></span></div>
<div class="a" style="left:304px;top:459px;width:92px;height:16px;color:#007878;line-height:16px;text-align:left"><span class="m" style="font-size:12px;letter-spacing:-1.2px">230908&nbsp;17:04:43</span></div>
<div class="a" style="left:399px;top:459px;width:122px;height:16px;color:#007878;line-height:16px;text-align:left"><span class="c"><b class="tx">夏敏</b><svg class=g width=12 height=1><use href=#g118 /></svg><svg class=g width=12 height=1><use href=#g119 /></svg></span><span class="m" style="font-size:12px;letter-spacing:-1.2px">/</span><span class="c"><b class="tx">夏敏</b><svg class=g width=12 height=1><use href=#g118 /></svg><svg class=g width=12 height=1><use href=#g119 /></svg></span><span class="m" style="font-size:12px;letter-spacing:-1.2px">/</span><span class="c"><b class="tx">朱林</b><svg class=g width=12 height=1><use href=#g12e /></svg><svg class=g width=12 height=1><use href=#g93 /></svg></span></div>
<div class="a" style="left:524px;top:459px;width:298px;height:16px;color:#007878;line-height:16px;text-align:left"><span class="c"><b class="tx">预防褥疮护理</b><svg class=g width=12 height=1><use href=#g75 /></svg><svg class=g width=12 height=1><use href=#g137 /></svg><svg class=g width=12 height=1><use href=#g138 /></svg><svg class=g width=12 height=1><use href=#g139 /></svg><svg class=g width=12 height=1><use href=#g13 /></svg><svg class=g width=12 height=1><use href=#g14 /></svg></span></div>
<div class="a" style="left:1307px;top:459px;width:92px;height:16px;color:#007878;line-height:16px;text-align:left"><span class="m" style="font-size:12px;letter-spacing:-1.2px">230908&nbsp;15:46:29</span></div>
<div class="a" style="left:1402px;top:459px;width:47px;height:16px;color:#007878;line-height:16px;text-align:left"><span class="m" style="font-size:12px;letter-spacing:-1.2px">28323809</span></div>
<div class="a" style="left:1452px;top:459px;width:133px;height:16px;color:#007878;line-height:16px;text-align:left"><span class="c"><b class="tx">脑病康复</b><svg class=g width=12 height=1><use href=#g8 /></svg><svg class=g width=12 height=1><use href=#g2e /></svg><svg class=g width=12 height=1><use href=#g12f /></svg><svg class=g width=12 height=1><use href=#g130 /></svg></span></div>
<div class="a" style="left:284px;top:476px;width:18px;height:17px;border-right:1px solid #c8c8c8;border-bottom:1px solid #c8c8c8"></div>
<div class="a" style="left:302px;top:476px;width:95px;height:17px;border-right:1px solid #c8c8c8;border-bottom:1px solid #c8c8c8"></div>
<div class="a" style="left:397px;top:476px;width:125px;height:17px;border-right:1px solid #c8c8c8;border-bottom:1px solid #c8c8c8"></div>
<div class="a" style="left:522px;top:476px;width:301px;height:17px;border-right:1px solid #c8c8c8;border-bottom:1px solid #c8c8c8"></div>
<div class="a" style="left:823px;top:476px;width:29px;height:17px;border-right:1px solid #c8c8c8;border-bottom:1px solid #c8c8c8"></div>
<div class="a" style="left:852px;top:476px;width:55px;height:17px;border-right:1px solid #c8c8c8;border-bottom:1px solid #c8c8c8"></div>
<div class="a" style="left:907px;top:476px;width:53px;height:17px;border-right:1px solid #c8c8c8;border-bottom:1px solid #c8c8c8"></div>
<div class="a" style="left:960px;top:476px;width:80px;height:17px;border-right:1px solid #c8c8c8;border-bottom:1px solid #c8c8c8"></div>
<div class="a" style="left:1040px;top:476px;width:85px;height:17px;border-right:1px solid #c8c8c8;border-bottom:1px solid #c8c8c8"></div>
<div class="a" style="left:1125px;top:476px;width:180px;height:17px;border-right:1px solid #c8c8c8;border-bottom:1px solid #c8c8c8"></div>
<div class="a" style="left:1305px;top:476px;width:95px;height:17px;border-right:1px solid #c8c8c8;border-bottom:1px solid #c8c8c8"></div>
<div class="a" style="left:1400px;top:476px;width:50px;height:17px;border-right:1px solid #c8c8c8;border-bottom:1px solid #c8c8c8"></div>
<div class="a" style="left:1450px;top:476px;width:136px;height:17px;border-right:1px solid #c8c8c8;border-bottom:1px solid #c8c8c8"></div>
<div class="a" style="left:270px;top:476px;width:14px;height:17px;background:#f5f1f5;border-right:1px solid #8a8a8a;border-bottom:1px solid #8a8a8a;border-left:1px solid #fff;border-top:1px solid #fff"></div>
<div class="a" style="left:287px;top:476px;width:14px;height:16px;color:#007878;line-height:16px;text-align:left"><span class="c"><b class="tx">长</b><svg class=g width=12 height=1><use href=#g12d /></svg></span></div>
<div class="a" style="left:304px;top:476px;width:92px;height:16px;color:#007878;line-height:16px;text-align:left"><span class="m" style="font-size:12px;letter-spacing:-1.2px">230908&nbsp;17:04:43</span></div>
<div class="a" style="left:399px;top:476px;width:122px;height:16px;color:#007878;line-height:16px;text-align:left"><span class="c"><b class="tx">夏敏</b><svg class=g width=12 height=1><use href=#g118 /></svg><svg class=g width=12 height=1><use href=#g119 /></svg></span><span class="m" style="font-size:12px;letter-spacing:-1.2px">/</span><span class="c"><b class="tx">夏敏</b><svg class=g width=12 height=1><use href=#g118 /></svg><svg class=g width=12 height=1><use href=#g119 /></svg></span><span class="m" style="font-size:12px;letter-spacing:-1.2px">/</span><span class="c"><b class="tx">朱林</b><svg class=g width=12 height=1><use href=#g12e /></svg><svg class=g width=12 height=1><use href=#g93 /></svg></span></div>
<div class="a" style="left:524px;top:476px;width:298px;height:16px;color:#007878;line-height:16px;text-align:left"><span class="c"><b class="tx">低盐饮食</b><svg class=g width=12 height=1><use href=#g13a /></svg><svg class=g width=12 height=1><use href=#g13b /></svg><svg class=g width=12 height=1><use href=#g13c /></svg><svg class=g width=12 height=1><use href=#g13d /></svg></span></div>
<div class="a" style="left:1307px;top:476px;width:92px;height:16px;color:#007878;line-height:16px;text-align:left"><span class="m" style="font-size:12px;letter-spacing:-1.2px">230908&nbsp;15:46:29</span></div>
<div class="a" style="left:1402px;top:476px;width:47px;height:16px;color:#007878;line-height:16px;text-align:left"><span class="m" style="font-size:12px;letter-spacing:-1.2px">28323810</span></div>
<div class="a" style="left:1452px;top:476px;width:133px;height:16px;color:#007878;line-height:16px;text-align:left"><span class="c"><b class="tx">脑病康复</b><svg class=g width=12 height=1><use href=#g8 /></svg><svg class=g width=12 height=1><use href=#g2e /></svg><svg class=g width=12 height=1><use href=#g12f /></svg><svg class=g width=12 height=1><use href=#g130 /></svg></span></div>
<div class="a" style="left:284px;top:493px;width:18px;height:17px;border-right:1px solid #c8c8c8;border-bottom:1px solid #c8c8c8"></div>
<div class="a" style="left:302px;top:493px;width:95px;height:17px;border-right:1px solid #c8c8c8;border-bottom:1px solid #c8c8c8"></div>
<div class="a" style="left:397px;top:493px;width:125px;height:17px;border-right:1px solid #c8c8c8;border-bottom:1px solid #c8c8c8"></div>
<div class="a" style="left:522px;top:493px;width:301px;height:17px;border-right:1px solid #c8c8c8;border-bottom:1px solid #c8c8c8"></div>
<div class="a" style="left:823px;top:493px;width:29px;height:17px;border-right:1px solid #c8c8c8;border-bottom:1px solid #c8c8c8"></div>
<div class="a" style="left:852px;top:493px;width:55px;height:17px;border-right:1px solid #c8c8c8;border-bottom:1px solid #c8c8c8"></div>
<div class="a" style="left:907px;top:493px;width:53px;height:17px;border-right:1px solid #c8c8c8;border-bottom:1px solid #c8c8c8"></div>
<div class="a" style="left:960px;top:493px;width:80px;height:17px;border-right:1px solid #c8c8c8;border-bottom:1px solid #c8c8c8"></div>
<div class="a" style="left:1040px;top:493px;width:85px;height:17px;border-right:1px solid #c8c8c8;border-bottom:1px solid #c8c8c8"></div>
<div class="a" style="left:1125px;top:493px;width:180px;height:17px;border-right:1px solid #c8c8c8;border-bottom:1px solid #c8c8c8"></div>
<div class="a" style="left:1305px;top:493px;width:95px;height:17px;border-right:1px solid #c8c8c8;border-bottom:1px solid #c8c8c8"></div>
<div class="a" style="left:1400px;top:493px;width:50px;height:17px;border-right:1px solid #c8c8c8;border-bottom:1px solid #c8c8c8"></div>
<div class="a" style="left:1450px;top:493px;width:136px;height:17px;border-right:1px solid #c8c8c8;border-bottom:1px solid #c8c8c8"></div>
<div class="a" style="left:270px;top:493px;width:14px;height:17px;background:#f5f1f5;border-right:1px solid #8a8a8a;border-bottom:1px solid #8a8a8a;border-left:1px solid #fff;border-top:1px solid #fff"></div>
<div class="a" style="left:287px;top:493px;width:14px;height:16px;color:#007878;line-height:16px;text-align:left"><span class="c"><b class="tx">长</b><svg class=g width=12 height=1><use href=#g12d /></svg></span></div>
<div class="a" style="left:304px;top:493px;width:92px;height:16px;color:#007878;line-height:16px;text-align:left"><span class="m" style="font-size:12px;letter-spacing:-1.2px">230908&nbsp;17:04:43</span></div>
<div class="a" style="left:399px;top:493px;width:122px;height:16px;color:#007878;line-height:16px;text-align:left"><span class="c"><b class="tx">夏敏</b><svg class=g width=12 height=1><use href=#g118 /></svg><svg class=g width=12 height=1><use href=#g119 /></svg></span><span class="m" style="font-size:12px;letter-spacing:-1.2px">/</span><span class="c"><b class="tx">夏敏</b><svg class=g width=12 height=1><use href=#g118 /></svg><svg class=g width=12 height=1><use href=#g119 /></svg></span><span class="m" style="font-size:12px;letter-spacing:-1.2px">/</span><span class="c"><b class="tx">朱林</b><svg class=g width=12 height=1><use href=#g12e /></svg><svg class=g width=12 height=1><use href=#g93 /></svg></span></div>
<div class="a" style="left:524px;top:493px;width:298px;height:16px;color:#007878;line-height:16px;text-align:left"><span class="c"><b class="tx">耳针</b><svg class=g width=12 height=1><use href=#g13e /></svg><svg class=g width=12 height=1><use href=#g13f /></svg></span><span class="m" style="font-size:12px;letter-spacing:-1.2px">&nbsp;&nbsp;</span><span class="c"><b class="tx">每周</b><svg class=g width=12 height=1><use href=#g140 /></svg><svg class=g width=12 height=1><use href=#g141 /></svg></span><span class="m" style="font-size:12px;letter-spacing:-1.2px">2</span><span class="c"><b class="tx">次</b><svg class=g width=12 height=1><use href=#g142 /></svg></span></div>
<div class="a" style="left:1307px;top:493px;width:92px;height:16px;color:#007878;line-height:16px;text-align:left"><span class="m" style="font-size:12px;letter-spacing:-1.2px">230908&nbsp;16:45:59</span></div>
<div class="a" style="left:1402px;top:493px;width:47px;height:16px;color:#007878;line-height:16px;text-align:left"><span class="m" style="font-size:12px;letter-spacing:-1.2px">28324668</span></div>
<div class="a" style="left:1452px;top:493px;width:133px;height:16px;color:#007878;line-height:16px;text-align:left"><span class="c"><b class="tx">脑病康复</b><svg class=g width=12 height=1><use href=#g8 /></svg><svg class=g width=12 height=1><use href=#g2e /></svg><svg class=g width=12 height=1><use href=#g12f /></svg><svg class=g width=12 height=1><use href=#g130 /></svg></span></div>
<div class="a" style="left:284px;top:510px;width:18px;height:17px;border-right:1px solid #c8c8c8;border-bottom:1px solid #c8c8c8"></div>
<div class="a" style="left:302px;top:510px;width:95px;height:17px;border-right:1px solid #c8c8c8;border-bottom:1px solid #c8c8c8"></div>
<div class="a" style="left:397px;top:510px;width:125px;height:17px;border-right:1px solid #c8c8c8;border-bottom:1px solid #c8c8c8"></div>
<div class="a" style="left:522px;top:510px;width:301px;height:17px;border-right:1px solid #c8c8c8;border-bottom:1px solid #c8c8c8"></div>
<div class="a" style="left:823px;top:510px;width:29px;height:17px;border-right:1px solid #c8c8c8;border-bottom:1px solid #c8c8c8"></div>
<div class="a" style="left:852px;top:510px;width:55px;height:17px;border-right:1px solid #c8c8c8;border-bottom:1px solid #c8c8c8"></div>
<div class="a" style="left:907px;top:510px;width:53px;height:17px;border-right:1px solid #c8c8c8;border-bottom:1px solid #c8c8c8"></div>
<div class="a" style="left:960px;top:510px;width:80px;height:17px;border-right:1px solid #c8c8c8;border-bottom:1px solid #c8c8c8"></div>
<div class="a" style="left:1040px;top:510px;width:85px;height:17px;border-right:1px solid #c8c8c8;border-bottom:1px solid #c8c8c8"></div>
<div class="a" style="left:1125px;top:510px;width:180px;height:17px;border-right:1px solid #c8c8c8;border-bottom:1px solid #c8c8c8"></div>
<div class="a" style="left:1305px;top:510px;width:95px;height:17px;border-right:1px solid #c8c8c8;border-bottom:1px solid #c8c8c8"></div>
<div class="a" style="left:1400px;top:510px;width:50px;height:17px;border-right:1px solid #c8c8c8;border-bottom:1px solid #c8c8c8"></div>
<div class="a" style="left:1450px;top:510px;width:136px;height:17px;border-right:1px solid #c8c8c8;border-bottom:1px solid #c8c8c8"></div>
<div class="a" style="left:270px;top:510px;width:14px;height:17px;background:#f5f1f5;border-right:1px solid #8a8a8a;border-bottom:1px solid #8a8a8a;border-left:1px solid #fff;border-top:1px solid #fff"></div>
<div class="a" style="left:287px;top:510px;width:14px;height:16px;color:#007878;line-height:16px;text-align:left"><span class="c"><b class="tx">长</b><svg class=g width=12 height=1><use href=#g12d /></svg></span></div>
<div class="a" style="left:304px;top:510px;width:92px;height:16px;color:#007878;line-height:16px;text-align:left"><span class="m" style="font-size:12px;letter-spacing:-1.2px">230908&nbsp;17:04:43</span></div>
<div class="a" style="left:399px;top:510px;width:122px;height:16px;color:#007878;line-height:16px;text-align:left"><span class="c"><b class="tx">夏敏</b><svg class=g width=12 height=1><use href=#g118 /></svg><svg class=g width=12 height=1><use href=#g119 /></svg></span><span class="m" style="font-size:12px;letter-spacing:-1.2px">/</span><span class="c"><b class="tx">夏敏</b><svg class=g width=12 height=1><use href=#g118 /></svg><svg class=g width=12 height=1><use href=#g119 /></svg></span><span class="m" style="font-size:12px;letter-spacing:-1.2px">/</span><span class="c"><b class="tx">朱林</b><svg class=g width=12 height=1><use href=#g12e /></svg><svg class=g width=12 height=1><use href=#g93 /></svg></span></div>
<div class="a" style="left:524px;top:510px;width:298px;height:16px;color:#007878;line-height:16px;text-align:left"><span class="c"><b class="tx">普通针刺</b><svg class=g width=12 height=1><use href=#g143 /></svg><svg class=g width=12 height=1><use href=#g144 /></svg><svg class=g width=12 height=1><use href=#g13f /></svg><svg class=g width=12 height=1><use href=#g145 /></svg></span><span class="m" style="font-size:12px;letter-spacing:-1.2px">&nbsp;w5</span></div>
<div class="a" style="left:1307px;top:510px;width:92px;height:16px;color:#007878;line-height:16px;text-align:left"><span class="m" style="font-size:12px;letter-spacing:-1.2px">230908&nbsp;16:46:07</span></div>
<div class="a" style="left:1402px;top:510px;width:47px;height:16px;color:#007878;line-height:16px;text-align:left"><span class="m" style="font-size:12px;letter-spacing:-1.2px">28324669</span></div>
<div class="a" style="left:1452px;top:510px;width:133px;height:16px;color:#007878;line-height:16px;text-align:left"><span class="c"><b class="tx">脑病康复</b><svg class=g width=12 height=1><use href=#g8 /></svg><svg class=g width=12 height=1><use href=#g2e /></svg><svg class=g width=12 height=1><use href=#g12f /></svg><svg class=g width=12 height=1><use href=#g130 /></svg></span></div>
<div class="a" style="left:284px;top:527px;width:18px;height:17px;border-right:1px solid #c8c8c8;border-bottom:1px solid #c8c8c8"></div>
<div class="a" style="left:302px;top:527px;width:95px;height:17px;border-right:1px solid #c8c8c8;border-bottom:1px solid #c8c8c8"></div>
<div class="a" style="left:397px;top:527px;width:125px;height:17px;border-right:1px solid #c8c8c8;border-bottom:1px solid #c8c8c8"></div>
<div class="a" style="left:522px;top:527px;width:301px;height:17px;border-right:1px solid #c8c8c8;border-bottom:1px solid #c8c8c8"></div>
<div class="a" style="left:823px;top:527px;width:29px;height:17px;border-right:1px solid #c8c8c8;border-bottom:1px solid #c8c8c8"></div>
<div class="a" style="left:852px;top:527px;width:55px;height:17px;border-right:1px solid #c8c8c8;border-bottom:1px solid #c8c8c8"></div>
<div class="a" style="left:907px;top:527px;width:53px;height:17px;border-right:1px solid #c8c8c8;border-bottom:1px solid #c8c8c8"></div>
<div class="a" style="left:960px;top:527px;width:80px;height:17px;border-right:1px solid #c8c8c8;border-bottom:1px solid #c8c8c8"></div>
<div class="a" style="left:1040px;top:527px;width:85px;height:17px;border-right:1px solid #c8c8c8;border-bottom:1px solid #c8c8c8"></div>
<div class="a" style="left:1125px;top:527px;width:180px;height:17px;border-right:1px solid #c8c8c8;border-bottom:1px solid #c8c8c8"></div>
<div class="a" style="left:1305px;top:527px;width:95px;height:17px;border-right:1px solid #c8c8c8;border-bottom:1px solid #c8c8c8"></div>
<div class="a" style="left:1400px;top:527px;width:50px;height:17px;border-right:1px solid #c8c8c8;border-bottom:1px solid #c8c8c8"></div>
<div class="a" style="left:1450px;top:527px;width:136px;height:17px;border-right:1px solid #c8c8c8;border-bottom:1px solid #c8c8c8"></div>
<div class="a" style="left:270px;top:527px;width:14px;height:17px;background:#f5f1f5;border-right:1px solid #8a8a8a;border-bottom:1px solid #8a8a8a;border-left:1px solid #fff;border-top:1px solid #fff"></div>
<div class="a" style="left:287px;top:527px;width:14px;height:16px;color:#007878;line-height:16px;text-align:left"><span class="c"><b class="tx">长</b><svg class=g width=12 height=1><use href=#g12d /></svg></span></div>
<div class="a" style="left:304px;top:527px;width:92px;height:16px;color:#007878;line-height:16px;text-align:left"><span class="m" style="font-size:12px;letter-spacing:-1.2px">230908&nbsp;17:04:43</span></div>
<div class="a" style="left:399px;top:527px;width:122px;height:16px;color:#007878;line-height:16px;text-align:left"><span class="c"><b class="tx">夏敏</b><svg class=g width=12 height=1><use href=#g118 /></svg><svg class=g width=12 height=1><use href=#g119 /></svg></span><span class="m" style="font-size:12px;letter-spacing:-1.2px">/</span><span class="c"><b class="tx">夏敏</b><svg class=g width=12 height=1><use href=#g118 /></svg><svg class=g width=12 height=1><use href=#g119 /></svg></span><span class="m" style="font-size:12px;letter-spacing:-1.2px">/</span><span class="c"><b class="tx">朱林</b><svg class=g width=12 height=1><use href=#g12e /></svg><svg class=g width=12 height=1><use href=#g93 /></svg></span></div>
<div class="a" style="left:524px;top:527px;width:298px;height:16px;color:#007878;line-height:16px;text-align:left"><span class="c"><b class="tx">针刺运动疗法</b><svg class=g width=12 height=1><use href=#g13f /></svg><svg class=g width=12 height=1><use href=#g145 /></svg><svg class=g width=12 height=1><use href=#g146 /></svg><svg class=g width=12 height=1><use href=#g51 /></svg><svg class=g width=12 height=1><use href=#g122 /></svg><svg class=g width=12 height=1><use href=#g147 /></svg></span></div>
<div class="a" style="left:1307px;top:527px;width:92px;height:16px;color:#007878;line-height:16px;text-align:left"><span class="m" style="font-size:12px;letter-spacing:-1.2px">230908&nbsp;16:46:07</span></div>
<div class="a" style="left:1402px;top:527px;width:47px;height:16px;color:#007878;line-height:16px;text-align:left"><span class="m" style="font-size:12px;letter-spacing:-1.2px">28324670</span></div>
<div class="a" style="left:1452px;top:527px;width:133px;height:16px;color:#007878;line-height:16px;text-align:left"><span class="c"><b class="tx">脑病康复</b><svg class=g width=12 height=1><use href=#g8 /></svg><svg class=g width=12 height=1><use href=#g2e /></svg><svg class=g width=12 height=1><use href=#g12f /></svg><svg class=g width=12 height=1><use href=#g130 /></svg></span></div>
<div class="a" style="left:284px;top:544px;width:18px;height:17px;border-right:1px solid #c8c8c8;border-bottom:1px solid #c8c8c8"></div>
<div class="a" style="left:302px;top:544px;width:95px;height:17px;border-right:1px solid #c8c8c8;border-bottom:1px solid #c8c8c8"></div>
<div class="a" style="left:397px;top:544px;width:125px;height:17px;border-right:1px solid #c8c8c8;border-bottom:1px solid #c8c8c8"></div>
<div class="a" style="left:522px;top:544px;width:301px;height:17px;border-right:1px solid #c8c8c8;border-bottom:1px solid #c8c8c8"></div>
<div class="a" style="left:823px;top:544px;width:29px;height:17px;border-right:1px solid #c8c8c8;border-bottom:1px solid #c8c8c8"></div>
<div class="a" style="left:852px;top:544px;width:55px;height:17px;border-right:1px solid #c8c8c8;border-bottom:1px solid #c8c8c8"></div>
<div class="a" style="left:907px;top:544px;width:53px;height:17px;border-right:1px solid #c8c8c8;border-bottom:1px solid #c8c8c8"></div>
<div class="a" style="left:960px;top:544px;width:80px;height:17px;border-right:1px solid #c8c8c8;border-bottom:1px solid #c8c8c8"></div>
<div class="a" style="left:1040px;top:544px;width:85px;height:17px;border-right:1px solid #c8c8c8;border-bottom:1px solid #c8c8c8"></div>
<div class="a" style="left:1125px;top:544px;width:180px;height:17px;border-right:1px solid #c8c8c8;border-bottom:1px solid #c8c8c8"></div>
<div class="a" style="left:1305px;top:544px;width:95px;height:17px;border-right:1px solid #c8c8c8;border-bottom:1px solid #c8c8c8"></div>
<div class="a" style="left:1400px;top:544px;width:50px;height:17px;border-right:1px solid #c8c8c8;border-bottom:1px solid #c8c8c8"></div>
<div class="a" style="left:1450px;top:544px;width:136px;height:17px;border-right:1px solid #c8c8c8;border-bottom:1px solid #c8c8c8"></div>
<div class="a" style="left:270px;top:544px;width:14px;height:17px;background:#f5f1f5;border-right:1px solid #8a8a8a;border-bottom:1px solid #8a8a8a;border-left:1px solid #fff;border-top:1px solid #fff"></div>
<div class="a" style="left:287px;top:544px;width:14px;height:16px;color:#007878;line-height:16px;text-align:left"><span class="c"><b class="tx">长</b><svg class=g width=12 height=1><use href=#g12d /></svg></span></div>
<div class="a" style="left:304px;top:544px;width:92px;height:16px;color:#007878;line-height:16px;text-align:left"><span class="m" style="font-size:12px;letter-spacing:-1.2px">230908&nbsp;17:04:43</span></div>
<div class="a" style="left:399px;top:544px;width:122px;height:16px;color:#007878;line-height:16px;text-align:left"><span class="c"><b class="tx">夏敏</b><svg class=g width=12 height=1><use href=#g118 /></svg><svg class=g width=12 height=1><use href=#g119 /></svg></span><span class="m" style="font-size:12px;letter-spacing:-1.2px">/</span><span class="c"><b class="tx">夏敏</b><svg class=g width=12 height=1><use href=#g118 /></svg><svg class=g width=12 height=1><use href=#g119 /></svg></span><span class="m" style="font-size:12px;letter-spacing:-1.2px">/</span><span class="c"><b class="tx">朱林</b><svg class=g width=12 height=1><use href=#g12e /></svg><svg class=g width=12 height=1><use href=#g93 /></svg></span></div>
<div class="a" style="left:524px;top:544px;width:298px;height:16px;color:#007878;line-height:16px;text-align:left"><span class="c"><b class="tx">微针针刺</b><svg class=g width=12 height=1><use href=#g148 /></svg><svg class=g width=12 height=1><use href=#g13f /></svg><svg class=g width=12 height=1><use href=#g13f /></svg><svg class=g width=12 height=1><use href=#g145 /></svg></span><span class="m" style="font-size:12px;letter-spacing:-1.2px">&nbsp;w5</span></div>
<div class="a" style="left:1307px;top:544px;width:92px;height:16px;color:#007878;line-height:16px;text-align:left"><span class="m" style="font-size:12px;letter-spacing:-1.2px">230908&nbsp;16:46:07</span></div>
<div class="a" style="left:1402px;top:544px;width:47px;height:16px;color:#007878;line-height:16px;text-align:left"><span class="m" style="font-size:12px;letter-spacing:-1.2px">28324671</span></div>
<div class="a" style="left:1452px;top:544px;width:133px;height:16px;color:#007878;line-height:16px;text-align:left"><span class="c"><b class="tx">脑病康复</b><svg class=g width=12 height=1><use href=#g8 /></svg><svg class=g width=12 height=1><use href=#g2e /></svg><svg class=g width=12 height=1><use href=#g12f /></svg><svg class=g width=12 height=1><use href=#g130 /></svg></span></div>
<div class="a" style="left:284px;top:561px;width:18px;height:17px;border-right:1px solid #c8c8c8;border-bottom:1px solid #c8c8c8"></div>
<div class="a" style="left:302px;top:561px;width:95px;height:17px;border-right:1px solid #c8c8c8;border-bottom:1px solid #c8c8c8"></div>
<div class="a" style="left:397px;top:561px;width:125px;height:17px;border-right:1px solid #c8c8c8;border-bottom:1px solid #c8c8c8"></div>
<div class="a" style="left:522px;top:561px;width:301px;height:17px;border-right:1px solid #c8c8c8;border-bottom:1px solid #c8c8c8"></div>
<div class="a" style="left:823px;top:561px;width:29px;height:17px;border-right:1px solid #c8c8c8;border-bottom:1px solid #c8c8c8"></div>
<div class="a" style="left:852px;top:561px;width:55px;height:17px;border-right:1px solid #c8c8c8;border-bottom:1px solid #c8c8c8"></div>
<div class="a" style="left:907px;top:561px;width:53px;height:17px;border-right:1px solid #c8c8c8;border-bottom:1px solid #c8c8c8"></div>
<div class="a" style="left:960px;top:561px;width:80px;height:17px;border-right:1px solid #c8c8c8;border-bottom:1px solid #c8c8c8"></div>
<div class="a" style="left:1040px;top:561px;width:85px;height:17px;border-right:1px solid #c8c8c8;border-bottom:1px solid #c8c8c8"></div>
<div class="a" style="left:1125px;top:561px;width:180px;height:17px;border-right:1px solid #c8c8c8;border-bottom:1px solid #c8c8c8"></div>
<div class="a" style="left:1305px;top:561px;width:95px;height:17px;border-right:1px solid #c8c8c8;border-bottom:1px solid #c8c8c8"></div>
<div class="a" style="left:1400px;top:561px;width:50px;height:17px;border-right:1px solid #c8c8c8;border-bottom:1px solid #c8c8c8"></div>
<div class="a" style="left:1450px;top:561px;width:136px;height:17px;border-right:1px solid #c8c8c8;border-bottom:1px solid #c8c8c8"></div>
<div class="a" style="left:270px;top:561px;width:14px;height:17px;background:#f5f1f5;border-right:1px solid #8a8a8a;border-bottom:1px solid #8a8a8a;border-left:1px solid #fff;border-top:1px solid #fff"></div>
<div class="a" style="left:287px;top:561px;width:14px;height:16px;color:#007878;line-height:16px;text-align:left"><span class="c"><b class="tx">长</b><svg class=g width=12 height=1><use href=#g12d /></svg></span></div>
<div class="a" style="left:304px;top:561px;width:92px;height:16px;color:#007878;line-height:16px;text-align:left"><span class="m" style="font-size:12px;letter-spacing:-1.2px">230908&nbsp;17:04:43</span></div>
<div class="a" style="left:399px;top:561px;width:122px;height:16px;color:#007878;line-height:16px;text-align:left"><span class="c"><b class="tx">夏敏</b><svg class=g width=12 height=1><use href=#g118 /></svg><svg class=g width=12 height=1><use href=#g119 /></svg></span><span class="m" style="font-size:12px;letter-spacing:-1.2px">/</span><span class="c"><b class="tx">夏敏</b><svg class=g width=12 height=1><use href=#g118 /></svg><svg class=g width=12 height=1><use href=#g119 /></svg></span><span class="m" style="font-size:12px;letter-spacing:-1.2px">/</span><span class="c"><b class="tx">朱林</b><svg class=g width=12 height=1><use href=#g12e /></svg><svg class=g width=12 height=1><use href=#g93 /></svg></span></div>
<div class="a" style="left:524px;top:561px;width:298px;height:16px;color:#007878;line-height:16px;text-align:left"><span class="c"><b class="tx">头皮针</b><svg class=g width=12 height=1><use href=#g149 /></svg><svg class=g width=12 height=1><use href=#g71 /></svg><svg class=g width=12 height=1><use href=#g13f /></svg></span><span class="m" style="font-size:12px;letter-spacing:-1.2px">&nbsp;w5</span></div>
<div class="a" style="left:1307px;top:561px;width:92px;height:16px;color:#007878;line-height:16px;text-align:left"><span class="m" style="font-size:12px;letter-spacing:-1.2px">230908&nbsp;16:46:07</span></div>
<div class="a" style="left:1402px;top:561px;width:47px;height:16px;color:#007878;line-height:16px;text-align:left"><span class="m" style="font-size:12px;letter-spacing:-1.2px">28324672</span></div>
<div class="a" style="left:1452px;top:561px;width:133px;height:16px;color:#007878;line-height:16px;text-align:left"><span class="c"><b class="tx">脑病康复</b><svg class=g width=12 height=1><use href=#g8 /></svg><svg class=g width=12 height=1><use href=#g2e /></svg><svg class=g width=12 height=1><use href=#g12f /></svg><svg class=g width=12 height=1><use href=#g130 /></svg></span></div>
<div class="a" style="left:284px;top:578px;width:18px;height:31px;border-right:1px solid #c8c8c8;border-bottom:1px solid #c8c8c8"></div>
<div class="a" style="left:302px;top:578px;width:95px;height:31px;border-right:1px solid #c8c8c8;border-bottom:1px solid #c8c8c8"></div>
<div class="a" style="left:397px;top:578px;width:125px;height:31px;border-right:1px solid #c8c8c8;border-bottom:1px solid #c8c8c8"></div>
<div class="a" style="left:522px;top:578px;width:301px;height:31px;border-right:1px solid #c8c8c8;border-bottom:1px solid #c8c8c8"></div>
<div class="a" style="left:823px;top:578px;width:29px;height:31px;border-right:1px solid #c8c8c8;border-bottom:1px solid #c8c8c8"></div>
<div class="a" style="left:852px;top:578px;width:55px;height:31px;border-right:1px solid #c8c8c8;border-bottom:1px solid #c8c8c8"></div>
<div class="a" style="left:907px;top:578px;width:53px;height:31px;border-right:1px solid #c8c8c8;border-bottom:1px solid #c8c8c8"></div>
<div class="a" style="left:960px;top:578px;width:80px;height:31px;border-right:1px solid #c8c8c8;border-bottom:1px solid #c8c8c8"></div>
<div class="a" style="left:1040px;top:578px;width:85px;height:31px;border-right:1px solid #c8c8c8;border-bottom:1px solid #c8c8c8"></div>
<div class="a" style="left:1125px;top:578px;width:180px;height:31px;border-right:1px solid #c8c8c8;border-bottom:1px solid #c8c8c8"></div>
<div class="a" style="left:1305px;top:578px;width:95px;height:31px;border-right:1px solid #c8c8c8;border-bottom:1px solid #c8c8c8"></div>
<div class="a" style="left:1400px;top:578px;width:50px;height:31px;border-right:1px solid #c8c8c8;border-bottom:1px solid #c8c8c8"></div>
<div class="a" style="left:1450px;top:578px;width:136px;height:31px;border-right:1px solid #c8c8c8;border-bottom:1px solid #c8c8c8"></div>
<div class="a" style="left:270px;top:578px;width:14px;height:31px;background:#f5f1f5;border-right:1px solid #8a8a8a;border-bottom:1px solid #8a8a8a;border-left:1px solid #fff;border-top:1px solid #fff"></div>
<div class="a" style="left:287px;top:585px;width:14px;height:16px;color:#007878;line-height:16px;text-align:left"><span class="c"><b class="tx">长</b><svg class=g width=12 height=1><use href=#g12d /></svg></span></div>
<div class="a" style="left:304px;top:585px;width:92px;height:16px;color:#007878;line-height:16px;text-align:left"><span class="m" style="font-size:12px;letter-spacing:-1.2px">230908&nbsp;17:04:43</span></div>
<div class="a" style="left:399px;top:585px;width:122px;height:16px;color:#007878;line-height:16px;text-align:left"><span class="c"><b class="tx">夏敏</b><svg class=g width=12 height=1><use href=#g118 /></svg><svg class=g width=12 height=1><use href=#g119 /></svg></span><span class="m" style="font-size:12px;letter-spacing:-1.2px">/</span><span class="c"><b class="tx">夏敏</b><svg class=g width=12 height=1><use href=#g118 /></svg><svg class=g width=12 height=1><use href=#g119 /></svg></span><span class="m" style="font-size:12px;letter-spacing:-1.2px">/</span><span class="c"><b class="tx">朱林</b><svg class=g width=12 height=1><use href=#g12e /></svg><svg class=g width=12 height=1><use href=#g93 /></svg></span></div>
<div class="a" style="left:524px;top:579px;width:298px;height:29px;color:#007878;line-height:13px;text-align:left"><span class="c"><b class="tx">内科疾病推拿</b><svg class=g width=12 height=1><use href=#g10e /></svg><svg class=g width=12 height=1><use href=#g115 /></svg><svg class=g width=12 height=1><use href=#g14a /></svg><svg class=g width=12 height=1><use href=#g2e /></svg><svg class=g width=12 height=1><use href=#g14b /></svg><svg class=g width=12 height=1><use href=#g14c /></svg></span><br><span class="c"><b class="tx">敏</b><svg class=g width=12 height=1><use href=#g119 /></svg></span><span class="m" style="font-size:12px;letter-spacing:-1.2px">]</span></div>
<div class="a" style="left:1307px;top:585px;width:92px;height:16px;color:#007878;line-height:16px;text-align:left"><span class="m" style="font-size:12px;letter-spacing:-1.2px">230908&nbsp;16:46:07</span></div>
<div class="a" style="left:1402px;top:579px;width:47px;height:29px;color:#007878;line-height:13px;text-align:left"><span class="m" style="font-size:12px;letter-spacing:-1.2px">2832467</span><br><span class="m" style="font-size:12px;letter-spacing:-1.2px">3</span></div>
<div class="a" style="left:1452px;top:585px;width:133px;height:16px;color:#007878;line-height:16px;text-align:left"><span class="c"><b class="tx">脑病康复</b><svg class=g width=12 height=1><use href=#g8 /></svg><svg class=g width=12 height=1><use href=#g2e /></svg><svg class=g width=12 height=1><use href=#g12f /></svg><svg class=g width=12 height=1><use href=#g130 /></svg></span></div>
<div class="a" style="left:284px;top:609px;width:18px;height:31px;border-right:1px solid #c8c8c8;border-bottom:1px solid #c8c8c8"></div>
<div class="a" style="left:302px;top:609px;width:95px;height:31px;border-right:1px solid #c8c8c8;border-bottom:1px solid #c8c8c8"></div>
<div class="a" style="left:397px;top:609px;width:125px;height:31px;border-right:1px solid #c8c8c8;border-bottom:1px solid #c8c8c8"></div>
<div class="a" style="left:522px;top:609px;width:301px;height:31px;border-right:1px solid #c8c8c8;border-bottom:1px solid #c8c8c8"></div>
<div class="a" style="left:823px;top:609px;width:29px;height:31px;border-right:1px solid #c8c8c8;border-bottom:1px solid #c8c8c8"></div>
<div class="a" style="left:852px;top:609px;width:55px;height:31px;border-right:1px solid #c8c8c8;border-bottom:1px solid #c8c8c8"></div>
<div class="a" style="left:907px;top:609px;width:53px;height:31px;border-right:1px solid #c8c8c8;border-bottom:1px solid #c8c8c8"></div>
<div class="a" style="left:960px;top:609px;width:80px;height:31px;border-right:1px solid #c8c8c8;border-bottom:1px solid #c8c8c8"></div>
<div class="a" style="left:1040px;top:609px;width:85px;height:31px;border-right:1px solid #c8c8c8;border-bottom:1px solid #c8c8c8"></div>
<div class="a" style="left:1125px;top:609px;width:180px;height:31px;border-right:1px solid #c8c8c8;border-bottom:1px solid #c8c8c8"></div>
<div class="a" style="left:1305px;top:609px;width:95px;height:31px;border-right:1px solid #c8c8c8;border-bottom:1px solid #c8c8c8"></div>
<div class="a" style="left:1400px;top:609px;width:50px;height:31px;border-right:1px solid #c8c8c8;border-bottom:1px solid #c8c8c8"></div>
<div class="a" style="left:1450px;top:609px;width:136px;height:31px;border-right:1px solid #c8c8c8;border-bottom:1px solid #c8c8c8"></div>
<div class="a" style="left:270px;top:609px;width:14px;height:31px;background:#f5f1f5;border-right:1px solid #8a8a8a;border-bottom:1px solid #8a8a8a;border-left:1px solid #fff;border-top:1px solid #fff"></div>
<div class="a" style="left:287px;top:616px;width:14px;height:16px;color:#007878;line-height:16px;text-align:left"><span class="c"><b class="tx">长</b><svg class=g width=12 height=1><use href=#g12d /></svg></span></div>
<div class="a" style="left:304px;top:616px;width:92px;height:16px;color:#007878;line-height:16px;text-align:left"><span class="m" style="font-size:12px;letter-spacing:-1.2px">230908&nbsp;17:04:43</span></div>
<div class="a" style="left:399px;top:616px;width:122px;height:16px;color:#007878;line-height:16px;text-align:left"><span class="c"><b class="tx">夏敏</b><svg class=g width=12 height=1><use href=#g118 /></svg><svg class=g width=12 height=1><use href=#g119 /></svg></span><span class="m" style="font-size:12px;letter-spacing:-1.2px">/</span><span class="c"><b class="tx">夏敏</b><svg class=g width=12 height=1><use href=#g118 /></svg><svg class=g width=12 height=1><use href=#g119 /></svg></span><span class="m" style="font-size:12px;letter-spacing:-1.2px">/</span><span class="c"><b class="tx">朱林</b><svg class=g width=12 height=1><use href=#g12e /></svg><svg class=g width=12 height=1><use href=#g93 /></svg></span></div>
<div class="a" style="left:524px;top:610px;width:298px;height:29px;color:#007878;line-height:13px;text-align:left"><span class="c"><b class="tx">缬沙坦氨氯地平片</b><svg class=g width=12 height=1><use href=#g14d /></svg><svg class=g width=12 height=1><use href=#g14e /></svg><svg class=g width=12 height=1><use href=#g14f /></svg><svg class=g width=12 height=1><use href=#g150 /></svg><svg class=g width=12 height=1><use href=#g151 /></svg><svg class=g width=12 height=1><use href=#g152 /></svg><svg class=g width=12 height=1><use href=#gb4 /></svg><svg class=g width=12 height=1><use href=#g153 /></svg></span><br><span class="m" style="font-size:12px;letter-spacing:-1.2px">.5</span><span class="c"><b class="tx">片</b><svg class=g width=12 height=1><use href=#g153 /></svg></span><span class="m" style="font-size:12px;letter-spacing:-1.2px">&nbsp;qd&nbsp;[</span><span class="c"><b class="tx">首</b><svg class=g width=12 height=1><use href=#g154 /></svg></span></div>
<div class="a" style="left:1307px;top:616px;width:92px;height:16px;color:#007878;line-height:16px;text-align:left"><span class="m" style="font-size:12px;letter-spacing:-1.2px">230908&nbsp;16:59:08</span></div>
<div class="a" style="left:1402px;top:610px;width:47px;height:29px;color:#007878;line-height:13px;text-align:left"><span class="m" style="font-size:12px;letter-spacing:-1.2px">2832469</span><br><span class="m" style="font-size:12px;letter-spacing:-1.2px">5</span></div>
<div class="a" style="left:1452px;top:616px;width:133px;height:16px;color:#007878;line-height:16px;text-align:left"><span class="m" style="font-size:12px;letter-spacing:-1.2px">/</span></div>
<div class="a" style="left:284px;top:640px;width:18px;height:31px;border-right:1px solid #c8c8c8;border-bottom:1px solid #c8c8c8"></div>
<div class="a" style="left:302px;top:640px;width:95px;height:31px;border-right:1px solid #c8c8c8;border-bottom:1px solid #c8c8c8"></div>
<div class="a" style="left:397px;top:640px;width:125px;height:31px;border-right:1px solid #c8c8c8;border-bottom:1px solid #c8c8c8"></div>
<div class="a" style="left:522px;top:640px;width:301px;height:31px;border-right:1px solid #c8c8c8;border-bottom:1px solid #c8c8c8"></div>
<div class="a" style="left:823px;top:640px;width:29px;height:31px;border-right:1px solid #c8c8c8;border-bottom:1px solid #c8c8c8"></div>
<div class="a" style="left:852px;top:640px;width:55px;height:31px;border-right:1px solid #c8c8c8;border-bottom:1px solid #c8c8c8"></div>
<div class="a" style="left:907px;top:640px;width:53px;height:31px;border-right:1px solid #c8c8c8;border-bottom:1px solid #c8c8c8"></div>
<div class="a" style="left:960px;top:640px;width:80px;height:31px;border-right:1px solid #c8c8c8;border-bottom:1px solid #c8c8c8"></div>
<div class="a" style="left:1040px;top:640px;width:85px;height:31px;border-right:1px solid #c8c8c8;border-bottom:1px solid #c8c8c8"></div>
<div class="a" style="left:1125px;top:640px;width:180px;height:31px;border-right:1px solid #c8c8c8;border-bottom:1px solid #c8c8c8"></div>
<div class="a" style="left:1305px;top:640px;width:95px;height:31px;border-right:1px solid #c8c8c8;border-bottom:1px solid #c8c8c8"></div>
<div class="a" style="left:1400px;top:640px;width:50px;height:31px;border-right:1px solid #c8c8c8;border-bottom:1px solid #c8c8c8"></div>
<div class="a" style="left:1450px;top:640px;width:136px;height:31px;border-right:1px solid #c8c8c8;border-bottom:1px solid #c8c8c8"></div>
<div class="a" style="left:270px;top:640px;width:14px;height:31px;background:#f5f1f5;border-right:1px solid #8a8a8a;border-bottom:1px solid #8a8a8a;border-left:1px solid #fff;border-top:1px solid #fff"></div>
<div class="a" style="left:287px;top:647px;width:14px;height:16px;color:#007878;line-height:16px;text-align:left"><span class="c"><b class="tx">长</b><svg class=g width=12 height=1><use href=#g12d /></svg></span></div>
<div class="a" style="left:304px;top:647px;width:92px;height:16px;color:#007878;line-height:16px;text-align:left"><span class="m" style="font-size:12px;letter-spacing:-1.2px">230908&nbsp;17:04:43</span></div>
<div class="a" style="left:399px;top:647px;width:122px;height:16px;color:#007878;line-height:16px;text-align:left"><span class="c"><b class="tx">夏敏</b><svg class=g width=12 height=1><use href=#g118 /></svg><svg class=g width=12 height=1><use href=#g119 /></svg></span><span class="m" style="font-size:12px;letter-spacing:-1.2px">/</span><span class="c"><b class="tx">夏敏</b><svg class=g width=12 height=1><use href=#g118 /></svg><svg class=g width=12 height=1><use href=#g119 /></svg></span><span class="m" style="font-size:12px;letter-spacing:-1.2px">/</span><span class="c"><b class="tx">朱林</b><svg class=g width=12 height=1><use href=#g12e /></svg><svg class=g width=12 height=1><use href=#g93 /></svg></span></div>
<div class="a" style="left:524px;top:641px;width:298px;height:29px;color:#007878;line-height:13px;text-align:left"><span class="c"><b class="tx">多巴丝肼片</b><svg class=g width=12 height=1><use href=#g155 /></svg><svg class=g width=12 height=1><use href=#g156 /></svg><svg class=g width=12 height=1><use href=#g157 /></svg><svg class=g width=12 height=1><use href=#g158 /></svg><svg class=g width=12 height=1><use href=#g153 /></svg></span><br><span class="c"><b class="tx">服</b><svg class=g width=12 height=1><use href=#g21 /></svg></span></div>
<div class="a" style="left:1127px;top:647px;width:177px;height:16px;color:#007878;line-height:16px;text-align:left"><span class="c"><b class="tx">餐前</b><svg class=g width=12 height=1><use href=#g159 /></svg><svg class=g width=12 height=1><use href=#g15a /></svg></span><span class="m" style="font-size:12px;letter-spacing:-1.2px">1</span><span class="c"><b class="tx">小时</b><svg class=g width=12 height=1><use href=#ga5 /></svg><svg class=g width=12 height=1><use href=#g2b /></svg></span></div>
<div class="a" style="left:1307px;top:647px;width:92px;height:16px;color:#007878;line-height:16px;text-align:left"><span class="m" style="font-size:12px;letter-spacing:-1.2px">230908&nbsp;16:59:08</span></div>
<div class="a" style="left:1402px;top:641px;width:47px;height:29px;color:#007878;line-height:13px;text-align:left"><span class="m" style="font-size:12px;letter-spacing:-1.2px">2832469</span><br><span class="m" style="font-size:12px;letter-spacing:-1.2px">7</span></div>
<div class="a" style="left:1452px;top:647px;width:133px;height:16px;color:#007878;line-height:16px;text-align:left"><span class="m" style="font-size:12px;letter-spacing:-1.2px">/</span></div>
<div class="a" style="left:284px;top:671px;width:18px;height:31px;border-right:1px solid #c8c8c8;border-bottom:1px solid #c8c8c8"></div>
<div class="a" style="left:302px;top:671px;width:95px;height:31px;border-right:1px solid #c8c8c8;border-bottom:1px solid #c8c8c8"></div>
<div class="a" style="left:397px;top:671px;width:125px;height:31px;border-right:1px solid #c8c8c8;border-bottom:1px solid #c8c8c8"></div>
<div class="a" style="left:522px;top:671px;width:301px;height:31px;border-right:1px solid #c8c8c8;border-bottom:1px solid #c8c8c8"></div>
<div class="a" style="left:823px;top:671px;width:29px;height:31px;border-right:1px solid #c8c8c8;border-bottom:1px solid #c8c8c8"></div>
<div class="a" style="left:852px;top:671px;width:55px;height:31px;border-right:1px solid #c8c8c8;border-bottom:1px solid #c8c8c8"></div>
<div class="a" style="left:907px;top:671px;width:53px;height:31px;border-right:1px solid #c8c8c8;border-bottom:1px solid #c8c8c8"></div>
<div class="a" style="left:960px;top:671px;width:80px;height:31px;border-right:1px solid #c8c8c8;border-bottom:1px solid #c8c8c8"></div>
<div class="a" style="left:1040px;top:671px;width:85px;height:31px;border-right:1px solid #c8c8c8;border-bottom:1px solid #c8c8c8"></div>
<div class="a" style="left:1125px;top:671px;width:180px;height:31px;border-right:1px solid #c8c8c8;border-bottom:1px solid #c8c8c8"></div>
<div class="a" style="left:1305px;top:671px;width:95px;height:31px;border-right:1px solid #c8c8c8;border-bottom:1px solid #c8c8c8"></div>
<div class="a" style="left:1400px;top:671px;width:50px;height:31px;border-right:1px solid #c8c8c8;border-bottom:1px solid #c8c8c8"></div>
<div class="a" style="left:1450px;top:671px;width:136px;height:31px;border-right:1px solid #c8c8c8;border-bottom:1px solid #c8c8c8"></div>
<div class="a" style="left:270px;top:671px;width:14px;height:31px;background:#f5f1f5;border-right:1px solid #8a8a8a;border-bottom:1px solid #8a8a8a;border-left:1px solid #fff;border-top:1px solid #fff"></div>
<div class="a" style="left:287px;top:678px;width:14px;height:16px;color:#007878;line-height:16px;text-align:left"><span class="c"><b class="tx">长</b><svg class=g width=12 height=1><use href=#g12d /></svg></span></div>
<div class="a" style="left:304px;top:678px;width:92px;height:16px;color:#007878;line-height:16px;text-align:left"><span class="m" style="font-size:12px;letter-spacing:-1.2px">230908&nbsp;17:04:43</span></div>
<div class="a" style="left:399px;top:678px;width:122px;height:16px;color:#007878;line-height:16px;text-align:left"><span class="c"><b class="tx">夏敏</b><svg class=g width=12 height=1><use href=#g118 /></svg><svg class=g width=12 height=1><use href=#g119 /></svg></span><span class="m" style="font-size:12px;letter-spacing:-1.2px">/</span><span class="c"><b class="tx">夏敏</b><svg class=g width=12 height=1><use href=#g118 /></svg><svg class=g width=12 height=1><use href=#g119 /></svg></span><span class="m" style="font-size:12px;letter-spacing:-1.2px">/</span><span class="c"><b class="tx">朱林</b><svg class=g width=12 height=1><use href=#g12e /></svg><svg class=g width=12 height=1><use href=#g93 /></svg></span></div>
<div class="a" style="left:524px;top:672px;width:298px;height:29px;color:#007878;line-height:13px;text-align:left"><span class="c"><b class="tx">普瑞巴林胶囊</b><svg class=g width=12 height=1><use href=#g143 /></svg><svg class=g width=12 height=1><use href=#g15b /></svg><svg class=g width=12 height=1><use href=#g156 /></svg><svg class=g width=12 height=1><use href=#g93 /></svg><svg class=g width=12 height=1><use href=#g15c /></svg><svg class=g width=12 height=1><use href=#g15d /></svg></span><span class="m" style="font-size:12px;letter-spacing:-1.2px">[</span><span class="c"><b class="tx">宁波</b><svg class=g width=12 height=1><use href=#g15e /></svg><svg class=g width=12 height=1><use href=#ga6 /></svg></span><span class="m" style="font-size:12px;letter-spacing:-1.2px">](</span><span class="c"><b class="tx">国集采</b><svg class=g width=12 height=1><use href=#g84 /></svg><svg class=g width=12 height=1><use href=#g15f /></svg><svg class=g width=12 height=1><use href=#g160 /></svg></span><span class="m" style="font-size:12px;letter-spacing:-1.2px">4)[75mg&nbsp;x8</span><span class="c"><b class="tx">粒</b><svg class=g width=12 height=1><use href=#g161 /></svg></span><span class="m" style="font-size:12px;letter-spacing:-1.2px">]75mg&nbsp;BID</span><span class="c"><b class="tx">（</b><svg class=g width=12 height=1><use href=#g162 /></svg></span><br><span class="c"><b class="tx">早晚）</b><svg class=g width=12 height=1><use href=#g163 /></svg><svg class=g width=12 height=1><use href=#g164 /></svg><svg class=g width=12 height=1><use href=#g165 /></svg></span><span class="m" style="font-size:12px;letter-spacing:-1.2px">[</span><span class="c"><b class="tx">首</b><svg class=g width=12 height=1><use href=#g154 /></svg></span><span class="m" style="font-size:12px;letter-spacing:-1.2px">0]</span><span class="c"><b class="tx">口服</b><svg class=g width=12 height=1><use href=#g5a /></svg><svg class=g width=12 height=1><use href=#g21 /></svg></span></div>
<div class="a" style="left:854px;top:678px;width:52px;height:16px;color:#007878;line-height:16px;text-align:left"><span class="m" style="font-size:12px;letter-spacing:-1.2px">20230927</span></div>
<div class="a" style="left:909px;top:678px;width:50px;height:16px;color:#007878;line-height:16px;text-align:left"><span class="m" style="font-size:12px;letter-spacing:-1.2px">20230926</span></div>
<div class="a" style="left:1307px;top:678px;width:92px;height:16px;color:#007878;line-height:16px;text-align:left"><span class="m" style="font-size:12px;letter-spacing:-1.2px">230908&nbsp;16:59:08</span></div>
<div class="a" style="left:1402px;top:672px;width:47px;height:29px;color:#007878;line-height:13px;text-align:left"><span class="m" style="font-size:12px;letter-spacing:-1.2px">2832469</span><br><span class="m" style="font-size:12px;letter-spacing:-1.2px">9</span></div>
<div class="a" style="left:1452px;top:678px;width:133px;height:16px;color:#007878;line-height:16px;text-align:left"><span class="m" style="font-size:12px;letter-spacing:-1.2px">/</span></div>
<div class="a" style="left:284px;top:702px;width:18px;height:31px;border-right:1px solid #c8c8c8;border-bottom:1px solid #c8c8c8"></div>
<div class="a" style="left:302px;top:702px;width:95px;height:31px;border-right:1px solid #c8c8c8;border-bottom:1px solid #c8c8c8"></div>
<div class="a" style="left:397px;top:702px;width:125px;height:31px;border-right:1px solid #c8c8c8;border-bottom:1px solid #c8c8c8"></div>
<div class="a" style="left:522px;top:702px;width:301px;height:31px;border-right:1px solid #c8c8c8;border-bottom:1px solid #c8c8c8"></div>
<div class="a" style="left:823px;top:702px;width:29px;height:31px;border-right:1px solid #c8c8c8;border-bottom:1px solid #c8c8c8"></div>
<div class="a" style="left:852px;top:702px;width:55px;height:31px;border-right:1px solid #c8c8c8;border-bottom:1px solid #c8c8c8"></div>
<div class="a" style="left:907px;top:702px;width:53px;height:31px;border-right:1px solid #c8c8c8;border-bottom:1px solid #c8c8c8"></div>
<div class="a" style="left:960px;top:702px;width:80px;height:31px;border-right:1px solid #c8c8c8;border-bottom:1px solid #c8c8c8"></div>
<div class="a" style="left:1040px;top:702px;width:85px;height:31px;border-right:1px solid #c8c8c8;border-bottom:1px solid #c8c8c8"></div>
<div class="a" style="left:1125px;top:702px;width:180px;height:31px;border-right:1px solid #c8c8c8;border-bottom:1px solid #c8c8c8"></div>
<div class="a" style="left:1305px;top:702px;width:95px;height:31px;border-right:1px solid #c8c8c8;border-bottom:1px solid #c8c8c8"></div>
<div class="a" style="left:1400px;top:702px;width:50px;height:31px;border-right:1px solid #c8c8c8;border-bottom:1px solid #c8c8c8"></div>
<div class="a" style="left:1450px;top:702px;width:136px;height:31px;border-right:1px solid #c8c8c8;border-bottom:1px solid #c8c8c8"></div>
<div class="a" style="left:270px;top:702px;width:14px;height:31px;background:#f5f1f5;border-right:1px solid #8a8a8a;border-bottom:1px solid #8a8a8a;border-left:1px solid #fff;border-top:1px solid #fff"></div>
<div class="a" style="left:287px;top:709px;width:14px;height:16px;color:#007878;line-height:16px;text-align:left"><span class="c"><b class="tx">长</b><svg class=g width=12 height=1><use href=#g12d /></svg></span></div>
<div class="a" style="left:304px;top:709px;width:92px;height:16px;color:#007878;line-height:16px;text-align:left"><span class="m" style="font-size:12px;letter-spacing:-1.2px">230908&nbsp;17:04:43</span></div>
<div class="a" style="left:399px;top:709px;width:122px;height:16px;color:#007878;line-height:16px;text-align:left"><span class="c"><b class="tx">夏敏</b><svg class=g width=12 height=1><use href=#g118 /></svg><svg class=g width=12 height=1><use href=#g119 /></svg></span><span class="m" style="font-size:12px;letter-spacing:-1.2px">/</span><span class="c"><b class="tx">夏敏</b><svg class=g width=12 height=1><use href=#g118 /></svg><svg class=g width=12 height=1><use href=#g119 /></svg></span><span class="m" style="font-size:12px;letter-spacing:-1.2px">/</span><span class="c"><b class="tx">朱林</b><svg class=g width=12 height=1><use href=#g12e /></svg><svg class=g width=12 height=1><use href=#g93 /></svg></span></div>
<div class="a" style="left:524px;top:703px;width:298px;height:29px;color:#007878;line-height:13px;text-align:left"><span class="c"><b class="tx">替普瑞酮胶囊（施维舒）</b><svg class=g width=12 height=1><use href=#g166 /></svg><svg class=g width=12 height=1><use href=#g143 /></svg><svg class=g width=12 height=1><use href=#g15b /></svg><svg class=g width=12 height=1><use href=#g167 /></svg><svg class=g width=12 height=1><use href=#g15c /></svg><svg class=g width=12 height=1><use href=#g15d /></svg><svg class=g width=12 height=1><use href=#g162 /></svg><svg class=g width=12 height=1><use href=#gc3 /></svg><svg class=g width=12 height=1><use href=#g56 /></svg><svg class=g width=12 height=1><use href=#g168 /></svg><svg class=g width=12 height=1><use href=#g165 /></svg></span><span class="m" style="font-size:12px;letter-spacing:-1.2px">[50mg&nbsp;x20</span><span class="c"><b class="tx">粒</b><svg class=g width=12 height=1><use href=#g161 /></svg></span><span class="m" style="font-size:12px;letter-spacing:-1.2px">]50mg&nbsp;BID</span><span class="c"><b class="tx">（早晚</b><svg class=g width=12 height=1><use href=#g162 /></svg><svg class=g width=12 height=1><use href=#g163 /></svg><svg class=g width=12 height=1><use href=#g164 /></svg></span><br><span class="c"><b class="tx">）</b><svg class=g width=12 height=1><use href=#g165 /></svg></span><span class="m" style="font-size:12px;letter-spacing:-1.2px">[</span><span class="c"><b class="tx">首</b><svg class=g width=12 height=1><use href=#g154 /></svg></span><span class="m" style="font-size:12px;letter-spacing:-1.2px">0]</span><span class="c"><b class="tx">口服</b><svg class=g width=12 height=1><use href=#g5a /></svg><svg class=g width=12 height=1><use href=#g21 /></svg></span></div>
<div class="a" style="left:854px;top:709px;width:52px;height:16px;color:#007878;line-height:16px;text-align:left"><span class="m" style="font-size:12px;letter-spacing:-1.2px">20230927</span></div>
<div class="a" style="left:909px;top:709px;width:50px;height:16px;color:#007878;line-height:16px;text-align:left"><span class="m" style="font-size:12px;letter-spacing:-1.2px">20230926</span></div>
<div class="a" style="left:1307px;top:709px;width:92px;height:16px;color:#007878;line-height:16px;text-align:left"><span class="m" style="font-size:12px;letter-spacing:-1.2px">230908&nbsp;16:59:08</span></div>
<div class="a" style="left:1402px;top:703px;width:47px;height:29px;color:#007878;line-height:13px;text-align:left"><span class="m" style="font-size:12px;letter-spacing:-1.2px">2832470</span><br><span class="m" style="font-size:12px;letter-spacing:-1.2px">1</span></div>
<div class="a" style="left:1452px;top:709px;width:133px;height:16px;color:#007878;line-height:16px;text-align:left"><span class="m" style="font-size:12px;letter-spacing:-1.2px">/</span></div>
<div class="a" style="left:284px;top:733px;width:18px;height:31px;border-right:1px solid #c8c8c8;border-bottom:1px solid #c8c8c8"></div>
<div class="a" style="left:302px;top:733px;width:95px;height:31px;border-right:1px solid #c8c8c8;border-bottom:1px solid #c8c8c8"></div>
<div class="a" style="left:397px;top:733px;width:125px;height:31px;border-right:1px solid #c8c8c8;border-bottom:1px solid #c8c8c8"></div>
<div class="a" style="left:522px;top:733px;width:301px;height:31px;border-right:1px solid #c8c8c8;border-bottom:1px solid #c8c8c8"></div>
<div class="a" style="left:823px;top:733px;width:29px;height:31px;border-right:1px solid #c8c8c8;border-bottom:1px solid #c8c8c8"></div>
<div class="a" style="left:852px;top:733px;width:55px;height:31px;border-right:1px solid #c8c8c8;border-bottom:1px solid #c8c8c8"></div>
<div class="a" style="left:907px;top:733px;width:53px;height:31px;border-right:1px solid #c8c8c8;border-bottom:1px solid #c8c8c8"></div>
<div class="a" style="left:960px;top:733px;width:80px;height:31px;border-right:1px solid #c8c8c8;border-bottom:1px solid #c8c8c8"></div>
<div class="a" style="left:1040px;top:733px;width:85px;height:31px;border-right:1px solid #c8c8c8;border-bottom:1px solid #c8c8c8"></div>
<div class="a" style="left:1125px;top:733px;width:180px;height:31px;border-right:1px solid #c8c8c8;border-bottom:1px solid #c8c8c8"></div>
<div class="a" style="left:1305px;top:733px;width:95px;height:31px;border-right:1px solid #c8c8c8;border-bottom:1px solid #c8c8c8"></div>
<div class="a" style="left:1400px;top:733px;width:50px;height:31px;border-right:1px solid #c8c8c8;border-bottom:1px solid #c8c8c8"></div>
<div class="a" style="left:1450px;top:733px;width:136px;height:31px;border-right:1px solid #c8c8c8;border-bottom:1px solid #c8c8c8"></div>
<div class="a" style="left:270px;top:733px;width:14px;height:31px;background:#f5f1f5;border-right:1px solid #8a8a8a;border-bottom:1px solid #8a8a8a;border-left:1px solid #fff;border-top:1px solid #fff"></div>
<div class="a" style="left:287px;top:740px;width:14px;height:16px;color:#007878;line-height:16px;text-align:left"><span class="c"><b class="tx">长</b><svg class=g width=12 height=1><use href=#g12d /></svg></span></div>
<div class="a" style="left:304px;top:740px;width:92px;height:16px;color:#007878;line-height:16px;text-align:left"><span class="m" style="font-size:12px;letter-spacing:-1.2px">230908&nbsp;17:04:43</span></div>
<div class="a" style="left:399px;top:740px;width:122px;height:16px;color:#007878;line-height:16px;text-align:left"><span class="c"><b class="tx">夏敏</b><svg class=g width=12 height=1><use href=#g118 /></svg><svg class=g width=12 height=1><use href=#g119 /></svg></span><span class="m" style="font-size:12px;letter-spacing:-1.2px">/</span><span class="c"><b class="tx">夏敏</b><svg class=g width=12 height=1><use href=#g118 /></svg><svg class=g width=12 height=1><use href=#g119 /></svg></span><span class="m" style="font-size:12px;letter-spacing:-1.2px">/</span><span class="c"><b class="tx">朱林</b><svg class=g width=12 height=1><use href=#g12e /></svg><svg class=g width=12 height=1><use href=#g93 /></svg></span></div>
<div class="a" style="left:524px;top:734px;width:298px;height:29px;color:#007878;line-height:13px;text-align:left"><span class="c"><b class="tx">甲钴胺片</b><svg class=g width=12 height=1><use href=#g169 /></svg><svg class=g width=12 height=1><use href=#g16a /></svg><svg class=g width=12 height=1><use href=#g16b /></svg><svg class=g width=12 height=1><use href=#g153 /></svg></span><span class="m" style="font-size:12px;letter-spacing:-1.2px">[</span><span class="c"><b class="tx">江西</b><svg class=g width=12 height=1><use href=#g11a /></svg><svg class=g width=12 height=1><use href=#g16c /></svg></span><span class="m" style="font-size:12px;letter-spacing:-1.2px">](</span><span class="c"><b class="tx">国集采</b><svg class=g width=12 height=1><use href=#g84 /></svg><svg class=g width=12 height=1><use href=#g15f /></svg><svg class=g width=12 height=1><use href=#g160 /></svg></span><span class="m" style="font-size:12px;letter-spacing:-1.2px">3)(</span><span class="c"><b class="tx">续</b><svg class=g width=12 height=1><use href=#g16d /></svg></span><span class="m" style="font-size:12px;letter-spacing:-1.2px">1)[0.5mg&nbsp;x48</span><span class="c"><b class="tx">片</b><svg class=g width=12 height=1><use href=#g153 /></svg></span><span class="m" style="font-size:12px;letter-spacing:-1.2px">]0.5mg&nbsp;qd</span><br><span class="m" style="font-size:12px;letter-spacing:-1.2px">&nbsp;[</span><span class="c"><b class="tx">首</b><svg class=g width=12 height=1><use href=#g154 /></svg></span><span class="m" style="font-size:12px;letter-spacing:-1.2px">0]</span><span class="c"><b class="tx">口服</b><svg class=g width=12 height=1><use href=#g5a /></svg><svg class=g width=12 height=1><use href=#g21 /></svg></span></div>
<div class="a" style="left:854px;top:740px;width:52px;height:16px;color:#007878;line-height:16px;text-align:left"><span class="m" style="font-size:12px;letter-spacing:-1.2px">20230927</span></div>
<div class="a" style="left:909px;top:740px;width:50px;height:16px;color:#007878;line-height:16px;text-align:left"><span class="m" style="font-size:12px;letter-spacing:-1.2px">20230926</span></div>
<div class="a" style="left:1307px;top:740px;width:92px;height:16px;color:#007878;line-height:16px;text-align:left"><span class="m" style="font-size:12px;letter-spacing:-1.2px">230908&nbsp;16:59:08</span></div>
<div class="a" style="left:1402px;top:734px;width:47px;height:29px;color:#007878;line-height:13px;text-align:left"><span class="m" style="font-size:12px;letter-spacing:-1.2px">2832470</span><br><span class="m" style="font-size:12px;letter-spacing:-1.2px">3</span></div>
<div class="a" style="left:1452px;top:740px;width:133px;height:16px;color:#007878;line-height:16px;text-align:left"><span class="m" style="font-size:12px;letter-spacing:-1.2px">/</span></div>
<div class="a" style="left:284px;top:764px;width:18px;height:31px;border-right:1px solid #c8c8c8;border-bottom:1px solid #c8c8c8"></div>
<div class="a" style="left:302px;top:764px;width:95px;height:31px;border-right:1px solid #c8c8c8;border-bottom:1px solid #c8c8c8"></div>
<div class="a" style="left:397px;top:764px;width:125px;height:31px;border-right:1px solid #c8c8c8;border-bottom:1px solid #c8c8c8"></div>
<div class="a" style="left:522px;top:764px;width:301px;height:31px;border-right:1px solid #c8c8c8;border-bottom:1px solid #c8c8c8"></div>
<div class="a" style="left:823px;top:764px;width:29px;height:31px;border-right:1px solid #c8c8c8;border-bottom:1px solid #c8c8c8"></div>
<div class="a" style="left:852px;top:764px;width:55px;height:31px;border-right:1px solid #c8c8c8;border-bottom:1px solid #c8c8c8"></div>
<div class="a" style="left:907px;top:764px;width:53px;height:31px;border-right:1px solid #c8c8c8;border-bottom:1px solid #c8c8c8"></div>
<div class="a" style="left:960px;top:764px;width:80px;height:31px;border-right:1px solid #c8c8c8;border-bottom:1px solid #c8c8c8"></div>
<div class="a" style="left:1040px;top:764px;width:85px;height:31px;border-right:1px solid #c8c8c8;border-bottom:1px solid #c8c8c8"></div>
<div class="a" style="left:1125px;top:764px;width:180px;height:31px;border-right:1px solid #c8c8c8;border-bottom:1px solid #c8c8c8"></div>
<div class="a" style="left:1305px;top:764px;width:95px;height:31px;border-right:1px solid #c8c8c8;border-bottom:1px solid #c8c8c8"></div>
<div class="a" style="left:1400px;top:764px;width:50px;height:31px;border-right:1px solid #c8c8c8;border-bottom:1px solid #c8c8c8"></div>
<div class="a" style="left:1450px;top:764px;width:136px;height:31px;border-right:1px solid #c8c8c8;border-bottom:1px solid #c8c8c8"></div>
<div class="a" style="left:270px;top:764px;width:14px;height:31px;background:#f5f1f5;border-right:1px solid #8a8a8a;border-bottom:1px solid #8a8a8a;border-left:1px solid #fff;border-top:1px solid #fff"></div>
<div class="a" style="left:287px;top:771px;width:14px;height:16px;color:#007878;line-height:16px;text-align:left"><span class="c"><b class="tx">长</b><svg class=g width=12 height=1><use href=#g12d /></svg></span></div>
<div class="a" style="left:304px;top:771px;width:92px;height:16px;color:#007878;line-height:16px;text-align:left"><span class="m" style="font-size:12px;letter-spacing:-1.2px">230908&nbsp;17:04:43</span></div>
<div class="a" style="left:399px;top:771px;width:122px;height:16px;color:#007878;line-height:16px;text-align:left"><span class="c"><b class="tx">夏敏</b><svg class=g width=12 height=1><use href=#g118 /></svg><svg class=g width=12 height=1><use href=#g119 /></svg></span><span class="m" style="font-size:12px;letter-spacing:-1.2px">/</span><span class="c"><b class="tx">夏敏</b><svg class=g width=12 height=1><use href=#g118 /></svg><svg class=g width=12 height=1><use href=#g119 /></svg></span><span class="m" style="font-size:12px;letter-spacing:-1.2px">/</span><span class="c"><b class="tx">朱林</b><svg class=g width=12 height=1><use href=#g12e /></svg><svg class=g width=12 height=1><use href=#g93 /></svg></span></div>
<div class="a" style="left:524px;top:765px;width:298px;height:29px;color:#007878;line-height:13px;text-align:left"><span class="c"><b class="tx">雷贝拉唑钠肠溶片</b><svg class=g width=12 height=1><use href=#g16e /></svg><svg class=g width=12 height=1><use href=#g16f /></svg><svg class=g width=12 height=1><use href=#g170 /></svg><svg class=g width=12 height=1><use href=#g171 /></svg><svg class=g width=12 height=1><use href=#g172 /></svg><svg class=g width=12 height=1><use href=#g173 /></svg><svg class=g width=12 height=1><use href=#g174 /></svg><svg class=g width=12 height=1><use href=#g153 /></svg></span><span class="m" style="font-size:12px;letter-spacing:-1.2px">[</span><span class="c"><b class="tx">山东</b><svg class=g width=12 height=1><use href=#g175 /></svg><svg class=g width=12 height=1><use href=#g176 /></svg></span><span class="m" style="font-size:12px;letter-spacing:-1.2px">](</span><span class="c"><b class="tx">续</b><svg class=g width=12 height=1><use href=#g16d /></svg></span><span class="m" style="font-size:12px;letter-spacing:-1.2px">1)[10mg&nbsp;x18</span><span class="c"><b class="tx">片</b><svg class=g width=12 height=1><use href=#g153 /></svg></span><span class="m" style="font-size:12px;letter-spacing:-1.2px">]10mg&nbsp;qd&nbsp;[</span><br><span class="c"><b class="tx">首</b><svg class=g width=12 height=1><use href=#g154 /></svg></span><span class="m" style="font-size:12px;letter-spacing:-1.2px">0]</span><span class="c"><b class="tx">口服</b><svg class=g width=12 height=1><use href=#g5a /></svg><svg class=g width=12 height=1><use href=#g21 /></svg></span></div>
<div class="a" style="left:854px;top:771px;width:52px;height:16px;color:#007878;line-height:16px;text-align:left"><span class="m" style="font-size:12px;letter-spacing:-1.2px">20230927</span></div>
<div class="a" style="left:909px;top:771px;width:50px;height:16px;color:#007878;line-height:16px;text-align:left"><span class="m" style="font-size:12px;letter-spacing:-1.2px">20230926</span></div>
<div class="a" style="left:1307px;top:771px;width:92px;height:16px;color:#007878;line-height:16px;text-align:left"><span class="m" style="font-size:12px;letter-spacing:-1.2px">230908&nbsp;17:00:01</span></div>
<div class="a" style="left:1402px;top:765px;width:47px;height:29px;color:#007878;line-height:13px;text-align:left"><span class="m" style="font-size:12px;letter-spacing:-1.2px">2832471</span><br><span class="m" style="font-size:12px;letter-spacing:-1.2px">3</span></div>
<div class="a" style="left:1452px;top:771px;width:133px;height:16px;color:#007878;line-height:16px;text-align:left"><span class="m" style="font-size:12px;letter-spacing:-1.2px">/</span></div>
<div class="a" style="left:1499px;top:302px;width:2px;height:486px;background:#d4d0d4;border-left:1px solid #a0a0a0"></div>
<div class="a" style="left:268px;top:787px;width:1233px;height:16px;background:#f5f1f5"></div>
<svg class="a" style="left:273px;top:791px;overflow:visible" width="6" height="9" viewBox="0 0 6 9"><path d="M5.5 0.5 L1.5 4.5 L5.5 8.5" fill="none" stroke="#606060" stroke-width="1.6"/></svg>
<div class="a" style="left:285px;top:788px;width:1007px;height:14px;background:#cdcdcd"></div>
<svg class="a" style="left:1488px;top:791px;overflow:visible" width="6" height="9" viewBox="0 0 6 9"><path d="M0.5 0.5 L4.5 4.5 L0.5 8.5" fill="none" stroke="#606060" stroke-width="1.6"/></svg>
<div class="a" style="left:265px;top:803px;width:1236px;height:18px;background:#f5f1f5;border-top:1px solid #fff;border-left:1px solid #bbb"></div>
<div class="a" style="left:270px;top:804px;width:1000px;height:17px;line-height:17px"><span style="color:#000"><span class="c"><b class="tx">颜色</b><svg class=g width=12 height=1><use href=#ga1 /></svg><svg class=g width=12 height=1><use href=#g177 /></svg></span><span class="m" style="font-size:12px;letter-spacing:-1.2px">:</span></span><span style="color:#1010a0"><span class="c"><b class="tx">新开</b><svg class=g width=12 height=1><use href=#g9 /></svg><svg class=g width=12 height=1><use href=#g34 /></svg></span></span><span style="color:#008000"><span class="c"><b class="tx">核对</b><svg class=g width=12 height=1><use href=#g67 /></svg><svg class=g width=12 height=1><use href=#g68 /></svg></span></span><span style="color:#000"><span class="c"><b class="tx">提取</b><svg class=g width=12 height=1><use href=#g6e /></svg><svg class=g width=12 height=1><use href=#g65 /></svg></span></span><span style="color:#007878"><span class="c"><b class="tx">今日执行</b><svg class=g width=12 height=1><use href=#g178 /></svg><svg class=g width=12 height=1><use href=#g54 /></svg><svg class=g width=12 height=1><use href=#g6f /></svg><svg class=g width=12 height=1><use href=#g70 /></svg></span></span><span style="color:#ff0000"><span class="c"><b class="tx">停止</b><svg class=g width=12 height=1><use href=#g6a /></svg><svg class=g width=12 height=1><use href=#g6b /></svg></span></span><span style="color:#800080"><span class="c"><b class="tx">撤消</b><svg class=g width=12 height=1><use href=#g69 /></svg><svg class=g width=12 height=1><use href=#g66 /></svg></span></span><span style="color:#c04080"><span class="c"><b class="tx">暂停</b><svg class=g width=12 height=1><use href=#g179 /></svg><svg class=g width=12 height=1><use href=#g6a /></svg></span></span>&nbsp;&nbsp;<span class="m" style="font-size:12px;letter-spacing:-1.2px">F2</span><span class="c"><b class="tx">长</b><svg class=g width=12 height=1><use href=#g12d /></svg></span><span class="m" style="font-size:12px;letter-spacing:-1.2px">/</span><span class="c"><b class="tx">短嘱切换</b><svg class=g width=12 height=1><use href=#g117 /></svg><svg class=g width=12 height=1><use href=#g4a /></svg><svg class=g width=12 height=1><use href=#g17a /></svg><svg class=g width=12 height=1><use href=#g17b /></svg></span><span class="m" style="font-size:12px;letter-spacing:-1.2px">&nbsp;&nbsp;Ctrl+Z[</span><span class="c"><b class="tx">暂停</b><svg class=g width=12 height=1><use href=#g179 /></svg><svg class=g width=12 height=1><use href=#g6a /></svg></span><span class="m" style="font-size:12px;letter-spacing:-1.2px">]+Q[</span><span class="c"><b class="tx">起用</b><svg class=g width=12 height=1><use href=#g109 /></svg><svg class=g width=12 height=1><use href=#g6d /></svg></span><span class="m" style="font-size:12px;letter-spacing:-1.2px">]+F[</span><span class="c"><b class="tx">复制</b><svg class=g width=12 height=1><use href=#g130 /></svg><svg class=g width=12 height=1><use href=#g17c /></svg></span><span class="m" style="font-size:12px;letter-spacing:-1.2px">]+T[</span><span class="c"><b class="tx">当前全部停止</b><svg class=g width=12 height=1><use href=#g17d /></svg><svg class=g width=12 height=1><use href=#g15a /></svg><svg class=g width=12 height=1><use href=#g17e /></svg><svg class=g width=12 height=1><use href=#g17f /></svg><svg class=g width=12 height=1><use href=#g6a /></svg><svg class=g width=12 height=1><use href=#g6b /></svg></span><span class="m" style="font-size:12px;letter-spacing:-1.2px">]&nbsp;</span><span style="color:#007878"><span class="c"><b class="tx">医嘱浏览</b><svg class=g width=12 height=1><use href=#g49 /></svg><svg class=g width=12 height=1><use href=#g4a /></svg><svg class=g width=12 height=1><use href=#g7c /></svg><svg class=g width=12 height=1><use href=#g7d /></svg></span></span></div>
<div class="a" style="left:96px;top:820px;width:1405px;height:2px;border-top:1px solid #a8a4a8;border-bottom:1px solid #fff"></div>
<div class="a" style="left:96px;top:822px;width:1405px;height:24px;background:#f5f1f5"></div>
<div class="a" style="left:100px;top:824px;width:83px;height:21px;background:#f5f1f5;border-left:2px solid #a0a0a0;border-top:1px solid #fff;border-right:1px solid #888;font-size:12px;line-height:22px;padding-left:4px"><span class="c"><b class="tx">病区医嘱维护</b><svg class=g width=12 height=1><use href=#g2e /></svg><svg class=g width=12 height=1><use href=#g180 /></svg><svg class=g width=12 height=1><use href=#g49 /></svg><svg class=g width=12 height=1><use href=#g4a /></svg><svg class=g width=12 height=1><use href=#g56 /></svg><svg class=g width=12 height=1><use href=#g13 /></svg></span></div>
<div class="a" style="left:186px;top:825px;width:1px;height:20px;background:#c8c4c8"></div>
<div class="a" style="left:96px;top:846px;width:1405px;height:2px;border-top:1px solid #a8a4a8;border-bottom:1px solid #fff"></div>
<div class="a" style="left:96px;top:848px;width:1405px;height:20px;background:#f5f1f5"></div>
<div class="a" style="left:96px;top:849px;width:79px;height:19px;border-top:1px solid #a0a0a0;border-left:1px solid #a0a0a0;font-size:12px;line-height:18px;padding-left:1px"><span class="c"><b class="tx">连晶</b><svg class=g width=12 height=1><use href=#g181 /></svg><svg class=g width=12 height=1><use href=#g182 /></svg></span></div>
<div class="a" style="left:177px;top:849px;width:98px;height:19px;border-top:1px solid #a0a0a0;border-left:1px solid #a0a0a0;font-size:12px;line-height:18px;padding-left:1px"><span class="c"><b class="tx">一病区</b><svg class=g width=12 height=1><use href=#g131 /></svg><svg class=g width=12 height=1><use href=#g2e /></svg><svg class=g width=12 height=1><use href=#g180 /></svg></span></div>
<div class="a" style="left:276px;top:849px;width:159px;height:19px;border-top:1px solid #a0a0a0;border-left:1px solid #a0a0a0;font-size:12px;line-height:18px;padding-left:1px"><span class="c"><b class="tx">脑病康复一科</b><svg class=g width=12 height=1><use href=#g8 /></svg><svg class=g width=12 height=1><use href=#g2e /></svg><svg class=g width=12 height=1><use href=#g12f /></svg><svg class=g width=12 height=1><use href=#g130 /></svg><svg class=g width=12 height=1><use href=#g131 /></svg><svg class=g width=12 height=1><use href=#g115 /></svg></span></div>
<div class="a" style="left:436px;top:849px;width:360px;height:19px;border-top:1px solid #a0a0a0;border-left:1px solid #a0a0a0;font-size:12px;line-height:18px;padding-left:1px"><span class="c"><b class="tx">病区医嘱维护</b><svg class=g width=12 height=1><use href=#g2e /></svg><svg class=g width=12 height=1><use href=#g180 /></svg><svg class=g width=12 height=1><use href=#g49 /></svg><svg class=g width=12 height=1><use href=#g4a /></svg><svg class=g width=12 height=1><use href=#g56 /></svg><svg class=g width=12 height=1><use href=#g13 /></svg></span>-<span class="c"><b class="tx">本病区总在院病人数</b><svg class=g width=12 height=1><use href=#gb /></svg><svg class=g width=12 height=1><use href=#g2e /></svg><svg class=g width=12 height=1><use href=#g180 /></svg><svg class=g width=12 height=1><use href=#g183 /></svg><svg class=g width=12 height=1><use href=#g37 /></svg><svg class=g width=12 height=1><use href=#g184 /></svg><svg class=g width=12 height=1><use href=#g2e /></svg><svg class=g width=12 height=1><use href=#g7b /></svg><svg class=g width=12 height=1><use href=#g1f /></svg></span>:48</div>
<div class="a" style="left:797px;top:849px;width:704px;height:19px;border-top:1px solid #a0a0a0;border-left:1px solid #a0a0a0;font-size:12px;line-height:18px;padding-left:1px">2023.09.26 11:48:26</div>
<div class="a" style="left:95px;top:867px;width:1406px;height:1px;background:#a0a0a0"></div>
<div class="a" style="left:586px;top:320px;width:442px;height:346px;background:#f5f1f5;border:1px solid #2f86d8"></div>
<div class="a" style="left:587px;top:321px;width:440px;height:30px;background:#ffffff"></div>
<svg class="a" style="left:596px;top:328px;overflow:visible" width="14" height="14" viewBox="0 0 14 14"><g clip-path="url(#lc)" transform="rotate(33 7 7)"><rect x="-3" y="-3" width="20" height="6.2" fill="#f06a10"/><rect x="-3" y="4" width="20" height="5.6" fill="#0c7fd6"/><rect x="-3" y="10.4" width="20" height="7" fill="#f8b010"/></g></svg>
<div class="a" style="left:616px;top:326px;width:200px;height:20px;font-size:12px;line-height:20px"><span class="c"><b class="tx">选择打印内容</b><svg class=g width=12 height=1><use href=#g185 /></svg><svg class=g width=12 height=1><use href=#g186 /></svg><svg class=g width=12 height=1><use href=#g33 /></svg><svg class=g width=12 height=1><use href=#g73 /></svg><svg class=g width=12 height=1><use href=#g10e /></svg><svg class=g width=12 height=1><use href=#g10f /></svg></span></div>
<div class="a" style="left:908px;top:335px;width:11px;height:1px;background:#222"></div>
<div class="a" style="left:952px;top:329px;width:11px;height:11px;border:1px solid #c8c8c8"></div>
<svg class="a" style="left:997px;top:329px;overflow:visible" width="12" height="12" viewBox="0 0 12 12"><path d="M0.5 0.5 L11.5 11.5 M11.5 0.5 L0.5 11.5" stroke="#222" stroke-width="1.1"/></svg>
<div class="a" style="left:601px;top:365px;width:424px;height:264px;border:1px solid #a8a8a8;border-right-color:#fff;border-bottom-color:#fff;box-shadow:inset -1px -1px 0 #a8a8a8, 1px 1px 0 #fff"></div>
<div class="a" style="left:607px;top:355px;width:124px;height:20px;background:#f5f1f5;font-size:15px;line-height:20px;padding-left:2px"><span class="c"><b class="tx">请选择打印的内容</b><svg class=g width=15 height=1><use href=#g187 /></svg><svg class=g width=15 height=1><use href=#g188 /></svg><svg class=g width=15 height=1><use href=#g189 /></svg><svg class=g width=15 height=1><use href=#g18a /></svg><svg class=g width=15 height=1><use href=#g18b /></svg><svg class=g width=15 height=1><use href=#g18c /></svg><svg class=g width=15 height=1><use href=#g18d /></svg><svg class=g width=15 height=1><use href=#g18e /></svg></span></div>
<div class="a" style="left:621px;top:380px;width:80px;height:20px;color:#1414d8;font-size:14px;line-height:20px"><span class="c"><b class="tx">打印单据：</b><svg class=g width=14 height=1><use href=#g18f /></svg><svg class=g width=14 height=1><use href=#g190 /></svg><svg class=g width=14 height=1><use href=#g191 /></svg><svg class=g width=14 height=1><use href=#g192 /></svg><svg class=g width=14 height=1><use href=#g193 /></svg></span></div>
<div class="a" style="left:621px;top:415px;width:80px;height:20px;color:#1414d8;font-size:14px;line-height:20px"><span class="c"><b class="tx">打印对象：</b><svg class=g width=14 height=1><use href=#g18f /></svg><svg class=g width=14 height=1><use href=#g190 /></svg><svg class=g width=14 height=1><use href=#g194 /></svg><svg class=g width=14 height=1><use href=#g195 /></svg><svg class=g width=14 height=1><use href=#g193 /></svg></span></div>
<div class="a" style="left:621px;top:448px;width:80px;height:20px;color:#1414d8;font-size:14px;line-height:20px"><span class="c"><b class="tx">打印内容：</b><svg class=g width=14 height=1><use href=#g18f /></svg><svg class=g width=14 height=1><use href=#g190 /></svg><svg class=g width=14 height=1><use href=#g196 /></svg><svg class=g width=14 height=1><use href=#g197 /></svg><svg class=g width=14 height=1><use href=#g193 /></svg></span></div>
<div class="a" style="left:621px;top:570px;width:80px;height:20px;color:#1414d8;font-size:14px;line-height:20px"><span class="c"><b class="tx">录入时间：</b><svg class=g width=14 height=1><use href=#g198 /></svg><svg class=g width=14 height=1><use href=#g199 /></svg><svg class=g width=14 height=1><use href=#g19a /></svg><svg class=g width=14 height=1><use href=#g19b /></svg><svg class=g width=14 height=1><use href=#g193 /></svg></span></div>
<div class="a" style="left:694px;top:380px;width:291px;height:20px;background:#fff;border-top:2px solid #7a7a7a;border-left:2px solid #7a7a7a;border-right:1px solid #ddd;border-bottom:1px solid #ddd;font-size:14px;line-height:17px;padding-left:2px"><span class="c"><b class="tx">病人治疗卡</b><svg class=g width=14 height=1><use href=#g19c /></svg><svg class=g width=14 height=1><use href=#g19d /></svg><svg class=g width=14 height=1><use href=#g19e /></svg><svg class=g width=14 height=1><use href=#g19f /></svg><svg class=g width=14 height=1><use href=#g1a0 /></svg></span></div>
<div class="a" style="left:966px;top:382px;width:18px;height:17px;background:#f5f1f5;border-right:1px solid #555;border-bottom:1px solid #555;border-top:1px solid #fff;border-left:1px solid #fff"></div>
<svg class="a" style="left:971px;top:389px;overflow:visible" width="8" height="5" viewBox="0 0 8 5"><path d="M0 0 L8 0 L4 4.5Z" fill="#111"/></svg>
<div class="a" style="left:694px;top:410px;width:291px;height:31px;border:1px solid #a8a8a8;border-right-color:#fff;border-bottom-color:#fff;box-shadow:inset -1px -1px 0 #a8a8a8, 1px 1px 0 #fff"></div>
<svg class="a" style="left:701px;top:419px;overflow:visible" width="11" height="11" viewBox="0 0 11 11"><circle cx="5.5" cy="5.5" r="5" fill="#fff" stroke="#a0a0a0"/><path d="M1.5 8.5 A5 5 0 0 1 8.5 1.5" fill="none" stroke="#707070"/></svg>
<div class="a" style="left:719px;top:415px;width:200px;height:20px;color:#000;font-size:14px;line-height:20px"><span class="c"><b class="tx">全病区</b><svg class=g width=14 height=1><use href=#g1a1 /></svg><svg class=g width=14 height=1><use href=#g19c /></svg><svg class=g width=14 height=1><use href=#g1a2 /></svg></span></div>
<svg class="a" style="left:789px;top:419px;overflow:visible" width="11" height="11" viewBox="0 0 11 11"><circle cx="5.5" cy="5.5" r="5" fill="#fff" stroke="#a0a0a0"/><path d="M1.5 8.5 A5 5 0 0 1 8.5 1.5" fill="none" stroke="#707070"/><circle cx="5.5" cy="5.5" r="2" fill="#111"/></svg>
<div class="a" style="left:806px;top:415px;width:200px;height:20px;color:#000;font-size:14px;line-height:20px"><span class="c"><b class="tx">选中病人</b><svg class=g width=14 height=1><use href=#g1a3 /></svg><svg class=g width=14 height=1><use href=#g1a4 /></svg><svg class=g width=14 height=1><use href=#g19c /></svg><svg class=g width=14 height=1><use href=#g19d /></svg></span></div>
<div class="a" style="left:805px;top:416px;width:63px;height:19px;border:1px dotted #444"></div>
<svg class="a" style="left:883px;top:419px;overflow:visible" width="11" height="11" viewBox="0 0 11 11"><circle cx="5.5" cy="5.5" r="5" fill="#fff" stroke="#a0a0a0"/><path d="M1.5 8.5 A5 5 0 0 1 8.5 1.5" fill="none" stroke="#707070"/></svg>
<div class="a" style="left:901px;top:415px;width:200px;height:20px;color:#000;font-size:14px;line-height:20px"><span class="c"><b class="tx">选中医嘱</b><svg class=g width=14 height=1><use href=#g1a3 /></svg><svg class=g width=14 height=1><use href=#g1a4 /></svg><svg class=g width=14 height=1><use href=#g1a5 /></svg><svg class=g width=14 height=1><use href=#g1a6 /></svg></span></div>
<div class="a" style="left:777px;top:402px;width:98px;height:38px;border:3px solid #ee1c1c;border-radius:4px"></div>
<div class="a" style="left:694px;top:449px;width:179px;height:110px;border:1px solid #a8a8a8;border-right-color:#fff;border-bottom-color:#fff;box-shadow:inset -1px -1px 0 #a8a8a8, 1px 1px 0 #fff"></div>
<svg class="a" style="left:707px;top:459px;overflow:visible" width="11" height="11" viewBox="0 0 11 11"><circle cx="5.5" cy="5.5" r="5" fill="#fff" stroke="#a0a0a0"/><path d="M1.5 8.5 A5 5 0 0 1 8.5 1.5" fill="none" stroke="#707070"/><circle cx="5.5" cy="5.5" r="2" fill="#111"/></svg>
<div class="a" style="left:725px;top:455px;width:200px;height:20px;color:#000;font-size:13px;line-height:20px"><span class="c"><b class="tx">今日所有医嘱执行单</b><svg class=g width=13 height=1><use href=#gfd /></svg><svg class=g width=13 height=1><use href=#gfa /></svg><svg class=g width=13 height=1><use href=#g1a7 /></svg><svg class=g width=13 height=1><use href=#g1a8 /></svg><svg class=g width=13 height=1><use href=#g46 /></svg><svg class=g width=13 height=1><use href=#g47 /></svg><svg class=g width=13 height=1><use href=#g1a9 /></svg><svg class=g width=13 height=1><use href=#g1aa /></svg><svg class=g width=13 height=1><use href=#g107 /></svg></span></div>
<svg class="a" style="left:707px;top:484px;overflow:visible" width="11" height="11" viewBox="0 0 11 11"><circle cx="5.5" cy="5.5" r="5" fill="#fff" stroke="#a0a0a0"/><path d="M1.5 8.5 A5 5 0 0 1 8.5 1.5" fill="none" stroke="#707070"/></svg>
<div class="a" style="left:725px;top:480px;width:200px;height:20px;color:#000;font-size:13px;line-height:20px"><span class="c"><b class="tx">明日所有医嘱执行单</b><svg class=g width=13 height=1><use href=#g1ab /></svg><svg class=g width=13 height=1><use href=#gfa /></svg><svg class=g width=13 height=1><use href=#g1a7 /></svg><svg class=g width=13 height=1><use href=#g1a8 /></svg><svg class=g width=13 height=1><use href=#g46 /></svg><svg class=g width=13 height=1><use href=#g47 /></svg><svg class=g width=13 height=1><use href=#g1a9 /></svg><svg class=g width=13 height=1><use href=#g1aa /></svg><svg class=g width=13 height=1><use href=#g107 /></svg></span></div>
<svg class="a" style="left:707px;top:510px;overflow:visible" width="11" height="11" viewBox="0 0 11 11"><circle cx="5.5" cy="5.5" r="5" fill="#fff" stroke="#a0a0a0"/><path d="M1.5 8.5 A5 5 0 0 1 8.5 1.5" fill="none" stroke="#707070"/></svg>
<div class="a" style="left:725px;top:506px;width:200px;height:20px;color:#000;font-size:13px;line-height:20px"><span class="c"><b class="tx">今日新开医嘱执行单</b><svg class=g width=13 height=1><use href=#gfd /></svg><svg class=g width=13 height=1><use href=#gfa /></svg><svg class=g width=13 height=1><use href=#g1ac /></svg><svg class=g width=13 height=1><use href=#g1ad /></svg><svg class=g width=13 height=1><use href=#g46 /></svg><svg class=g width=13 height=1><use href=#g47 /></svg><svg class=g width=13 height=1><use href=#g1a9 /></svg><svg class=g width=13 height=1><use href=#g1aa /></svg><svg class=g width=13 height=1><use href=#g107 /></svg></span></div>
<svg class="a" style="left:707px;top:535px;overflow:visible" width="11" height="11" viewBox="0 0 11 11"><circle cx="5.5" cy="5.5" r="5" fill="#fff" stroke="#a0a0a0"/><path d="M1.5 8.5 A5 5 0 0 1 8.5 1.5" fill="none" stroke="#707070"/></svg>
<div class="a" style="left:725px;top:531px;width:200px;height:20px;color:#000;font-size:13px;line-height:20px"><span class="c"><b class="tx">昨日所有医嘱执行单</b><svg class=g width=13 height=1><use href=#g1ae /></svg><svg class=g width=13 height=1><use href=#gfa /></svg><svg class=g width=13 height=1><use href=#g1a7 /></svg><svg class=g width=13 height=1><use href=#g1a8 /></svg><svg class=g width=13 height=1><use href=#g46 /></svg><svg class=g width=13 height=1><use href=#g47 /></svg><svg class=g width=13 height=1><use href=#g1a9 /></svg><svg class=g width=13 height=1><use href=#g1aa /></svg><svg class=g width=13 height=1><use href=#g107 /></svg></span></div>
<div class="a" style="left:882px;top:449px;width:103px;height:110px;border:1px solid #a8a8a8;border-right-color:#fff;border-bottom-color:#fff;box-shadow:inset -1px -1px 0 #a8a8a8, 1px 1px 0 #fff"></div>
<svg class="a" style="left:890px;top:459px;overflow:visible" width="12" height="12" viewBox="0 0 12 12"><rect x="0.5" y="0.5" width="11" height="11" fill="#fff" stroke="#707070"/><path d="M2.5 5.5 L5 8.5 L9.5 3" fill="none" stroke="#111" stroke-width="1.6"/></svg>
<div class="a" style="left:909px;top:455px;width:200px;height:20px;color:#000;font-size:14px;line-height:20px"><span class="c"><b class="tx">未打印</b><svg class=g width=14 height=1><use href=#g1af /></svg><svg class=g width=14 height=1><use href=#g18f /></svg><svg class=g width=14 height=1><use href=#g190 /></svg></span></div>
<svg class="a" style="left:890px;top:483px;overflow:visible" width="12" height="12" viewBox="0 0 12 12"><rect x="0.5" y="0.5" width="11" height="11" fill="#fff" stroke="#707070"/></svg>
<div class="a" style="left:909px;top:479px;width:200px;height:20px;color:#000;font-size:14px;line-height:20px"><span class="c"><b class="tx">已打印</b><svg class=g width=14 height=1><use href=#g1b0 /></svg><svg class=g width=14 height=1><use href=#g18f /></svg><svg class=g width=14 height=1><use href=#g190 /></svg></span></div>
<svg class="a" style="left:890px;top:508px;overflow:visible" width="12" height="12" viewBox="0 0 12 12"><rect x="0.5" y="0.5" width="11" height="11" fill="#fff" stroke="#707070"/><path d="M2.5 5.5 L5 8.5 L9.5 3" fill="none" stroke="#111" stroke-width="1.6"/></svg>
<div class="a" style="left:909px;top:504px;width:200px;height:20px;color:#000;font-size:14px;line-height:20px"><span class="c"><b class="tx">长期医嘱</b><svg class=g width=14 height=1><use href=#g1b1 /></svg><svg class=g width=14 height=1><use href=#g1b2 /></svg><svg class=g width=14 height=1><use href=#g1a5 /></svg><svg class=g width=14 height=1><use href=#g1a6 /></svg></span></div>
<svg class="a" style="left:890px;top:533px;overflow:visible" width="12" height="12" viewBox="0 0 12 12"><rect x="0.5" y="0.5" width="11" height="11" fill="#fff" stroke="#707070"/><path d="M2.5 5.5 L5 8.5 L9.5 3" fill="none" stroke="#111" stroke-width="1.6"/></svg>
<div class="a" style="left:909px;top:529px;width:200px;height:20px;color:#000;font-size:14px;line-height:20px"><span class="c"><b class="tx">临时医嘱</b><svg class=g width=14 height=1><use href=#g1b3 /></svg><svg class=g width=14 height=1><use href=#g19a /></svg><svg class=g width=14 height=1><use href=#g1a5 /></svg><svg class=g width=14 height=1><use href=#g1a6 /></svg></span></div>
<div class="a" style="left:694px;top:569px;width:107px;height:22px;background:#f5f1f5;border-top:2px solid #7a7a7a;border-left:2px solid #7a7a7a;border-right:1px solid #fff;border-bottom:1px solid #fff;font-size:14px;line-height:19px;padding-left:2px;color:#8a8a8a"><span class="m" style="font-size:14px;letter-spacing:-0.4px">&nbsp;8:00:00</span></div>
<div class="a" style="left:782px;top:571px;width:17px;height:9px;background:#f5f1f5;border:1px solid #c8c8c8"></div>
<div class="a" style="left:782px;top:580px;width:17px;height:9px;background:#f5f1f5;border:1px solid #c8c8c8"></div>
<svg class="a" style="left:788px;top:573px;overflow:visible" width="5" height="3" viewBox="0 0 5 3"><path d="M0 3 L2.5 0 L5 3Z" fill="#888"/></svg>
<svg class="a" style="left:788px;top:583px;overflow:visible" width="5" height="3" viewBox="0 0 5 3"><path d="M0 0 L2.5 3 L5 0Z" fill="#888"/></svg>
<div class="a" style="left:814px;top:570px;width:200px;height:20px;color:#1414d8;font-size:14px;line-height:20px"><span class="c"><b class="tx">到</b><svg class=g width=14 height=1><use href=#g1b4 /></svg></span></div>
<div class="a" style="left:836px;top:569px;width:109px;height:22px;background:#f5f1f5;border-top:2px solid #7a7a7a;border-left:2px solid #7a7a7a;border-right:1px solid #fff;border-bottom:1px solid #fff;font-size:14px;line-height:19px;padding-left:2px;color:#8a8a8a"><span class="m" style="font-size:14px;letter-spacing:-0.4px">16:00:00</span></div>
<div class="a" style="left:926px;top:571px;width:17px;height:9px;background:#f5f1f5;border:1px solid #c8c8c8"></div>
<div class="a" style="left:926px;top:580px;width:17px;height:9px;background:#f5f1f5;border:1px solid #c8c8c8"></div>
<svg class="a" style="left:932px;top:573px;overflow:visible" width="5" height="3" viewBox="0 0 5 3"><path d="M0 3 L2.5 0 L5 3Z" fill="#888"/></svg>
<svg class="a" style="left:932px;top:583px;overflow:visible" width="5" height="3" viewBox="0 0 5 3"><path d="M0 0 L2.5 3 L5 0Z" fill="#888"/></svg>
<div class="a" style="left:834px;top:635px;width:79px;height:26px;background:#f5f1f5;border-top:1px solid #fff;border-left:1px solid #fff;border-right:2px solid #6a6a6a;border-bottom:2px solid #6a6a6a;box-shadow:0 0 0 1px #a0a0a0;font-size:14px;line-height:25px;padding-left:25px"><span class="c"><b class="tx">确定</b><svg class=g width=14 height=1><use href=#g1b5 /></svg><svg class=g width=14 height=1><use href=#g1b6 /></svg></span>(<u>Q</u>)</div>
<svg class="a" style="left:839px;top:640px;overflow:visible" width="18" height="16" viewBox="0 0 18 16"><path d="M1 9 L6 14 L16 2" fill="none" stroke="#102a80" stroke-width="4"/><path d="M1 9 L6 14 L16 2" fill="none" stroke="#14a014" stroke-width="2.4"/></svg>
<div class="a" style="left:931px;top:635px;width:80px;height:26px;background:#f5f1f5;border-top:1px solid #fff;border-left:1px solid #fff;border-right:2px solid #6a6a6a;border-bottom:2px solid #6a6a6a;box-shadow:0 0 0 1px #a0a0a0;font-size:14px;line-height:25px;padding-left:25px"><span class="c"><b class="tx">取消</b><svg class=g width=14 height=1><use href=#g1b7 /></svg><svg class=g width=14 height=1><use href=#g1b8 /></svg></span>(<u>C</u>)</div>
<svg class="a" style="left:936px;top:640px;overflow:visible" width="18" height="16" viewBox="0 0 18 16"><path d="M3 2 L14 14 M14 2 L3 14" stroke="#200000" stroke-width="4.2"/><path d="M3 2 L14 14 M14 2 L3 14" stroke="#a00000" stroke-width="3"/></svg>
<div class="a" style="left:860px;top:585px;width:380px;height:36px;color:#ff1a1a;font-size:26px;line-height:36px"><span class="c"><b class="tx">点选中病人时，弹窗让选择患者</b><svg class=g width=26 height=1><use href=#g1b9 /></svg><svg class=g width=26 height=1><use href=#g1ba /></svg><svg class=g width=26 height=1><use href=#g1bb /></svg><svg class=g width=26 height=1><use href=#g1bc /></svg><svg class=g width=26 height=1><use href=#g1bd /></svg><svg class=g width=26 height=1><use href=#g1be /></svg><svg class=g width=26 height=1><use href=#g1bf /></svg><svg class=g width=26 height=1><use href=#g1c0 /></svg><svg class=g width=26 height=1><use href=#g1c1 /></svg><svg class=g width=26 height=1><use href=#g1c2 /></svg><svg class=g width=26 height=1><use href=#g1ba /></svg><svg class=g width=26 height=1><use href=#g1c3 /></svg><svg class=g width=26 height=1><use href=#g1c4 /></svg><svg class=g width=26 height=1><use href=#g1c5 /></svg></span></div></body></html>
